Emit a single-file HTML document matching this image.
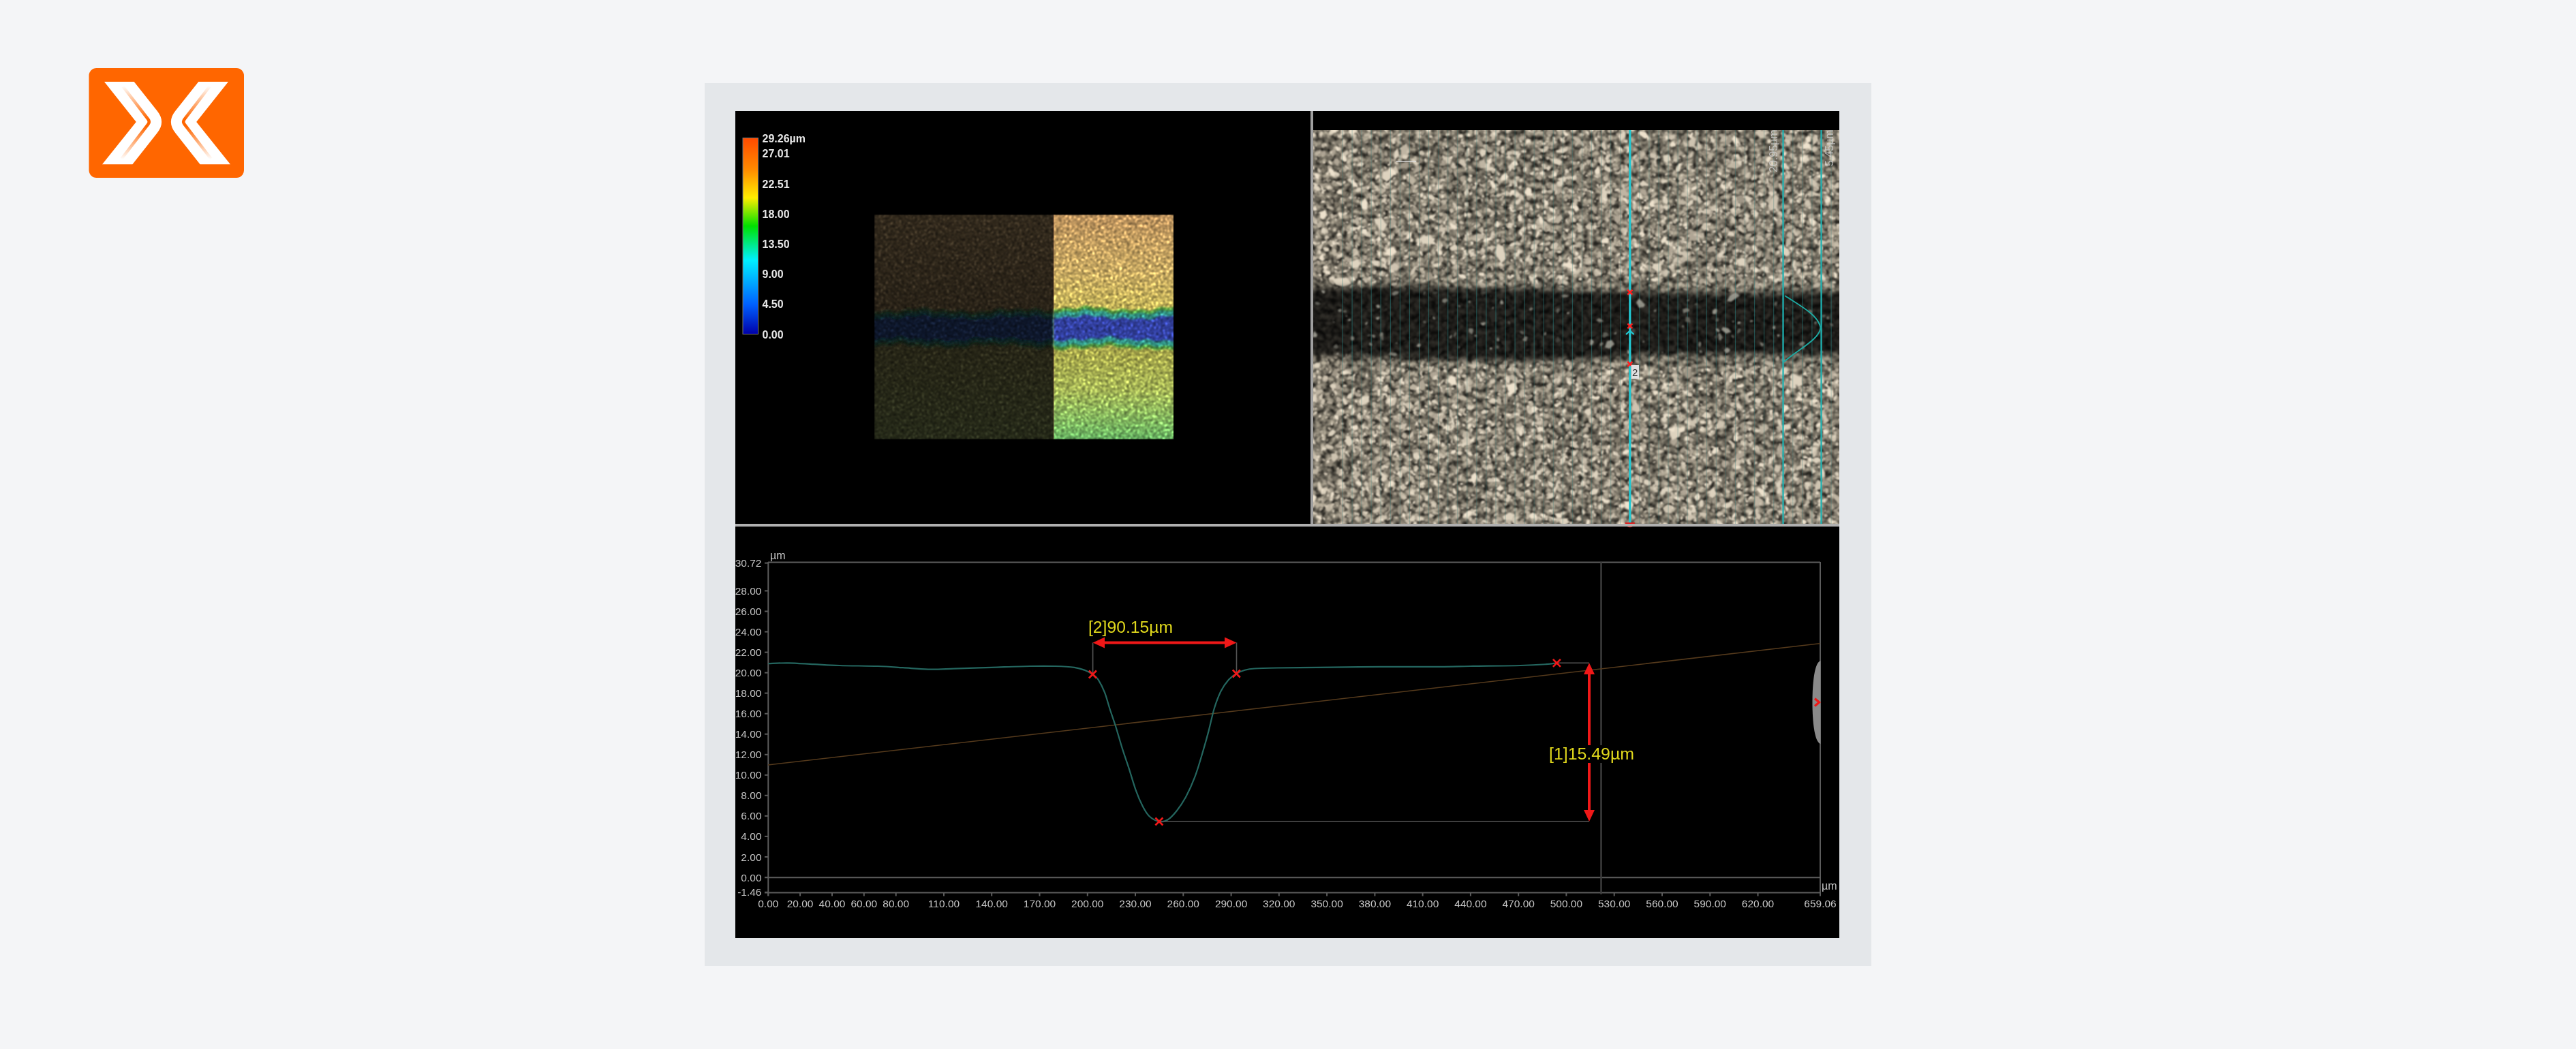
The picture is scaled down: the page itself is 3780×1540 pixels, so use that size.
<!DOCTYPE html>
<html><head><meta charset="utf-8"><title>profile</title>
<style>
html,body{margin:0;padding:0;background:#f4f5f7;width:3780px;height:1540px;overflow:hidden}
svg{display:block}
</style></head><body>
<svg width="3780" height="1540" viewBox="0 0 3780 1540" style="font-family:'Liberation Sans', sans-serif;will-change:transform">
<defs>

<linearGradient id="cbar" x1="0" y1="0" x2="0" y2="1">
<stop offset="0" stop-color="#ff4a00"/>
<stop offset="0.16" stop-color="#ff8a00"/>
<stop offset="0.305" stop-color="#ffee00"/>
<stop offset="0.449" stop-color="#00e000"/>
<stop offset="0.623" stop-color="#00f0ff"/>
<stop offset="0.849" stop-color="#0060ff"/>
<stop offset="1" stop-color="#0000a8"/>
</linearGradient>
<linearGradient id="stripe" gradientUnits="userSpaceOnUse" x1="0" y1="126" x2="0" y2="234">
<stop offset="0" stop-color="#ff6600" stop-opacity="0"/>
<stop offset="0.45" stop-color="#ff6600" stop-opacity="1"/>
<stop offset="0.55" stop-color="#ff6600" stop-opacity="1"/>
<stop offset="1" stop-color="#ff6600" stop-opacity="0"/>
</linearGradient>
<linearGradient id="hmL" gradientUnits="userSpaceOnUse" x1="0" y1="315" x2="0" y2="645">
<stop offset="0" stop-color="rgb(50,41,28)"/>
<stop offset="0.42" stop-color="rgb(41,34,23)"/>
<stop offset="0.62" stop-color="rgb(38,37,22)"/>
<stop offset="1" stop-color="rgb(37,41,24)"/>
</linearGradient>
<linearGradient id="hmR" gradientUnits="userSpaceOnUse" x1="0" y1="315" x2="0" y2="645">
<stop offset="0" stop-color="rgb(192,149,95)"/>
<stop offset="0.25" stop-color="rgb(203,172,100)"/>
<stop offset="0.42" stop-color="rgb(199,183,90)"/>
<stop offset="0.62" stop-color="rgb(167,167,75)"/>
<stop offset="0.78" stop-color="rgb(169,185,88)"/>
<stop offset="1" stop-color="rgb(106,183,100)"/>
</linearGradient>
<linearGradient id="band" gradientUnits="userSpaceOnUse" x1="0" y1="400" x2="0" y2="550">
<stop offset="0" stop-color="#000" stop-opacity="0"/>
<stop offset="0.10" stop-color="#000" stop-opacity="0.25"/>
<stop offset="0.18" stop-color="#000" stop-opacity="0.75"/>
<stop offset="0.82" stop-color="#000" stop-opacity="0.75"/>
<stop offset="0.92" stop-color="#000" stop-opacity="0.25"/>
<stop offset="1" stop-color="#000" stop-opacity="0"/>
</linearGradient>
<linearGradient id="bandline" gradientUnits="userSpaceOnUse" x1="0" y1="405" x2="0" y2="545">
<stop offset="0" stop-color="#2a8a8a" stop-opacity="0"/>
<stop offset="0.2" stop-color="#2a8a8a" stop-opacity="0.35"/>
<stop offset="0.8" stop-color="#2a8a8a" stop-opacity="0.35"/>
<stop offset="1" stop-color="#2a8a8a" stop-opacity="0"/>
</linearGradient>
<filter id="grain" filterUnits="userSpaceOnUse" x="1927" y="191" width="772" height="578" color-interpolation-filters="sRGB">
<feTurbulence type="fractalNoise" baseFrequency="0.13" numOctaves="2" seed="11" result="n"/>
<feColorMatrix in="n" type="matrix" values="2.0 0 0 0 -0.50  2.0 0 0 0 -0.50  2.0 0 0 0 -0.50  0 0 0 0 1" result="g"/>
<feGaussianBlur in="g" stdDeviation="1.1" result="gb"/>
<feColorMatrix in="gb" type="matrix" values="0.58 0 0 0 0.145  0 0.55 0 0 0.138  0 0 0.49 0 0.12  0 0 0 0 1" result="c"/>
<feTurbulence type="fractalNoise" baseFrequency="0.015" numOctaves="2" seed="4" result="lo"/>
<feColorMatrix in="lo" type="matrix" values="0.6 0 0 0 0.72  0.6 0 0 0 0.72  0.6 0 0 0 0.72  0 0 0 0 1" result="lom"/>
<feComposite in="c" in2="lom" operator="arithmetic" k1="1" k2="0" k3="0" k4="0"/>
</filter>
<filter id="pblur" filterUnits="userSpaceOnUse" x="1927" y="191" width="772" height="578">
<feGaussianBlur stdDeviation="0.85"/>
</filter>
<filter id="hgrain" filterUnits="userSpaceOnUse" x="1283" y="315" width="440" height="330" color-interpolation-filters="sRGB">
<feTurbulence type="fractalNoise" baseFrequency="0.26" numOctaves="3" seed="5" result="n"/>
<feColorMatrix in="n" type="matrix" values="1.1 0 0 0 0.2  1.1 0 0 0 0.2  1.1 0 0 0 0.2  0 0 0 0 1" result="g"/>
<feGaussianBlur in="g" stdDeviation="0.9" result="gb"/>
<feComposite in="SourceGraphic" in2="gb" operator="arithmetic" k1="1.2" k2="0" k3="0" k4="0" result="base"/>
<feTurbulence type="fractalNoise" baseFrequency="0.3" numOctaves="2" seed="9" result="n2"/>
<feColorMatrix in="n2" type="matrix" values="6 0 0 0 -3.5  6 0 0 0 -3.5  6 0 0 0 -3.5  0 0 0 0 1" result="sp"/>
<feGaussianBlur in="sp" stdDeviation="0.9" result="spb"/>
<feComposite in="SourceGraphic" in2="spb" operator="arithmetic" k1="0.9" k2="0" k3="0.05" k4="0" result="spc"/>
<feComposite in="base" in2="spc" operator="arithmetic" k1="0" k2="1" k3="1" k4="0"/>
</filter>
<filter id="bblur" x="-5%" y="-50%" width="110%" height="200%">
<feGaussianBlur stdDeviation="4.5"/>
</filter>
<filter id="hblur" x="-5%" y="-50%" width="110%" height="200%">
<feGaussianBlur stdDeviation="1.6"/>
</filter>
</defs>

<rect x="130.5" y="100" width="227.5" height="161" rx="11" ry="11" fill="#ff6600"/>
<g><path d="M153,120 L196.7,120 L230.8,163 Q243.5,179 230.8,195 L194.4,241.2 L150,241.2 L199.8,179 Z" fill="#ffffff"/><path d="M180.5,127 L217.4,175.05 A6,6 0 0 1 217.4,182.35 L178.5,233" fill="none" stroke="url(#stripe)" stroke-width="4.5"/></g>
<g transform="translate(488,0) scale(-1,1)"><path d="M153,120 L196.7,120 L230.8,163 Q243.5,179 230.8,195 L194.4,241.2 L150,241.2 L199.8,179 Z" fill="#ffffff"/><path d="M180.5,127 L217.4,175.05 A6,6 0 0 1 217.4,182.35 L178.5,233" fill="none" stroke="url(#stripe)" stroke-width="4.5"/></g>
<rect x="1034" y="122" width="1712" height="1296" fill="#e4e7ea"/>
<rect x="1079" y="163" width="1620" height="1214" fill="#000"/>
<clipPath id="blkclip"><rect x="1079" y="163" width="1620" height="1214"/></clipPath>
<clipPath id="hmclip"><rect x="1283" y="315" width="439" height="330"/></clipPath>
<g filter="url(#hgrain)"><g clip-path="url(#hmclip)">
<rect x="1283" y="315" width="263" height="330" fill="url(#hmL)"/>
<rect x="1546" y="315" width="176" height="330" fill="url(#hmR)"/>
<path d="M1270.0,457.2 L1274.0,456.2 L1278.0,456.1 L1282.0,456.9 L1286.0,457.8 L1290.0,457.9 L1294.0,456.8 L1298.0,455.3 L1302.0,454.5 L1306.0,455.0 L1310.0,456.4 L1314.0,457.6 L1318.0,457.6 L1322.0,456.2 L1326.0,454.4 L1330.0,453.1 L1334.0,452.9 L1338.0,453.5 L1342.0,453.9 L1346.0,453.3 L1350.0,451.9 L1354.0,450.6 L1358.0,450.4 L1362.0,451.7 L1366.0,453.7 L1370.0,455.2 L1374.0,455.6 L1378.0,454.8 L1382.0,453.9 L1386.0,453.9 L1390.0,454.9 L1394.0,456.3 L1398.0,456.9 L1402.0,456.5 L1406.0,455.3 L1410.0,454.4 L1414.0,454.9 L1418.0,456.5 L1422.0,458.3 L1426.0,459.3 L1430.0,458.9 L1434.0,457.6 L1438.0,456.5 L1442.0,456.2 L1446.0,456.8 L1450.0,457.3 L1454.0,456.7 L1458.0,455.0 L1462.0,453.0 L1466.0,451.7 L1470.0,451.9 L1474.0,453.2 L1478.0,454.4 L1482.0,454.7 L1486.0,453.9 L1490.0,452.7 L1494.0,452.1 L1498.0,452.7 L1502.0,453.9 L1506.0,454.6 L1510.0,454.3 L1514.0,453.0 L1518.0,451.8 L1522.0,451.7 L1526.0,453.0 L1530.0,455.1 L1534.0,456.7 L1538.0,457.3 L1542.0,456.8 L1546.0,456.2 L1546.0,509.5 L1542.0,508.8 L1538.0,509.3 L1534.0,510.9 L1530.0,512.8 L1526.0,513.7 L1522.0,513.2 L1518.0,511.7 L1514.0,510.2 L1510.0,509.7 L1506.0,510.0 L1502.0,510.5 L1498.0,510.2 L1494.0,508.8 L1490.0,507.0 L1486.0,505.9 L1482.0,506.1 L1478.0,507.5 L1474.0,508.8 L1470.0,509.2 L1466.0,508.3 L1462.0,506.9 L1458.0,506.0 L1454.0,506.2 L1450.0,507.3 L1446.0,508.1 L1442.0,508.0 L1438.0,507.0 L1434.0,505.9 L1430.0,505.9 L1426.0,507.3 L1422.0,509.5 L1418.0,511.4 L1414.0,511.9 L1410.0,511.4 L1406.0,510.5 L1402.0,510.4 L1398.0,511.2 L1394.0,512.3 L1390.0,512.7 L1386.0,511.8 L1382.0,510.1 L1378.0,508.7 L1374.0,508.4 L1370.0,509.4 L1366.0,510.8 L1362.0,511.5 L1358.0,510.9 L1354.0,509.5 L1350.0,508.2 L1346.0,507.8 L1342.0,508.4 L1338.0,509.0 L1334.0,508.6 L1330.0,507.2 L1326.0,505.3 L1322.0,504.1 L1318.0,504.5 L1314.0,506.0 L1310.0,507.7 L1306.0,508.5 L1302.0,508.3 L1298.0,507.6 L1294.0,507.5 L1290.0,508.4 L1286.0,510.0 L1282.0,511.1 L1278.0,511.1 L1274.0,509.9 L1270.0,508.6 Z" fill="rgb(22,34,22)" filter="url(#hblur)"/>
<path d="M1270.0,462.2 L1274.0,461.2 L1278.0,461.1 L1282.0,461.9 L1286.0,462.8 L1290.0,462.9 L1294.0,461.8 L1298.0,460.3 L1302.0,459.5 L1306.0,460.0 L1310.0,461.4 L1314.0,462.6 L1318.0,462.6 L1322.0,461.2 L1326.0,459.4 L1330.0,458.1 L1334.0,457.9 L1338.0,458.5 L1342.0,458.9 L1346.0,458.3 L1350.0,456.9 L1354.0,455.6 L1358.0,455.4 L1362.0,456.7 L1366.0,458.7 L1370.0,460.2 L1374.0,460.6 L1378.0,459.8 L1382.0,458.9 L1386.0,458.9 L1390.0,459.9 L1394.0,461.3 L1398.0,461.9 L1402.0,461.5 L1406.0,460.3 L1410.0,459.4 L1414.0,459.9 L1418.0,461.5 L1422.0,463.3 L1426.0,464.3 L1430.0,463.9 L1434.0,462.6 L1438.0,461.5 L1442.0,461.2 L1446.0,461.8 L1450.0,462.3 L1454.0,461.7 L1458.0,460.0 L1462.0,458.0 L1466.0,456.7 L1470.0,456.9 L1474.0,458.2 L1478.0,459.4 L1482.0,459.7 L1486.0,458.9 L1490.0,457.7 L1494.0,457.1 L1498.0,457.7 L1502.0,458.9 L1506.0,459.6 L1510.0,459.3 L1514.0,458.0 L1518.0,456.8 L1522.0,456.7 L1526.0,458.0 L1530.0,460.1 L1534.0,461.7 L1538.0,462.3 L1542.0,461.8 L1546.0,461.2 L1546.0,504.5 L1542.0,503.8 L1538.0,504.3 L1534.0,505.9 L1530.0,507.8 L1526.0,508.7 L1522.0,508.2 L1518.0,506.7 L1514.0,505.2 L1510.0,504.7 L1506.0,505.0 L1502.0,505.5 L1498.0,505.2 L1494.0,503.8 L1490.0,502.0 L1486.0,500.9 L1482.0,501.1 L1478.0,502.5 L1474.0,503.8 L1470.0,504.2 L1466.0,503.3 L1462.0,501.9 L1458.0,501.0 L1454.0,501.2 L1450.0,502.3 L1446.0,503.1 L1442.0,503.0 L1438.0,502.0 L1434.0,500.9 L1430.0,500.9 L1426.0,502.3 L1422.0,504.5 L1418.0,506.4 L1414.0,506.9 L1410.0,506.4 L1406.0,505.5 L1402.0,505.4 L1398.0,506.2 L1394.0,507.3 L1390.0,507.7 L1386.0,506.8 L1382.0,505.1 L1378.0,503.7 L1374.0,503.4 L1370.0,504.4 L1366.0,505.8 L1362.0,506.5 L1358.0,505.9 L1354.0,504.5 L1350.0,503.2 L1346.0,502.8 L1342.0,503.4 L1338.0,504.0 L1334.0,503.6 L1330.0,502.2 L1326.0,500.3 L1322.0,499.1 L1318.0,499.5 L1314.0,501.0 L1310.0,502.7 L1306.0,503.5 L1302.0,503.3 L1298.0,502.6 L1294.0,502.5 L1290.0,503.4 L1286.0,505.0 L1282.0,506.1 L1278.0,506.1 L1274.0,504.9 L1270.0,503.6 Z" fill="rgb(14,36,32)" filter="url(#hblur)"/>
<path d="M1270.0,468.2 L1274.0,467.2 L1278.0,467.1 L1282.0,467.9 L1286.0,468.8 L1290.0,468.9 L1294.0,467.8 L1298.0,466.3 L1302.0,465.5 L1306.0,466.0 L1310.0,467.4 L1314.0,468.6 L1318.0,468.6 L1322.0,467.2 L1326.0,465.4 L1330.0,464.1 L1334.0,463.9 L1338.0,464.5 L1342.0,464.9 L1346.0,464.3 L1350.0,462.9 L1354.0,461.6 L1358.0,461.4 L1362.0,462.7 L1366.0,464.7 L1370.0,466.2 L1374.0,466.6 L1378.0,465.8 L1382.0,464.9 L1386.0,464.9 L1390.0,465.9 L1394.0,467.3 L1398.0,467.9 L1402.0,467.5 L1406.0,466.3 L1410.0,465.4 L1414.0,465.9 L1418.0,467.5 L1422.0,469.3 L1426.0,470.3 L1430.0,469.9 L1434.0,468.6 L1438.0,467.5 L1442.0,467.2 L1446.0,467.8 L1450.0,468.3 L1454.0,467.7 L1458.0,466.0 L1462.0,464.0 L1466.0,462.7 L1470.0,462.9 L1474.0,464.2 L1478.0,465.4 L1482.0,465.7 L1486.0,464.9 L1490.0,463.7 L1494.0,463.1 L1498.0,463.7 L1502.0,464.9 L1506.0,465.6 L1510.0,465.3 L1514.0,464.0 L1518.0,462.8 L1522.0,462.7 L1526.0,464.0 L1530.0,466.1 L1534.0,467.7 L1538.0,468.3 L1542.0,467.8 L1546.0,467.2 L1546.0,498.5 L1542.0,497.8 L1538.0,498.3 L1534.0,499.9 L1530.0,501.8 L1526.0,502.7 L1522.0,502.2 L1518.0,500.7 L1514.0,499.2 L1510.0,498.7 L1506.0,499.0 L1502.0,499.5 L1498.0,499.2 L1494.0,497.8 L1490.0,496.0 L1486.0,494.9 L1482.0,495.1 L1478.0,496.5 L1474.0,497.8 L1470.0,498.2 L1466.0,497.3 L1462.0,495.9 L1458.0,495.0 L1454.0,495.2 L1450.0,496.3 L1446.0,497.1 L1442.0,497.0 L1438.0,496.0 L1434.0,494.9 L1430.0,494.9 L1426.0,496.3 L1422.0,498.5 L1418.0,500.4 L1414.0,500.9 L1410.0,500.4 L1406.0,499.5 L1402.0,499.4 L1398.0,500.2 L1394.0,501.3 L1390.0,501.7 L1386.0,500.8 L1382.0,499.1 L1378.0,497.7 L1374.0,497.4 L1370.0,498.4 L1366.0,499.8 L1362.0,500.5 L1358.0,499.9 L1354.0,498.5 L1350.0,497.2 L1346.0,496.8 L1342.0,497.4 L1338.0,498.0 L1334.0,497.6 L1330.0,496.2 L1326.0,494.3 L1322.0,493.1 L1318.0,493.5 L1314.0,495.0 L1310.0,496.7 L1306.0,497.5 L1302.0,497.3 L1298.0,496.6 L1294.0,496.5 L1290.0,497.4 L1286.0,499.0 L1282.0,500.1 L1278.0,500.1 L1274.0,498.9 L1270.0,497.6 Z" fill="rgb(10,25,44)" filter="url(#hblur)"/>
<path d="M1546.0,453.6 L1550.0,454.4 L1554.0,454.2 L1558.1,453.1 L1562.1,451.8 L1566.1,451.4 L1570.1,452.0 L1574.1,453.1 L1578.2,453.4 L1582.2,452.4 L1586.2,450.5 L1590.2,448.8 L1594.3,448.4 L1598.3,449.4 L1602.3,450.9 L1606.3,451.9 L1610.3,451.9 L1614.4,451.3 L1618.4,451.1 L1622.4,452.1 L1626.4,453.9 L1630.4,455.6 L1634.5,456.2 L1638.5,455.3 L1642.5,453.8 L1646.5,452.9 L1650.6,453.2 L1654.6,454.4 L1658.6,455.7 L1662.6,455.9 L1666.6,455.1 L1670.7,454.0 L1674.7,453.7 L1678.7,454.5 L1682.7,455.8 L1686.7,456.5 L1690.8,455.8 L1694.8,453.8 L1698.8,451.7 L1702.8,450.5 L1706.9,450.6 L1710.9,451.4 L1714.9,451.8 L1718.9,451.2 L1722.9,450.0 L1727.0,449.1 L1731.0,449.5 L1735.0,451.0 L1735.0,508.5 L1731.0,510.5 L1727.0,512.7 L1722.9,513.9 L1718.9,513.7 L1714.9,512.7 L1710.9,512.2 L1706.9,512.6 L1702.8,513.7 L1698.8,514.5 L1694.8,514.2 L1690.8,512.8 L1686.7,511.1 L1682.7,510.5 L1678.7,511.1 L1674.7,512.6 L1670.7,513.7 L1666.6,513.5 L1662.6,512.2 L1658.6,510.7 L1654.6,509.9 L1650.6,510.2 L1646.5,510.8 L1642.5,510.8 L1638.5,509.7 L1634.5,507.8 L1630.4,506.3 L1626.4,506.2 L1622.4,507.6 L1618.4,509.4 L1614.4,510.5 L1610.3,510.5 L1606.3,509.7 L1602.3,509.3 L1598.3,509.9 L1594.3,511.4 L1590.2,512.7 L1586.2,512.9 L1582.2,512.0 L1578.2,510.6 L1574.1,510.0 L1570.1,510.7 L1566.1,512.5 L1562.1,514.1 L1558.1,514.7 L1554.0,514.0 L1550.0,513.0 L1546.0,512.6 Z" fill="rgb(80,150,60)" filter="url(#hblur)"/>
<path d="M1546.0,458.6 L1550.0,459.4 L1554.0,459.2 L1558.1,458.1 L1562.1,456.8 L1566.1,456.4 L1570.1,457.0 L1574.1,458.1 L1578.2,458.4 L1582.2,457.4 L1586.2,455.5 L1590.2,453.8 L1594.3,453.4 L1598.3,454.4 L1602.3,455.9 L1606.3,456.9 L1610.3,456.9 L1614.4,456.3 L1618.4,456.1 L1622.4,457.1 L1626.4,458.9 L1630.4,460.6 L1634.5,461.2 L1638.5,460.3 L1642.5,458.8 L1646.5,457.9 L1650.6,458.2 L1654.6,459.4 L1658.6,460.7 L1662.6,460.9 L1666.6,460.1 L1670.7,459.0 L1674.7,458.7 L1678.7,459.5 L1682.7,460.8 L1686.7,461.5 L1690.8,460.8 L1694.8,458.8 L1698.8,456.7 L1702.8,455.5 L1706.9,455.6 L1710.9,456.4 L1714.9,456.8 L1718.9,456.2 L1722.9,455.0 L1727.0,454.1 L1731.0,454.5 L1735.0,456.0 L1735.0,503.5 L1731.0,505.5 L1727.0,507.7 L1722.9,508.9 L1718.9,508.7 L1714.9,507.7 L1710.9,507.2 L1706.9,507.6 L1702.8,508.7 L1698.8,509.5 L1694.8,509.2 L1690.8,507.8 L1686.7,506.1 L1682.7,505.5 L1678.7,506.1 L1674.7,507.6 L1670.7,508.7 L1666.6,508.5 L1662.6,507.2 L1658.6,505.7 L1654.6,504.9 L1650.6,505.2 L1646.5,505.8 L1642.5,505.8 L1638.5,504.7 L1634.5,502.8 L1630.4,501.3 L1626.4,501.2 L1622.4,502.6 L1618.4,504.4 L1614.4,505.5 L1610.3,505.5 L1606.3,504.7 L1602.3,504.3 L1598.3,504.9 L1594.3,506.4 L1590.2,507.7 L1586.2,507.9 L1582.2,507.0 L1578.2,505.6 L1574.1,505.0 L1570.1,505.7 L1566.1,507.5 L1562.1,509.1 L1558.1,509.7 L1554.0,509.0 L1550.0,508.0 L1546.0,507.6 Z" fill="rgb(50,150,135)" filter="url(#hblur)"/>
<path d="M1546.0,466.6 L1550.0,467.4 L1554.0,467.2 L1558.1,466.1 L1562.1,464.8 L1566.1,464.4 L1570.1,465.0 L1574.1,466.1 L1578.2,466.4 L1582.2,465.4 L1586.2,463.5 L1590.2,461.8 L1594.3,461.4 L1598.3,462.4 L1602.3,463.9 L1606.3,464.9 L1610.3,464.9 L1614.4,464.3 L1618.4,464.1 L1622.4,465.1 L1626.4,466.9 L1630.4,468.6 L1634.5,469.2 L1638.5,468.3 L1642.5,466.8 L1646.5,465.9 L1650.6,466.2 L1654.6,467.4 L1658.6,468.7 L1662.6,468.9 L1666.6,468.1 L1670.7,467.0 L1674.7,466.7 L1678.7,467.5 L1682.7,468.8 L1686.7,469.5 L1690.8,468.8 L1694.8,466.8 L1698.8,464.7 L1702.8,463.5 L1706.9,463.6 L1710.9,464.4 L1714.9,464.8 L1718.9,464.2 L1722.9,463.0 L1727.0,462.1 L1731.0,462.5 L1735.0,464.0 L1735.0,495.5 L1731.0,497.5 L1727.0,499.7 L1722.9,500.9 L1718.9,500.7 L1714.9,499.7 L1710.9,499.2 L1706.9,499.6 L1702.8,500.7 L1698.8,501.5 L1694.8,501.2 L1690.8,499.8 L1686.7,498.1 L1682.7,497.5 L1678.7,498.1 L1674.7,499.6 L1670.7,500.7 L1666.6,500.5 L1662.6,499.2 L1658.6,497.7 L1654.6,496.9 L1650.6,497.2 L1646.5,497.8 L1642.5,497.8 L1638.5,496.7 L1634.5,494.8 L1630.4,493.3 L1626.4,493.2 L1622.4,494.6 L1618.4,496.4 L1614.4,497.5 L1610.3,497.5 L1606.3,496.7 L1602.3,496.3 L1598.3,496.9 L1594.3,498.4 L1590.2,499.7 L1586.2,499.9 L1582.2,499.0 L1578.2,497.6 L1574.1,497.0 L1570.1,497.7 L1566.1,499.5 L1562.1,501.1 L1558.1,501.7 L1554.0,501.0 L1550.0,500.0 L1546.0,499.6 Z" fill="rgb(48,64,160)" filter="url(#hblur)"/>
</g></g>
<line x1="1546.5" y1="315" x2="1546.5" y2="645" stroke="#c07050" stroke-opacity="0.35" stroke-width="1"/>
<rect x="1090" y="202.5" width="22.5" height="288" fill="url(#cbar)" stroke="#777" stroke-width="1"/>
<text x="1118.5" y="209.1" font-size="16" font-weight="bold" fill="#e8e8e8">29.26µm</text>
<text x="1118.5" y="231.3" font-size="16" font-weight="bold" fill="#e8e8e8">27.01</text>
<text x="1118.5" y="275.6" font-size="16" font-weight="bold" fill="#e8e8e8">22.51</text>
<text x="1118.5" y="319.8" font-size="16" font-weight="bold" fill="#e8e8e8">18.00</text>
<text x="1118.5" y="364.3" font-size="16" font-weight="bold" fill="#e8e8e8">13.50</text>
<text x="1118.5" y="407.8" font-size="16" font-weight="bold" fill="#e8e8e8">9.00</text>
<text x="1118.5" y="452.4" font-size="16" font-weight="bold" fill="#e8e8e8">4.50</text>
<text x="1118.5" y="496.8" font-size="16" font-weight="bold" fill="#e8e8e8">0.00</text>
<clipPath id="micclip"><rect x="1927" y="191" width="772" height="578"/></clipPath>
<rect x="1927" y="191" width="772" height="578" fill="#888" filter="url(#grain)"/>
<g clip-path="url(#micclip)"><g filter="url(#pblur)"><path fill="rgb(129,121,107)" d="M2030 293l-3 4l-3 1l-2 -3l4 -4zM2552 658l3 -1l4 1l-1 4l-3 0zM2612 663l-2 -1l-1 -2l2 -1l2 1zM2024 495l-5 0l-6 -6l5 -4l6 5zM2405 432l-4 -8l2 -6l5 -1l3 7zM1932 700l-1 -3l3 -3l4 1l-3 6zM1975 352l-4 2l-4 -3l1 -2l4 1zM1981 703l4 2l0 4l-2 1l-3 -3zM2194 207l-1 -4l3 -5l3 -1l-2 7zM2701 248l-2 2l-4 0l0 -1l4 -2zM2170 682l1 1l0 2l-1 0l-1 -1zM2186 291l0 -4l4 -4l3 1l-4 6zM2347 435l1 1l-1 2l-1 1l-1 -3zM2673 331l-5 6l-13 -2l2 -8l8 -3zM2308 646l3 2l0 4l-3 2l-3 -4zM1983 747l-3 0l-2 -1l1 -3l3 1zM2118 416l0 -2l3 -2l1 3l-2 1zM2101 653l-1 1l-2 0l0 -1l2 -1zM1958 297l3 0l4 4l-3 3l-3 0zM2401 462l-3 3l-2 -2l-1 -3l5 0zM2367 442l-2 0l0 -3l1 1l1 1zM2695 371l0 -3l3 -1l1 3l-2 2zM2374 686l3 5l1 3l-4 2l-3 -6zM2053 293l-3 -3l1 -4l4 0l0 4zM2196 742l1 -2l2 -2l2 2l-2 2zM1997 676l-2 -2l2 -4l4 2l-2 3zM2193 349l-1 4l-3 3l-1 -2l1 -3zM2518 562l4 -1l2 4l-2 2l-3 -1zM2119 586l-3 2l-4 -1l1 -3l3 0zM2142 560l3 -2l3 1l0 3l-6 0zM2327 610l1 -6l5 -3l2 4l-3 3zM2438 353l-4 -2l0 -4l3 -1l1 3zM2066 453l2 1l1 4l-4 3l-2 -5zM2245 318l-1 0l-1 -3l2 -1l1 2zM2458 752l1 -1l3 0l0 1l-1 1zM2072 575l1 2l0 2l-1 0l-1 -2zM2324 710l-1 -1l1 -2l1 0l0 2zM2470 578l-1 2l-2 2l-2 -1l2 -3zM2267 567l1 3l-4 5l-3 -5l1 -3zM1980 716l-1 3l-4 0l-1 -2l3 -1zM2495 727l1 -1l2 1l-1 2l-2 0zM2357 674l-4 -2l-1 -4l3 0l2 2zM2442 463l2 3l-1 4l-3 0l-2 -5zM2306 711l1 0l2 2l-1 2l-2 -2zM2509 686l-1 8l-3 4l-3 -3l0 -4zM1987 361l0 2l-4 2l-2 -1l4 -3zM2114 362l-2 -3l1 -3l3 1l0 4zM2548 241l-1 0l-1 -1l0 -1l2 0zM2178 268l4 0l5 5l-4 4l-5 -4zM2403 463l-1 -1l1 -2l1 0l0 1zM2464 280l3 1l1 2l-2 2l-3 -3zM2271 764l-4 -1l1 -4l1 0l3 3zM2470 220l-2 1l-1 -1l1 -1l1 0zM2271 378l-1 -3l2 -4l3 1l-1 6zM2688 229l3 3l-1 8l-2 -1l-2 -6zM2366 552l1 4l-8 5l-3 -6l3 -3zM2282 657l2 1l0 2l-2 2l-1 -3zM2239 315l-2 -9l1 -6l7 2l0 5zM2028 419l0 -2l3 0l1 1l-3 2zM1948 336l3 -1l3 2l-2 2l-2 -1zM2106 532l-1 -3l7 -4l0 4l-4 3zM2598 569l-2 3l-2 -1l0 -2l2 -1zM2157 393l4 -3l5 3l-1 1l-5 3zM2368 649l3 -5l6 0l0 4l-4 2zM2642 489l-1 -1l1 -2l2 -1l-1 3zM2134 255l-2 -3l2 -2l2 2l0 2zM2558 336l-5 -1l-1 -4l2 0l3 2zM2088 649l2 2l-2 5l-3 -2l1 -3zM2486 708l1 0l1 1l-1 1l-1 -1zM2382 333l-2 -1l-1 -1l0 -3l3 2zM1971 218l-2 2l-2 0l-1 -5l4 -1zM2330 743l2 -3l6 3l-2 4l-4 0zM2387 518l-2 2l-3 -1l0 -2l3 -1zM2596 333l0 -5l3 -1l2 4l-3 2zM2487 652l-2 0l-1 -2l2 -1l1 2zM2052 411l-1 2l-2 3l-1 -2l0 -2zM2526 454l0 2l-1 2l-3 -1l2 -3zM2472 672l2 0l3 3l-3 1l-1 -1zM2075 629l-2 -3l2 -2l2 0l0 3zM2113 445l0 -1l5 -1l0 3l-3 2zM2226 560l0 -1l2 0l1 1l-1 1zM2217 519l1 3l-1 4l-3 1l0 -4zM2504 398l-2 -2l3 -4l2 2l0 4zM2628 738l1 -1l1 1l0 1l-2 0zM2393 211l2 0l2 3l-2 1l-2 -3zM2397 711l-3 0l-1 -3l1 -2l3 3zM2247 532l-3 2l-4 -3l2 -3l3 1zM1925 242l0 2l0 2l-3 -1l2 -2zM2302 747l-4 0l-4 -2l1 -2l5 1zM2463 201l1 2l-2 0l-1 -1l1 -2zM2469 349l2 -2l3 1l1 2l-4 1zM2624 523l-1 2l-4 0l0 -3l3 0zM1988 603l-2 -2l0 -5l1 0l2 4zM2117 346l-3 1l-3 -4l3 -1l3 2zM2625 341l3 0l2 1l-2 2l-2 -1zM2304 555l1 -2l2 0l0 2l-2 1zM2229 647l-2 2l-5 1l-2 -3l7 -2zM2392 656l-6 2l-5 -3l0 -5l8 2zM2481 306l-3 0l-4 -5l4 0l3 2zM2589 281l2 0l0 4l-2 1l-2 -2zM2649 217l0 -2l3 0l0 2l-2 1zM2315 415l3 0l3 1l-1 2l-4 0zM2201 339l-1 -1l1 -3l1 1l0 2zM2204 316l4 2l2 1l-3 3l-2 -2zM2375 649l0 5l-2 2l-2 -1l0 -4zM2217 424l-4 -4l5 -10l7 -2l0 10zM1943 255l-5 -4l1 -4l3 -1l3 4zM2567 325l3 2l1 4l-4 1l-2 -3zM2031 705l2 -1l4 1l1 2l-5 1zM2681 534l1 1l-3 3l-1 -2l1 -2zM2245 771l0 -2l4 -2l1 0l-2 4zM2480 301l2 2l-1 4l-1 1l-2 -3zM2371 751l1 3l-2 6l-3 0l1 -5zM2017 300l2 3l-2 2l-3 1l0 -5zM2588 594l-2 1l-3 -3l0 -1l3 -1zM2205 275l0 1l-2 1l-1 -1l1 -1zM2286 230l-3 -1l1 -4l1 0l1 3zM2552 750l-3 -2l1 -5l4 0l0 5zM2670 225l-3 3l-4 -2l-1 -5l7 0zM2186 695l-1 0l-2 -4l2 0l2 2zM2410 584l-1 -4l2 -3l3 2l-2 5zM2201 530l1 -2l2 -1l1 2l-3 2zM2703 730l-1 5l-4 5l-3 -3l3 -5zM2541 415l-1 5l-4 2l-2 -3l3 -4zM2139 280l-1 1l-4 -1l0 -2l3 -1zM1979 563l-2 -2l5 -4l2 1l-2 4zM2369 684l0 2l-1 2l-1 -1l0 -2zM2145 396l1 -1l2 0l1 1l-2 1zM2690 537l2 -1l5 2l0 2l-4 1zM2318 258l0 2l-3 2l-2 -1l2 -2zM1967 284l4 -4l6 2l-2 4l-5 2zM2254 246l0 4l-3 2l-2 -2l1 -3zM2547 214l0 3l-2 1l-1 -1l1 -2zM1984 247l2 3l0 1l-3 1l0 -4zM1967 193l0 3l-2 2l-2 0l2 -4zM2472 695l-1 1l-2 -1l1 -1l1 0zM1975 548l-1 -2l2 -3l2 2l0 1zM2477 276l-3 0l-2 -2l1 -2l3 1zM2237 616l0 -1l1 -1l1 1l-1 1zM1992 404l-1 0l-2 -4l1 -1l3 2zM2041 356l2 7l-2 5l-6 1l1 -10zM2290 254l-2 -3l2 -6l4 -1l0 7zM2166 541l3 0l2 2l-1 1l-3 0zM2217 408l-1 0l-1 -1l0 -1l2 0zM2206 422l-6 -2l-5 -5l3 -4l5 3zM2096 425l1 -2l2 0l0 2l-2 1zM2346 476l-2 3l-6 1l-2 -3l5 -3zM2675 730l-1 4l-2 2l-4 -2l2 -2zM2121 262l2 -1l3 1l1 2l-5 0zM2291 255l1 -3l2 -1l1 2l-2 1zM2344 418l2 1l-1 2l-1 0l-1 -2zM2154 559l-1 1l-2 0l0 -2l2 -1zM2000 646l1 -2l2 -1l2 2l-3 2zM2354 233l4 -1l2 2l-1 4l-5 -1zM2009 665l3 0l2 3l-2 2l-4 -2zM2105 763l-3 4l-6 -2l-2 -4l6 -2zM1955 577l2 -8l2 -5l6 4l-2 9zM2320 756l1 1l-2 3l-2 0l0 -3zM2077 249l2 -5l6 -1l2 3l-7 5zM2399 671l0 -2l6 1l-1 2l-3 1zM1986 600l-2 1l-2 -1l1 -2l2 0zM2230 297l4 3l-2 7l-4 1l-2 -7zM1999 297l1 1l-2 3l-1 -1l0 -3zM2512 562l0 4l-3 1l-3 0l3 -5zM2226 289l1 3l-1 3l-3 -1l1 -4zM2218 654l1 2l-1 3l-3 -1l1 -3zM2212 666l3 3l-2 5l-2 0l-1 -5zM2301 241l-2 -1l0 -2l2 -1l1 2zM2371 329l0 1l-1 2l-3 -2l1 -1zM2314 533l-2 -2l-1 -2l3 -1l2 2zM2687 708l0 1l-2 0l-1 -1l2 -1zM2568 685l-1 -1l0 -2l2 -1l1 2zM2113 254l1 4l-2 3l-1 -1l0 -4zM1969 537l0 -3l1 -1l1 1l-1 2zM2101 213l-3 -6l5 -7l4 1l-1 7zM2393 733l-4 0l-2 -2l0 -3l4 1zM2136 233l0 1l-2 2l-1 -1l1 -2zM2110 228l4 0l-1 3l-1 1l-2 -3zM2583 712l2 0l2 2l-2 1l-2 -1zM2298 386l-3 0l-3 -3l3 -1l3 2zM2523 390l-2 -3l2 -2l2 0l1 2zM2428 376l7 2l3 7l-3 4l-6 -5zM2425 607l3 4l-3 4l-3 -1l0 -5zM2175 552l2 4l-4 5l-3 -2l2 -5zM2638 756l4 3l2 3l-4 2l-2 -2zM2570 551l0 2l-2 2l-2 -1l2 -3zM2587 307l3 -3l4 0l2 1l-5 4z"/>
<path fill="rgb(145,136,121)" d="M2482 558l-1 -3l2 -1l2 2l-2 2zM2382 287l0 -3l1 -3l3 -1l-2 7zM2099 757l3 -2l3 0l0 3l-5 0zM2689 623l1 -2l3 -3l1 3l-2 3zM2495 610l2 -1l1 1l-1 2l-1 0zM1941 345l-2 0l0 -2l2 -1l1 2zM2570 713l2 -3l3 1l0 2l-2 1zM2167 676l-2 0l0 -3l1 0l1 2zM2038 749l1 1l0 3l-1 0l-1 -3zM2398 214l-3 3l-6 0l2 -4l2 -1zM1938 573l5 2l1 3l-4 3l-4 -4zM2613 371l1 5l-2 1l-3 0l1 -5zM2530 310l1 2l-1 2l-2 -1l0 -2zM2635 407l-3 -2l2 -3l3 0l0 2zM2179 729l3 0l1 6l-3 1l-3 -5zM2680 299l0 2l-3 2l-1 -1l1 -2zM2336 677l-5 0l-1 -2l2 -2l2 2zM2553 743l-2 0l-2 -2l2 -2l2 2zM2601 368l-3 -1l1 -2l1 -1l1 2zM2304 694l1 4l-1 7l-4 -2l0 -6zM2258 734l3 -6l4 -1l2 2l-3 5zM2620 494l3 0l2 4l-3 2l-3 -4zM2141 495l-1 1l-3 -2l0 -2l3 1zM2407 486l-4 0l-3 -4l3 -3l4 3zM2661 528l1 1l0 2l-1 0l-1 -2zM2370 722l2 3l-3 3l-3 1l0 -5zM2209 287l-4 2l-4 -3l1 -2l5 1zM2326 513l0 -5l2 -1l3 1l-1 3zM2177 204l2 -1l2 0l1 3l-4 0zM2338 454l-2 1l-3 -1l0 -1l4 0zM1951 613l2 -1l2 0l0 3l-3 -1zM1941 289l1 3l-1 1l-2 1l0 -3zM1987 283l-2 2l-1 0l-1 -1l2 -2zM2589 325l0 5l-2 3l-3 -1l2 -6zM1929 350l1 5l-3 3l-5 -2l2 -7zM2118 269l3 0l0 2l-2 2l-2 -1zM2457 372l1 4l-3 1l-1 -1l2 -3zM2397 312l-2 -1l-1 -1l1 -1l2 1zM1955 238l3 -3l2 1l0 4l-5 0zM2036 646l4 -1l2 1l-1 3l-3 0zM2138 584l0 4l-4 2l-2 -2l3 -4zM2249 575l-2 1l-1 -2l1 -1l1 1zM2017 679l3 5l-3 5l-6 -3l2 -5zM2485 424l3 1l3 7l-4 1l-4 -4zM2261 573l-2 -2l2 -2l2 -1l0 4zM2453 716l3 -2l2 2l0 3l-3 0zM1976 290l3 1l0 4l-1 0l-2 -2zM2137 406l-2 -2l2 -2l1 1l0 1zM2551 616l2 1l-2 3l-1 1l0 -5zM2111 377l-1 -4l4 -6l4 2l-4 5zM1923 396l-2 0l0 -2l1 -1l1 1zM2700 364l-1 -2l1 -1l2 1l-1 2zM2371 371l3 2l2 11l-2 2l-5 -8zM2237 659l2 0l0 4l-1 2l-2 -3zM2650 225l0 -3l5 -3l0 3l-2 2zM2334 501l1 -2l9 2l-3 3l-5 0zM1988 667l-2 -4l7 -4l2 3l-3 5zM2241 561l2 0l0 2l-1 1l-2 -2zM2438 646l-3 -7l1 -6l4 1l2 8zM2048 438l1 -1l2 1l-1 2l-2 0zM2457 554l0 -3l5 0l1 1l-4 3zM2290 673l-5 2l-5 -2l2 -4l3 1zM2501 754l2 1l1 1l-2 2l-1 -2zM1955 192l2 3l-1 3l-4 -1l1 -3zM2523 282l3 -3l4 2l-1 3l-5 1zM2579 383l-5 -1l0 -4l3 -2l2 5zM2094 703l2 4l-2 5l-4 -3l2 -4zM2130 305l3 -1l4 3l0 3l-7 -1zM2681 676l1 1l-1 2l-2 -1l1 -1zM1993 615l0 2l-1 2l-3 -1l2 -2zM2156 569l-5 -7l5 -4l5 -1l3 8zM2556 262l1 -2l1 -2l1 1l0 2zM2397 219l-3 0l-1 -3l3 -1l1 2zM2038 540l0 -2l1 -2l2 1l0 2zM1959 676l-2 4l-5 3l-2 -5l5 -4zM2430 309l0 4l-5 2l0 -2l2 -4zM2003 451l3 -2l6 -2l0 5l-3 2zM1961 573l2 0l5 2l-2 3l-3 -2zM2174 652l2 -3l5 0l0 3l-4 1zM2027 651l1 -3l5 -4l3 5l-2 3zM2072 688l1 2l0 1l-2 0l0 -2zM2512 394l1 2l-3 1l0 -1l1 -1zM1927 352l1 -1l3 1l-1 1l-2 0zM2266 370l4 3l0 4l-4 3l-3 -5zM2476 683l-4 5l-4 -1l-2 -2l6 -4zM2154 740l3 -2l5 2l-1 3l-4 0zM2211 251l3 -1l1 4l-1 1l-4 -3zM2258 635l-2 0l-1 -3l1 -1l3 2zM2191 381l0 3l-1 2l-2 -2l1 -2zM2512 467l3 -3l3 2l0 4l-6 -1zM2471 272l3 2l0 3l-4 1l-2 -4zM1980 630l2 -4l3 0l0 3l-2 2zM2505 633l1 2l-1 3l-2 0l-1 -3zM2577 210l2 3l-4 2l-3 -1l2 -4zM2459 338l-6 1l-4 -5l4 -4l6 2zM2192 243l0 1l-1 2l-1 -1l0 -1zM2137 305l4 2l1 4l-4 2l-1 -3zM2449 476l1 1l0 2l-1 0l-1 -3zM2122 238l2 -1l1 3l-1 2l-2 -1zM2670 671l-3 -2l-2 -4l3 -3l3 4zM2593 501l2 -2l3 1l1 2l-4 1zM2219 258l-3 -2l2 -3l4 0l0 4zM2233 685l2 2l-1 4l-3 -2l0 -1zM1927 556l2 -3l2 1l2 2l-3 2zM2612 647l1 -2l1 0l1 2l-2 1zM2510 740l-3 5l-4 1l-2 -2l3 -5zM2543 760l-2 -2l1 -2l1 -1l1 3zM2699 630l-1 4l-3 4l-2 -3l1 -3zM2452 244l1 -1l1 0l1 1l-2 1zM2198 359l-1 2l-1 0l-1 -2l2 -1zM2577 367l1 -1l3 0l0 4l-3 1zM2391 294l5 -6l6 1l2 4l-6 3zM2422 718l1 -5l5 -1l2 4l-2 3zM2645 528l-1 2l-3 1l-1 -3l3 -1zM2018 735l-1 -1l-1 -4l2 -1l2 4zM2391 224l-4 -1l-2 -5l2 -1l5 2zM2477 318l0 -1l3 -1l0 1l-2 1zM2264 755l-4 5l-4 0l-1 -3l3 -2zM2062 310l-1 3l-5 0l-1 -2l4 -2zM1944 683l3 -1l1 1l0 1l-2 0zM2533 608l2 -2l3 1l1 2l-4 0zM2678 630l1 2l-2 1l-1 0l0 -2zM1994 707l-3 2l-6 -2l2 -2l4 0zM2487 728l2 0l0 2l-1 1l-1 -2zM2515 549l-2 -1l-1 -2l0 -2l3 2zM2567 695l1 1l0 1l-1 0l-1 -1zM2536 570l0 -3l5 -2l2 1l-4 5zM2477 708l3 -1l2 4l-2 2l-3 -2zM2665 671l5 5l-1 5l-6 1l-1 -6zM2541 679l4 0l5 4l-3 3l-4 -3zM2413 688l1 2l0 2l-2 0l0 -3zM2540 596l-6 -3l0 -5l5 -3l2 5zM2141 201l-2 -1l1 -2l1 0l1 2zM2164 647l0 2l-1 1l-2 0l1 -3zM2093 465l2 0l1 2l-3 1l-1 -1zM1980 760l0 -2l3 -1l1 3l-1 1zM2174 388l-2 -2l2 -3l2 1l-1 3zM1990 600l-6 0l-2 -3l1 -4l5 2zM2565 298l2 -2l4 0l-1 3l-3 1zM2553 700l-2 -2l0 -2l3 1l1 2zM2020 544l-1 -4l6 -8l3 3l-2 7zM2499 613l0 -3l3 -4l2 2l-1 3zM2246 420l2 -3l2 -1l1 3l-2 1zM2314 397l0 -3l5 -5l3 1l-3 6zM2497 667l6 -1l6 3l-3 4l-7 -3zM2492 547l-2 1l-3 -1l2 -1l2 0zM2449 195l-3 3l-2 -1l0 -2l3 -1zM2567 336l4 -2l3 0l1 2l-6 2zM2642 199l2 -1l3 1l-1 2l-2 -1zM2362 727l1 -1l3 1l0 1l-4 1zM2502 213l1 2l0 4l-3 2l-1 -5zM2188 517l1 -1l6 1l0 2l-4 0zM2457 313l1 1l0 3l-2 0l0 -3zM2195 371l-1 -1l0 -3l1 -1l2 3zM2145 354l-3 -1l-2 -2l2 -1l2 1zM2091 245l5 3l2 6l-5 2l-3 -7zM2321 474l2 -2l5 2l-2 4l-3 -1zM2205 759l-2 1l-2 -3l1 -1l3 1zM2538 616l-4 0l-3 -2l-1 -3l5 1zM1961 705l1 0l1 2l-1 2l-1 -2zM1937 719l-2 -2l-1 -4l2 0l2 2zM2398 763l4 -2l7 0l3 4l-6 3zM2141 328l2 -3l5 -1l1 5l-5 1zM2133 414l1 -3l5 -4l3 1l-5 7zM1955 553l0 3l-2 0l-1 -2l1 -2zM2673 664l2 2l-1 2l-2 0l0 -2zM1937 338l3 3l0 3l-3 1l-2 -4zM1975 264l4 -3l10 1l-2 5l-5 2zM2253 609l4 -1l3 3l-3 2l-4 0zM2226 734l0 -2l1 -2l2 0l-1 3zM2035 665l-1 -1l0 -1l2 -1l1 3zM1970 718l3 -1l1 3l-2 1l-2 -1zM2688 332l-2 2l-4 0l1 -5l4 0zM2095 690l2 -3l5 -2l0 3l-3 3zM2025 285l-2 5l-4 0l-2 -2l5 -3zM2655 377l-3 1l-6 -4l2 -3l5 2zM2673 281l-1 -1l-1 -1l2 -1l1 1zM2677 745l2 -1l1 2l-1 1l-2 0zM2174 435l-2 -4l2 -7l5 -1l-2 12zM2353 739l5 -5l6 0l1 2l-5 3zM2640 207l-2 -1l-1 -2l2 -1l1 2zM2493 711l1 2l0 2l-2 0l0 -1zM2354 288l-2 -2l2 -6l2 2l0 3zM2477 373l2 -3l4 -2l2 3l-3 3zM2261 249l-3 2l-3 -2l0 -2l4 1zM2083 580l2 3l-2 2l-2 1l0 -4zM2657 732l-1 1l-2 0l-1 -3l3 0zM2602 717l5 -8l7 1l1 9l-7 2zM2235 399l2 -3l7 0l-1 3l-4 2zM2096 747l-4 2l-2 -1l1 -2l3 -1zM2021 262l2 -6l9 -7l2 4l-7 7zM2004 612l2 -3l5 0l-1 3l-3 1zM2497 374l3 -1l2 3l-2 0l-2 0zM2130 267l5 0l3 4l-4 1l-3 -1zM2485 725l0 2l-2 2l-1 -1l1 -2zM2147 266l-2 1l-3 -4l2 -2l4 2zM2326 514l8 2l1 5l-4 3l-5 -3zM2408 638l1 -4l2 0l2 2l-3 3zM2638 317l2 3l-6 6l-2 -2l2 -5zM2286 324l-2 3l-2 0l-1 -1l3 -3zM2622 593l-1 -3l2 -2l3 1l-1 3zM2504 615l2 1l0 2l-1 1l-1 -2zM2372 338l-1 -1l1 -3l1 0l0 3zM2403 557l-2 1l-4 -2l2 -1l3 0zM1949 644l0 3l-1 1l-2 0l1 -3zM2189 577l5 -10l9 -4l4 2l-7 8zM1952 708l-4 1l-1 -3l3 -3l3 1zM2444 686l1 1l0 3l-2 -1l0 -1zM2495 538l-2 -1l0 -1l1 -1l2 1zM2112 202l0 2l-2 2l-2 -1l2 -3zM2038 277l-1 -3l2 -1l1 1l-1 2zM2401 564l-2 -2l2 -2l1 -1l1 3zM2412 272l0 -3l2 0l1 0l-1 2zM2378 346l3 -2l2 2l-2 3l-2 -1zM2382 771l-4 -1l-1 -2l1 -3l2 2zM2482 705l6 3l1 4l-2 2l-4 -4zM2115 702l-1 4l-9 3l-3 -5l7 -4zM2413 627l-5 1l-3 -2l1 -5l6 2zM2597 254l1 3l-3 3l-3 -1l1 -5zM2436 727l1 3l-2 4l-4 0l1 -6zM2322 248l1 1l1 3l-1 0l-2 -2zM2112 656l-4 -2l-1 -2l3 -3l2 2zM1971 609l-1 1l-1 0l-1 -1l2 -1zM2050 654l-4 2l-1 -1l-2 -3l4 -1zM2000 604l-1 -3l1 -2l3 -1l0 3zM2002 621l-1 -2l2 -1l1 2l-1 1zM2676 670l-2 1l-2 -1l1 -2l2 0zM2127 430l2 0l1 1l0 1l-2 -1zM2339 564l-6 1l-8 -11l4 -2l7 5zM2461 353l1 -1l1 1l0 1l-1 0zM2441 570l-5 -3l6 -6l4 2l-2 5zM2113 365l-1 1l-3 -1l0 -1l3 0zM1937 193l3 3l0 6l-4 0l-2 -4zM2374 575l-2 2l-4 -1l0 -2l4 0zM2200 313l-2 -1l-2 -3l2 -1l2 2zM2658 584l-1 -1l2 -2l2 0l-1 2zM1955 683l-2 2l-5 -2l0 -4l5 0zM2324 361l-2 1l-3 -3l3 -3l4 3zM1979 684l2 1l0 3l-1 2l-2 -2zM2668 724l0 -1l1 -1l2 1l-2 1zM2521 353l-1 0l-1 -2l2 -1l1 2zM2146 649l0 -2l0 -2l1 0l1 2zM2550 551l-3 4l-5 0l0 -4l4 -1zM2048 313l2 2l0 3l-4 -1l-1 -2zM1980 720l2 -2l3 2l0 1l-4 0zM2001 443l1 1l-1 2l-3 -1l1 -2zM2199 563l2 -2l2 0l1 2l-2 1zM2208 720l-1 5l-2 1l-1 -2l1 -2zM2498 257l1 -3l4 -1l1 2l-1 2zM2204 449l-2 1l-4 -1l1 -1l4 0zM2377 414l1 -2l2 1l1 1l-3 2zM2025 620l5 -1l2 3l-1 3l-4 -2zM2630 250l3 -2l2 2l0 2l-4 0zM1961 496l1 -1l2 1l-1 2l-3 -1zM2472 573l2 -7l8 0l1 5l-3 4zM2494 352l-3 -2l0 -2l2 -1l1 3zM2442 398l-2 -2l2 -3l1 1l1 4zM2241 505l-2 -1l-1 -2l2 -1l1 3zM2091 643l-5 -1l-2 -3l3 -2l3 3zM2100 645l-2 4l-2 0l-2 -3l2 -2zM2458 400l2 -3l5 -2l0 5l-2 1zM2053 353l2 1l0 2l-1 1l-2 -2zM2566 753l0 -3l3 -1l1 1l-2 2zM2445 697l4 -3l5 1l2 5l-8 0zM2623 321l0 -3l3 -2l1 2l-1 3zM2052 259l1 1l0 2l-2 0l0 -2zM1965 678l-3 -3l0 -3l2 -1l2 3zM2325 659l2 -1l1 3l-1 1l-2 -1zM2002 495l-1 0l-2 0l0 -2l3 1zM2451 256l-5 1l-2 -2l1 -3l5 1zM2395 259l-8 0l-4 -7l1 -5l9 3zM2551 423l-2 0l-1 -1l1 -1l2 1zM2448 262l-3 1l-3 -2l1 -2l5 1zM2546 685l5 3l-1 4l-2 2l-3 -4zM1925 634l1 2l-1 3l-1 -1l0 -2zM2125 657l1 -2l2 0l0 2l-1 1zM2534 189l5 -1l3 2l-2 2l-5 0zM2033 772l-2 -1l-2 -3l2 -2l3 3zM2327 714l4 0l3 3l-1 3l-5 -3zM2069 600l0 -2l2 1l1 2l-2 1zM2239 726l2 0l1 1l-2 1l-1 -1zM1988 268l1 3l-2 6l-3 -1l-1 -4zM2657 772l1 -3l4 0l1 3l-2 2zM1924 209l2 -2l3 0l0 2l-2 2zM2631 269l0 -3l6 0l1 3l-5 2zM2161 219l1 2l0 3l-2 1l-1 -4zM2695 498l1 2l-1 2l-2 -2l0 -2zM2500 755l1 -2l2 0l0 2l-1 1zM2602 536l0 3l-5 1l0 -1l3 -5zM2266 335l3 0l3 2l-2 2l-3 -2zM2158 738l1 -1l1 2l0 0l-2 1zM2088 693l1 2l-2 4l-3 -2l0 -2zM1950 579l0 3l0 2l-3 -1l1 -3zM2325 288l-4 3l-5 -5l3 -4l3 2zM2504 531l0 1l-1 1l-2 -2l1 -1zM2570 316l-1 -2l0 -5l2 -1l2 5zM2331 747l0 2l-2 0l-1 -2l3 -1zM2175 346l-1 1l-2 -1l0 -1l1 0zM2091 378l0 -3l3 0l1 2l-2 1zM2369 238l-2 -1l-1 -4l2 -2l2 4zM2423 259l-1 0l-1 -2l2 -1l1 1zM2151 284l3 1l0 5l-3 0l-2 -3zM1955 299l-3 -2l1 -4l3 -1l1 7zM2563 605l4 2l-1 7l-3 -1l-3 -6zM2336 540l2 -3l4 1l2 3l-6 2zM2216 694l-4 0l-4 -2l1 -2l5 1zM2173 552l0 3l-2 1l-1 -1l0 -2zM2219 748l3 4l1 4l-3 3l-4 -6zM2289 630l2 -1l0 3l-2 1l-1 -1zM2522 615l2 -2l3 2l-1 3l-2 -1zM2396 549l1 0l2 2l-1 1l-2 -1zM2272 737l-1 1l-1 -2l0 -1l3 1zM2074 765l0 1l-4 0l0 -1l2 -2zM2517 345l4 3l-2 3l-3 1l-1 -4zM2636 610l-3 0l-2 -9l4 -1l2 7zM2164 744l2 1l0 1l-2 0l0 -1zM2643 316l0 3l-3 1l0 -2l1 -2zM2381 365l-2 -4l5 -3l2 2l-2 4zM2635 582l3 3l-1 5l-3 0l0 -5zM2548 650l5 -1l2 4l1 3l-6 -2zM2056 299l2 1l-1 6l-2 -2l-1 -3zM2050 418l-1 4l-3 1l-1 -3l2 -2zM2682 337l1 -3l2 -1l2 1l-2 2zM2173 206l0 -2l0 -2l2 -1l0 4zM2018 276l-5 1l-6 -3l1 -5l8 1zM2697 337l-2 2l-7 1l0 -3l5 -3zM2186 228l2 3l-1 2l-2 -1l0 -2zM2297 201l-1 -4l2 -3l4 2l-1 4zM2565 734l2 -1l4 -1l0 3l-3 1zM2561 593l1 -4l4 -4l4 2l-4 6zM2598 573l1 2l-1 3l-1 0l-1 -3zM2259 587l-4 4l-2 -2l0 -2l2 -2zM1958 185l1 4l-4 2l-3 -3l2 -2zM2388 556l2 0l1 1l0 2l-2 0zM2687 671l0 3l-1 1l-1 0l-1 -3zM2607 463l-1 1l-2 -1l0 -1l2 -1zM2704 738l-2 0l-2 -1l1 -2l2 1zM2260 606l3 -1l4 2l1 2l-6 1zM1993 566l2 0l1 0l-1 2l-1 0zM2245 461l-1 3l-6 -1l-1 -2l4 -2zM2688 761l0 4l-3 3l-3 -3l1 -3zM2010 378l2 -1l2 1l-1 2l-2 0zM2324 675l-4 0l-3 -4l3 -2l3 3zM2428 403l3 0l-1 2l-1 1l-2 -2zM1974 728l-3 2l-2 -1l1 -4l2 2zM2543 251l1 2l0 4l-1 0l-1 -2zM2107 208l0 -2l2 0l1 1l-2 2zM2365 314l-2 1l-3 -1l0 -2l5 0zM2597 392l-1 -2l3 -2l1 1l-2 3zM2311 257l8 3l-1 9l-3 0l-4 -5zM2503 394l-1 3l-4 0l0 -2l3 -3zM2315 677l0 2l-2 1l-1 -2l1 -1zM2261 580l1 -1l3 1l-2 2l-2 -1zM1971 540l-1 0l-2 -2l1 0l3 1zM2476 202l-2 0l-2 -3l1 -2l3 2zM1937 361l-1 2l-2 1l-1 -1l2 -2zM2199 739l4 0l3 3l-1 2l-5 -1zM2155 198l-2 0l-2 -2l2 -1l2 1zM2564 414l-1 -3l2 -3l3 3l0 3zM2506 717l-1 -1l1 -2l2 1l-1 2zM2555 529l3 -4l4 -1l2 3l-4 3zM2238 588l1 -6l7 -2l2 3l-6 4zM1979 498l-3 7l-9 -2l0 -5l9 -4zM1951 733l-5 -1l0 -6l2 0l5 3zM1928 693l0 -3l4 -3l1 1l-1 4zM2610 775l-2 -3l0 -2l2 -1l1 4zM2108 646l-4 0l-2 -6l2 -2l5 2zM2049 438l4 5l-2 9l-4 2l-4 -8zM2127 338l-2 -3l2 -3l4 -1l0 7zM2289 385l-2 0l-2 1l0 -2l2 0zM2695 299l-1 0l-3 0l0 -1l3 -1zM2626 491l0 -2l2 -2l2 2l-2 3zM2409 225l6 1l2 5l-2 3l-5 -5zM2265 656l0 3l-6 4l-1 -5l3 -2zM2435 558l1 2l-1 2l-1 -1l-1 -2zM2425 270l-4 -2l-1 -3l2 -2l3 3zM2092 301l-3 -1l-1 -4l1 -1l4 5zM2289 546l3 -4l5 1l0 4l-4 3zM2657 410l1 1l0 2l-1 1l-1 -2zM2272 748l-3 0l-1 -2l1 -3l3 2zM2490 671l-1 -5l6 -6l2 2l-2 8zM2409 458l2 2l-1 2l-1 -1l-1 -2zM2126 614l0 2l-1 3l-1 -1l0 -3zM2594 640l-2 -2l0 -4l2 1l2 2zM2370 702l2 -1l2 2l-2 1l-1 0zM2282 563l-1 -3l2 -1l2 2l-1 1zM2601 437l-2 1l-1 -2l0 -1l3 0zM2582 183l3 3l-1 5l-2 0l-3 -5zM2636 379l2 0l1 1l-1 2l-2 -1zM2269 703l-1 2l-2 1l-1 0l1 -3zM2399 706l-4 1l-4 -4l2 -2l6 2zM2636 403l3 -1l6 2l-1 2l-6 0zM2544 733l4 2l3 3l-3 1l-3 -2zM2282 327l-5 1l-4 -5l2 -2l3 2zM2343 382l-2 -2l0 -1l1 0l1 1zM2352 751l-2 0l-1 -2l0 -1l3 0zM2676 592l2 0l1 0l-1 2l-1 0zM2264 351l-1 -1l1 -1l2 -1l-1 3zM2682 675l-2 -3l5 -6l3 4l-1 5zM2497 222l4 -1l4 1l1 4l-6 0zM1937 395l0 4l-2 1l-3 -2l4 -3zM2639 316l-1 4l-5 1l-1 -4l4 -2zM2445 714l-2 1l-4 -4l2 -2l4 3zM2142 398l-2 4l-5 -1l0 -4l4 -2zM2324 195l-2 0l-2 -2l1 -2l3 1zM2105 668l4 0l2 1l0 3l-6 -1zM2575 309l-1 -3l5 -3l2 3l-4 3zM2637 541l-2 -1l-1 -2l2 -2l2 3zM2119 712l3 2l0 2l-1 2l-3 -3zM2057 204l2 -1l2 1l-1 2l-2 -1zM2205 743l2 2l0 3l-1 0l-1 -3zM2141 267l-1 2l-3 1l-1 -2l3 -2zM2134 266l-1 1l-1 0l0 -2l1 -1zM2157 559l-4 2l-4 -5l2 -2l4 2zM2194 513l-5 5l-7 0l-3 -5l9 -1zM2440 339l-4 0l-1 -5l4 -2l2 4zM2186 684l0 2l-2 1l0 0l1 -2zM2044 253l-4 2l-3 -2l0 -3l5 2zM1999 247l3 0l2 1l-1 2l-2 -1zM2320 257l2 0l0 2l-1 1l-2 -1zM2455 655l-1 -3l0 -2l3 0l1 4zM2556 319l-2 -2l1 -3l2 -1l1 5zM2524 439l-2 1l-3 0l0 -2l3 -1zM2162 717l-1 0l0 -3l1 0l2 2zM2149 697l-3 2l-2 -2l0 -2l2 -1zM2277 269l1 3l-4 4l-3 0l2 -6zM1985 464l4 -4l6 2l-1 2l-6 2zM2550 269l0 -5l4 -2l3 2l-3 4zM2249 331l-2 1l-3 -2l1 -2l3 0zM1932 261l2 -2l5 1l-1 3l-3 0zM2253 644l-1 0l-2 -2l2 -1l1 1zM2195 627l1 2l-1 2l-2 -1l1 -2zM2476 286l1 -2l8 -4l0 5l-3 2zM2699 258l0 -4l4 -2l2 3l0 2zM2343 620l-3 2l-4 -1l1 -3l4 0zM1982 638l-2 -2l0 -2l1 -1l3 4zM2218 650l3 -3l2 1l1 2l-4 1zM2610 369l0 -5l6 0l2 4l-2 3zM2350 195l2 0l1 3l-1 1l-3 -3zM2615 660l2 -2l3 1l0 2l-3 2zM1947 342l-7 -4l4 -5l2 -1l4 7zM2359 630l0 3l-5 3l-4 -4l5 -3zM2612 389l2 6l-2 6l-5 -2l0 -7zM2506 236l-1 -1l0 -3l1 -1l2 3zM2440 735l2 -2l6 3l-1 2l-4 1zM2385 660l0 -2l3 -1l0 2l-1 1zM2452 392l3 1l0 4l-2 2l-3 -4zM2086 692l-1 4l-4 1l-2 -1l2 -3zM2097 528l1 -2l1 -1l1 1l-2 2zM2233 657l-1 0l-1 -2l1 -1l1 1zM2006 704l-3 -3l-1 -5l2 -2l3 7zM2692 313l-2 0l-1 -4l2 0l2 1zM2059 573l1 -2l3 -1l1 2l-3 1zM1965 548l5 -4l5 0l2 4l-9 2zM2519 629l0 -1l2 -2l1 0l-1 2zM1991 260l-5 4l-7 -6l2 -4l7 1zM2374 221l3 0l1 1l-2 2l-2 0zM2680 402l-4 -3l-1 -4l3 -1l2 5zM2223 213l-3 -4l3 -6l3 0l1 5zM1984 214l1 1l-2 1l-1 -1l1 -2zM2500 319l3 1l0 6l-4 0l-1 -4zM2602 721l-2 -1l-1 -4l2 1l2 2zM2262 246l2 1l0 2l-2 1l-2 -3zM2214 338l3 -2l4 4l-2 3l-4 -2zM2542 730l0 -4l5 -4l2 2l-1 4zM2559 623l-1 -3l0 -1l2 -1l0 4zM2301 335l2 0l1 3l-2 1l-2 -2zM2256 601l2 -2l2 0l1 3l-3 1zM2131 312l1 -2l2 -2l0 2l0 1zM2324 707l-2 0l-1 -2l1 -2l2 2zM2223 320l-1 2l-4 0l0 -2l3 -1zM2583 523l0 -3l1 -1l2 1l-2 3zM2338 365l0 2l-4 1l0 -2l1 -1zM2236 691l2 -1l1 1l-1 2l-1 -1zM2429 575l-3 1l-2 -2l2 -3l2 1zM2310 404l-1 -1l-1 -1l2 -1l0 1zM2511 577l-2 -4l0 -2l2 0l1 2zM2309 664l0 -1l0 -2l1 0l1 1zM2662 767l-2 -1l-2 -3l4 -1l2 3zM2375 575l0 3l-2 3l-2 0l0 -4zM2006 357l0 -4l4 -1l2 2l-4 5zM2465 494l3 1l1 5l-3 0l-1 -2zM2412 658l1 1l0 2l-2 1l-1 -2zM2666 532l1 2l0 2l-2 0l0 -3zM2281 483l-2 -2l1 -3l2 0l1 4zM2066 753l2 2l-1 3l-2 1l0 -5zM2689 220l-1 -4l4 -2l2 3l-3 3zM2208 230l2 0l2 0l-1 2l-2 0zM2401 630l1 2l0 3l-2 -1l-1 -2zM2151 667l-1 1l-1 1l-1 0l1 -2zM2499 438l-2 3l-5 0l0 -3l5 -1zM2569 751l1 -2l2 -1l1 2l-1 1zM2606 560l-1 3l-4 1l-1 -4l4 -2zM2256 218l-5 -6l2 -8l4 2l3 9zM2695 547l-2 1l-2 0l1 -3l3 0zM1970 637l-2 -1l-3 -2l2 -2l4 2zM2309 365l3 2l-1 6l-3 0l-2 -3zM2056 400l2 0l1 2l-1 2l-2 -2zM1959 237l4 -2l3 2l0 3l-5 -1zM2482 405l5 0l5 8l-3 3l-6 -3zM2341 773l-1 2l-3 -2l0 -1l3 -1zM2228 641l1 3l-3 2l-2 -2l1 -2zM2224 741l-3 -1l0 -4l2 0l2 2zM2483 384l1 1l-1 3l-2 -1l0 -1zM2397 562l-2 -3l0 -2l2 -1l2 3zM2523 364l0 2l-3 1l-1 -2l2 -1zM2132 479l0 -2l2 -2l1 1l0 2zM2227 702l-1 4l-3 1l-3 -5l3 -1zM1933 238l0 -2l2 -1l1 2l-2 1zM2021 378l2 -2l6 0l0 3l-5 1zM2080 234l3 0l3 2l-1 3l-3 0zM2312 289l3 -3l2 0l0 2l-3 1zM2259 516l0 -3l5 -1l0 3l-2 1zM2003 245l1 -2l2 -2l2 1l-2 5zM2000 645l-4 -1l-1 -3l1 -3l3 4zM2492 246l0 2l-4 1l-1 -2l3 -2zM2371 224l1 -2l3 -1l1 3l-4 1zM2188 347l1 2l0 3l-1 0l-1 -3zM2531 555l-4 -3l1 -4l2 -1l3 4zM2518 630l1 1l-1 3l-2 0l0 -3zM2694 288l2 -3l4 1l0 5l-5 -1zM1929 445l1 -1l1 -1l0 1l0 1zM2431 473l0 3l0 2l-2 -1l0 -3zM2379 303l0 1l-2 2l-1 -1l1 -2zM2173 769l4 0l0 4l-2 1l-3 -2zM2510 629l0 2l-2 2l-2 -4l1 -1zM2065 224l1 3l-3 1l-1 -3l2 -1zM2149 418l-2 2l-3 -1l0 -1l4 -1zM2138 368l-2 -1l-1 -1l1 -1l3 2zM2260 225l-5 3l-7 -4l3 -3l9 1zM2594 189l-1 2l-3 -1l0 -2l2 -1zM2606 611l-3 4l-4 -1l1 -4l4 -1zM2150 310l-1 -2l2 -2l2 2l0 2zM2505 317l-2 3l-5 0l0 -3l3 -2zM2649 417l-4 1l-2 -1l0 -4l6 1zM2696 665l-3 0l-2 -3l2 -3l5 4zM2048 485l0 -2l1 -1l2 1l-1 2zM2483 540l-1 -4l4 -2l3 2l-2 4zM2637 387l1 -1l2 0l1 1l-3 1zM2128 270l2 1l-2 6l-2 -1l0 -4zM2275 270l-2 0l0 -3l1 0l2 2zM2364 384l1 3l-3 2l-1 0l2 -4zM2237 411l1 3l-1 2l-2 -1l0 -2zM2645 222l3 2l2 4l-2 1l-3 -1zM2171 572l-3 -3l1 -5l5 0l0 4zM2425 329l3 3l0 4l-2 0l-3 -4zM2091 468l3 -2l3 4l-1 3l-3 -1zM2094 382l3 3l-2 7l-3 -2l0 -5zM2254 710l5 3l-1 4l-2 3l-3 -5zM2119 573l1 -1l2 0l1 1l-2 2zM1945 264l-1 3l-3 0l0 -1l3 -4zM2337 311l3 -3l3 2l0 4l-3 0zM2468 282l0 -3l3 -2l2 2l-3 2zM2575 519l0 -2l2 -4l1 2l0 4zM1945 393l3 -4l4 0l1 3l-4 2zM2063 426l-1 2l-2 1l0 -2l1 -1zM2655 206l-1 3l-1 0l-1 -2l2 -1zM2141 254l-2 -1l0 -2l3 0l0 2zM2693 590l0 -4l6 -4l2 4l-4 4zM2432 718l-1 2l-2 0l-1 -1l3 -2zM2194 361l1 2l-3 3l-1 -2l0 -2zM2610 302l1 2l-2 3l-2 -2l1 -3zM2672 216l-1 2l-2 0l-1 -2l2 0zM2664 709l4 0l3 4l-3 3l-3 -3zM2185 301l0 2l-4 1l0 -2l2 -2zM2512 476l1 0l0 2l-1 1l0 -2zM2421 307l-2 2l-5 -2l1 -2l5 -2zM2636 774l-2 -2l2 -4l2 1l0 3zM2647 218l1 -3l4 -1l1 3l-4 2zM2047 275l5 2l-3 7l-4 -1l-2 -6zM2049 760l-1 1l-3 0l-1 -3l2 -1zM2572 359l5 6l-7 9l-5 0l2 -11zM2586 724l4 3l1 4l-3 1l-2 -3zM2356 397l0 2l-1 2l-1 -1l-1 -1zM2643 375l2 1l0 2l-1 1l-2 -3zM2192 523l3 3l0 5l-4 -1l0 -5zM2108 423l2 0l3 4l-2 2l-4 -4zM2156 615l-3 1l-4 -1l2 -3l4 0zM2663 724l-2 -3l0 -4l6 0l0 5zM2364 352l2 2l-1 4l-2 -2l0 -2zM2639 766l1 2l-1 3l-2 -1l1 -3zM2026 704l2 -2l4 1l0 2l-4 1zM2054 410l3 0l1 3l-1 2l-3 -4zM2237 762l-1 3l-5 2l0 -4l1 -2zM2046 553l1 2l0 2l-2 1l-1 -3zM1990 545l1 1l1 2l-2 1l-1 -2zM2420 220l3 1l1 2l-2 2l-3 -2zM2691 564l0 2l-3 1l-1 -2l2 -3zM2061 687l3 -4l7 2l1 4l-9 0zM2463 398l5 -3l3 6l-2 4l-5 -4zM2114 307l1 -4l7 -4l1 5l-4 3zM2287 621l-4 -3l-1 -4l2 -1l4 2zM2312 531l-4 0l-2 -2l1 -2l4 2zM2324 445l4 0l1 3l-2 2l-3 -2zM2447 748l-1 1l-1 0l0 -2l1 0zM2144 270l3 4l-3 4l-3 -1l1 -3zM2169 496l-2 0l-1 -1l1 -1l2 1zM2129 305l2 2l0 3l-5 0l1 -4zM2617 680l3 0l1 4l-2 2l-2 -4zM1950 304l-3 -2l-1 -3l3 0l2 1zM2241 537l-2 2l-2 0l-1 -2l2 -1zM2138 690l-4 1l-6 -4l3 -4l5 3zM2237 284l-2 -3l2 -3l3 0l0 5zM2492 587l1 4l-3 4l-3 -3l2 -3zM2489 287l1 0l3 1l0 1l-3 0z"/>
<path fill="rgb(160,151,135)" d="M2449 275l1 -1l2 -1l1 1l-2 3zM2633 272l2 3l-1 3l-2 0l-1 -4zM2286 315l-3 -1l2 -6l3 0l1 7zM2425 492l-3 1l0 -1l0 -3l2 0zM2586 542l1 2l-2 3l-2 0l0 -4zM2235 339l0 2l-3 0l1 -2l0 0zM1958 737l3 0l4 1l-1 2l-4 0zM2674 265l0 3l-1 2l-1 -1l-1 -3zM2233 196l0 1l0 2l-1 0l-1 -2zM2158 657l-1 6l-2 3l-3 0l1 -8zM2658 499l0 -1l4 -1l1 1l-3 2zM2438 614l3 1l2 6l-4 0l-3 -3zM2477 409l-4 0l0 -3l1 -1l3 2zM2670 318l2 3l-3 2l-2 0l1 -5zM2414 664l-2 0l-2 -1l1 -2l2 1zM2047 661l3 1l3 5l-2 2l-4 -2zM2340 562l-4 -6l0 -5l4 -1l2 7zM2353 385l3 3l0 2l-1 0l-2 -2zM2147 744l2 -6l4 1l2 4l-6 2zM2473 259l0 2l-4 1l-2 -1l4 -3zM2223 348l-1 -2l1 -4l3 1l0 4zM2578 298l2 3l-2 2l-2 -1l0 -2zM2365 317l3 -3l2 2l0 2l-3 0zM2503 670l1 1l-1 3l-2 -1l0 -3zM2678 703l-1 1l-2 0l-1 -1l2 -1zM2440 692l-1 2l-4 -1l-1 -4l5 0zM2056 741l2 4l-3 11l-3 -1l-1 -12zM2366 362l4 2l3 4l-4 3l-2 -4zM2463 416l0 6l-4 4l-1 -2l1 -5zM2410 281l-3 1l-1 -1l0 -2l2 0zM2057 724l-1 3l-1 2l-2 -2l1 -3zM2514 704l-2 -3l1 -6l3 2l1 4zM2367 402l2 -2l4 1l0 1l-3 2zM2500 370l-3 4l-6 0l-1 -4l4 -3zM2656 334l3 0l-1 3l-2 2l-1 -3zM2575 528l4 1l0 1l-1 2l-2 -2zM2190 265l2 3l-1 2l-2 0l0 -3zM2236 733l1 -1l4 3l-1 1l-2 -1zM2238 738l0 1l-1 2l-1 -1l0 -2zM2649 575l-1 2l-2 1l0 -1l1 -2zM2495 710l3 -2l2 0l0 2l-2 2zM2121 305l1 1l-1 1l-1 0l-1 -1zM2386 248l3 1l0 2l-2 1l-1 -2zM2081 587l-2 1l-2 -1l1 -2l2 1zM2463 735l-3 -1l-1 -5l3 0l1 4zM2352 727l2 0l2 3l-3 3l-3 -4zM2127 561l2 1l2 2l-2 1l-1 -1zM2071 288l0 -2l3 -1l1 1l-2 2zM2397 767l2 -5l8 -1l3 5l-8 3zM2442 417l2 -2l2 0l0 2l-1 1zM2242 583l0 -2l2 -1l0 1l-1 2zM2459 400l0 -3l3 -2l3 2l-3 3zM2433 624l2 1l-1 2l-1 0l-1 -1zM2478 773l3 -3l2 2l0 2l-4 0zM2460 598l5 -3l1 3l0 4l-5 -1zM2542 235l-1 -6l2 -2l3 -1l-1 6zM2090 194l-2 1l-2 -1l0 -2l4 0zM2012 236l2 -4l3 -2l1 3l-2 2zM2459 541l-1 -1l3 -2l1 1l-1 2zM2207 592l-2 -6l4 -6l4 2l-2 8zM1987 534l-1 -2l2 0l1 1l0 1zM2610 342l5 4l1 3l-4 1l-2 -2zM2686 581l2 0l1 7l-3 1l-1 -4zM2065 726l0 2l-3 0l-1 -1l2 -2zM2317 442l1 3l-2 2l-3 -1l2 -3zM2209 338l2 1l-1 1l-1 0l-1 -2zM1953 551l3 -6l6 -1l2 6l-5 3zM2512 264l6 2l-2 6l-4 0l-3 -3zM1979 366l-3 -7l3 -2l4 1l-2 5zM2608 225l-2 3l-4 1l-1 -5l4 -2zM2332 459l-1 -3l7 -1l1 2l-5 4zM2017 382l-1 0l-2 -4l3 -1l1 3zM2220 697l-3 -2l0 -3l4 -2l1 5zM2445 327l0 2l-2 0l-1 -1l2 -2zM2519 213l2 0l1 2l-2 2l-1 -2zM2427 348l6 1l4 5l-4 1l-4 -2zM2556 768l-5 0l-2 -3l1 -2l4 1zM2109 612l4 2l1 3l-3 0l-2 -3zM2514 213l5 -2l2 3l-2 2l-3 0zM2163 303l1 2l0 3l-2 0l0 -4zM2567 282l5 -1l4 2l0 3l-5 1zM2605 238l-1 2l-3 -1l1 -2l2 0zM2485 502l1 -1l2 0l0 1l-1 1zM2627 475l-1 -2l0 -2l1 0l1 2zM2396 247l-5 -3l0 -6l4 -4l3 5zM2668 420l1 -4l2 -3l3 3l-3 3zM2460 527l-2 -2l0 -3l4 -1l1 3zM2181 346l1 -3l2 0l2 3l-2 1zM2038 309l-3 0l-3 -2l1 -2l4 1zM2643 714l3 2l2 9l-5 0l-2 -9zM2033 706l1 -1l2 -1l1 3l-3 1zM2634 602l-2 3l-3 0l0 -3l2 0zM2145 258l5 0l1 4l-2 1l-3 -3zM2608 364l2 -3l5 0l2 3l-6 3zM2397 623l-2 2l-4 -2l1 -1l4 0zM2383 624l-1 -2l0 -3l2 0l0 4zM1931 722l-1 1l-1 1l-1 -2l1 -1zM2370 309l8 -5l4 6l-1 4l-10 -1zM2443 629l-2 1l-1 -3l3 -1l1 1zM2282 564l3 -3l3 -1l1 3l-2 2zM2119 480l-4 -2l4 -6l4 0l0 7zM1953 382l0 2l-1 2l-3 -1l1 -2zM2125 525l3 -3l5 0l2 3l-5 2zM2106 694l-2 -2l1 -2l2 -1l1 3zM2578 367l-3 -4l1 -2l2 0l1 4zM2643 280l0 2l-1 1l-2 -1l1 -1zM2458 453l1 -3l8 -3l0 4l-4 3zM2509 701l1 -1l2 3l-1 1l-2 -1zM2153 611l3 -1l5 3l-3 2l-2 0zM2242 294l-2 -3l2 -6l4 2l-1 6zM2604 263l-3 2l-3 -1l1 -2l4 -1zM2311 263l0 -1l3 -2l1 2l-2 2zM2128 622l1 -1l3 5l-3 0l-2 0zM2583 326l1 1l-2 3l-2 0l1 -4zM2647 363l2 1l0 3l-2 0l-1 -1zM2610 593l0 2l-4 0l-1 -2l4 -2zM1926 246l-1 -1l0 -1l1 -1l1 1zM2049 393l1 -1l2 1l-1 1l-1 0zM2666 764l2 2l0 3l-3 0l0 -3zM2627 282l-1 -2l2 -1l1 1l-1 2zM2147 377l1 2l-2 6l-4 -3l1 -3zM1968 753l4 4l3 6l-5 1l-4 -3zM2186 231l0 3l-2 3l-2 0l1 -4zM2612 707l-1 0l-2 -1l0 -1l3 1zM2019 221l-2 4l-9 3l-1 -4l6 -5zM2236 263l0 3l-5 0l0 -3l3 -1zM2277 186l2 9l-7 4l-3 -2l2 -9zM2283 323l-5 4l-5 0l-2 -3l8 -3zM2181 236l3 0l1 4l0 0l-4 -1zM2629 764l-3 1l-2 -2l2 -2l2 0zM2095 546l0 2l-3 1l-1 -2l2 -2zM2453 542l-4 -1l-2 -3l3 -1l2 2zM2405 691l3 0l1 5l-2 1l-5 -4zM2444 706l1 3l-3 2l-2 -2l2 -3zM2127 267l-2 0l-1 -1l2 -1l2 1zM2112 243l2 -4l8 -1l1 2l-4 3zM2345 439l-1 4l-5 4l-1 -3l2 -5zM2597 413l1 -5l4 -5l4 2l-1 6zM2321 404l-1 -1l2 -4l3 2l-2 3zM2651 269l-2 -3l1 -3l2 1l2 2zM2036 749l-4 0l-1 -3l2 -1l2 1zM1969 710l-1 0l-1 -1l1 -1l1 0zM2479 757l0 4l-3 4l-3 -2l1 -5zM2041 364l1 0l2 2l-1 1l-2 -1zM2592 539l3 0l0 5l-4 0l0 -2zM2103 703l-2 4l-2 0l-1 -2l3 -2zM2464 563l-1 7l-7 4l-3 -1l4 -11zM2687 430l-2 0l-1 -2l2 -1l1 1zM2446 356l-1 -1l-1 -1l2 -1l1 1zM2254 325l2 1l2 5l-2 1l-3 -4zM2698 752l-5 1l-3 -3l1 -3l5 2zM2524 656l2 0l1 3l-1 1l-1 -1zM2311 396l2 1l0 1l-1 1l-2 -2zM2240 193l-1 -2l4 -4l1 2l-2 3zM1993 760l-1 -2l0 -1l1 -1l1 2zM2362 596l-3 3l-5 -3l1 -2l4 -1zM2163 453l-2 0l-3 -6l2 -1l4 4zM2360 191l0 -2l1 -2l1 1l0 2zM2180 674l3 1l2 4l-3 0l-3 -2zM2406 544l0 1l-4 0l0 -1l2 -1zM2495 638l0 1l-2 2l-1 -1l1 -2zM2068 238l-4 9l-12 1l-1 -3l8 -6zM2370 236l-2 0l-1 -2l1 -1l2 0zM2492 672l-3 -1l1 -2l2 -1l1 4zM2013 402l-2 -1l0 -3l3 0l1 2zM1968 215l2 -3l6 0l-1 3l-3 1zM2124 252l0 1l-4 2l0 -1l2 -2zM2328 728l-1 3l-8 0l-1 -5l5 -2zM2346 191l2 3l-1 5l-3 1l0 -5zM2079 242l2 2l-1 3l-3 -1l0 -2zM1995 198l-3 0l-5 -6l2 -1l6 4zM2619 441l1 4l-3 9l-3 -2l0 -8zM2553 340l-2 -6l3 -4l3 3l-1 2zM2535 347l-1 1l-2 -1l0 -2l3 1zM2703 651l-1 2l-2 1l-1 -2l2 -1zM2632 674l1 -2l2 0l1 2l-1 1zM2620 580l-2 -2l0 -4l2 -1l1 3zM2169 205l-2 -3l3 -5l3 2l-2 5zM2403 586l-4 -2l2 -9l4 2l0 5zM2642 366l-4 3l-4 -2l0 -2l4 -1zM1989 516l-3 -1l-1 -4l1 -1l4 2zM2229 441l3 0l2 3l-3 1l-2 -1zM2454 718l-1 -2l0 -2l2 1l0 2zM2208 333l0 2l-2 3l-3 -3l1 -2zM2159 639l-4 -1l-1 -2l3 -2l2 2zM2445 744l3 -1l2 2l-2 2l-1 -1zM2153 567l0 -3l4 0l1 1l-2 3zM2656 252l2 1l1 2l-1 1l-2 -2zM2571 653l0 3l-3 0l0 -2l1 -1zM2685 631l3 0l3 2l-1 1l-4 -1zM2137 382l1 -1l2 1l0 2l-3 -1zM2465 665l2 -6l4 -3l3 4l-2 3zM2517 257l-1 2l-2 0l-1 -1l2 -1zM2158 409l-3 2l-2 -2l1 -2l3 1zM2335 591l0 -1l1 -1l1 1l-1 1zM2553 398l-3 -4l1 -2l4 0l1 3zM2182 681l8 -1l2 8l-3 4l-5 -4zM2476 557l-3 -6l0 -13l9 3l-1 12zM2670 285l1 -1l2 0l0 2l-2 1zM2004 741l-4 0l-1 -2l3 -3l2 2zM2380 597l-2 2l-4 -1l0 -1l4 -2zM2086 328l2 -1l2 3l-2 1l-2 -2zM2331 431l0 1l-1 1l-1 -1l1 -1zM2504 737l-1 0l-2 -1l1 -2l2 1zM2169 202l1 -1l2 0l0 2l-1 1zM2190 270l2 1l0 2l-2 1l-1 -3zM2128 435l-2 1l-2 -2l0 -1l3 0zM2469 230l-2 -1l0 -3l2 0l1 3zM1925 393l5 -1l3 2l-1 4l-5 -2zM2671 215l1 -5l3 -2l3 4l-1 5zM2035 337l-1 -1l1 -1l2 0l-1 2zM2381 364l-2 3l-3 -1l0 -2l3 -1zM2656 455l-1 3l-4 2l-1 -3l3 -2zM2088 735l-5 1l-4 -4l4 -4l3 2zM2146 546l-1 2l-2 3l-2 -1l0 -3zM2212 524l2 2l0 2l-2 0l-1 -2zM2567 417l-2 -1l1 -4l3 -1l1 4zM1981 423l1 -2l2 0l1 2l-3 1zM1980 555l-1 1l-3 1l0 -2l2 -1zM2315 496l-2 -1l0 -2l1 0l2 2zM2280 740l3 -3l6 0l2 6l-6 1zM2100 464l-1 2l-3 0l0 -1l2 -2zM2329 280l1 1l0 3l-1 0l-1 -2zM2440 566l1 0l1 4l-2 0l-2 -2zM2265 215l3 -1l1 3l-1 2l-3 0zM2363 541l-1 1l-4 -2l1 -2l4 1zM2123 318l-3 2l-2 -5l3 -2l4 3zM2317 379l-3 1l-2 -3l1 -2l4 1zM2193 603l0 -1l1 -1l2 0l-2 2zM2040 591l-5 3l-2 -3l-1 -4l6 2zM2413 445l2 0l2 2l-2 2l-2 -2zM2592 754l1 2l-2 2l-3 -1l1 -3zM2626 531l2 1l0 1l-2 1l0 -3zM2010 437l-3 -1l-1 -3l1 -2l3 2zM1928 369l-1 1l-2 -2l2 -1l1 1zM2169 560l-3 2l-2 -3l2 -1l2 1zM1957 359l1 2l0 3l-3 1l0 -5zM2562 371l1 0l-1 3l-1 0l-1 -2zM2238 468l-3 -2l1 -2l2 -2l2 3zM1970 639l-2 0l-1 -3l2 -1l3 2zM2562 362l-1 -1l1 -3l2 1l0 2zM2160 371l2 3l-2 4l-3 0l-1 -5zM2649 213l4 -2l6 3l-1 4l-4 0zM2028 459l-2 0l-3 0l1 -4l3 1zM2426 238l3 1l2 4l-3 1l-3 -2zM2356 294l1 0l2 3l-3 1l-2 -2zM2025 670l2 0l0 2l-1 1l-2 -2zM2499 188l2 0l2 1l0 2l-3 -1zM2129 620l0 -6l2 -2l5 0l-3 7zM2412 705l-2 -2l-1 -4l2 0l2 4zM2264 599l0 1l-1 4l-1 -1l0 -3zM2042 740l3 5l-4 5l-4 0l1 -7zM2686 407l-2 -3l1 -2l2 -1l0 4zM1944 350l0 -2l1 -3l1 1l0 2zM2431 256l-4 2l-4 -2l0 -1l5 -2zM2071 739l2 1l0 3l-2 1l-2 -3zM2342 214l2 2l1 3l-2 2l-2 -3zM2393 284l-1 0l-2 0l0 -1l2 -1zM1944 527l3 -1l2 2l-1 2l-3 -1zM2031 218l-1 1l-2 -2l1 -1l2 1zM2148 518l-3 -3l2 -4l1 0l2 5zM2164 241l2 -2l2 0l0 1l-2 2zM2014 529l1 1l0 4l-4 0l-1 -4zM2181 402l1 4l-2 4l-4 -1l2 -5zM2476 526l0 1l-3 -1l1 -2l2 0zM1941 639l-1 -3l1 -4l2 1l0 3zM2152 381l2 2l-2 2l-2 0l0 -3zM2564 773l1 -2l1 0l0 2l-2 0zM2285 560l1 2l-3 2l-1 0l0 -3zM2357 234l2 -1l2 4l-2 0l-3 -2zM2146 700l2 0l2 2l-1 1l-3 -1zM1937 219l4 5l-5 7l-2 -1l-1 -8zM2567 596l2 -1l1 2l0 1l-2 0zM1942 737l0 -4l2 -2l2 2l-2 3zM2588 235l0 -4l3 -3l4 2l-4 5zM2557 287l2 -2l2 1l1 1l-2 1zM2483 417l2 -2l2 0l0 4l-3 0zM2603 214l-2 -1l1 -3l1 0l2 3zM2076 348l0 -3l3 1l0 3l-2 -1zM2426 379l0 -2l4 -1l0 1l-1 2zM2649 191l-4 3l-5 -2l-1 -3l6 -2zM2145 405l0 2l-2 1l-1 -1l1 -2zM2576 398l-4 -1l0 -3l3 0l2 3zM2510 231l-1 -1l1 -3l1 0l1 4zM1962 578l-2 0l-1 -3l1 -1l2 2zM2375 565l0 2l-2 3l-1 -2l1 -3zM2334 229l-3 0l-2 -4l2 -2l2 2zM2472 676l3 -3l11 0l2 5l-11 2zM1948 727l0 -4l1 -2l2 0l1 3zM2070 648l0 -4l2 -3l3 1l-2 5zM2378 297l5 -1l2 3l-1 2l-5 -1zM2325 265l-1 2l-4 0l0 -3l3 0zM2636 346l-3 -1l-2 -4l3 -1l3 4zM2516 733l2 3l-3 4l-3 -2l0 -4zM2049 201l2 -1l6 1l-2 3l-5 0zM2609 363l3 -4l5 0l1 2l-4 3zM2193 298l-2 2l-7 -1l2 -2l4 -2zM2333 544l-3 -2l-1 -4l1 -2l3 3zM2109 737l0 -2l5 -2l0 2l-2 3zM2238 644l1 -4l2 -1l3 3l-3 2zM2156 286l0 -3l3 -3l2 2l-2 4zM2064 583l-1 -2l2 -3l1 1l-1 3zM2251 378l-2 -1l-1 -3l2 -1l2 3zM2296 405l1 9l-4 3l-6 -5l3 -5zM2507 575l1 -2l3 -1l2 2l-3 2zM2696 210l-1 0l-2 -2l1 -1l2 1zM2664 655l-2 1l-3 -3l1 -1l3 1zM2635 740l2 -2l4 -1l2 4l-5 3zM2301 277l-3 2l-4 -1l1 -3l4 -1zM2502 742l3 -1l4 5l0 2l-5 -2zM2512 730l-5 -2l0 -2l2 -3l3 3zM2367 581l0 -2l3 -1l0 2l-1 2zM2159 615l3 -1l3 1l-1 2l-3 0zM2695 477l2 2l-1 1l-1 0l-1 -1zM2518 418l2 -1l1 2l0 1l-3 0zM2280 560l3 0l1 4l-1 2l-3 -3zM2116 483l-2 2l-5 -2l2 -3l3 -1zM2483 276l-1 -1l2 -2l1 0l-1 3zM2692 753l1 -6l4 -2l2 1l-4 7zM2182 215l2 0l4 4l-2 1l-4 -1zM2384 404l-2 1l-1 -2l0 -2l2 1zM2001 588l-3 7l-5 1l-2 -5l7 -4zM2215 693l-3 2l-3 0l-1 -2l3 -2zM2386 354l0 3l-3 2l-1 -1l0 -3zM1968 355l2 4l-5 2l-2 -3l3 -3zM1932 394l-1 1l-1 -1l-1 -1l3 -1zM2329 452l1 -2l3 -4l2 4l-2 2zM2055 721l-5 -1l-2 -3l3 -2l2 1zM2561 629l-5 -1l-1 -1l2 -3l3 2zM2012 348l-3 0l1 -3l2 0l2 1zM2075 388l5 -6l8 3l3 5l-9 1zM2230 624l1 -1l3 0l0 1l-2 1zM2604 499l-2 -2l-2 -6l4 0l2 5zM2060 273l1 6l-9 1l-2 -4l5 -5zM2698 733l-2 -1l1 -3l1 1l1 1zM2289 550l-7 5l-7 -1l1 -4l9 -1zM2506 347l-1 -2l2 -3l2 1l1 3zM2274 612l-2 2l-7 -4l2 -1l4 0zM2067 275l-3 -3l1 -2l2 -1l1 3zM2387 741l0 3l-2 2l-2 -1l2 -3zM2407 252l-3 0l-2 -2l1 -1l4 1zM2209 607l3 2l0 3l-2 2l-2 -2zM2598 365l2 -2l4 1l0 2l-4 2zM2658 338l2 -3l3 0l1 1l-3 3zM1991 633l-1 3l-2 2l-2 0l2 -4zM2081 628l-2 -2l0 -3l2 -2l2 4zM2239 686l2 0l2 2l-1 1l-3 -2zM2306 594l2 1l-1 3l-2 -1l0 -3zM2536 554l-1 3l-4 1l-2 -1l3 -3zM2136 773l-4 -4l-1 -6l5 1l1 5zM2523 275l-3 7l-5 3l-2 -6l6 -3zM1974 669l-3 0l-1 -1l2 -2l2 1zM2183 390l0 3l-1 2l-1 -1l0 -2zM1924 529l2 -3l2 1l0 3l-2 1zM2083 533l-2 -2l1 -2l2 0l0 2zM2362 463l-2 -1l0 -6l2 0l1 4zM2590 195l1 2l-1 5l-1 1l-2 -4zM2523 595l-4 -3l3 -5l4 1l0 6zM1976 731l0 2l-1 1l-1 -1l0 -1zM2499 330l2 -3l4 1l1 2l-4 2zM2690 547l0 -2l2 -2l1 1l-2 2zM2287 243l2 2l-2 3l-2 -1l1 -3zM2312 684l4 0l3 4l-1 2l-5 -2zM1994 378l-2 -2l0 -4l3 0l1 4zM1946 261l3 1l2 5l-2 1l-4 -3zM1926 326l1 -2l3 1l1 2l-4 1zM2436 338l-4 1l-2 -6l3 -4l4 5zM2308 454l-1 5l-4 4l-3 -4l3 -4zM2303 376l0 1l-1 2l-2 -1l1 -2zM2398 629l-2 1l-2 0l0 -2l3 0zM2547 590l3 -2l2 1l-1 3l-2 1zM2106 464l-7 -1l-2 -3l2 -4l7 5zM2667 533l0 -1l1 -1l1 1l-1 1zM2699 323l-3 -1l-3 -4l3 -3l5 5zM2444 294l1 -3l2 0l0 2l-2 1zM2009 201l1 -1l3 1l0 1l-3 0zM2588 296l0 1l-2 4l-2 -1l1 -4zM2020 669l2 4l-1 4l-5 -1l1 -4zM2155 341l1 -3l4 -1l1 2l-4 3zM2175 655l-5 -1l-1 -7l3 -1l3 4zM2497 686l1 1l-1 4l-4 -1l1 -4zM2347 326l-1 -2l2 -2l3 1l-1 3zM2607 199l-2 0l-1 -2l2 -2l2 2zM2119 575l-2 0l-1 -3l2 -1l2 2zM2652 294l1 4l-3 4l-2 -1l1 -6zM2669 730l-5 -1l-4 -8l5 -3l7 8zM2335 415l-2 2l-2 0l-1 -2l2 -1zM1954 763l0 1l-2 1l-1 -2l2 -1zM2222 366l2 -2l3 0l-1 4l-2 1zM2240 508l-3 -2l2 -4l2 0l1 5zM2566 273l-1 2l-1 1l-1 -1l0 -2zM2342 513l2 3l-2 4l-2 -1l-2 -3zM2254 374l2 0l0 2l-1 1l-1 -1zM2209 730l-6 2l-6 -3l-1 -3l9 -1zM2139 716l2 -2l2 1l0 2l-3 1zM2499 451l0 -2l1 -1l1 1l-1 2zM2379 320l-4 0l-1 -5l2 0l3 2zM2450 246l0 3l-2 3l-2 -1l1 -4zM1973 330l-2 -1l0 -3l2 0l1 2zM2508 321l-3 0l0 -1l0 -2l2 1zM2319 394l5 -1l2 2l1 4l-6 -2zM2138 558l-3 -2l-1 -2l2 -2l4 3zM2025 214l2 -2l5 2l0 2l-6 -1zM2091 701l0 2l-2 0l0 -2l1 -1zM1921 273l1 -2l1 -1l1 1l0 2zM2027 298l0 2l-2 1l-1 -2l1 -1zM2134 331l0 -1l1 -2l2 1l-1 2zM2279 372l1 3l-3 2l-2 -2l2 -2zM2036 667l1 -1l1 0l0 2l-1 0zM2561 467l-3 1l-5 -3l1 -3l6 1zM2442 417l-1 0l-2 0l0 -1l2 -1zM2627 688l-4 -1l-1 -4l2 -1l3 1zM2266 765l-3 -2l0 -7l2 -1l3 5zM2179 422l-3 1l-4 -2l0 -2l5 0zM2067 497l0 -2l4 -2l0 2l-1 2zM2253 578l2 -2l2 1l0 2l-2 1zM2682 628l1 8l-4 6l-5 -3l3 -8zM2118 571l3 1l-1 5l-2 2l-2 -5zM2106 405l-4 -5l2 -7l3 2l3 4zM2288 240l-3 -3l2 -4l3 0l1 4zM2670 756l1 3l-3 1l-3 -2l3 -3zM2235 352l-2 -3l1 -2l1 -1l1 3zM2025 658l-2 4l-3 0l-1 -4l3 -2zM2016 615l1 -2l1 -1l1 1l-1 3zM2343 488l-2 5l-4 2l-4 -2l7 -7zM2134 750l1 3l-2 1l-1 0l0 -3zM2548 358l0 2l-5 2l-2 -1l4 -4zM2434 402l1 -3l7 -2l1 5l-4 2zM2298 633l0 -2l1 -1l2 1l-1 2zM2380 466l-1 2l-7 -2l1 -3l4 0zM2588 624l2 -1l0 2l0 1l-2 0zM2704 442l-2 2l-5 3l-2 -3l3 -3zM2084 584l-2 0l0 -1l1 -2l1 2zM2552 405l1 -1l5 -1l0 4l-4 0zM1960 426l-2 0l-1 -4l0 -2l4 3zM2218 648l0 3l-3 3l-2 -3l2 -3zM1989 418l0 2l-1 1l-2 -1l1 -1zM2245 685l-2 -1l1 -3l2 0l0 3zM2584 343l3 0l3 2l-2 1l-3 -1zM2563 570l2 1l1 2l-1 1l-2 -2zM2613 326l3 -1l2 1l-1 2l-2 0zM2533 522l3 0l-1 4l-2 0l-2 -3zM2109 728l-1 -2l2 -2l2 1l0 2zM2082 704l1 3l-1 3l-3 1l0 -3zM2401 270l-1 4l-4 -2l-1 -3l3 -1zM2166 697l3 2l-1 4l-1 0l-2 -5zM1996 610l10 -3l8 6l-4 5l-7 -2zM2404 582l0 1l-5 -1l0 -1l4 -1zM1941 622l2 0l2 0l-1 1l-2 0zM2560 475l-3 3l-4 1l0 -2l2 -3zM2312 586l-1 3l-4 1l1 -2l3 -2zM2555 294l4 0l1 3l0 2l-4 -1zM2029 568l2 0l1 2l0 1l-3 -1zM1926 602l-1 0l-2 -5l2 0l3 4zM2559 417l-3 -2l2 -4l3 0l0 4zM2102 499l-1 -3l2 -1l1 0l-1 4zM2556 637l4 0l4 4l-3 2l-3 -1zM2374 335l-4 2l-4 -5l4 -2l3 1zM2317 671l-2 -1l0 -4l2 0l1 3zM2339 693l3 -2l2 3l-1 2l-3 -1zM2074 269l4 6l-1 4l-5 1l-2 -5zM2459 723l0 -1l3 -2l1 3l-2 1zM2337 375l-2 -1l-1 -3l1 -1l3 2zM2238 351l-2 -1l3 -5l2 2l-1 3zM2003 600l-1 2l-2 0l0 -2l1 -1zM2179 232l0 4l-3 -1l0 -2l2 -2zM2533 679l1 -3l2 1l1 1l-1 1zM2168 533l3 2l0 5l-1 0l-3 -3zM2050 398l-2 1l-3 -1l1 -1l2 0zM2526 415l-7 -3l-1 -10l4 0l7 6zM2538 569l0 -1l2 -1l1 1l-1 1zM2397 717l-3 2l-4 0l-1 -2l5 -2zM2595 300l3 0l5 5l-2 4l-6 -3zM2035 719l-1 -1l0 -2l1 0l1 1zM2331 298l-2 1l-4 -3l1 -3l4 2zM2055 429l2 -4l6 -3l0 4l-2 2zM2661 307l1 -3l4 1l1 2l-3 1zM1951 277l-3 -1l1 -5l2 1l1 4zM2562 323l5 -1l5 1l-1 3l-4 0zM2548 536l3 -2l4 0l2 4l-7 1zM2170 314l-1 -2l1 -3l3 0l0 4zM1985 654l0 -1l2 -2l1 1l-1 2zM2592 238l-5 2l-4 -1l2 -3l3 0zM2294 572l4 3l0 4l-4 1l-2 -4zM2627 251l3 2l-3 8l-5 -1l1 -7zM2199 305l2 -1l4 0l2 2l-5 1zM2536 537l-2 1l-2 -1l0 -1l3 0zM2626 554l2 -1l3 2l-1 2l-3 0zM2392 765l0 4l-3 2l-4 -2l3 -4zM2360 566l2 -1l2 1l0 2l-2 1zM1941 706l2 -1l3 1l0 2l-4 0zM2451 213l-2 2l-5 0l2 -3l2 -1zM2405 496l-3 0l-1 -1l0 -2l3 2zM2523 440l1 -1l2 1l0 1l-3 0zM2694 537l-2 -1l0 -3l1 0l2 3zM2290 705l-4 -2l-1 -3l2 -2l2 3zM2101 613l-2 -1l-4 -6l3 -1l5 2zM2513 746l3 1l1 4l-2 3l-4 -5zM2530 304l-1 0l-1 -3l2 0l2 1zM2437 528l1 -1l3 0l0 2l-3 0zM1929 396l-2 3l-3 0l0 -2l3 -1zM2414 562l-2 1l-3 -1l1 -2l4 0zM2268 538l1 2l-2 2l-2 0l1 -3zM2282 313l4 3l-1 6l-6 -2l0 -6zM2623 556l2 4l-1 4l-4 0l-1 -6zM2437 579l3 0l0 2l-1 0l-2 -1zM2054 595l1 -5l4 -5l5 2l-4 6zM2090 368l-3 1l-4 -3l2 -3l5 2zM2341 418l-1 3l-7 -3l2 -4l4 0zM2263 574l3 2l1 3l-5 1l-1 -2zM2111 661l-3 3l-3 0l0 -3l2 -1zM2183 654l0 -1l2 0l0 2l-2 0zM2540 571l1 -1l2 0l1 1l-2 1zM2426 290l-2 -3l-1 -4l1 0l3 3zM2248 725l2 -1l3 1l1 3l-3 0zM2571 276l-1 -3l1 -3l3 0l-1 5zM2260 625l2 -6l8 -2l1 3l-3 6zM2643 276l-2 -1l1 -2l2 -1l0 3zM2444 348l1 3l-3 1l-1 -1l2 -3zM1984 510l-1 -2l1 -1l2 1l-1 2zM2475 205l1 4l-3 2l-2 0l1 -6zM2630 732l-2 -2l0 -3l2 0l1 3zM2089 633l4 2l-2 7l-3 -1l-3 -6zM2045 329l-1 0l-1 -1l0 -1l2 1zM2407 413l-2 -2l2 -3l2 0l0 3zM2039 233l7 0l3 2l-1 3l-7 -1zM2371 660l0 -4l8 -3l1 4l-7 5zM2093 760l3 2l-1 4l-4 0l-1 -4zM2399 328l1 3l-3 7l-2 0l-2 -6zM2539 199l3 8l-7 7l-7 -5l3 -7zM2527 730l1 0l1 3l-2 0l-1 -1zM2396 602l0 1l-3 2l-1 -1l2 -2zM1961 349l3 -4l4 -1l2 4l-3 2zM2059 387l-3 6l-7 4l-4 -7l6 -5zM2689 562l-2 1l-2 0l1 -2l1 -1zM2025 357l2 0l-1 2l-2 0l0 -2zM2553 744l0 -2l4 -2l0 2l-2 3zM2019 199l3 2l1 4l-1 2l-4 -5zM2326 548l-1 -1l-1 -2l1 -1l2 2zM2239 776l0 -3l3 -2l2 1l-1 2zM2055 769l7 -1l2 4l-4 5l-4 -1zM2523 290l3 -2l5 -1l0 3l-3 2zM2268 346l-2 1l-2 -1l2 -3l2 1zM2436 414l-2 0l0 -2l1 -1l1 2zM2650 343l1 -4l2 -3l1 2l-2 4zM2363 762l-3 -2l1 -1l1 -2l2 3zM2370 555l-1 2l-1 -1l0 -1l1 -1zM2128 460l-2 1l-2 -2l2 -4l3 2zM2286 272l-1 2l-3 3l-2 -1l3 -4zM2697 551l1 0l1 2l-2 1l-1 -1zM2593 679l-3 -1l1 -5l1 -2l2 5zM1954 281l1 -2l3 0l2 2l-4 1zM2174 558l2 0l1 2l-2 1l-1 -1zM2655 611l4 0l3 5l-3 1l-3 -2zM2575 328l2 2l0 3l-3 0l-1 -2zM2027 223l2 1l1 7l-1 1l-3 -5zM2014 577l1 2l0 1l-1 1l-1 -2zM2073 713l2 0l1 2l-1 2l-2 -2zM2700 588l4 4l-1 2l-3 3l-3 -4zM2046 759l1 1l-1 3l-1 -1l0 -3zM2263 331l3 1l7 6l-4 3l-7 -5zM2369 477l2 0l1 2l-1 1l-2 0zM2468 237l-3 0l-1 0l-1 -1l3 -1zM2628 565l0 2l-1 2l-2 -1l0 -3zM1931 640l1 -2l3 1l0 1l-3 1zM2020 598l3 5l-5 6l-4 -4l2 -6zM2673 402l3 -1l2 0l1 1l-3 2zM1975 537l-1 3l-5 2l-3 -5l4 -3zM2689 433l-1 2l-5 2l0 -2l3 -2zM2448 624l-2 3l-7 -3l1 -3l5 0zM2593 380l-3 -2l3 -6l3 1l0 5zM2497 413l4 -2l4 0l-2 4l-4 1zM2096 428l1 -1l2 1l-1 1l-1 1zM2453 541l1 3l-2 4l-3 -2l0 -4zM2466 743l1 0l2 1l-1 2l-2 -1zM2526 401l-1 -1l-1 -2l1 -1l2 3zM2355 356l1 -3l3 0l1 2l-3 1zM2219 282l-2 0l-1 -2l2 -1l1 2zM2386 307l-3 1l-4 -3l3 -3l3 0zM2698 242l4 0l2 2l-3 4l-4 -1zM2569 451l-1 -1l1 -2l1 1l0 1zM2560 687l1 3l0 2l-2 1l-1 -4zM1947 318l-1 -3l1 -2l2 2l-1 2zM2418 343l0 -3l3 -1l1 3l-1 3zM2372 359l4 -2l3 1l-1 3l-4 0zM2292 202l4 1l0 6l-3 0l-3 -3zM2611 287l-2 1l-2 -1l0 -2l3 0zM2020 564l-1 -4l2 -2l3 0l0 4zM2580 274l3 -2l4 -1l0 5l-3 1zM2147 220l1 1l0 2l-2 0l-1 -2zM2399 730l0 -4l1 -2l3 0l-1 4zM2169 242l1 0l2 2l-1 2l-2 -2zM2059 303l-2 -3l2 -6l3 0l1 5zM2319 538l1 2l-1 2l-3 0l1 -3zM2225 550l2 -3l5 0l0 4l-4 1zM2187 310l-6 1l-4 -2l1 -5l7 1zM2690 363l1 4l-2 2l-3 -4l2 -2zM2264 299l-2 -5l3 -4l4 -1l-2 7zM1968 763l2 -2l1 1l0 1l-2 1zM2010 622l-1 -2l3 -2l1 1l-1 2zM2668 374l1 2l0 0l-2 1l0 -2zM2216 273l-2 2l-1 0l-2 -2l4 -2zM2246 311l0 -1l2 -2l2 1l-2 3zM2302 486l1 5l-6 5l-2 -4l1 -5zM2680 656l-1 -3l2 -2l3 0l-1 3zM2581 630l-3 5l-5 -3l0 -5l6 1zM2413 588l0 3l-6 7l-2 -4l2 -6zM2109 521l0 -4l5 -5l2 3l-3 5zM2218 759l-2 -1l-1 -2l2 -2l2 2zM2603 635l-1 3l-3 1l-1 -1l3 -3zM2000 632l-2 -3l-1 -3l3 -3l3 5zM2574 387l0 4l-5 2l-1 -3l1 -2zM2233 598l-3 -1l0 -2l1 -3l2 3zM2460 550l-3 -2l0 -5l2 0l2 5zM2610 699l-2 -2l0 -2l3 0l1 2zM2238 515l2 -2l3 -1l1 2l-2 2zM2042 434l-2 -1l1 -6l4 -1l1 6zM2222 764l3 -2l3 3l0 2l-4 1zM2640 653l0 1l-1 2l-1 -1l0 -2zM2460 271l-2 0l-1 -2l1 -1l3 2zM1925 320l0 2l-2 1l-1 -1l1 -1zM2561 290l-5 6l-8 -1l-2 -6l9 -3zM2226 673l3 0l1 1l-1 2l-2 -2zM1995 242l-3 0l1 -4l2 -1l0 4zM2599 438l-1 -2l0 -2l3 1l0 2zM2063 390l-5 -1l-1 -4l3 -2l4 5zM2084 407l0 -1l1 -3l1 1l-1 3zM2343 706l1 -1l2 1l-1 2l-1 -1zM2262 552l2 -2l4 2l0 3l-5 0zM2564 641l3 -4l5 0l1 5l-3 3zM2239 387l-2 3l-3 -1l-1 -3l4 -2zM1981 554l-2 0l0 -3l1 -1l2 4zM2664 402l-1 2l-3 0l-1 -2l2 -1zM2600 444l-2 3l-3 2l0 -2l3 -4zM2554 751l0 -1l2 0l1 1l-2 2zM1995 346l2 -4l10 -1l2 3l-10 4zM2637 476l-2 -1l-2 -2l1 -2l3 1zM2337 660l2 -1l3 1l-1 2l-3 0zM2338 380l-1 8l-6 2l-5 -6l4 -7zM1979 209l4 2l0 4l-3 1l-3 -3zM2136 710l-1 -2l2 -3l2 0l-1 3zM2241 735l2 -2l5 1l0 3l-6 2zM2148 354l0 -3l1 -3l3 2l-1 3zM2104 617l2 -5l8 2l-1 7l-7 0zM2187 577l1 -1l3 2l0 0l-3 0zM1969 359l3 5l-4 5l-2 -1l0 -6zM2011 413l-5 2l-3 -4l2 -2l5 1zM1980 721l2 -1l7 0l0 2l-7 2zM2105 239l-3 -1l0 -1l2 -1l1 1zM1942 653l0 2l-3 0l-1 -2l3 -1zM2282 684l1 -3l3 -2l2 2l-2 3zM2310 703l3 -2l4 1l-1 3l-4 0zM2070 643l-2 -3l3 -3l2 1l-1 3zM2126 590l-2 1l-1 -2l1 -1l2 1zM1998 738l-2 -1l2 -4l2 1l1 3zM2244 670l-1 -2l1 -1l2 -1l0 3zM2374 556l1 1l-1 2l-2 1l0 -4zM2147 368l2 -1l2 1l1 2l-4 -1zM2647 743l2 1l1 2l-2 1l-1 -1zM2120 281l-1 3l-4 2l-2 -5l3 -2zM2440 572l-1 -2l1 -1l1 0l1 2zM2252 410l2 1l1 1l-2 1l-2 -1zM2430 370l2 0l1 2l-1 0l-2 -1zM2529 555l4 -8l4 -3l4 3l-6 7zM2078 312l-4 -2l-2 -5l5 -3l3 4zM2558 386l1 -1l1 3l-1 1l-2 -2zM2657 627l-4 3l-5 -1l0 -2l6 -2zM2305 727l2 1l-2 2l-1 -1l0 -2zM2191 266l-2 -1l2 -3l2 -1l0 4zM2260 479l-2 1l-3 -2l-1 -3l4 1zM2561 343l-3 -4l-1 -4l3 -1l3 6zM2645 278l3 0l2 3l-2 1l-4 -1zM2038 285l5 -1l4 2l-2 4l-6 -2zM2491 577l-1 0l0 -2l2 -1l1 2zM2519 677l-2 -1l0 -1l1 -1l1 2zM2472 204l1 -1l1 -1l1 2l-1 1zM2400 516l1 -3l4 0l1 1l-3 2zM2116 394l2 2l2 3l-4 1l-1 -3zM2656 295l-3 1l-3 -3l-1 -2l6 1zM1925 718l3 1l1 9l-5 0l-2 -6zM2189 213l1 -3l4 0l1 3l-2 1zM2518 701l6 -1l3 4l-2 3l-6 -2zM2423 634l2 2l0 2l-2 1l-1 -3zM2343 539l2 0l2 2l0 1l-3 -1zM2465 278l1 2l-1 5l-2 1l-1 -5zM2634 225l2 1l0 2l-2 1l-1 -3zM2403 639l2 -2l3 4l0 1l-5 -1zM2163 701l-3 0l-2 -2l1 -1l3 1zM2560 208l-2 1l-3 -3l1 -1l3 1zM2385 192l-2 2l-8 -1l2 -2l5 -2zM2113 592l2 -2l1 0l1 0l-2 2zM2101 279l2 -2l4 1l2 4l-6 0zM2534 350l-2 0l-1 -2l1 -1l2 0zM2670 244l2 -2l4 1l-1 3l-3 1zM2382 272l1 0l2 6l-3 2l-1 -4zM2062 430l-2 -1l-2 -2l2 -2l2 3zM2172 536l0 3l-2 3l-3 -1l2 -5zM2599 307l0 3l-6 0l0 -2l2 -3zM2667 208l-1 -2l2 -1l1 0l0 1zM2517 635l-3 -1l-1 -2l1 -2l3 2zM2444 364l0 1l-3 0l-1 -3l3 0zM2652 452l1 -2l5 1l0 2l-3 1zM2454 381l-2 4l-6 2l-2 -1l5 -7zM1957 546l1 -4l5 0l2 1l-5 4zM2236 214l-1 1l-1 1l-1 0l1 -3zM2583 235l-1 4l-5 0l-2 -2l4 -5zM2512 297l-2 -3l0 -3l2 0l1 4zM2032 760l-1 -7l5 -3l3 -1l-4 8zM1995 656l2 4l-1 3l-3 0l0 -4zM2566 635l2 -1l3 1l0 2l-4 -1zM2568 762l-3 -1l0 -3l1 -2l2 4zM2642 704l2 1l0 2l-1 0l-1 -2zM2317 604l-1 -3l0 -3l2 1l1 3zM2328 544l0 0l2 1l0 2l-2 -1zM2231 407l-1 4l-2 1l-1 -1l1 -3zM2659 341l0 -2l2 -1l2 1l-1 1zM2015 752l0 -1l1 -2l2 1l-1 3zM2206 649l-4 5l-4 -1l-2 -2l6 -4zM2358 620l-1 -1l2 -2l1 0l0 2zM2570 627l0 3l-4 1l-1 -3l4 -1zM2115 329l1 2l0 1l-2 0l0 -1zM2186 458l1 -2l5 0l1 2l-5 2zM2266 370l0 -2l3 -1l1 1l-2 2zM2290 711l2 1l-1 3l-1 0l-1 -3zM2585 377l0 -3l1 -3l2 1l0 5zM2685 186l4 -1l4 1l-1 3l-3 1zM2487 385l4 -1l2 1l-1 4l-4 -1zM2202 380l-1 -1l2 -2l1 0l0 2zM2509 605l-1 -3l2 -2l2 1l-1 3zM2301 394l2 0l3 4l-2 1l-3 -2zM2467 448l-2 1l-4 -1l2 -3l2 0zM2390 330l1 3l-2 5l-3 -3l0 -2zM2242 230l1 -1l2 0l1 1l-2 2zM2611 744l3 -3l4 1l0 2l-6 1zM2258 384l2 3l-1 4l-3 -1l0 -4zM2022 319l-1 -1l1 -1l1 0l0 1zM2694 546l0 -3l3 0l0 1l-2 2zM2004 399l4 1l3 3l-4 4l-3 -4zM2449 633l1 0l1 1l-1 1l-1 0zM2566 549l2 -3l3 0l1 2l-3 3zM2701 270l-3 4l-2 1l-1 -4l4 -3zM2490 205l2 2l1 3l-2 1l-1 -4zM2684 407l-1 2l-4 -1l1 -2l2 0zM2628 277l-4 0l-3 -3l3 -2l4 2zM2681 386l4 -8l7 1l3 4l-7 5zM2223 606l3 1l0 3l-3 1l-1 -4zM2273 217l3 -3l3 0l1 4l-4 2zM2594 700l-1 -2l0 -3l2 0l1 4zM2412 500l-3 0l-1 -2l1 -2l4 2zM2023 546l1 -4l5 -2l1 3l-3 4zM1986 234l0 -1l2 -3l1 3l-1 2zM2422 609l-4 -1l-4 -4l3 -2l4 3zM1931 536l1 2l-3 3l-3 -2l2 -5zM1984 410l0 -9l5 -2l5 0l-4 8zM2216 461l-5 4l-4 -4l3 -7l6 2zM2672 412l6 -3l5 4l-3 2l-6 0zM2512 386l-2 -4l3 -4l3 1l-1 4zM2215 729l-1 2l-4 -1l2 -2l1 0zM2645 573l0 -1l2 -1l1 2l-2 1zM2229 722l4 -1l5 2l-1 4l-6 -1zM2489 654l3 1l4 6l-2 2l-4 -4zM2283 353l2 -1l3 0l-1 3l-2 0zM2225 234l-2 1l-1 -1l-1 -2l2 0zM1945 549l-2 0l1 -2l1 0l1 1zM2703 770l-1 2l-4 0l-1 -2l3 -1zM2268 727l1 -2l4 -2l0 3l-3 2zM2687 711l-7 3l-8 -2l2 -8l7 1zM2128 674l-2 1l-2 -2l1 -2l2 1zM2622 284l0 4l-2 2l-4 -1l1 -3zM2329 402l-4 1l-8 -9l5 -2l7 2zM2421 247l1 -1l2 -1l0 1l-2 2zM2436 346l1 3l-3 2l-2 -1l2 -4zM2136 598l-2 -2l2 -3l2 1l1 3zM2171 524l2 -1l3 0l-1 3l-4 0zM2496 559l-6 2l-7 -5l-1 -3l13 1zM2490 541l-2 -2l0 -2l3 -1l1 2zM2182 659l-1 -2l3 -3l2 1l-2 4zM2497 699l-2 0l-1 -5l3 0l2 3zM2549 701l2 1l0 3l-3 1l0 -3zM1956 524l3 -2l4 1l-1 4l-3 0zM2390 682l3 4l-4 3l-3 -3l2 -3zM2384 775l-2 -1l-1 -2l2 -1l2 2zM2525 329l3 0l1 5l-3 1l-2 -2zM2281 363l0 -1l1 -2l1 1l-1 2zM2693 207l-6 2l-3 -5l2 -4l6 1zM2394 299l0 0l-1 3l-1 0l0 -2zM2079 446l-2 2l-2 -2l1 -1l1 -1zM2356 355l-1 1l-1 -1l0 -2l3 0zM2296 718l3 0l0 5l-1 0l-3 -3zM1983 703l-2 -1l2 -4l2 1l0 3zM2158 591l-1 4l-4 3l-3 -2l3 -4zM2222 472l-1 -3l5 -4l1 3l-2 4zM2411 603l-1 0l0 -3l2 0l1 2zM2422 315l-1 3l-1 1l-2 -1l2 -2zM2605 216l0 -1l3 0l0 1l-2 2zM2616 360l1 1l-1 2l-1 -1l0 -2zM2694 373l-2 -1l0 -4l3 0l1 3zM2220 284l1 0l1 1l0 2l-3 -1zM2641 223l0 -4l3 -4l3 3l-2 4zM2431 642l-2 -2l1 -3l1 0l1 3zM2601 610l-1 -2l3 -1l1 2l-1 2zM2106 584l0 -2l2 -3l1 1l-1 3zM2157 252l0 2l-2 2l0 0l0 -3zM1963 693l-1 -2l-1 -2l1 -2l2 4zM2092 605l-2 2l-3 -2l-1 -2l4 0zM1948 271l-5 4l-6 -1l-2 -5l10 0zM2036 773l-1 2l-3 0l1 -1l1 -2zM2427 430l-1 2l-1 0l0 -2l0 -1zM2607 328l0 -5l6 -2l1 3l-4 6zM2602 559l0 3l-4 2l-1 -2l2 -3zM2416 392l-3 -2l-1 -4l3 0l3 3zM2143 384l-2 1l-2 -1l1 -1l2 -1zM2693 555l-3 2l-2 0l0 -2l3 -2zM2232 352l2 -4l7 2l-1 3l-5 2zM2194 461l3 -2l2 1l0 2l-3 0zM2660 680l4 1l0 2l-3 2l-2 -3zM2265 674l1 0l-1 2l-1 0l0 -1zM1921 470l4 -2l4 4l-2 2l-4 -2zM2366 755l1 -2l2 0l1 1l-3 2zM2123 683l-3 1l-3 -2l2 -4l4 1zM1996 601l1 1l-2 1l-2 0l1 -2zM2182 774l-2 -1l-1 -2l1 -1l2 2zM2258 616l-4 -1l0 -6l2 -2l4 6zM2473 273l4 0l3 6l-4 0l-3 -3zM2456 439l-2 0l-2 -3l1 -2l4 3zM2000 728l-2 -2l0 -2l2 -1l2 3zM2699 282l0 -2l2 -1l2 1l-2 2zM2214 373l-2 0l0 -2l1 -1l1 2zM2644 282l0 2l-3 2l-1 -2l0 -1zM2216 610l2 2l-1 1l-3 1l0 -2zM2084 732l-2 2l-4 -1l0 -3l4 1zM2577 600l2 -2l1 1l0 1l-2 1zM2249 750l0 -3l2 -1l3 0l-2 4zM2446 637l-1 0l-2 0l1 -2l1 0zM2252 670l-2 1l-5 -3l2 -2l2 0zM2642 690l-2 -3l0 -5l2 1l1 5zM2632 325l-1 2l-3 0l0 -1l2 -2zM2187 437l-1 -2l0 -2l2 0l1 3zM2478 615l-2 1l-1 -1l1 -2l1 0zM2487 537l2 -2l4 2l-1 2l-5 0zM2494 270l1 3l-1 3l-3 -2l0 -2zM2530 232l5 2l0 3l-5 2l-1 -4zM2287 742l0 -3l1 -2l1 0l0 2zM2562 619l-1 6l-7 2l-2 -2l4 -5zM2095 413l-2 -8l4 -5l5 2l0 7zM2377 585l1 0l3 1l-1 2l-2 -1zM2656 202l0 3l-2 3l-1 -2l0 -2zM2278 371l1 2l-1 3l-3 -1l1 -3zM2387 337l-3 -1l0 -2l2 -1l1 2zM2567 650l0 4l-6 1l-2 -3l5 -3zM2559 655l2 2l0 1l-1 2l-2 -3zM2632 670l-1 2l0 1l-2 -1l1 -2zM2520 412l2 -2l2 1l-1 2l-2 0zM2161 387l1 -1l2 0l0 2l-2 0zM2201 688l-1 2l-3 0l-1 -1l3 -2zM2293 281l-7 4l-3 -5l2 -5l5 1zM2093 557l-2 -2l-1 -5l2 1l2 3zM2146 260l2 2l-2 5l-3 -1l0 -5zM2445 284l-3 -1l0 -1l1 -2l2 2zM2022 314l0 2l-2 1l-1 -2l1 -1zM2526 275l-1 -2l2 -2l1 2l-1 2zM1995 431l-1 -2l1 -5l3 1l1 5zM2157 662l2 1l0 1l-2 0l-1 -1zM2504 369l-2 0l-1 -2l1 0l2 1zM2018 564l-1 -1l1 -3l3 1l-1 2zM2634 612l-1 1l-2 0l0 -1l2 -1zM2501 529l-2 -3l1 -3l2 0l2 4zM2605 274l-1 -5l2 -4l4 -1l-2 7zM2578 754l0 -1l3 0l1 1l-3 1zM2150 392l-1 2l-4 0l-1 -1l4 -2zM2130 253l-4 -1l-3 -5l1 -3l5 4zM2175 666l1 -2l5 0l0 3l-4 2zM2048 664l2 -2l1 0l1 3l-3 1zM2296 422l-2 1l-7 -1l1 -3l6 0zM2704 701l-2 2l-9 -4l1 -2l7 0zM2513 365l5 1l3 4l-2 3l-4 -3zM2358 353l-2 1l-2 0l1 -2l2 0zM2014 367l1 -1l1 0l0 2l-2 1zM2007 670l0 2l-4 1l-2 -1l3 -3zM2010 357l1 -3l3 2l0 2l-2 1zM2637 193l-1 2l-2 1l-1 -2l2 -1zM2193 541l2 1l-1 3l-2 -1l0 -3zM2098 646l2 0l0 4l-2 0l-2 -2zM1941 332l-4 2l-4 -2l1 -2l6 0zM2479 221l1 2l0 4l-2 1l-1 -4zM2665 466l0 -2l2 -1l1 2l-2 1zM2175 216l-4 -2l-3 -6l2 -3l6 5zM2481 687l-1 -2l1 -2l3 1l-1 2zM2038 445l-4 3l-2 -1l0 -2l3 -1zM2229 625l-2 -2l3 -5l4 2l-2 4zM2615 401l2 5l-1 4l-3 0l-1 -5zM2003 403l2 -2l3 -1l1 2l-2 2zM2078 757l4 1l6 3l-4 4l-3 0zM2644 531l0 5l-8 3l-1 -4l4 -3zM2016 326l0 4l-3 4l-2 -1l1 -6zM2543 201l4 1l1 3l-2 2l-3 -2zM2617 389l-2 3l-5 2l-3 -3l4 -6zM2543 370l-1 -1l-1 -2l2 -1l1 2zM2018 574l-2 -5l5 -4l2 4l-2 4zM2550 332l-2 2l-2 0l-1 -2l3 -1zM1975 524l0 3l-5 2l0 -2l1 -3zM1943 406l1 -4l3 -3l3 3l-2 3zM2549 744l3 3l-1 3l-3 0l-2 -4zM2325 190l2 2l1 5l-4 -1l-1 -4zM2002 210l1 -3l5 0l0 2l-4 2zM2192 454l5 6l0 11l-8 3l-5 -16zM2346 380l-3 -1l-2 -3l2 -2l3 3zM2020 545l2 -5l10 -6l2 5l-4 5zM2253 635l-1 4l-8 -2l2 -4l5 -1zM2688 569l-2 2l-2 -1l0 -2l2 0zM2702 766l-1 1l-1 1l-1 -1l1 -2zM2480 293l-2 -1l2 -5l2 1l0 3zM2131 579l0 1l-4 2l-1 -3l2 -2zM2534 593l-2 -1l0 -3l2 0l1 2zM2649 572l0 1l-2 2l-1 -1l1 -2zM2666 370l3 -4l3 -1l1 4l-2 2zM2376 671l-1 -1l0 -2l2 0l1 2zM2376 246l0 2l-5 2l-2 -3l3 -3zM2035 356l1 -1l1 2l0 1l-2 -1zM2628 395l4 0l0 4l-2 2l-2 -3zM2600 391l-3 0l-2 -2l1 -2l3 0zM2071 661l5 -2l6 1l-2 6l-4 1zM2059 713l3 0l3 3l-2 2l-3 -2zM2397 353l1 2l-1 1l-2 1l-1 -3zM1959 262l-2 -3l0 -5l2 0l3 3zM2125 384l3 2l0 5l-4 0l-1 -3zM1990 337l-2 1l-6 -2l0 -3l7 0zM2520 749l-1 0l-1 0l0 -2l2 1zM2110 714l-1 -1l0 -2l3 -1l0 3zM2221 331l-6 4l-5 -2l-2 -5l8 -1zM2577 665l4 -4l5 1l0 4l-5 2zM2460 712l3 0l3 4l-3 3l-3 -2zM2587 667l-2 -3l3 -2l4 1l-1 3zM2664 308l-1 -2l2 -1l2 1l-2 2zM2140 223l-2 8l-5 0l-1 -4l4 -4zM2292 585l2 1l2 2l-2 1l-2 -3zM2005 285l1 -2l4 1l0 1l-4 1zM2478 692l0 -1l1 -2l1 1l-1 2zM2040 573l2 3l-3 1l-2 -1l2 -3zM2492 440l1 0l2 2l-1 1l-2 -2zM2013 239l-3 -2l-1 -2l1 -2l3 3zM2262 627l0 -3l1 -1l2 0l0 4zM2011 681l-3 2l-3 -1l1 -2l2 -1zM2290 522l3 7l-1 4l-6 1l0 -8zM2022 680l-5 2l-5 -3l2 -4l5 1z"/>
<path fill="rgb(176,166,149)" d="M2115 376l3 3l0 4l-4 3l-2 -7zM2613 399l3 5l1 9l-4 0l-4 -8zM2232 621l1 2l-1 2l-1 0l-1 -2zM1946 673l2 1l1 1l0 1l-3 -1zM2181 189l-2 3l-3 -3l1 -3l3 0zM1942 313l3 0l1 2l-2 2l-2 -2zM2012 627l3 -2l3 1l0 3l-3 1zM1965 610l0 -3l2 -3l2 1l-1 4zM1954 742l-2 0l-2 -2l2 -1l3 1zM2573 350l-1 -2l2 -2l1 1l-1 3zM2221 381l1 -1l2 1l0 1l-2 0zM2155 344l-2 0l-3 -3l3 -2l2 1zM2465 557l-1 -1l-1 -3l2 -1l1 3zM2318 761l-3 1l-1 -2l1 -2l3 0zM2295 734l0 -3l2 -2l0 2l-1 2zM2433 417l-1 -2l1 -1l2 1l0 1zM2395 276l-4 2l-4 -2l0 -2l6 -1zM2548 603l-2 7l-10 5l-8 -5l13 -10zM2453 359l4 2l1 7l-5 2l-5 -5zM2397 663l3 1l1 2l-1 2l-3 -3zM2411 760l-3 -1l-2 -3l3 -1l3 3zM1963 244l-5 -5l0 -6l5 -1l3 5zM2700 261l-5 -3l-1 -6l5 0l3 6zM2183 680l2 -4l3 -2l1 3l-1 3zM2637 653l1 4l-3 5l-2 -2l1 -6zM2489 310l-1 2l-2 -1l0 -2l2 0zM2495 418l-2 -5l2 -3l4 0l-1 5zM2024 627l6 2l1 2l-3 4l-5 -5zM2023 665l-5 -1l-4 -4l4 -2l3 2zM2676 274l1 3l-1 1l-3 -1l0 -3zM2046 774l-1 -1l1 -1l1 -1l0 2zM2566 395l-6 -3l-1 -7l3 1l4 3zM2015 575l-1 -1l0 -2l2 0l1 2zM1949 544l-3 -1l-1 -3l1 -1l3 2zM2382 619l-2 0l-1 -1l0 -1l2 0zM2118 664l-2 0l-2 -3l1 -1l3 1zM2024 225l-1 0l1 -3l1 0l1 2zM2680 379l-1 1l-1 0l0 -2l2 0zM2367 368l0 2l-5 2l-1 -4l3 -2zM1985 292l-3 -2l-1 -6l3 -1l2 5zM2112 436l-2 -2l1 -4l1 -1l1 6zM2542 735l1 1l-3 3l-2 -2l1 -3zM2537 428l-1 -2l3 -1l1 2l-1 2zM1984 688l0 -5l3 -2l3 1l-1 4zM2028 744l1 2l-1 1l-1 -1l0 -1zM2603 689l-7 -2l-3 -6l2 -1l5 3zM2272 372l5 -4l5 -2l2 3l-7 5zM2173 611l-4 0l-3 -2l1 -4l4 2zM2024 576l-4 -2l-3 -7l4 -1l3 6zM2114 751l0 2l-2 0l-1 -1l1 -1zM2047 291l0 -3l1 -1l2 1l-1 2zM2364 761l-3 -1l-2 -2l3 -3l2 2zM2276 184l1 4l-2 3l-3 -1l-1 -3zM2223 516l0 -2l2 -3l2 2l-2 2zM2142 586l3 -2l3 0l0 3l-3 1zM1947 302l-1 -1l2 -1l2 2l-2 1zM2526 737l-1 6l-3 1l-4 -3l4 -4zM2667 593l-1 -3l3 -3l1 0l0 5zM2238 629l0 2l-1 4l-3 -1l1 -3zM2683 203l3 1l4 5l-3 2l-3 -2zM2622 201l-5 0l-5 -5l2 -3l7 3zM2532 401l2 -5l3 -1l2 2l-3 4zM2651 584l-1 1l-2 0l0 -2l3 0zM2452 589l-2 1l-1 0l0 -1l2 -2zM2448 715l0 1l0 2l-1 0l-1 -2zM2050 567l0 2l-3 0l0 -1l2 -1zM2227 402l1 2l0 1l-2 0l-1 -2zM2660 404l-2 1l-2 -1l1 -1l2 -1zM2346 340l0 2l-1 1l-2 0l0 -3zM2037 452l-2 4l-5 1l0 -2l3 -3zM2385 236l-1 -1l3 -2l1 1l-1 1zM2505 297l1 -2l3 -1l2 2l-2 3zM2286 417l0 -5l7 -4l1 3l-4 7zM2535 529l0 3l-3 0l-1 -1l2 -2zM2413 638l-2 -3l2 -7l4 2l0 4zM2613 655l-2 1l-1 -4l2 -2l2 4zM2012 267l2 0l4 3l-1 2l-4 0zM2192 282l-4 -2l0 -2l1 -2l3 2zM2076 755l6 2l2 5l-5 4l-5 -6zM2621 502l-3 -1l-2 -4l2 -2l4 4zM2568 588l-1 -2l2 -2l1 1l0 2zM2025 233l2 0l1 1l-1 2l-2 -1zM2536 233l3 2l1 4l-4 1l-2 -3zM2408 637l-2 -3l0 -2l3 -2l1 5zM2243 327l3 2l0 5l-4 -1l-1 -3zM2411 446l7 3l4 10l-5 1l-7 -7zM2454 204l-8 0l-4 -5l0 -6l11 4zM2182 221l3 -2l5 2l-1 2l-4 1zM2022 198l2 -2l5 0l-1 2l-3 1zM2149 533l-4 -3l0 -4l6 -1l1 5zM2055 598l4 -1l4 2l-2 3l-2 0zM2055 202l-1 4l-4 3l-2 -4l2 -3zM2595 556l-1 -4l-1 -3l3 -1l2 4zM2434 587l-3 -2l1 -5l2 -1l2 4zM2476 626l0 -4l2 -1l2 1l-1 4zM2041 656l2 1l1 5l-3 1l-2 -5zM2206 541l0 -2l3 0l0 2l-2 0zM1970 754l-4 -3l-1 -10l3 0l4 7zM2134 541l3 0l5 2l0 4l-9 -2zM2135 213l-1 -2l0 -2l2 0l1 2zM2245 629l3 0l2 1l-1 2l-3 -1zM2541 359l-2 -2l1 -3l2 0l0 3zM2026 361l-4 -2l-1 -4l2 0l4 3zM2494 276l-3 0l0 -3l2 -1l1 1zM2598 405l1 -2l2 0l0 2l-2 1zM2665 755l-3 5l-2 2l-2 -3l2 -3zM2545 721l-2 0l0 -3l1 -1l2 2zM2343 613l-2 -3l3 -4l2 2l0 6zM2450 366l4 1l1 5l-4 2l-3 -6zM2113 672l2 -3l3 0l1 3l-3 1zM2348 469l2 4l-2 3l-3 -2l0 -3zM2147 649l1 2l-1 3l-2 0l-1 -3zM2637 304l1 2l-1 3l-2 -1l0 -2zM2016 214l-2 0l-1 -4l1 -1l3 2zM2330 280l-5 2l-5 -4l1 -2l8 0zM2159 231l-1 -1l2 -2l2 0l0 3zM2386 669l2 -3l2 -1l3 2l-3 2zM2010 339l1 3l-2 2l-3 -2l2 -2zM2336 753l1 2l-1 1l-2 -1l1 -2zM1959 654l4 -2l4 2l0 3l-5 0zM2065 501l-2 2l-3 1l-1 -1l4 -2zM2681 589l0 -1l0 -2l2 0l0 3zM2461 232l-1 -2l0 -3l3 0l1 3zM2448 739l-1 -6l4 -5l4 3l-2 7zM2325 285l0 1l-3 1l-1 -1l2 -2zM2535 505l-2 0l-2 -3l3 -2l2 2zM2517 211l-2 -1l-1 -4l3 0l1 3zM1936 721l3 -5l5 -1l0 5l-3 4zM2306 746l-2 1l-1 -1l0 -1l3 0zM2195 411l1 2l-2 1l-1 -1l0 -1zM2500 527l4 1l2 5l-2 1l-3 -2zM2425 362l-2 -2l0 -3l2 -2l2 4zM2315 333l1 0l0 3l-1 0l-1 -3zM2557 330l-1 -5l4 -5l6 2l-5 8zM1976 696l-1 -2l1 -1l2 0l-1 3zM2200 415l4 -1l2 2l-2 4l-2 -1zM2012 623l-1 3l-3 0l0 -3l1 -1zM2022 300l-2 2l-3 -2l1 -2l2 0zM2574 207l-2 1l-2 -1l-1 -2l3 -1zM2269 651l-4 -3l-1 -4l3 -1l4 5zM2599 248l-2 0l0 -2l0 -1l2 2zM2480 666l0 -6l3 -2l3 5l-2 3zM1939 591l-1 0l-1 -2l2 0l1 0zM2642 663l-3 2l-3 0l0 -4l6 0zM2267 422l-1 -1l0 -5l2 2l1 2zM2548 594l-1 -1l0 -2l1 -1l1 2zM2045 525l0 3l-2 0l-1 -2l1 -1zM2398 293l0 -3l3 -2l2 0l-2 4zM2119 205l0 -2l4 0l0 3l-2 2zM2578 347l3 0l1 2l0 2l-4 -1zM2570 754l-3 0l-3 -2l2 -3l3 1zM2268 534l-5 0l-5 -4l2 -1l5 0zM2079 259l4 2l0 2l-3 1l-2 -2zM2082 637l-1 -3l3 -2l2 2l-2 2zM2269 767l3 0l3 2l-2 2l-3 -1zM1981 733l1 3l-2 1l-1 0l1 -3zM2603 209l0 -1l2 1l0 1l-2 0zM2528 544l1 4l-2 2l-2 -2l1 -3zM2589 738l0 2l-3 4l-1 -3l0 -2zM1928 752l0 2l-2 0l-1 -1l2 -1zM2118 339l-1 -4l3 -2l2 2l0 3zM2368 698l-3 -1l0 -3l2 -1l3 3zM2616 671l2 0l2 4l-2 2l-4 -4zM2327 680l2 6l-5 5l-2 -1l0 -7zM2228 720l-1 2l-4 0l0 -2l2 0zM2454 339l2 1l-2 4l-2 -1l-1 -3zM2534 407l-1 1l-2 1l-1 -2l2 -1zM2361 646l-1 2l-5 -3l0 -4l6 2zM2335 540l2 -1l2 1l0 2l-3 -1zM2385 632l-2 -5l4 -4l5 0l-2 8zM2318 394l2 -1l2 1l0 1l-2 1zM2240 690l0 2l-4 1l-1 -1l2 -3zM2573 546l-1 -1l1 -4l1 1l0 2zM2076 262l-1 2l-2 -1l-1 -1l3 -1zM2522 663l-1 3l-5 -1l1 -2l3 -1zM1950 406l4 2l5 5l-2 5l-6 -4zM2052 641l3 2l0 2l-3 1l-1 -3zM2216 390l2 0l-1 4l-1 0l-2 -3zM2682 731l0 3l-4 5l-3 -2l3 -5zM2090 306l1 2l-3 2l-2 -2l2 -3zM2532 677l3 0l3 3l-2 1l-2 -1zM2528 607l4 -1l2 3l-2 1l-3 -1zM2010 191l0 -2l1 -2l1 0l-1 3zM2600 644l1 -1l2 2l-1 1l-2 0zM2114 277l-1 -2l2 -4l3 2l-1 5zM2347 625l1 -4l7 -3l1 4l-2 3zM2703 279l2 2l-2 3l-1 -1l0 -3zM2124 586l2 -2l2 1l0 2l-3 1zM2560 521l2 1l1 2l-2 1l-2 -2zM2439 515l2 1l0 2l-1 1l-3 -2zM1981 628l1 2l-2 2l-2 -2l1 -2zM2242 211l1 1l1 4l-2 0l0 -2zM2541 631l0 -3l2 -1l2 1l-1 3zM1992 635l2 3l-4 4l-2 -2l1 -3zM2062 720l8 -1l5 6l-2 4l-6 -2zM2247 636l-4 1l-1 -1l1 -3l2 1zM2665 211l-4 -3l-1 -4l5 -1l1 4zM2556 240l-2 1l-1 -1l0 -2l3 0zM2549 366l0 5l-5 5l-2 -4l2 -5zM2594 749l2 2l1 5l-2 0l-3 -3zM2285 248l3 3l-5 7l-2 -3l0 -5zM1985 702l1 4l-3 1l-3 -1l2 -2zM2232 648l-3 1l-3 -3l2 -2l3 1zM2460 680l-3 -1l0 -1l1 -1l2 1zM2476 404l-2 0l0 -5l3 1l0 2zM2462 227l2 -4l3 -1l2 3l-5 4zM1995 211l-7 -3l-3 -3l2 -4l6 4zM2440 469l1 1l-2 2l-1 -1l0 -1zM2540 262l2 0l2 1l-2 2l-3 -1zM2202 592l-1 1l-2 -1l0 -1l2 -1zM2609 654l7 3l3 6l-5 1l-4 -2zM2614 561l-1 -2l2 -1l2 1l-1 1zM2412 395l-1 3l-4 1l-2 -4l6 -2zM2519 615l0 4l-3 2l-2 -2l1 -4zM2396 644l-1 -2l3 -4l2 0l0 4zM2149 268l-4 -1l-3 -6l3 -3l5 4zM1946 591l4 -3l5 2l0 3l-4 0zM2680 281l1 2l-2 1l-2 -1l2 -2zM1976 582l4 -2l4 3l-3 4l-2 -1zM2702 541l0 -2l3 -3l1 2l-1 3zM2030 279l-4 1l-3 -1l0 -2l5 0zM2058 352l2 -3l2 -1l3 3l-4 3zM2544 539l1 1l1 4l-2 0l-2 -2zM2612 228l-1 3l-3 0l-1 -2l3 -2zM1988 302l2 -1l2 2l-2 1l-1 -1zM1970 233l1 -2l5 -1l0 3l-2 1zM2304 348l-3 -3l1 -3l3 1l1 2zM2289 726l0 2l-2 2l-4 -1l2 -4zM2577 327l3 -2l4 1l-1 3l-4 1zM2208 276l1 -2l1 -2l2 2l-1 1zM2657 547l-1 2l-4 1l-1 -3l4 -1zM2024 255l-2 -1l1 -2l1 -1l1 3zM2001 506l0 4l-2 1l-2 -2l2 -2zM2654 251l-1 -1l1 -2l2 0l0 1zM2241 381l0 2l-2 1l-2 -2l2 -1zM2368 413l-3 0l-2 -2l1 -3l4 3zM2599 604l-1 -1l1 -3l3 2l-1 2zM2493 696l1 1l1 3l-2 1l-1 -3zM2402 767l1 -1l3 0l-1 2l-1 1zM2505 214l-3 1l-1 -3l1 -1l3 1zM2413 332l-2 1l-4 0l2 -2l2 0zM2509 598l-3 -2l-1 -3l1 0l3 2zM2100 185l3 0l1 4l-1 2l-5 -3zM2027 572l0 -2l2 -1l1 1l0 3zM2302 347l3 -4l3 2l0 3l-3 0zM2396 241l2 0l1 2l-2 1l-1 -1zM2498 239l0 -1l3 -1l0 1l-1 1zM2561 626l2 1l1 6l-5 0l-2 -3zM2023 724l0 2l-3 1l-2 -1l2 -3zM2516 618l-1 -1l1 -2l1 1l0 1zM2103 244l0 2l-2 1l-1 -2l1 -1zM2464 552l-2 3l-2 1l-1 -2l2 -1zM2280 345l1 -2l1 0l1 1l-2 1zM2130 323l-1 2l-2 0l0 0l1 -3zM2605 291l-1 -1l0 -2l2 0l0 2zM2244 284l-3 0l-1 -4l2 0l2 2zM2424 393l-6 4l-4 -6l2 -3l7 2zM2330 699l3 -1l3 2l-1 2l-3 0zM2054 278l-2 1l-1 -2l0 -2l2 1zM2666 720l-2 -1l0 -2l2 0l1 2zM2594 502l3 -3l3 0l0 2l-3 2zM2293 339l3 1l-1 3l-2 0l0 -1zM2144 570l1 -2l2 0l1 2l-2 1zM1997 382l2 -2l4 0l-1 2l-2 1zM2073 759l3 -3l5 1l0 2l-5 2zM2604 462l3 5l-1 4l-4 2l0 -8zM2688 340l0 3l-3 2l-1 -3l1 -2zM2653 709l1 4l-3 5l-4 -4l1 -6zM2370 581l-1 -1l0 -2l2 0l0 2zM2183 616l2 2l-1 5l-4 -1l1 -4zM2692 643l-1 -2l4 -1l1 1l-2 3zM2523 302l1 -1l3 1l-1 1l-2 0zM2649 205l3 0l1 3l-2 2l-2 -3zM2475 232l2 -5l5 -1l1 2l-3 5zM2172 228l-2 3l-2 -1l-1 -1l3 -1zM2038 336l1 -5l2 -3l5 3l-3 4zM2447 391l2 -2l2 0l1 2l-3 1zM2178 584l1 -2l3 -1l0 2l-2 2zM2402 626l1 1l-2 2l-1 -1l1 -2zM2257 639l1 -1l2 1l-1 2l-2 -1zM2330 330l2 -4l4 1l1 2l-4 2zM2612 586l0 -2l4 -3l2 3l-2 3zM2543 741l5 1l3 4l-3 3l-5 -2zM2244 301l-1 3l-5 -1l1 -2l3 -1zM2433 375l3 0l2 1l-1 3l-3 -1zM2632 470l-2 -1l-1 -3l1 -1l3 3zM2664 296l1 -2l2 1l1 1l-3 1zM2116 235l3 1l1 4l-3 1l-2 -4zM2378 346l4 1l0 2l-1 1l-3 -2zM2598 269l2 0l0 3l-2 1l-2 -2zM2515 622l-1 0l0 -3l1 -1l2 3zM2600 216l4 1l-1 8l-3 -2l-1 -5zM2460 696l2 5l-2 3l-4 2l2 -7zM2564 734l2 -1l2 1l-1 3l-2 -1zM2496 743l-2 -4l1 -4l4 1l1 4zM2284 308l-4 2l-3 -1l1 -3l4 1zM2551 323l2 -2l4 1l1 3l-4 1zM2198 640l2 0l1 1l-1 2l-2 -1zM1940 410l-3 0l0 -2l1 -1l2 1zM2441 698l-1 0l-2 -4l2 -2l3 4zM2135 327l-3 -2l1 -3l3 0l1 2zM2481 614l-1 1l-3 -1l0 -1l3 0zM2182 576l0 -1l3 -2l1 1l-3 2zM1961 582l5 1l4 6l-4 1l-5 0zM2378 284l-5 -1l2 -4l5 -1l0 4zM2454 763l-4 -1l-2 -4l3 -2l2 4zM2646 449l1 -1l2 0l0 2l-1 0zM2467 630l0 3l-2 2l-1 -1l1 -3zM2444 235l2 2l0 2l-2 1l-1 -2zM2684 199l-2 -5l5 -3l3 4l-2 3zM1973 410l0 3l-2 2l-1 -2l0 -2zM2522 592l3 2l0 2l-3 1l-1 -2zM2059 330l1 4l-4 3l-1 -1l2 -5zM2615 708l-3 2l-4 -2l-1 -3l5 -1zM2509 420l-2 -1l0 -3l2 0l2 3zM2481 230l0 -3l2 -5l2 1l-1 6zM2077 597l4 -1l4 2l-2 3l-4 1zM2212 552l4 -1l4 2l-1 5l-6 -2zM2044 610l0 2l-2 2l-3 -2l3 -2zM2263 262l-3 3l-6 -3l1 -3l5 -2zM2666 416l1 4l-3 3l-4 -1l1 -3zM2352 555l2 -1l5 2l-2 4l-5 -1zM2303 552l-2 0l-2 -1l2 -1l2 1zM2620 440l-1 1l-2 -1l1 -2l2 1zM2100 740l3 2l1 3l-2 2l-3 -3zM1986 336l1 -3l5 0l0 3l-4 1zM2702 424l-1 -2l2 -3l1 1l0 2zM2541 580l1 2l-2 2l-1 -1l0 -2zM2622 557l-1 1l-2 -1l0 0l2 -1zM1921 746l0 -2l4 -3l3 1l-5 5zM2452 641l-2 2l-1 -1l-1 -1l2 -1zM2689 366l1 2l-2 2l-1 -1l-1 -2zM2006 758l2 1l-1 3l-3 0l0 -2zM2551 333l-1 2l-4 0l1 -2l1 -2zM2008 719l1 0l2 2l-2 1l-2 -1zM2213 712l3 -1l1 2l0 2l-3 0zM2389 591l0 2l-4 -2l1 -1l3 -1zM2257 710l-1 -1l3 -2l1 0l-1 3zM2309 645l-3 -1l0 -3l4 -1l2 2zM2293 324l1 2l-2 1l-1 -1l1 -2zM2567 589l-2 1l-3 -4l3 -1l2 1zM2383 338l2 1l0 3l-2 1l-2 -3zM2532 367l0 4l-6 1l-2 -5l3 -1zM2098 551l4 -5l6 -1l4 7l-8 4zM2134 249l4 3l0 8l-3 -1l-2 -5zM2002 584l-1 2l-4 1l0 -1l3 -2zM2194 379l-1 1l-2 -2l0 -1l2 1zM2481 350l0 2l-2 2l-2 -1l2 -3zM2413 746l-1 -1l-1 -2l1 -1l1 2zM2580 392l0 -4l4 -2l1 2l-1 4zM2197 591l2 -3l3 1l1 2l-3 2zM1925 644l0 -2l2 0l1 2l-1 1zM2191 717l-1 3l-3 1l-2 -2l4 -3zM2555 677l1 0l1 1l-1 1l-2 -1zM2165 669l-1 -1l1 -2l2 1l0 1zM2062 563l0 1l-2 1l-1 -1l1 -1zM2678 289l1 1l0 3l-3 -1l-1 -2zM2528 337l5 -4l3 3l1 5l-8 0zM2218 502l-8 6l-6 -3l-1 -4l12 -1zM2553 189l0 2l-3 0l-1 -1l3 -2zM2057 617l-3 5l-10 -6l0 -5l11 -3zM2018 620l-1 2l-3 0l0 -3l2 0zM2037 638l2 -3l2 0l1 2l-2 2zM2637 649l-2 2l-3 -1l0 -1l4 -1zM1947 352l0 2l-2 0l0 -1l1 -1zM2158 545l3 -3l3 0l1 4l-3 1zM2238 375l-1 -1l0 -1l1 -1l1 2zM2145 572l-1 -3l2 -5l2 0l0 5zM2358 675l0 -1l1 -1l1 1l-1 2zM2391 354l2 3l-2 3l-2 -1l0 -3zM2239 757l1 -4l4 0l1 4l-4 2zM2154 520l0 -2l1 -2l2 0l-1 3zM2405 288l-3 -1l1 -2l1 -1l2 3zM2141 544l0 -3l3 -3l2 1l-1 4zM2579 406l2 -1l3 3l-2 2l-2 -1zM2457 667l3 1l0 3l-1 3l-4 -5zM2498 329l-7 0l-5 -2l2 -6l8 3zM2371 394l6 2l2 6l-3 2l-5 -4zM2511 236l-6 -6l2 -4l5 0l0 6zM2213 541l1 -1l3 3l-1 1l-3 -2zM2660 763l-4 -4l0 -8l3 0l2 5zM2292 515l-1 -1l-2 -3l2 -1l2 2zM2439 660l2 1l1 3l-1 0l-2 -2zM2232 284l3 2l-3 8l-4 -1l0 -6zM2118 340l-4 1l-2 -2l2 -3l3 0zM2253 415l2 1l-1 2l-2 1l-1 -2zM1927 721l0 3l-4 2l-3 -3l4 -3zM2271 296l0 -2l2 -2l1 1l-1 2zM1952 717l2 3l-1 3l-4 -1l0 -4zM2333 303l6 0l4 3l-2 6l-6 -4zM1987 734l3 1l1 2l0 0l-3 -1zM1954 210l2 -2l3 1l0 3l-3 -1zM2182 324l2 -3l2 1l1 2l-3 2zM2361 547l3 1l1 2l-2 2l-2 -2zM2371 566l1 2l0 3l-3 -1l0 -2zM2412 231l-3 3l-4 0l-2 -2l4 -2zM2108 308l-5 2l-1 -2l0 -3l4 1zM2523 741l3 0l0 2l-2 1l-1 -1zM2421 357l-1 -2l2 -1l1 2l-1 1zM2151 344l1 1l-1 3l-2 -1l1 -3zM2280 458l1 -7l8 -3l2 5l-4 4zM2283 403l-3 3l-4 -1l0 -1l5 -3zM1932 262l-2 2l-4 -1l-1 -3l5 0zM2026 607l1 5l-3 1l-4 -1l2 -4zM1986 292l-3 -2l0 -2l2 -1l1 3zM2250 686l0 3l-2 2l-2 -2l2 -3zM2688 533l-2 0l-2 -1l1 -2l3 1zM2070 247l3 -1l3 2l-2 2l-2 0zM2644 314l-3 -1l-1 -4l1 0l4 3zM1951 359l-1 0l-1 -4l1 0l2 3zM2259 668l2 2l-2 2l-1 -1l0 -3zM2073 293l0 2l-4 1l0 -3l2 -1zM2701 560l-5 2l-5 -2l1 -2l5 -1zM1928 642l-1 -4l2 -2l2 0l-1 5zM2416 283l-4 0l-4 -2l1 -2l4 0zM2323 244l-2 2l-3 -1l1 -2l2 0zM2221 204l3 1l1 2l-1 1l-2 -1zM2080 730l4 -2l4 3l-3 3l-3 -1zM2211 473l2 0l1 2l-1 1l-2 -2zM2422 724l3 1l3 6l-3 2l-3 -4zM2054 570l-2 0l-3 -2l1 -3l4 1zM2527 716l-2 -1l-1 -3l2 -1l2 4zM1972 654l3 0l1 2l-2 2l-2 -2zM2115 760l4 0l1 3l-3 2l-3 -1zM2337 252l1 2l-3 2l-2 -2l2 -2zM2506 577l-1 0l-1 -1l0 -1l2 0zM2119 415l6 1l1 6l-2 1l-4 -4zM2494 657l2 -3l7 -1l0 5l-4 1zM2698 309l0 -2l2 -1l1 1l-1 2zM2607 711l-2 0l-2 -1l2 -2l2 0zM2357 319l2 -5l7 -1l1 3l-7 5zM2484 418l4 -2l2 1l-1 3l-3 0zM2598 544l4 3l-1 5l-2 0l-1 -5zM2660 342l-2 5l-5 2l-3 -4l5 -3zM2308 344l1 4l-1 2l-3 0l1 -4zM2191 397l-2 1l-1 -5l1 -2l3 2zM2423 400l-2 -1l-4 -3l2 -2l4 0zM2202 395l-1 -4l3 -2l3 0l-2 5zM2087 266l0 5l-4 2l-2 -4l4 -3zM2669 275l0 3l-4 3l-4 -4l3 -4zM2156 555l1 1l-2 6l-4 0l0 -6zM2552 346l-1 1l-2 -2l1 -2l2 1zM2519 434l-2 1l-2 -2l1 -1l2 0zM2469 742l0 -2l2 -2l3 2l-2 2zM2567 394l-2 4l-4 -2l1 -4l3 -1zM2041 352l-1 -2l1 -1l3 0l-1 3zM2345 548l-1 -2l0 -2l1 0l1 2zM2400 311l-3 -2l0 -2l1 -1l2 2zM1958 673l-2 2l-3 -1l-1 -2l4 0zM2616 302l-2 -2l1 -2l2 1l0 2zM2331 224l-1 -4l5 -5l3 2l-2 5zM2004 571l2 0l3 2l-1 1l-3 -1zM2108 598l-1 2l-3 0l0 -2l2 -1zM2587 533l4 -4l12 3l-4 6l-7 -2zM2402 317l-2 3l-2 1l-2 -3l3 -2zM2174 277l0 2l-1 1l-1 0l0 -2zM2106 539l3 2l1 3l-1 2l-3 -3zM2235 327l-2 -2l0 -4l2 -1l1 4zM2257 220l0 -2l1 -2l3 2l-1 2zM2356 575l-3 -4l1 -4l3 1l1 5zM2601 764l1 -3l2 0l1 2l-1 2zM2368 726l-5 -3l0 -5l3 1l1 3zM1982 293l-2 -4l0 -2l4 0l0 4zM2284 280l-3 0l-1 -3l2 -2l2 2zM2448 708l1 1l-1 2l-2 -1l1 -2zM2460 766l1 -3l1 -1l2 1l0 2zM2380 241l3 2l-1 3l-3 1l-2 -4zM2449 204l-4 4l-3 -1l-2 -2l3 -3zM2541 377l2 -1l3 1l-1 2l-2 0zM2576 333l-1 5l-11 2l0 -4l7 -4zM2628 340l2 -2l5 2l0 2l-6 0zM2500 597l2 2l0 3l-2 -1l-1 -2zM2089 636l-2 -2l6 -6l3 4l-4 5zM2249 603l-4 2l-4 -4l1 -3l5 2zM2033 327l3 2l-3 5l-4 -1l1 -5zM2550 705l0 3l-3 1l-1 -2l3 -3zM2194 193l-2 0l0 -4l2 0l1 4zM2541 578l0 -1l2 1l-1 1l-1 0zM2388 700l0 -1l4 -2l1 2l-4 2zM2404 267l1 6l-3 7l-5 -3l-1 -5zM2360 567l-2 0l-2 -3l1 -2l4 3zM2481 238l-2 1l-5 -1l2 -2l4 0zM2202 260l1 6l-3 2l-3 -2l2 -3zM2242 285l3 0l2 2l0 1l-3 0zM2024 317l4 1l0 5l-3 -1l-2 -3zM2559 403l-2 3l-5 2l-2 -3l4 -3zM1992 395l-1 -2l1 -2l2 1l-1 2zM2197 286l2 1l1 2l-2 1l-2 -2zM1923 621l2 0l2 2l-2 2l-2 -1zM2055 719l-4 0l-1 -3l1 -2l2 1zM2219 318l1 1l-2 3l-2 -1l1 -3zM2417 473l2 -1l2 1l0 2l-4 0zM2038 324l-1 2l-4 0l-1 -1l3 -1zM1966 380l-5 0l-1 -7l4 -2l3 5zM2137 336l-2 3l-3 -1l0 -3l3 0zM2550 545l1 -2l3 1l0 1l-3 1zM1950 242l5 3l-2 5l-3 0l-3 -5zM2667 664l-5 -3l0 -3l2 -2l2 4zM2494 480l0 0l1 2l-1 1l-2 -2zM2619 499l-3 1l-2 -1l1 -2l2 0zM2104 252l-2 0l-2 -1l0 -2l3 0zM2626 298l-1 1l-1 0l0 -2l0 -1zM2648 531l1 3l0 4l-3 1l0 -6zM2348 748l-2 0l-1 -1l1 -2l2 2zM1993 685l-3 -1l2 -2l3 1l0 1zM2189 205l1 -4l4 -3l1 2l-2 4zM2330 577l3 -2l4 1l1 4l-6 2zM1938 225l4 -3l3 0l0 5l-4 1zM2007 639l-3 1l-2 -1l-1 -2l4 -1zM2089 358l2 2l-4 4l-3 -3l1 -3zM2111 612l-1 -3l3 -1l1 1l0 3zM2339 713l1 1l1 2l-2 0l0 -2zM2068 225l-3 -1l1 -5l2 1l1 4zM1992 310l1 0l1 2l-1 1l-1 -2zM2350 372l2 3l-1 4l-2 0l-1 -4zM2372 605l2 -1l3 0l0 3l-2 0zM1937 375l4 2l3 3l-3 4l-4 -3zM2236 200l-1 5l-7 1l0 -3l5 -4zM2344 393l-2 -1l-1 -1l1 -1l2 1zM2095 435l3 0l2 2l0 2l-4 0zM2621 487l-1 -2l2 -1l2 1l-2 3zM2693 444l1 1l-2 3l-1 -1l0 -2zM1922 296l4 -1l5 3l-3 3l-5 -2zM2222 698l3 0l2 1l-1 2l-3 0zM2282 585l-3 -1l-1 -1l2 -2l1 1zM2679 378l2 -1l0 2l0 1l-2 -1zM1939 284l1 1l-1 2l-2 -1l0 -1zM2088 557l3 7l-3 9l-8 -4l3 -8zM2420 318l-1 4l-5 0l-1 -2l4 -4zM2530 223l-5 -1l-2 -4l4 -3l3 3zM2026 680l0 2l-1 1l-2 -1l2 -2zM2685 382l1 1l1 4l-2 0l-2 -2zM2053 608l4 0l0 6l-2 0l-3 -4zM2300 659l-1 4l-2 2l-3 -2l3 -3zM2566 326l3 -1l2 1l-1 3l-2 -1zM2498 327l-2 -1l-1 -3l2 -1l1 2zM2286 576l-1 -1l0 -2l2 0l0 2zM2205 576l-1 -3l2 -4l4 3l-2 4zM2193 767l-1 4l-3 3l-2 -1l3 -5zM1983 218l1 -2l2 0l1 2l-2 1zM2069 543l0 3l-1 4l-3 -1l1 -4zM2257 685l-6 -1l1 -6l4 -1l3 2zM1968 759l-3 1l-2 -5l2 -2l3 3zM1966 338l1 2l-2 1l-3 -1l1 -2zM2660 335l0 3l-5 0l-4 -2l6 -4zM2523 682l1 4l-4 3l-1 -2l1 -4zM2068 694l-2 -3l1 -3l2 -1l0 6zM2201 618l2 4l-5 4l-2 -2l2 -5zM2093 526l1 2l-2 2l-2 -1l1 -3zM2228 607l-3 5l-6 2l-3 -4l6 -5zM2405 549l0 -3l2 -1l2 3l-2 1zM2554 688l2 2l-1 4l-2 -1l-1 -2zM2564 244l1 7l-4 8l-4 -4l3 -10zM2040 705l-2 -2l3 -5l3 2l0 4zM2560 236l-3 -1l-2 -2l3 -1l3 1zM2077 501l-2 -3l4 -3l0 2l-1 3zM2095 671l1 -4l4 -2l2 2l-2 5zM1956 231l-4 -5l3 -5l4 -2l-1 8zM2340 724l-2 2l-3 0l-2 -2l3 -2zM2048 330l-7 0l-2 -6l4 -4l7 5zM2431 672l-2 2l-3 1l-1 -3l3 -2zM2565 646l1 -3l5 2l0 3l-5 0zM2298 690l2 0l2 2l-1 1l-2 -1zM2243 655l2 2l-1 3l-2 -1l0 -3zM2273 643l-2 -1l0 -4l1 -1l2 3zM2588 592l1 3l-3 2l-1 -3l0 -2zM2145 335l2 -2l2 0l0 2l-1 1zM2646 372l0 -2l1 -2l3 1l-1 2zM2635 567l0 2l-1 2l-1 -1l0 -2zM1996 250l1 0l1 1l0 2l-2 -1zM2231 559l-1 3l-1 0l-2 0l2 -3zM2067 260l2 -3l6 3l-2 3l-3 0zM2147 574l-6 0l-3 -8l4 -2l6 5zM2077 285l1 1l-3 3l-1 -1l1 -3zM2201 774l-5 2l-4 -4l0 -2l6 -1zM2472 570l-3 2l-6 -3l-1 -3l7 1zM2475 613l4 1l2 3l-3 2l-3 -3zM2702 195l-2 -2l-1 -3l2 -1l2 3zM2692 543l1 -2l5 -1l1 4l-3 3zM2402 380l3 1l1 2l-3 1l-2 -2zM2007 493l2 -2l3 0l1 2l-5 1zM2443 683l1 -3l2 1l2 1l-3 3zM2570 483l2 2l-2 4l-3 -1l1 -5zM2230 547l-3 2l-5 -4l2 -5l5 2zM2034 235l-2 0l0 -2l2 -1l1 1zM2319 637l-1 2l-2 1l-2 -1l3 -3zM2614 221l-2 6l-6 3l-4 -3l6 -7zM2109 638l2 0l2 1l1 2l-3 0zM2602 283l2 -2l3 1l-1 2l-4 1zM2194 631l3 -2l2 1l-1 2l-2 0zM2225 316l-3 1l-1 -3l2 -1l1 0zM2070 210l3 -1l4 2l0 1l-4 1zM2015 644l1 -4l3 -1l1 1l-2 3zM2140 203l1 0l1 3l-1 1l-2 -2zM1964 421l-1 2l-2 0l-1 0l1 -2zM2576 294l0 3l-2 2l-3 -2l2 -3zM2587 353l3 0l0 2l-2 2l-2 -3zM2265 569l1 -2l2 2l0 2l-3 0zM2643 422l0 -2l1 -1l3 2l-1 2zM1945 188l4 0l2 2l-1 2l-3 0zM2532 740l-6 -1l-4 -6l4 -3l5 3zM2024 348l-2 -8l2 -6l6 2l-1 6zM2608 746l1 3l-2 1l-2 -2l1 -2zM2402 632l1 1l-2 4l-2 -1l2 -4zM2697 204l4 -2l2 2l-1 3l-2 0zM2022 292l-7 2l-10 -7l5 -5l9 6zM2691 567l2 -2l2 1l-1 4l-3 -1zM2373 253l-1 3l-2 -1l-1 -1l2 -2zM2014 383l-1 -3l3 -3l1 0l0 4zM2102 730l-2 1l-1 -1l1 -2l2 0zM1936 589l-4 2l-6 -3l2 -7l5 2zM2027 657l1 -1l2 0l0 2l-2 0zM2659 656l2 2l2 5l-3 1l-2 -3zM2371 196l5 -1l3 1l0 3l-6 1zM2002 382l-2 -4l5 -3l1 1l0 5zM2270 593l-3 -2l0 -4l3 -1l2 3zM2628 715l-2 4l-5 0l-2 -2l5 -4zM2315 321l-1 -2l0 -1l3 0l0 2zM2400 388l-4 3l-7 -2l-1 -6l9 0zM2510 400l-6 -7l1 -7l7 -1l0 11zM2231 309l2 2l0 2l-3 1l0 -3zM2223 208l1 -2l2 1l1 2l-3 0zM2238 734l-2 3l-2 -1l-1 -2l3 -1zM2363 448l3 2l0 3l-3 1l0 -4zM2472 355l-2 3l-4 0l0 -2l3 -2zM2695 675l3 0l1 2l0 2l-3 -1zM2195 288l-1 1l-5 0l-1 -3l3 -1zM2461 208l1 -3l4 -1l1 2l-3 2zM2660 693l1 2l0 1l-2 0l0 -2zM2288 583l1 2l-1 1l-1 0l0 -2zM2474 746l-1 -2l0 -3l2 -1l1 4zM2173 366l6 2l-1 5l-5 2l-2 -6zM2446 441l1 0l2 2l-1 1l-2 -2zM2106 747l-1 -1l2 -3l1 0l-1 4zM2571 342l2 -1l1 0l1 1l-3 1zM2204 656l1 0l1 2l-2 1l-1 -1zM2408 240l-3 2l-3 0l0 -3l3 -1zM2601 363l1 4l-1 3l-3 -1l0 -4zM2466 717l-8 2l-3 -4l-1 -4l9 2zM2318 337l-2 -4l2 -2l1 0l0 4zM2348 200l1 1l-1 2l-2 0l1 -4zM2425 344l-2 -5l2 -3l3 2l0 4zM2597 290l0 -2l4 -2l1 3l-2 1zM2512 309l2 2l-3 6l-3 -2l1 -5zM2654 322l-1 -5l6 -4l3 6l-4 3zM2052 338l4 2l0 3l-4 2l-1 -4zM2026 756l-2 -1l0 -3l3 -1l1 3zM2150 345l4 -2l3 1l-2 4l-3 0zM2484 720l-1 1l-2 -1l1 -2l2 1zM2403 611l-5 3l-4 -3l4 -3l4 0zM2382 622l2 -2l4 1l1 3l-5 1zM2340 715l-3 0l0 -2l1 -1l2 1zM1932 382l5 1l0 5l-2 1l-3 -3zM2369 742l-1 -2l3 -2l1 1l-1 2zM2658 672l1 1l-1 1l-2 0l1 -2zM2478 322l4 1l1 3l-1 1l-3 -2zM2098 352l-3 0l-4 -3l3 -3l3 2zM2485 647l-3 2l-7 -4l3 -4l7 3zM2310 306l-2 0l0 -3l1 -1l2 2zM2300 536l-2 -3l3 -3l2 2l0 2zM2554 722l0 2l-2 1l-2 -1l2 -2zM2387 361l2 -1l3 1l0 3l-4 0zM1994 227l-1 -2l0 -2l2 -1l1 4zM1988 579l4 -2l5 3l0 3l-7 -1zM2352 328l2 0l0 5l-2 0l-2 -3zM2128 240l-6 0l-3 -7l6 -3l4 6zM2577 415l5 2l0 6l-3 2l-4 -6zM2297 222l-2 1l-5 -3l1 -1l5 1zM2555 395l-2 1l-2 -3l2 -1l2 1zM2469 461l3 -1l3 2l-1 2l-4 -1zM2680 305l0 3l-2 -1l0 -1l1 -1zM2222 761l-1 3l-3 0l-1 -2l3 -1zM2173 768l2 -1l3 2l-1 2l-3 0zM2606 236l2 1l0 3l-2 0l-1 -2zM2192 270l4 -1l4 3l-2 2l-3 0zM2250 359l-1 -1l-1 -3l2 -1l1 3zM2443 429l-3 2l-3 -4l2 -3l3 1zM2024 606l1 -2l4 0l2 2l-5 1zM2385 296l0 -2l6 -2l2 1l-3 6zM2548 215l1 -2l6 -1l0 1l-4 3zM2287 285l-3 -2l0 -5l5 -1l1 4zM2640 700l2 5l-2 6l-4 1l0 -7zM2429 453l0 -1l2 0l1 1l-2 1zM1928 369l2 1l0 3l-2 0l-1 -3zM2328 675l-1 -2l3 -2l1 1l-1 3zM2404 403l3 3l0 3l-2 1l-1 -5zM2287 561l-2 -6l4 -6l3 -1l0 10zM2040 201l2 -3l2 1l0 3l-2 0zM2140 586l-1 4l-5 5l-2 -3l3 -6zM2681 666l1 -3l1 0l2 2l-2 1zM2094 585l-1 -1l-1 -4l3 0l1 2zM2079 198l-3 -2l3 -5l4 0l1 6zM1962 690l5 -1l4 5l-1 6l-8 -5zM2564 657l-1 4l-7 0l-1 -4l6 -3zM2577 394l4 2l-1 4l-2 0l-3 -4zM2048 340l2 2l-1 1l-1 -1l-1 -1zM2021 695l-3 -4l1 -3l4 -2l2 4zM2283 741l-2 -2l1 -2l3 -1l1 3zM2563 362l1 3l-1 5l-2 -1l-1 -4zM2289 531l-2 -2l-1 -5l2 -1l1 3zM1921 317l3 1l0 2l-2 1l-2 -3zM2576 462l-1 2l-2 0l0 -3l1 0zM2016 279l2 -1l2 1l0 1l-3 1zM2072 537l2 1l0 0l-1 2l-1 -2zM2561 276l-2 -3l3 -4l2 2l0 3zM2341 406l-3 -7l7 -4l7 5l-3 5zM2516 280l2 -2l4 1l0 2l-5 0zM2035 230l-3 -3l0 -2l1 -3l3 4zM2605 640l1 0l1 2l0 0l-2 0zM2265 729l-3 -2l0 -3l3 0l1 4zM2609 666l0 -4l7 0l1 3l-5 3zM2384 390l0 3l-4 2l-1 -2l1 -2zM2446 744l2 0l0 2l-1 1l-2 -1zM1940 735l2 1l1 4l-2 0l-2 -3zM2023 481l-1 -3l7 -6l5 4l-4 6zM2271 724l3 1l0 3l-3 0l0 -2zM2577 371l-3 -3l1 -3l3 0l2 3zM2310 652l-2 4l-3 0l-2 -2l2 -2zM2069 229l-1 0l-4 0l0 -2l4 0zM2215 233l-2 0l-1 -3l2 -2l2 3zM2688 417l4 2l0 4l-4 0l-2 -1zM2154 761l-3 0l-2 -2l2 -3l4 3zM2188 258l-4 0l-2 -1l1 -3l4 0zM2097 381l0 2l-2 2l-2 -2l1 -2zM2348 567l-2 3l-4 1l-1 -4l3 -1zM1946 263l1 -3l1 -1l2 1l-3 2zM2555 705l1 0l2 1l-1 2l-3 -1zM2330 488l1 1l-1 1l-2 -1l1 -2zM2621 638l-2 0l-2 -3l1 -2l4 3zM2676 418l2 0l1 1l0 2l-3 -1zM2096 752l-3 2l-3 0l0 -4l2 0zM2087 700l-2 3l-4 1l-1 -3l4 -2zM2612 642l-1 3l-1 1l-1 -2l0 -2zM2205 320l1 1l-1 1l-2 0l1 -2zM2557 725l4 1l0 3l-2 0l-2 -2zM2607 530l-2 -3l3 -5l3 1l0 5zM2042 411l2 -4l3 -1l3 4l-4 2zM2693 545l-1 9l-7 3l-3 -4l5 -8zM2623 644l3 0l2 2l-1 1l-3 -1zM2396 248l-2 0l-1 -2l1 -2l3 2zM2036 672l3 3l-6 3l-3 -4l1 -4zM1965 745l2 -2l6 1l-1 5l-6 0zM2259 664l-3 2l-2 0l0 -1l3 -1zM1931 277l2 2l0 4l-4 1l-1 -3zM2689 490l0 -3l3 -1l1 3l-2 1zM2328 231l-2 0l0 -2l1 -1l1 2zM2359 456l-2 2l-4 0l0 -4l4 0zM2239 389l0 1l-2 1l-1 -1l1 -2zM2218 614l0 1l-3 0l-1 -1l2 -1zM1975 381l2 -3l7 4l-2 3l-4 0zM2310 716l-2 1l-3 -1l1 -2l2 0zM2511 692l1 3l-3 4l-1 -2l0 -4zM2192 531l2 0l2 2l-2 1l-2 0zM2083 204l-1 -2l1 -2l1 0l0 3zM2386 644l-3 0l-1 -1l1 -3l2 1zM2384 206l-3 4l-3 -4l2 -3l4 -1zM2253 768l-4 -3l0 -3l2 -2l3 6zM2361 607l1 3l-3 5l-1 -2l1 -4zM1960 577l-2 0l1 -2l1 -1l1 2zM1980 766l-1 -2l2 -2l1 0l0 3zM2062 766l3 -2l6 3l-2 4l-4 -1zM2359 708l3 -3l8 1l-1 4l-4 2zM2082 498l2 2l0 4l-1 0l-3 -4zM2122 565l-1 -5l3 -3l4 0l-3 6zM2432 685l1 -1l2 2l-1 1l-1 0zM2667 600l-3 -2l3 -6l4 0l1 6zM2697 298l-2 2l-2 0l-1 -1l2 -2zM1972 300l-4 -2l0 -5l2 1l3 4zM2552 407l4 1l1 3l-3 1l-1 -2zM2357 673l1 0l2 2l-1 1l-2 0zM2307 317l3 5l0 3l-4 2l-1 -7zM2029 406l-2 -3l4 -4l2 1l-2 5zM2161 650l-2 2l-6 -2l1 -3l5 0zM2266 683l-2 -1l-2 -4l3 0l2 2zM2290 323l-1 4l-4 2l-1 -3l4 -3zM2048 321l-1 1l-2 -2l1 -2l3 1zM2040 382l-4 -3l3 -3l2 1l1 4zM2551 676l1 2l-1 1l-2 0l0 -2zM2129 575l0 2l-2 1l-1 -1l1 -2zM2353 644l2 -3l3 -2l3 3l-6 4zM2654 561l1 0l3 1l-1 2l-2 0zM2329 629l-2 -2l1 -6l2 0l1 3zM2372 510l2 1l3 3l-1 1l-4 -1zM2283 381l0 -2l3 -2l0 2l-1 2zM1924 405l-3 -1l1 -4l3 0l0 3zM2315 342l-1 -1l1 -3l2 0l0 3zM1966 221l2 -1l1 2l-2 1l-2 -1zM2705 332l-2 1l-1 0l-1 -2l2 -1zM2678 593l6 3l-2 6l-5 -1l0 -5zM2167 614l0 -1l2 -3l2 1l-1 2zM2204 350l4 2l0 3l-3 1l-1 -4zM2190 657l-3 -2l1 -2l3 -1l0 1zM2380 310l-2 2l-2 -1l0 -2l3 0zM2544 707l-4 -4l-1 -3l3 -2l3 5zM2105 623l-2 -1l-1 -3l2 -1l2 3zM2042 527l0 2l-3 2l0 -2l2 -2zM2052 343l2 -2l5 3l-1 4l-6 -2zM2477 337l5 0l3 4l-1 2l-6 -2zM2641 405l-4 -1l-2 -4l2 -4l4 4zM1974 412l4 -5l4 -2l3 4l-6 5zM1971 332l2 1l1 5l-4 1l0 -3zM2316 431l0 -1l2 -2l2 0l-2 4zM2357 582l2 -2l6 2l0 4l-7 -2zM2616 705l-3 -3l1 -4l3 0l1 5zM2559 630l1 2l-1 2l-1 -1l0 -2zM2162 770l-2 -3l1 -4l3 0l2 5zM2592 663l-1 1l-3 0l-1 -2l3 -2zM2223 770l8 -6l9 3l1 7l-11 2zM1940 744l1 3l-3 3l-2 0l0 -4zM2574 427l5 2l5 10l-7 2l-3 -6zM2363 297l1 1l-1 1l-2 0l1 -2zM2390 276l-2 4l-6 -1l1 -3l4 -1zM2490 702l2 -3l3 2l-1 3l-2 1zM2534 357l0 -2l2 -3l4 1l-1 3zM2540 569l-1 2l-2 0l0 -1l1 -1zM2517 685l-2 -2l2 -2l2 -1l0 3zM2342 708l3 0l2 3l-2 0l-2 -1zM2537 315l-2 1l-2 -2l1 -1l3 1zM2336 648l0 2l-3 2l-1 -1l1 -3zM2418 758l2 -3l4 -1l0 3l-2 1zM2671 470l-2 4l-2 0l-1 -1l2 -2zM2563 419l2 3l-1 2l-3 0l0 -3zM2042 702l1 0l2 1l-1 1l-2 0zM2456 299l2 1l1 2l-2 0l-1 -1zM1979 360l-5 -1l1 -4l2 0l3 3zM2078 364l1 2l0 1l-2 0l0 -2zM2248 642l2 -1l3 1l0 3l-3 -1zM2160 352l0 -5l4 -2l3 0l-3 7zM2685 285l1 -1l4 2l-2 1l-2 0zM1995 582l-5 -1l-3 -3l2 -2l4 2zM2489 324l1 0l-2 3l-1 -1l1 -2zM2601 272l3 7l-1 7l-7 0l-1 -11zM2156 683l-3 -1l-4 -2l2 -3l3 1zM2187 401l1 3l-4 4l-2 -2l2 -4zM2055 634l2 -2l3 -1l0 2l-2 1zM2030 583l-2 4l-4 1l-2 -3l4 -2zM2619 245l2 0l2 4l-2 1l-3 -2zM2252 351l3 2l1 6l-4 -1l-2 -3zM2457 359l-1 2l-2 1l-1 -1l3 -3zM2351 207l3 -1l2 1l0 2l-3 0zM2659 724l3 0l1 2l-1 2l-3 -2zM2668 206l3 3l0 3l-4 1l0 -4zM2271 564l1 2l-1 2l-2 -1l1 -2zM2119 755l3 4l2 5l-5 2l-2 -6zM2578 537l1 3l-5 4l-2 -3l2 -4zM2497 227l0 2l-1 1l-2 -2l2 -1zM2121 622l5 1l1 4l-2 2l-4 -4zM2251 419l2 -1l4 2l0 3l-4 0zM2092 404l-4 -2l-3 -4l2 -1l4 3zM2446 320l-2 2l-7 -2l1 -4l5 0zM2217 715l1 3l-2 1l-3 -1l2 -3zM2323 513l1 2l-1 2l-2 0l0 -3zM2335 234l0 4l-3 4l-3 -1l1 -5zM2609 719l-2 -3l3 -3l3 2l-1 3zM2547 301l1 5l-3 10l-5 -3l0 -6zM2376 378l1 -1l3 -1l0 3l-2 0zM1932 574l-1 -1l2 -2l1 1l-1 2zM2021 558l0 -1l2 -3l2 0l-2 4zM2287 320l-1 5l-8 3l-1 -4l6 -4zM1926 493l1 -3l5 1l0 3l-3 1zM2356 277l-3 2l-6 -3l2 -4l4 1zM2171 464l3 0l0 3l-2 1l-1 -2zM2394 312l2 4l-1 1l-1 2l-1 -4zM1941 560l0 -3l8 -3l0 3l-3 3zM2107 205l-2 -4l2 -1l4 1l0 3zM2524 399l-1 1l-2 -2l0 -1l2 0zM2263 438l1 1l1 1l-2 2l-1 -2zM2142 219l-1 3l-4 3l-3 0l3 -4zM2555 202l0 -2l2 -1l1 2l0 1zM1985 544l-4 3l-6 -1l0 -4l6 0zM2004 739l-4 2l-3 0l-2 -4l5 -1zM2455 561l2 -2l2 0l0 3l-2 0zM2160 627l0 -2l2 -3l3 2l-1 3zM2458 641l4 5l-4 8l-5 -2l-2 -5zM1941 681l-1 2l-2 2l-1 -1l1 -3zM2656 565l2 1l0 3l-2 0l0 -2zM2698 486l0 -2l1 -1l1 0l0 2zM1994 238l-2 -1l0 -3l2 0l1 2zM1916 491l5 -3l8 2l-2 5l-4 1zM2584 194l3 -4l4 -2l2 3l-5 3zM2366 191l-3 0l-3 -4l3 0l2 0zM2571 509l-1 -1l0 -2l1 0l1 2zM2662 615l2 -3l4 1l-1 2l-4 1zM2055 450l1 -3l5 0l1 4l-5 1zM2009 457l4 -4l3 1l1 3l-5 1zM2553 739l0 3l-3 2l-3 -3l2 -2zM2602 733l1 3l0 2l-2 0l-1 -2zM2591 293l1 0l2 3l-2 0l-1 -1zM2688 644l3 -1l4 2l-2 4l-5 -2zM2699 723l2 1l0 2l-1 0l-1 -1zM2101 613l3 -6l14 -1l5 6l-10 6zM2355 540l4 2l2 3l-4 3l-2 -3zM2615 276l0 -3l1 -1l2 2l-1 2zM2412 230l3 0l4 2l0 2l-4 0zM1955 470l-1 -2l3 -2l2 2l-2 2zM2121 695l-1 -1l2 -3l3 2l-1 3zM2071 597l-2 0l-1 -2l1 -2l2 2zM2423 332l-1 1l-3 -2l1 0l2 0zM1996 389l-3 -3l1 -6l4 1l1 5zM1925 668l0 -2l2 -2l1 1l0 3zM2613 709l2 -3l4 2l0 2l-3 1zM2388 359l2 1l0 2l-2 1l-1 -2zM2552 207l-1 -1l0 -3l1 -1l1 2zM2454 240l-1 -2l3 -3l1 1l-1 2zM2348 215l-4 0l0 -3l1 -2l4 3zM2497 678l-2 1l-5 -3l2 -2l4 1zM2414 288l-7 -5l1 -5l7 0l2 7zM2460 212l1 -5l6 -2l0 3l-3 5zM2625 594l-1 2l-1 0l-1 -1l1 -1zM1977 733l0 2l-2 2l-2 -1l0 -3zM2427 401l-1 -2l1 -2l2 1l-1 2zM2667 753l-3 0l-2 -1l1 -2l4 1zM2577 585l0 -3l1 -1l1 1l0 1zM2323 212l-3 1l-4 -1l1 -3l2 0zM2466 768l1 -2l4 1l-1 2l-3 0zM2045 401l4 0l2 2l-3 2l-3 -2zM2498 756l-3 4l-3 1l-1 -2l3 -4zM1945 394l1 2l-2 5l-3 -1l1 -3zM2303 296l-1 -1l1 -1l1 -1l0 2zM2419 316l2 1l0 2l-1 2l-2 -2zM2390 660l6 4l-1 6l-2 1l-4 -4zM2706 762l-2 3l-2 -1l-1 -4l4 0zM2047 727l-2 -1l1 -4l2 1l1 3zM2511 400l-2 -3l1 -5l3 -1l2 4zM2373 190l0 2l-2 0l-1 -2l2 -1zM2264 690l1 -1l2 1l0 2l-2 0zM2299 280l2 1l1 2l-2 1l-1 -2zM2430 305l0 -3l5 -3l2 3l-3 3zM2046 702l-3 -1l0 -4l2 -1l2 3zM1979 390l-1 -2l3 -4l1 0l0 4zM2225 390l-1 -1l0 -4l2 0l1 4zM2548 311l3 -3l2 1l0 3l-2 0zM2122 260l2 0l1 4l-3 0l-1 -2zM2610 661l-3 -3l2 -3l3 1l0 3zM2435 766l-2 1l-2 1l-1 -4l2 0zM2321 654l2 1l1 3l-3 1l-2 -2zM2355 406l-2 0l-1 -1l1 -1l2 1zM2637 648l-5 3l-5 -4l1 -6l8 2zM2126 693l-3 2l-3 -1l0 -2l3 -1zM1977 245l2 -1l3 2l0 3l-3 0zM2081 710l2 -3l4 2l1 2l-6 1zM2385 709l0 2l-2 2l-1 -1l1 -2zM2653 277l0 -2l1 -1l1 1l0 2zM1947 763l0 -2l3 -2l2 2l-2 2zM2368 316l9 1l2 6l-5 6l-5 -5zM2660 710l3 0l4 3l-2 2l-5 -1zM2498 246l8 1l4 5l-2 2l-6 -2zM1974 544l-1 -1l0 -1l1 -1l1 1zM2659 460l3 1l1 3l-1 2l-4 -2zM1953 272l3 3l-1 3l-3 1l-2 -3zM2256 764l1 -1l2 1l-1 2l-1 -1zM2364 470l1 1l-1 3l-1 -1l0 -1zM2349 251l0 -3l1 -2l3 1l0 2zM2053 396l-4 2l-3 -3l1 -2l4 1zM1926 367l-1 1l-4 -2l1 -2l2 0zM2594 733l-5 -1l-1 -7l5 -3l4 7zM2300 582l2 3l-1 3l-3 0l0 -4zM2204 608l-1 1l-3 -1l1 -2l2 0zM2133 217l-1 -2l1 -2l1 0l1 3zM1959 354l1 0l2 2l-2 1l-2 -1zM2683 580l0 -4l4 -2l3 1l-3 5zM1923 730l0 -4l4 0l0 2l-2 3zM2300 249l0 8l-3 2l-2 -3l1 -3zM2484 600l-3 0l-1 -3l2 -2l3 2zM2380 565l-2 1l-3 -4l0 -2l4 2zM2361 213l0 -2l2 -1l1 2l-2 1zM2170 330l1 0l1 2l-1 1l-1 -1zM2223 556l4 2l0 3l-3 1l-2 -3zM2472 748l2 1l1 4l-1 1l-4 -3zM2200 342l2 3l-1 3l-1 1l-1 -3zM1935 567l2 0l2 2l-3 2l-2 -1zM2011 274l-3 3l-4 1l-1 -5l4 -1zM2482 733l-1 1l-3 2l0 -2l2 -2zM1968 532l3 -1l2 3l-1 2l-3 -1zM2024 612l4 3l1 3l-5 1l-1 -3zM2226 300l0 -5l4 -3l1 2l0 4zM2245 702l0 3l-1 4l-3 -1l1 -2zM2263 643l-2 2l-4 0l1 -2l3 -1zM1975 760l1 2l-3 5l-2 -2l1 -4zM2687 337l5 5l-1 4l-6 4l-3 -7zM2460 657l-2 -2l3 -4l2 0l0 5zM2203 617l1 -2l2 -1l0 2l-1 2zM2181 756l4 1l2 4l-3 2l-2 -3zM2056 774l1 -2l2 0l1 1l-2 2zM2064 615l-2 -2l1 -4l3 1l0 4zM2541 743l3 1l1 2l-2 2l-2 -1zM2349 278l1 -2l2 0l0 2l-2 1zM2695 348l0 3l-3 1l-1 -2l2 -2zM2562 304l-1 0l-1 -3l1 0l1 1zM2521 198l5 -2l8 4l-1 4l-8 -2zM2614 261l1 -3l1 -1l2 1l-1 3zM2537 266l-1 -1l0 -2l1 0l1 2zM2077 331l4 -3l2 2l-2 4l-2 -1zM2702 569l3 2l1 6l-7 1l-1 -6zM1993 198l3 0l0 2l-1 1l-2 -1zM2691 552l-2 0l-3 -2l1 -2l3 1zM2699 667l1 3l-1 2l-2 -1l0 -3zM2230 342l-1 -3l5 -3l2 1l-3 4zM2236 764l-1 0l-1 -2l1 -1l2 2zM2617 355l-2 -1l-2 -4l2 0l3 1zM2263 590l2 -2l2 0l0 1l-2 1zM1926 309l-1 -2l2 -2l2 1l-2 3zM2327 536l-1 3l-4 0l-1 -3l4 -1zM2701 285l-1 1l-2 1l-1 -2l2 -2zM2389 371l-1 3l-4 1l-3 -2l4 -4zM2360 553l3 1l0 2l-1 2l-3 -3zM2197 440l-2 3l-1 -1l-1 -3l3 -1zM2644 410l-2 -3l2 -2l2 0l0 3zM2475 414l2 1l1 6l-2 2l-2 -4zM2477 426l-3 1l-4 -2l1 -2l5 1zM2625 402l-1 -2l2 -5l1 1l1 3zM2507 390l2 -2l2 -1l1 2l-2 2zM2471 593l-1 2l-1 0l-1 -1l2 -2zM1962 545l0 -3l2 -1l1 1l0 2zM2700 662l2 -1l1 4l-3 1l-2 -1zM2326 228l-1 1l-4 0l0 -3l2 0zM2485 257l-2 -2l1 -1l3 1l0 1zM1985 516l0 1l-1 3l-1 0l-1 -3zM2322 433l-1 -2l1 -3l2 1l-1 2zM2434 564l-3 -2l0 -6l2 0l3 6zM2644 556l-2 -2l0 -3l2 0l1 3zM2150 742l-3 2l-2 0l-1 -3l2 -1zM2548 282l2 -1l2 1l-1 1l-2 1zM2230 502l-2 2l-4 1l0 -2l4 -2zM2544 675l4 -10l8 -2l4 5l-9 7zM2474 384l-9 4l-7 -3l2 -9l10 3zM2557 603l-2 0l-3 0l1 -3l3 0zM2191 356l3 -2l2 4l-2 0l-2 -1zM2561 650l-1 -3l2 -2l1 1l1 3zM2663 277l-2 -1l1 -2l1 0l1 2zM2266 736l5 -2l3 1l2 3l-7 0zM1984 617l2 2l0 2l-2 1l-2 -3zM2505 363l-1 -2l1 -2l2 -1l0 4zM2204 760l0 5l-6 1l-3 -3l2 -5zM1989 297l2 -3l2 -1l1 2l-2 1zM2452 301l1 -1l2 0l-1 2l-1 0zM2367 359l-3 0l0 -2l2 -1l2 2zM2157 278l-4 -1l-2 -4l4 -2l3 3zM2626 281l-1 -2l2 -2l2 2l-1 1zM2628 600l2 2l-1 3l-3 0l0 -4zM2516 518l-8 4l-6 -3l3 -5l7 1zM2001 662l1 5l-4 5l-4 -3l4 -7zM2134 407l-1 -1l-1 -2l2 -2l2 4zM2692 706l4 0l2 6l-2 0l-4 -3zM2110 312l-2 -1l0 -3l2 0l1 2zM2018 651l3 -1l2 0l-1 3l-2 0zM2326 622l4 0l4 2l-2 3l-5 -1zM2133 728l-2 2l-3 -3l1 -3l3 2zM2500 342l-10 10l-10 1l-3 -9l8 -5zM2350 426l3 -1l2 1l0 2l-3 1zM2465 583l-1 3l-3 -1l-1 -3l4 -1zM2674 732l-2 -1l-1 -1l2 -1l1 2zM2299 466l0 3l-5 1l-2 -2l4 -2zM2348 323l2 2l-3 5l-3 -1l1 -3zM2678 647l1 4l-3 3l-2 -2l1 -3zM2257 580l-3 0l0 -2l1 -1l2 1zM2326 250l1 3l-3 4l-3 -2l2 -3zM2195 411l0 4l-6 0l1 -3l2 -2zM2186 634l-4 3l-5 0l1 -3l6 -2zM2086 246l-1 4l-10 5l-1 -3l6 -8zM2237 603l-2 -1l0 -5l3 1l1 2zM2416 541l2 1l0 3l-2 1l-1 -3zM2053 707l-3 -1l-1 -1l0 -2l4 2zM2584 717l-2 3l-7 -3l1 -2l5 -1zM2020 350l1 3l-2 2l-3 -1l1 -3zM2068 556l-1 2l-2 -1l0 -2l2 0zM1956 411l-2 2l-4 0l0 -3l4 -2zM2561 694l-3 1l-3 -2l1 -1l3 -1zM1922 760l-1 -3l4 -2l1 2l-2 3zM2208 769l-1 -4l3 -1l3 2l-2 3zM2307 361l3 3l0 3l-2 0l-2 -1zM2423 574l1 -1l3 -1l0 3l-3 1zM2468 549l-4 -2l-2 -4l2 -3l5 5zM2045 295l-1 4l-4 0l-3 -2l6 -3zM2420 417l2 0l2 2l-2 2l-3 -1zM2409 731l-3 0l-1 -2l1 -1l1 0zM1929 221l0 2l-4 2l0 -2l2 -2zM2680 269l-1 3l-3 2l-2 -1l3 -6zM2136 433l0 2l-5 0l-1 -2l6 -2zM2376 470l-1 1l-2 1l0 -3l1 0zM2354 274l1 -1l2 1l1 2l-2 0zM2133 759l3 -5l4 0l3 4l-7 3zM2403 682l0 -2l1 -3l2 0l0 3zM2504 370l3 -7l9 -3l1 6l-6 4zM2654 378l2 4l-3 3l-2 0l0 -5zM2212 533l-1 5l-5 2l-2 -3l3 -3zM2671 677l1 2l-2 1l-2 -2l1 -2zM2163 732l-1 3l-3 4l-3 -1l2 -4zM2107 692l-1 2l-2 1l-1 -3l2 -1zM2071 312l-2 1l-4 -2l0 -2l5 0zM2323 679l-3 -2l-1 -6l3 -1l3 5zM2145 197l2 1l1 2l-3 1l-1 -3zM2624 674l-2 -4l2 -3l3 1l0 4zM1968 571l-4 1l-7 -3l1 -5l8 1zM1977 396l0 -1l3 1l0 2l-3 -1zM2260 535l-2 2l-4 -1l0 -3l4 -1zM2020 273l2 1l2 4l-2 1l-3 -3zM2087 257l1 2l-2 2l-1 0l-1 -2zM2381 596l-2 0l-3 -3l0 -2l4 1zM2144 770l0 2l-1 1l-1 -1l1 -2zM2525 310l2 4l-2 3l-3 -1l1 -3zM2243 686l-1 -2l2 -2l1 0l0 3zM2173 727l6 -2l8 4l-1 3l-9 -2zM2506 197l3 0l0 5l-2 0l-2 -3zM2263 654l-1 -1l2 -2l1 1l0 2zM2551 679l1 -2l6 0l1 1l-5 2zM2563 652l-1 1l-1 -2l1 -1l1 1zM2280 336l0 3l-3 3l-3 -1l3 -5zM1946 677l-4 0l-2 -2l1 -2l4 2zM2465 721l7 -3l5 3l-1 5l-10 -1zM2135 223l-5 -1l-3 -3l4 -4l5 5zM2464 213l-3 0l-3 -4l2 -2l5 2zM2330 332l-1 -2l1 -2l3 0l0 3zM2209 583l3 3l-1 7l-4 1l-1 -8zM1952 319l1 -3l9 -1l0 3l-7 3zM2128 289l0 -2l1 -1l1 0l-1 3zM2356 438l1 -3l4 -2l-1 3l-2 3zM2508 292l1 -4l4 -2l1 3l-1 3zM1950 710l5 -1l4 4l-1 3l-5 -2zM2169 769l1 -2l2 0l1 2l-1 1zM2015 679l1 -1l3 -2l2 2l-4 3zM1972 209l-1 -1l1 -3l2 1l0 2zM2409 770l0 -5l4 -1l2 3l-2 2zM2342 684l2 0l3 0l-1 1l-2 1zM1974 523l0 -3l2 -2l2 3l-2 3zM2536 197l-1 -2l1 -2l1 0l0 3zM1997 763l-4 1l-6 -1l2 -4l4 -1zM2671 617l0 2l-2 1l-1 -2l1 -1zM1999 377l2 -3l4 2l0 1l-4 2zM2409 222l-1 2l-3 1l-1 -2l2 -2zM2580 413l0 4l-4 7l-3 -2l2 -8zM2300 393l4 0l3 1l-2 5l-5 -2zM2213 657l-3 -2l0 -2l2 0l1 3zM2305 751l-2 1l-3 -3l2 -2l3 0zM2158 726l2 -2l5 3l-1 2l-5 0zM2404 618l3 1l0 3l-1 1l-2 -2zM2147 585l1 0l0 2l-1 0l-1 -1zM2087 772l0 2l-2 2l-1 -2l1 -2zM2444 302l-4 7l-8 0l0 -5l5 -2zM2475 771l-1 -1l0 -1l1 -1l2 1zM1931 511l-3 -2l2 -4l2 0l1 4zM2398 569l1 -1l1 0l1 1l-1 1zM2610 635l-1 -3l3 -5l2 3l-1 4zM2582 378l-4 -2l0 -3l3 -2l1 3zM2519 675l0 -3l3 -1l1 2l-2 2zM2513 370l1 -3l2 -2l1 2l-1 2zM2488 538l1 0l1 3l-1 1l-1 -3zM1997 575l-3 2l-3 -1l1 -4l4 1zM2490 607l1 1l-2 2l-1 -2l1 -1zM2189 258l0 2l-1 1l-2 -1l1 -2zM1961 563l1 0l0 3l-2 0l0 -3zM2412 542l6 3l3 5l-3 1l-8 -5zM1973 446l-2 -1l0 -3l2 -1l2 3zM1980 310l0 1l-1 1l-2 -1l1 -2zM2032 359l3 0l3 2l-1 3l-4 -2zM2220 757l2 -1l3 0l-1 2l-2 1zM1988 560l-4 -1l-1 -3l2 -3l3 5zM2474 290l3 1l1 3l-2 2l-3 -4zM2359 634l-2 2l-6 3l-1 -3l5 -4zM2121 293l1 -1l2 1l0 2l-2 0zM2091 680l2 1l2 3l-2 0l-2 -1zM2435 200l1 0l2 1l0 1l-3 0zM2640 604l2 0l0 6l-1 1l-3 -5zM2163 426l-1 0l-2 0l1 -2l1 0zM2018 627l1 -3l2 -1l1 1l-1 2zM2406 630l5 -3l5 2l-2 5l-6 -2zM2316 552l3 4l3 9l-4 0l-5 -7zM2506 657l0 -1l2 -1l1 0l-1 2zM2567 361l2 2l-2 3l-2 0l1 -4zM1940 738l-2 -4l1 -2l3 0l1 4zM2144 227l1 -2l2 -1l0 1l-1 2zM2117 264l-2 4l-7 1l-1 -3l7 -3zM2663 267l0 -6l2 -4l4 3l-2 6zM2318 229l-2 -3l1 -4l1 -1l2 5zM2368 235l-1 2l-2 -1l-1 -1l2 -1zM2562 630l0 -4l3 -2l3 2l-2 4zM2073 551l-1 -2l2 -3l2 1l-1 2zM2060 572l-2 2l-3 0l-1 -2l4 -1zM2460 339l2 1l1 2l-2 1l-1 -2zM1947 707l4 0l2 2l-1 3l-3 -1zM2341 596l3 2l-1 9l-4 1l-1 -9zM2019 226l-4 -5l3 -5l3 0l1 7zM2079 273l-1 4l-2 2l-3 -1l2 -2zM2666 240l4 -2l5 3l-1 4l-7 -1zM2102 289l-2 0l-1 -2l1 -2l3 3zM2254 579l2 5l-2 4l-3 1l0 -7zM1967 657l4 3l-1 3l-2 3l-3 -5zM2530 594l3 1l0 2l-1 1l-2 -1zM2421 350l-1 -2l1 -3l2 0l1 3zM2617 187l2 0l2 3l-2 0l-2 0zM2255 389l1 -2l2 -2l2 2l-2 2zM2482 314l-2 1l-2 -1l0 -2l3 0zM2214 676l-2 -2l1 -4l2 -1l1 4zM2083 663l-4 0l-1 -4l1 -2l6 4zM2526 383l-5 1l-4 -7l2 -5l8 6zM2318 400l0 -4l3 -5l3 0l-2 7zM2245 615l3 2l-1 4l-4 -1l-1 -3zM2471 537l-1 2l-2 0l-1 -2l2 0zM2641 401l2 -1l4 2l-1 2l-3 0zM2650 380l5 0l4 1l-3 4l-5 -1zM2279 379l-3 1l-3 -1l1 -2l3 0zM2028 256l2 1l1 2l-2 1l-1 -3zM2576 316l-1 -2l1 -2l3 1l0 3zM2378 215l-1 2l-3 1l1 -2l2 -1zM2041 546l-1 -2l2 -1l1 2l-1 1zM2196 473l-2 -1l1 -2l2 1l0 1zM2362 601l-2 -1l0 -3l2 -1l1 3zM2238 199l1 3l-4 4l-3 -2l4 -5zM2646 708l-2 2l-3 -2l1 -1l2 -1zM2284 658l-3 0l-5 -6l5 -1l3 4zM2068 259l1 4l-2 3l-3 -1l2 -5zM2586 754l0 -2l3 -2l0 2l-1 2zM2065 378l-2 4l-3 0l-2 -3l4 -2zM2093 252l1 3l-3 1l-3 -1l2 -4zM2254 545l-3 2l-4 1l0 -2l3 -2zM2200 631l0 1l-1 2l-1 0l0 -2zM2102 405l2 1l-1 3l-2 0l0 -3zM2049 717l-1 0l-3 -1l1 -2l2 0zM2504 358l-3 -1l1 -2l2 -1l0 3zM2391 323l-1 -2l2 -3l3 0l-1 3zM2365 334l1 1l-1 3l-1 0l-1 -4zM2140 709l-3 2l-5 0l0 -2l4 -1zM2338 693l0 1l-1 2l-2 -2l1 -2zM2694 502l-2 -1l-1 -2l1 -1l3 2zM2502 673l2 -2l3 1l-1 4l-3 -2zM2527 685l1 -9l6 1l2 3l-4 7zM2500 697l0 -4l4 -2l3 2l-3 3z"/>
<path fill="rgb(191,181,163)" d="M2019 292l-1 -1l-1 -3l1 -1l2 3zM2244 589l4 0l3 5l-4 3l-4 -4zM2567 673l1 -2l3 1l1 2l-3 0zM2434 553l-1 -2l3 -2l1 1l0 3zM2470 262l1 -1l2 1l-1 1l-1 0zM2221 613l-3 1l-4 -1l1 -2l4 0zM2469 265l-5 0l-2 -2l2 -5l6 2zM2531 711l3 -2l3 -1l1 3l-4 1zM2321 357l-3 5l-6 2l-1 -4l5 -5zM2200 231l-6 -1l-3 -3l1 -5l8 4zM2022 263l-3 2l-2 -4l2 -3l4 2zM2227 609l-1 -3l3 -3l2 3l-1 3zM2255 686l-1 5l-5 -1l-1 -6l6 -1zM2163 767l-1 2l-2 0l-1 -2l2 -2zM2206 664l1 2l-2 3l-1 -1l1 -3zM2179 249l2 -1l2 2l-1 1l-2 0zM2053 692l6 -5l10 -1l0 5l-9 4zM2689 745l1 -1l1 0l0 2l-2 0zM2124 701l2 -5l3 -1l1 2l-2 3zM2236 663l-4 0l-3 -3l1 -2l4 0zM2092 605l0 1l-1 2l-2 -1l1 -2zM2258 681l-2 -5l3 -4l3 2l0 5zM2218 760l-2 -1l0 -1l1 -1l2 1zM2143 764l-1 3l-2 1l-1 -2l1 -2zM2575 304l-2 3l-6 -2l2 -2l4 0zM2589 400l0 3l-2 3l-1 -2l0 -1zM2319 242l2 -2l5 1l0 3l-5 -1zM2571 316l-1 -1l0 -3l3 1l0 2zM2446 715l-1 2l-3 1l0 -3l2 -1zM2480 663l-1 3l-5 1l1 -4l2 -2zM2010 357l2 -1l4 -1l-1 2l-2 1zM2296 295l1 -2l2 -1l0 2l-1 1zM2428 669l3 1l1 5l-3 -1l-2 -3zM2623 342l7 0l1 4l-3 4l-7 -4zM2632 742l-6 -6l0 -5l7 -3l3 8zM2303 545l-2 -3l2 -7l4 2l0 4zM2008 353l2 -1l2 -1l0 2l-2 1zM1924 345l-1 -2l1 -1l1 1l0 1zM1991 722l-6 2l-4 -6l3 -2l3 0zM2341 406l-2 -3l1 -3l3 -1l2 5zM2560 404l2 -2l3 2l0 3l-4 -1zM2434 407l3 -1l3 2l-1 1l-3 1zM2578 719l0 2l-2 1l-2 -2l3 -1zM2559 224l2 0l1 2l-1 1l-2 -2zM2483 319l2 1l0 3l-2 1l-2 -3zM2233 352l0 -4l2 -4l2 2l-2 4zM2267 658l-1 2l-2 1l-1 -3l2 -1zM2581 631l2 -5l9 -3l4 6l-11 8zM2147 307l-5 1l-5 -4l3 -2l5 1zM1989 352l-4 -2l2 -5l5 -1l-1 6zM2632 292l1 -3l6 -4l2 1l-4 6zM2193 634l1 2l-2 2l-1 -1l0 -1zM2134 591l-3 0l-1 -3l1 -2l3 2zM1926 381l1 -3l6 -2l1 2l-4 4zM2396 193l-2 -2l0 -2l3 -1l1 3zM2277 310l-2 1l-2 -3l1 -1l3 1zM2211 645l-1 -2l2 -3l1 1l0 2zM2344 627l-2 2l-3 -1l0 -3l4 1zM2217 226l3 -4l10 -1l-1 5l-5 2zM2620 765l-2 1l-1 0l-1 -2l3 0zM2482 193l-3 0l-2 -2l0 -1l4 0zM2570 542l-2 5l-7 4l-3 -4l5 -5zM2056 600l1 1l-1 2l-2 0l1 -3zM2512 221l3 -4l4 -1l2 2l-6 4zM2373 536l3 -2l3 -1l1 3l-2 1zM1932 689l-2 -4l0 -2l4 1l1 2zM2049 599l0 -5l4 -1l1 2l-1 4zM1935 737l-1 -3l1 -3l3 0l0 3zM2191 255l-3 -3l2 -3l2 0l1 4zM2595 761l-2 2l-4 1l-1 -3l4 -2zM2632 225l2 5l-4 4l-5 -5l2 -5zM2104 696l2 0l1 2l-2 0l-1 -1zM2527 564l-2 -1l-1 -2l1 -1l2 2zM2388 703l-2 1l-3 -2l2 -2l2 1zM2524 691l-2 2l-4 1l0 -2l4 -1zM2574 307l0 3l-5 2l0 -1l3 -4zM2239 735l-3 0l0 -2l0 -2l3 2zM2201 265l1 2l-1 4l-2 -1l0 -3zM2048 341l3 -4l3 -2l3 1l-5 5zM2291 194l-3 1l-4 -4l2 -2l5 0zM2280 281l-4 -4l1 -6l7 -1l1 7zM2602 535l-5 2l-6 -2l2 -4l6 2zM2223 414l1 2l-2 2l-1 -1l1 -2zM2634 321l-6 1l-2 -5l2 -2l6 2zM2595 618l0 -3l5 -5l4 1l-5 7zM2481 303l2 0l3 5l-3 0l-3 -3zM2216 414l2 3l-1 3l-2 -1l-1 -2zM2203 663l-4 2l-3 -3l0 -2l5 0zM2274 231l-1 3l-3 1l-2 -4l3 -2zM2457 250l2 2l-1 5l-3 -1l-1 -2zM2194 714l1 -2l2 -1l1 2l-2 2zM2203 678l4 1l2 2l-3 2l-3 -2zM1962 709l1 0l2 1l0 2l-3 -1zM2677 695l1 5l-3 2l-4 -1l4 -6zM2364 301l0 2l-1 1l-1 -1l1 -2zM2237 751l4 -2l4 3l-2 3l-3 -1zM2629 695l0 -1l1 -2l2 1l-1 2zM2316 203l-4 2l-4 -2l1 -2l3 0zM2164 610l-1 -3l0 -3l5 0l0 3zM2419 623l3 -1l1 2l-1 2l-2 -2zM2266 219l1 -3l4 -2l2 3l-3 4zM2035 740l1 3l-1 1l-1 1l0 -4zM2626 758l3 -5l6 -1l0 5l-4 3zM2391 738l1 -1l2 0l0 2l-1 0zM1973 606l-5 4l-8 -1l2 -6l6 -3zM2155 424l-1 -3l4 -2l2 2l-2 3zM2657 766l3 2l1 5l-4 2l-2 -5zM2524 209l1 -6l4 -3l4 1l-4 7zM2602 198l3 0l1 2l-1 1l-1 -1zM2136 697l-2 -3l6 -8l1 3l-2 7zM2123 531l3 0l1 2l-2 1l-2 -1zM2355 576l0 3l-1 1l-2 -1l1 -1zM1920 304l0 -1l5 0l0 2l-4 1zM2274 201l-2 -1l-1 -1l3 -2l2 2zM2480 378l-4 5l-8 0l-3 -4l8 -4zM2683 340l-1 0l0 -4l2 -1l1 4zM2494 419l-2 3l-2 0l-1 -2l2 -2zM1999 624l1 -2l3 -1l1 2l-2 1zM2700 596l1 0l2 0l0 2l-2 1zM2052 333l-1 -1l1 -3l2 0l0 3zM2624 608l0 -1l3 -2l2 2l-4 2zM1972 613l0 -2l4 -1l1 1l-1 3zM2117 668l4 -4l4 -1l3 3l-5 3zM2029 385l2 4l-2 4l-3 -1l0 -6zM2212 566l-3 -1l0 -4l2 0l2 3zM2231 287l3 1l1 3l-4 2l-2 -2zM2703 738l-5 2l-9 -11l2 -5l13 8zM1998 194l1 1l0 5l-1 -1l-2 -3zM2601 372l-1 -3l0 -2l4 -1l0 5zM2196 664l-2 0l-2 -4l2 -1l3 2zM2421 571l5 -6l6 -2l0 5l-3 3zM2483 604l-1 0l0 -3l2 0l1 2zM2310 617l1 -1l3 -2l2 2l-2 1zM2094 648l3 -2l3 1l0 3l-3 0zM2325 375l1 -2l5 2l0 3l-6 0zM2516 573l2 -1l1 3l-1 2l-1 -1zM2247 308l0 -1l2 -1l1 1l-1 2zM2121 338l0 3l-4 6l-1 -2l1 -6zM2556 415l-2 4l-6 4l-1 -2l2 -4zM2604 254l-1 4l-3 3l-3 -2l3 -3zM2405 551l0 3l-2 2l-2 0l1 -4zM2537 317l-4 -1l-2 -2l0 -2l4 1zM1931 675l-5 -4l-1 -5l1 -3l6 5zM1927 270l-3 3l-3 0l-1 -5l6 0zM2112 279l-5 1l-2 -3l1 -2l5 2zM1962 374l-1 0l-2 -1l1 -2l2 1zM2653 288l1 -6l7 -1l3 2l-3 6zM2379 394l-3 -1l-1 -5l2 0l3 3zM2133 542l2 -2l2 1l-1 2l-2 1zM1986 417l-1 4l-4 3l-1 -2l2 -4zM2161 747l3 2l-1 8l-5 -1l-1 -5zM2246 331l6 -2l4 1l1 5l-6 1zM2001 198l2 -1l1 1l0 3l-2 0zM2321 651l5 1l0 2l-4 2l-2 -3zM2344 700l3 0l3 3l-3 2l-4 -1zM2089 667l2 4l-2 4l-3 -2l1 -4zM2368 703l-1 -1l2 -3l2 0l0 4zM2651 730l-1 -6l4 -3l3 1l-1 5zM2281 197l-1 -2l2 -2l1 2l0 2zM2436 199l-3 -1l0 -3l2 -1l1 1zM2193 343l-3 0l-2 -3l2 -2l3 2zM2602 739l3 1l-3 4l-3 -1l1 -4zM2430 245l-3 -4l1 -5l1 -1l2 6zM2129 347l5 3l2 2l-2 3l-4 -2zM2533 218l-1 1l-1 1l-1 -2l0 -1zM2602 243l2 -1l5 0l-2 3l-3 0zM2330 241l-3 -4l3 -3l3 2l-1 3zM2655 569l4 0l3 3l-2 3l-5 -3zM2170 231l0 3l-5 3l-1 -3l3 -4zM2628 201l-2 3l-6 -1l0 -5l5 0zM2639 390l-3 -1l0 -1l1 -2l2 1zM2025 669l1 5l-3 4l-4 -3l2 -5zM1973 237l-4 -2l0 -5l2 -1l4 4zM2157 668l-2 -1l-1 -5l4 0l2 3zM2363 283l-5 0l-1 -3l2 -2l4 2zM2109 190l2 2l0 1l-1 1l-1 -2zM2350 731l-2 2l-3 -1l0 -3l3 1zM2505 222l-4 -4l3 -6l2 0l1 9zM1941 411l-2 2l-1 -1l0 -2l2 0zM2486 762l-3 -2l2 -4l2 1l3 4zM2060 345l-2 -3l1 -1l2 0l0 3zM2055 689l-1 -1l1 -2l1 0l1 2zM2421 610l0 1l-3 0l0 -1l1 -1zM2153 650l-8 -10l2 -8l7 2l3 5zM2360 694l-5 1l-2 -1l-1 -3l6 1zM2387 345l-4 2l-6 -10l4 -1l5 4zM2263 756l-1 2l-1 -1l-2 -1l2 -1zM2184 652l-3 -1l0 -3l2 0l1 3zM2223 283l1 -2l1 -1l2 0l-2 3zM2561 541l1 0l1 0l0 2l-2 0zM1929 361l-2 -5l1 -2l5 1l-2 4zM1970 555l2 2l1 2l-3 1l0 -3zM1994 579l2 -1l3 1l-1 1l-2 1zM2053 228l4 -1l2 4l-4 3l-3 -4zM1954 255l3 0l6 5l-3 1l-4 0zM2263 210l-2 1l-4 -3l1 -2l4 0zM2605 586l-2 1l-1 0l-1 -2l3 -1zM2395 345l-3 2l-2 -1l-1 -3l4 0zM2446 192l1 1l0 3l-2 0l-1 -3zM2254 330l-2 3l-4 -1l0 -2l4 0zM2273 572l-3 -3l3 -7l4 1l-1 6zM2530 365l-1 -1l-1 -3l2 0l1 2zM2650 290l0 4l-3 1l-1 -1l1 -3zM2183 727l-3 -3l2 -4l3 1l1 4zM2044 600l-1 5l-5 3l-1 -3l1 -3zM2545 606l-5 2l-4 -1l0 -5l5 1zM2563 260l2 -3l2 1l1 3l-3 1zM2150 186l-1 2l-3 0l0 -1l2 -2zM2543 339l0 2l-1 2l-1 0l-1 -2zM2267 673l-1 -4l1 -3l2 2l0 2zM1943 647l-3 -2l0 -5l4 -1l1 5zM2567 416l2 0l1 2l-2 1l-1 -2zM2233 229l1 1l-1 1l-1 -1l0 -2zM2407 689l-3 0l-1 -3l1 -2l3 1zM1989 689l4 5l-2 4l-3 0l-2 -6zM2642 342l-4 2l-2 -1l-2 -3l4 -1zM2538 234l0 2l-5 0l0 -2l3 -2zM2664 592l-2 3l-7 -2l0 -2l6 -1zM2115 710l-1 2l-3 2l-1 -2l3 -3zM2103 606l-2 5l-6 -1l0 -4l4 -2zM2619 258l2 -2l6 2l1 3l-8 0zM2591 690l-3 -1l-3 -4l3 -1l3 4zM2227 354l2 2l-1 5l-4 -1l-1 -5zM2354 592l0 3l-4 2l-1 -2l1 -3zM2209 666l-4 0l-1 -2l1 -1l4 1zM2464 620l0 -1l2 -1l0 2l-1 1zM1954 278l-2 0l-3 -2l3 -2l2 2zM2159 576l-4 -1l-5 -4l2 -4l7 0zM2504 411l3 5l-2 2l-3 1l0 -4zM2705 253l0 2l-2 2l-1 -2l1 -1zM1922 694l5 -5l6 -1l3 2l-4 7zM2701 193l-3 0l-2 -3l2 -2l4 4zM2206 757l4 0l1 4l-3 1l-2 -1zM2454 199l1 -2l4 1l1 2l-5 1zM2700 189l-1 3l-1 0l-1 -2l1 -1zM1921 380l2 -2l7 1l0 3l-6 1zM2635 334l0 5l-4 2l-2 -1l2 -4zM2091 205l2 0l2 1l-1 1l-2 -1zM2477 298l-7 3l-6 -3l0 -4l8 1zM2467 736l-5 0l-3 -6l2 -2l5 4zM2226 719l0 2l-4 0l0 -2l3 -1zM2262 773l-6 2l-3 -1l-1 -2l4 -2zM2426 348l-4 2l-2 -2l2 -3l4 1zM2606 541l2 9l-5 3l-3 -1l3 -10zM2011 604l0 2l-4 2l-1 -2l3 -3zM2537 702l-1 1l-2 1l-1 -1l2 -3zM1930 578l2 -5l7 -2l3 3l-8 6zM2250 640l-2 0l-1 -2l2 -1l1 1zM2678 358l2 -4l3 -3l4 2l-4 4zM2208 214l0 -1l4 -1l0 2l-3 0zM2178 612l2 1l-1 1l-1 0l-1 -1zM2411 404l1 2l0 2l-1 0l-1 -2zM2171 538l-6 1l-5 -4l0 -5l10 1zM2614 700l-2 -1l1 -3l1 -1l1 3zM1985 701l0 -3l8 -4l5 2l-8 6zM2299 296l-3 -1l-1 -2l1 -2l4 1zM2133 751l4 -2l5 2l-3 3l-6 -1zM2180 635l-5 0l-4 -3l2 -2l6 2zM2324 306l0 1l-2 1l0 0l1 -3zM2306 302l2 -5l4 -1l1 3l-2 3zM2490 353l4 -1l2 3l0 2l-4 -1zM2696 272l1 3l-5 2l0 -2l2 -3zM2235 634l2 -1l3 1l-1 2l-3 0zM2312 291l3 2l-1 7l-4 0l-1 -6zM2184 274l1 1l0 1l-2 0l0 -2zM2201 660l1 4l-3 1l-1 -2l0 -3zM2573 728l-1 -1l0 -3l1 0l2 2zM2017 272l-1 0l-2 0l0 -1l2 -1zM2317 381l0 -1l4 -2l1 2l-2 2zM2044 586l-3 0l-1 -2l1 -2l2 2zM2067 561l-3 1l-3 -3l0 -2l5 2zM1995 361l-4 -1l-1 -4l1 0l4 2zM2052 644l1 1l1 3l-2 1l-2 -3zM2176 317l0 3l-1 1l-2 -1l1 -2zM2617 619l-3 -2l0 -1l2 -1l1 1zM2276 751l3 0l1 3l-2 1l-2 0zM2673 669l-3 -1l0 -4l3 -1l2 4zM2693 604l1 -3l2 1l0 2l-2 1zM2652 550l-2 2l-6 -1l1 -3l4 -2zM2372 773l3 -8l8 -3l2 4l-6 7zM2456 328l-2 -4l6 -4l2 4l-4 5zM2634 276l1 2l-1 3l-3 0l1 -4zM2681 620l-2 2l-4 0l0 -4l4 -1zM2320 696l2 -1l2 3l-2 1l-2 -2zM2467 233l-5 1l-6 -2l2 -4l7 3zM2044 333l1 -3l1 -1l3 1l-2 3zM2474 617l5 -3l2 3l-1 3l-4 0zM2062 593l-3 4l-5 -2l0 -4l4 -2zM2072 710l-1 -4l2 -2l3 0l0 5zM2581 625l2 -1l3 3l-1 3l-3 -2zM2251 189l3 2l-3 5l-2 0l-2 -4zM2581 369l2 5l-2 5l-2 -2l-1 -4zM2329 269l-3 1l-3 -1l1 -3l4 -1zM2341 523l7 5l-2 4l-4 1l-3 -4zM2321 208l-5 3l-9 -9l4 -2l8 4zM2354 188l1 3l-4 5l-1 -2l1 -5zM2459 641l-1 0l-2 0l-1 -2l2 0zM2133 335l-1 2l-3 0l-1 -2l3 -2zM2086 274l4 0l4 4l-2 1l-7 -2zM2057 652l-3 2l-5 -3l0 -3l4 1zM2136 404l-2 0l-1 -5l2 0l2 4zM2390 263l-1 3l-7 0l0 -4l6 -1zM2206 734l2 -2l7 -2l2 3l-6 4zM1969 652l3 1l1 2l-3 1l-2 -2zM2244 647l0 1l-2 2l-1 -1l1 -2zM2201 538l0 -2l3 0l1 1l-2 1zM2619 723l-3 5l-6 0l0 -5l7 -2zM1999 409l4 -2l5 4l-4 3l-5 -3zM2576 528l1 2l-2 1l-3 -1l2 -2zM2508 332l0 -2l1 -2l2 2l-1 2zM2188 309l5 2l1 2l-1 3l-5 -3zM2478 366l-4 -7l3 -4l5 -2l0 8zM2567 370l3 -2l1 1l-1 3l-2 0zM2167 221l3 0l1 2l-2 2l-2 -2zM2367 294l0 -2l4 -2l2 2l-2 3zM2244 340l3 -1l2 4l-2 2l-3 -3zM2065 753l-5 -3l-1 -8l3 -2l4 6zM2472 615l-4 4l-7 -3l0 -5l7 1zM2128 418l-3 3l-3 -1l-2 -2l4 -1zM1993 337l-2 -1l-1 -2l2 -1l2 1zM2267 561l-2 1l-1 -1l1 -2l2 0zM2438 390l-3 0l0 -3l2 -1l1 3zM2036 286l-1 3l-5 1l-2 -3l4 -3zM2010 268l3 -2l3 2l0 1l-4 1zM2033 273l-2 -4l0 -2l3 0l1 2zM2326 727l2 0l1 3l-1 0l-2 -1zM2416 321l0 -5l3 -3l2 3l-2 4zM2158 679l1 -4l2 -1l1 2l-2 3zM2097 360l-1 -1l1 -3l3 -1l1 3zM2190 649l0 -2l2 -1l1 2l-2 1zM1978 721l2 2l1 3l-2 1l-2 -3zM2055 688l-4 3l-4 -3l3 -3l3 1zM2375 278l9 -1l7 9l-4 2l-8 -1zM2364 687l1 1l0 3l-1 0l-1 -2zM1980 554l3 -2l5 0l0 6l-6 -1zM2041 309l0 2l-3 2l-1 -2l2 -3zM2160 351l0 -2l3 0l1 2l-2 1zM2453 685l-3 -2l-1 -2l2 -2l2 4zM2079 681l-4 -1l2 -3l3 -1l0 4zM2390 284l0 3l-4 2l-2 -1l3 -3zM2582 739l-6 -1l-1 -10l6 0l2 4zM2662 421l-1 -3l7 -4l3 5l-4 3zM2132 394l1 -5l5 -2l4 4l-5 5zM2232 641l-2 -1l-1 -3l1 -1l3 2zM1920 210l2 0l3 2l0 2l-3 0zM2596 752l-1 1l-2 0l-1 -2l3 -1zM2547 317l-2 1l-2 -3l2 -3l4 2zM2600 337l-1 3l-2 1l-1 -2l1 -1zM2589 250l-2 1l-2 0l-1 -2l3 0zM2476 394l0 4l-3 4l-2 -2l2 -4zM1963 704l3 -1l4 1l-1 3l-4 0zM2212 325l-3 0l-2 -5l1 0l4 1zM2180 407l1 2l-2 2l-1 -1l0 -2zM2397 311l-4 2l-5 1l-2 -5l6 -2zM2437 398l4 -1l4 4l-2 4l-6 -3zM1985 370l1 -2l3 1l0 2l-3 1zM2360 199l3 0l4 3l-2 2l-5 -2zM2397 352l0 -1l2 -1l1 1l-1 1zM2055 627l2 -6l6 3l0 4l-6 2zM2392 196l-4 0l-2 -4l3 -1l1 1zM1992 646l-2 0l-1 -1l1 -1l2 0zM1985 698l5 1l3 4l-3 2l-3 -1zM2030 553l0 -1l1 -1l1 1l-1 1zM2615 641l-3 0l-1 -3l3 -2l2 3zM2584 333l0 -5l4 -2l3 3l-3 5zM2178 276l-2 -1l-2 -4l4 -1l2 1zM2572 207l-3 1l-2 -3l1 -2l4 1zM2068 277l-1 2l-4 0l1 -2l1 -1zM2264 193l0 2l-3 2l-1 -2l2 -2zM2577 347l3 -2l3 1l0 3l-5 -1zM2495 314l-2 -4l1 -5l3 1l1 4zM2658 767l-4 1l-3 -5l4 -2l3 0zM2388 402l-4 1l-3 -5l3 -2l5 2zM2134 741l0 2l-1 1l-2 0l1 -3zM2615 586l1 -1l2 1l-1 2l-2 -1zM2249 647l1 3l-2 0l-2 -1l1 -2zM2483 651l0 4l-3 0l-2 -1l2 -4zM2196 701l-4 5l-4 2l-1 -4l3 -4zM2165 719l4 -1l2 3l-1 1l-3 0zM2659 623l-3 2l-3 -2l0 -3l3 1zM2452 378l-2 4l-4 -1l-2 -4l6 -2zM2307 239l1 -2l5 1l-1 3l-4 1zM2510 415l-3 -4l1 -3l2 -1l3 4zM2334 549l2 4l-2 2l-5 -1l2 -5zM2614 314l-3 1l-4 -1l2 -2l4 0zM2615 540l1 3l0 3l-3 2l-1 -4zM2498 645l-2 1l-2 -1l0 -3l2 0zM2698 565l-5 1l-7 -3l2 -3l6 0zM2547 242l0 -2l4 -3l1 1l-2 4zM2203 768l4 -1l4 4l-3 2l-4 -3zM2393 587l4 0l4 1l-1 4l-5 0zM2214 267l3 -2l5 2l-1 2l-4 0zM2635 340l-2 -2l0 -1l2 -1l1 3zM2010 759l2 1l1 2l-1 1l-2 -1zM2473 368l1 1l-1 3l-3 0l1 -4zM2095 627l-1 -1l1 -2l1 1l0 1zM2646 380l0 2l-2 1l-1 -2l2 -1zM2488 414l-1 -3l2 -3l2 1l-1 4zM2248 602l1 -2l4 0l1 2l-4 1zM2392 725l4 2l2 5l-4 1l-3 -4zM2635 375l1 -1l3 0l0 2l-3 1zM2235 666l0 2l-3 3l-1 0l1 -4zM1940 758l-2 1l-3 0l0 -3l4 0zM2544 622l-1 -2l1 -2l2 0l0 2zM2467 297l0 -3l2 -2l2 1l-2 3zM2117 330l0 2l-2 3l-3 -1l3 -5zM2230 626l1 3l-5 1l-2 -3l4 -2zM1996 761l-3 2l-4 -2l1 -2l3 0zM2181 762l-1 -1l0 -3l1 0l1 4zM2168 671l1 -1l3 -1l1 1l-2 2zM2062 661l1 -1l2 0l0 1l0 1zM2642 293l1 3l-2 3l-3 -1l0 -5zM2049 562l0 -2l1 0l1 1l-1 1zM2337 762l-3 -2l1 -4l2 -1l1 6zM2431 722l-3 1l-4 -4l4 -2l3 1zM1968 646l1 3l-1 3l-3 0l0 -3zM2645 404l3 2l-1 5l-3 1l-2 -5zM2249 734l-2 2l-3 0l0 -4l3 0zM2225 584l2 1l0 1l-2 1l-1 -2zM2526 687l2 2l1 3l-3 0l-1 -3zM2336 697l-2 -1l1 -4l2 0l1 3zM2569 290l1 2l-2 5l-2 1l0 -7zM2295 353l-1 -2l3 -2l2 2l-2 2zM2381 542l0 1l-2 1l-1 -1l2 -2zM2063 640l1 2l-3 2l-1 -1l1 -3zM2454 371l0 4l-2 3l-2 -2l1 -4zM1937 591l3 -2l4 2l-1 3l-2 1zM2607 311l-3 2l-2 -1l0 -3l3 0zM2122 540l-2 1l-3 -1l1 -3l3 0zM2100 724l-1 -1l1 -3l2 1l-1 3zM2555 327l0 -2l3 0l1 1l-2 1zM2098 700l-2 0l-2 -2l1 -1l3 0zM2016 299l-3 0l1 -3l2 0l0 1zM1989 321l5 2l1 5l-4 3l-3 -5zM2655 336l-5 0l-1 -3l2 -1l3 2zM2213 646l0 -2l2 -1l1 2l-2 1zM2476 664l-2 0l-2 -4l2 -1l3 3zM2022 218l-3 -1l-3 -3l3 -2l4 2zM2547 294l3 1l2 4l-2 1l-4 -3zM2351 695l-2 2l-2 1l-2 -3l3 -1zM2437 578l0 3l-3 0l-1 -3l3 -2zM2674 206l0 -1l1 -1l1 1l0 1zM2142 650l1 -1l2 3l-2 2l-1 -1zM2492 731l-3 -4l2 -3l3 1l0 3zM2322 704l2 3l0 4l-3 1l0 -6zM2115 598l3 0l2 2l-2 3l-4 -2zM1999 717l3 -1l2 2l0 2l-4 -1zM2672 388l-1 3l-3 2l-2 -3l2 -3zM2316 285l-3 -3l1 -3l1 1l2 3zM2101 748l3 0l4 4l-1 4l-5 -4zM2533 245l9 -8l14 -2l0 8l-10 5zM2383 773l-3 -4l2 -2l3 1l0 3zM2079 414l-3 -2l1 -2l3 -3l2 3zM2027 283l0 -3l5 -4l2 3l-2 3zM2311 216l0 -5l3 -3l2 3l-1 2zM2653 304l-3 1l-1 -3l2 -1l2 1zM2067 569l6 -6l7 4l-2 6l-8 -1zM2526 376l-1 2l-3 1l0 -3l2 -1zM2557 567l-2 1l-2 -2l1 -1l2 0zM2465 592l-2 -2l0 -2l3 0l1 2zM2471 349l-2 1l-5 -1l1 -2l4 0zM2456 732l-4 -3l-2 -8l4 1l5 6zM2107 296l-2 1l-1 0l0 -2l2 0zM2657 234l-1 -2l1 -1l3 -1l0 3zM2346 291l-2 2l-2 0l0 -2l2 -1zM2218 549l8 5l3 6l-5 4l-8 -9zM2504 406l3 0l1 3l-1 2l-3 -3zM2677 752l0 -2l0 -2l2 0l1 2zM2025 767l-3 1l-3 -4l2 -3l5 3zM2117 733l-1 -2l-1 -2l2 -2l2 4zM1936 742l3 -2l3 1l0 4l-5 -2zM1957 373l-2 -6l2 -2l3 1l1 3zM2686 537l1 -1l2 -1l0 1l-1 2zM2599 750l-2 1l-3 -1l0 -2l4 0zM2021 605l-2 -2l-1 -2l3 0l1 2zM2040 594l-3 -4l1 -2l4 1l0 2zM2640 208l2 5l-2 5l-3 -2l0 -3zM2173 291l-2 1l-4 0l0 -2l3 -1zM2599 764l2 3l-2 3l-2 -1l0 -3zM2380 316l-2 1l-2 -1l1 -1l2 -1zM1935 541l2 -1l2 0l0 2l-2 2zM2404 406l-1 0l-2 -2l1 -2l3 0zM2207 533l0 -3l2 -1l3 2l-3 3zM2057 629l3 -1l4 1l0 2l-4 1zM2311 670l-3 0l-2 -4l3 -1l2 3zM2445 283l-5 1l-5 -4l2 -2l5 2zM2617 280l-4 -1l-4 -6l5 -1l3 2zM2208 294l1 2l-2 4l-2 -2l0 -2zM2323 632l2 -4l4 -2l2 4l-5 3zM2193 571l-1 -3l1 -1l1 0l0 2zM2517 309l0 1l-4 0l0 -2l2 -1zM2135 327l3 1l1 3l-3 3l-3 -4zM2673 557l-2 -3l3 -5l2 1l0 7zM2151 583l-5 4l-8 -2l-2 -2l10 -3zM2291 722l-5 -1l-1 -5l1 -1l5 3zM2336 193l-1 0l-3 -2l2 -1l1 0zM2466 410l1 -1l4 0l0 3l-4 0zM2467 403l2 -1l1 0l1 1l-2 1zM2323 569l-1 1l-4 -1l1 -2l3 0zM2223 326l-1 3l-2 2l-2 -2l1 -2zM2045 375l-1 6l-5 7l-3 -4l2 -6zM2180 247l-8 0l-2 -10l8 -3l3 7zM2518 556l-3 -1l-1 -6l5 1l2 3zM2213 307l-1 -1l1 -1l2 0l-1 1zM2088 746l1 0l0 2l-2 0l0 -1zM2537 198l2 0l1 2l-2 1l-1 -2zM2153 232l3 0l2 3l-1 2l-4 -2zM2291 315l0 9l-5 3l-6 1l4 -8zM2042 771l-1 -3l1 -2l2 1l1 2zM2470 355l-3 1l-3 -2l1 -2l4 1zM2081 206l-1 3l-1 1l-3 -1l2 -3zM2380 401l-3 1l-2 -1l0 -2l3 0zM2372 404l-4 2l-10 -5l4 -3l7 2zM2183 684l1 -2l2 -1l0 2l-1 1zM2015 413l0 3l-3 4l-2 -2l2 -4zM2669 574l-2 0l-2 -2l1 -1l3 2zM2549 541l-4 -2l3 -6l3 1l1 4zM2329 395l1 3l-3 4l-1 -1l0 -4zM2273 405l5 -2l4 1l-2 3l-2 1zM2014 303l1 -2l2 0l0 1l-1 1zM2526 610l-4 3l-4 -2l-1 -5l5 -1zM1965 672l3 -6l6 1l0 6l-3 1zM1980 578l2 -1l2 3l-1 2l-3 -2zM2475 313l-3 4l-3 0l-1 -1l4 -3zM2624 543l-3 2l-2 -1l1 -3l3 1zM2315 738l-3 -1l0 -5l3 -1l1 3zM2603 705l-2 1l-6 0l2 -4l5 0zM2500 716l2 1l1 1l-2 1l-1 -1zM1924 208l-2 -1l0 -2l2 -1l1 2zM2127 342l-4 -2l-2 -4l2 -2l4 3zM2603 197l-2 -2l1 -2l2 -1l0 3zM2352 413l1 -2l2 0l0 1l-1 1zM2405 579l-2 -3l5 -5l4 4l-4 6zM2281 390l1 -3l3 -1l1 1l-1 3zM1934 335l-2 -4l5 -7l5 2l-5 8zM2087 577l-2 0l0 -3l1 0l1 2zM2376 197l3 -1l3 4l-1 2l-3 -2zM2675 615l-5 -7l3 -5l5 -3l0 11zM1993 693l1 -2l2 0l0 3l-2 0zM2113 289l3 -1l3 1l-2 1l-2 1zM2649 738l2 -3l4 0l1 3l-4 3zM2319 315l4 1l2 5l-2 1l-4 -3zM2683 335l-1 -2l3 -3l3 0l-1 5zM2316 692l0 5l-3 3l-2 -2l2 -5zM2487 380l-2 2l-2 2l-2 -2l2 -2zM2279 230l-2 1l-1 -2l1 -2l2 1zM2465 264l5 4l-1 3l-5 1l-2 -3zM2571 351l1 -4l2 0l2 2l-2 2zM2281 255l-2 1l-2 -4l2 -2l3 1zM2492 406l0 5l-3 3l-3 -2l1 -4zM2375 772l-1 -1l2 -5l2 1l0 4zM2484 191l-1 -2l2 -3l1 1l0 2zM2657 630l-2 2l-3 -1l-1 -1l3 -1zM2628 241l-1 -1l1 -2l1 1l0 1zM2333 601l1 3l-4 3l0 -2l0 -3zM2605 410l-1 3l-3 1l0 -3l1 -1zM1945 334l3 3l1 4l-4 2l-1 -4zM2251 399l1 -5l5 -3l3 1l-5 7zM2597 286l3 4l2 7l-7 2l-3 -5zM2279 552l-2 2l-2 -1l-1 -1l3 -1zM2429 407l4 0l3 5l-2 1l-3 -2zM2085 535l0 -3l4 -1l0 2l-2 3zM2410 341l-3 -2l0 -8l4 1l1 6zM2286 556l-1 2l-3 0l0 -2l2 -2zM2211 648l-2 1l-2 0l0 -2l3 0zM2429 606l1 2l-2 3l-1 -1l0 -3zM2466 749l0 -3l4 -3l1 2l-2 4zM2607 748l-3 1l-1 -2l1 -1l2 1zM2055 715l1 -1l5 -1l0 2l-3 1zM2273 332l-11 2l-8 -7l3 -5l12 3zM2076 229l3 1l1 6l-3 -1l-3 -3zM2053 385l0 2l-2 2l-1 -1l1 -2zM2195 189l4 4l-3 7l-6 -2l-2 -6zM2131 652l-3 -3l2 -5l2 1l0 5zM2312 631l-2 -2l0 -3l2 0l1 3zM2188 420l-3 -1l-1 -3l3 -1l2 2zM2419 628l0 3l-2 2l-2 0l1 -5zM2594 273l-1 -2l0 -5l3 1l1 3zM2462 230l1 4l-4 2l-3 -4l4 -3zM2130 761l-2 1l-4 -3l2 -1l2 0zM2525 263l1 2l0 2l-1 1l-1 -3zM2622 413l-1 -3l0 -2l3 0l0 4zM2145 604l0 -1l4 -5l2 3l-3 5zM2594 740l-1 1l-4 -1l2 -2l3 0zM2048 350l3 0l2 2l-1 1l-4 -1zM2113 718l-1 1l-1 -1l1 -2l2 1zM2441 585l4 -2l2 1l1 2l-5 1zM1973 245l3 3l0 3l-4 1l-1 -6zM2023 640l-6 1l-4 -2l1 -2l6 -1zM2236 311l1 -2l4 -1l1 3l-4 1zM2449 698l-2 4l-3 0l-1 -4l4 -2zM2230 660l3 3l-1 2l-2 0l-2 -3zM2411 741l-2 -2l0 -3l2 0l2 2zM1993 317l0 3l-2 3l-2 -1l1 -2zM2457 400l-4 -2l-2 -5l4 -2l2 2zM2632 685l1 -2l1 -1l1 1l-2 2zM2137 221l-2 -2l-1 -2l2 -1l2 1zM2304 566l-3 -2l-1 -3l2 -1l3 4zM2082 413l-1 -2l3 -1l0 1l-1 2zM2414 386l0 -2l5 -3l1 2l-3 4zM2554 399l-3 2l-5 1l-4 -2l6 -3zM2341 327l1 1l-2 3l-1 -1l0 -3zM2107 301l1 -4l4 0l1 4l-3 1zM1987 657l-3 -2l-1 -4l3 0l2 2zM2026 278l-1 2l-4 2l0 -3l1 -1zM2699 775l-6 -2l-1 -7l3 -1l3 4zM2533 610l0 4l-5 1l-3 -4l3 -2zM2258 381l-2 -4l1 -4l4 -1l0 9zM2053 561l0 -2l1 0l2 1l-2 1zM2354 647l-2 -2l1 -2l2 -1l0 3zM2073 561l-3 1l-2 -3l1 -2l3 2zM2496 380l-1 0l-1 1l-1 -2l1 -1zM1995 208l0 -2l2 -1l1 1l-1 1zM2222 418l-1 -1l1 -1l1 0l0 2zM2295 402l-2 -1l-1 -2l2 -1l1 1zM2164 690l1 -3l6 0l-1 4l-5 1zM2702 670l-2 0l-3 -3l1 0l3 1zM2670 577l0 -1l2 0l0 2l-1 0zM2553 666l-1 -1l0 -2l2 0l1 2zM2493 270l1 -2l3 1l0 2l-3 1zM2141 624l-2 0l-2 -3l1 -3l4 4zM1984 761l-1 4l-2 2l-2 0l2 -4zM2589 668l1 -3l3 1l0 3l-2 0zM2113 212l-1 1l-2 0l0 -1l2 -1zM1941 657l-2 0l-1 -2l1 -2l3 2zM2581 562l4 -1l2 1l1 2l-5 1zM2686 231l-2 -2l2 -2l1 0l1 3zM2461 730l7 -2l3 2l1 4l-6 -1zM2324 541l-4 -1l0 -6l3 -2l3 6zM2396 621l-4 0l-2 -2l0 -3l4 2zM2238 743l3 0l1 3l-3 1l-2 -1zM2152 659l4 3l0 5l-3 0l-3 -5zM2005 276l-3 3l-4 -1l0 -4l5 0zM2361 272l3 1l1 4l-2 2l-3 -5zM2612 551l3 1l2 4l-2 1l-3 -2zM2632 695l2 1l0 3l-1 2l-2 -3zM2615 630l1 -3l1 -1l2 1l-2 3zM2624 588l2 0l1 2l-1 1l-2 -1zM2416 287l3 2l0 4l-3 1l-2 -4zM2550 597l1 3l1 3l-3 0l-1 -3zM2266 665l0 -2l2 -2l1 3l-1 1zM2248 290l-4 -3l0 -4l4 0l1 4zM2270 339l1 -3l3 -3l2 3l-1 4zM2371 741l0 -2l2 -2l1 2l-1 2zM2437 409l0 -2l2 -2l1 2l0 1zM2321 385l-1 0l-1 -3l2 0l2 1zM2493 598l6 -2l5 1l-2 4l-3 0zM2496 562l-2 1l-4 -1l-1 -1l3 -1zM2244 595l5 4l-3 8l-4 0l-3 -6zM1934 740l-4 2l-4 -3l2 -2l3 -1zM1925 649l0 2l-2 0l-1 -2l3 -1zM2608 662l-1 -2l2 -2l2 2l0 2zM1962 350l3 -2l3 0l1 3l-4 0zM2552 626l-3 5l-6 2l-1 -5l4 -2zM2381 639l-1 2l-3 0l0 -1l2 -1zM2444 611l0 -2l4 0l0 2l-3 1zM2200 404l5 1l2 4l-2 2l-4 -1zM1986 657l4 -3l5 2l1 3l-6 0zM2330 256l0 -2l3 0l1 2l-3 1zM2329 658l-3 -5l2 -6l4 2l1 6zM2080 605l-3 3l-3 -1l-1 -2l3 -2zM2289 577l0 -1l1 -1l1 1l-1 2zM1994 703l2 3l-4 2l-1 -1l1 -4zM2211 544l2 -4l4 0l3 4l-3 2zM2473 263l5 1l4 5l-4 2l-3 -3zM2057 651l-2 0l-1 -6l3 -1l2 3zM2306 663l4 -2l2 4l-1 3l-3 -1zM2421 277l2 3l-2 4l-2 -2l0 -4zM2072 326l2 1l1 2l-1 2l-3 -2zM2448 668l-1 -2l1 -2l2 1l-1 2zM2084 764l-1 -3l0 -2l3 1l0 2zM2365 359l2 -3l3 -1l1 3l-4 3zM2344 275l1 -2l3 1l0 2l-3 1zM1982 323l4 -2l3 2l-1 5l-5 -2zM2352 634l3 0l0 4l-1 1l-3 -3zM1960 673l0 1l-1 1l-1 0l0 -2zM2536 404l1 -2l2 0l1 2l-3 2zM2019 368l3 -1l4 2l-2 1l-3 1zM2684 353l5 -3l2 4l-2 4l-4 -2zM2175 362l1 -2l2 1l1 0l-2 1zM1957 307l-4 1l-7 -3l3 -3l5 1zM2046 715l1 3l-2 3l-2 0l1 -5zM2148 409l-1 2l-1 -1l0 -1l1 0zM2371 697l2 -3l3 0l1 3l-4 2zM2019 296l4 2l-1 4l-3 0l-1 -3zM2042 203l2 3l-1 3l-1 0l-2 -4zM1938 283l-1 1l-2 0l0 -2l2 0zM2246 286l1 2l-1 2l-2 -1l0 -3zM1936 721l-2 -2l1 -5l4 0l2 4zM2567 327l3 3l-3 5l-5 1l1 -6zM2591 350l1 -7l3 -1l5 1l-4 5zM2405 608l2 4l-3 3l-3 0l2 -6zM2423 657l3 2l-3 4l-2 -1l-1 -4zM1926 545l-3 -3l1 -5l2 1l2 3zM1934 532l4 0l0 6l-1 1l-3 -3zM1932 235l-2 -1l0 -2l0 -2l3 3zM2551 764l-1 1l-2 -1l0 -1l2 -1zM2594 552l-8 -4l-4 -5l5 -4l5 4zM2338 660l5 -3l5 1l0 3l-5 2zM2528 572l2 0l4 2l-1 2l-3 -1zM2692 775l0 -2l3 -1l1 0l-3 4zM2623 361l-3 -2l2 -9l6 0l0 9zM2530 342l-3 0l-1 -1l0 -2l3 0zM2499 676l3 -2l3 2l-1 2l-3 0zM2120 330l4 1l5 2l-1 3l-6 -1zM2149 722l-2 -2l2 -7l3 0l1 6zM2696 743l-2 1l-2 0l1 -1l2 -1zM2030 249l-1 2l-3 0l0 -2l2 -2zM2368 722l0 1l-2 0l0 -2l1 -1zM2358 299l-4 2l-1 -4l2 -1l3 1zM2681 263l5 2l3 7l-3 2l-5 -7zM2630 561l-2 1l-2 0l0 -2l3 0zM2062 644l-6 -3l3 -6l4 1l2 5zM2492 399l2 2l-1 4l-3 0l0 -5zM2413 736l2 4l-1 2l-4 1l0 -6zM2664 645l-2 0l-1 -2l1 -2l2 2zM2225 721l5 1l2 6l-3 2l-6 -2zM2650 211l-1 2l-2 1l-2 -2l3 -2zM2494 698l2 -2l2 0l1 1l-1 2zM2391 294l3 -1l1 3l0 1l-3 -1zM2071 302l2 -2l4 2l0 2l-3 0zM2297 336l-1 1l-2 0l-1 -1l2 -1zM2335 411l1 -1l2 0l0 1l-2 1zM1945 210l0 4l-3 3l-3 -1l0 -5zM2686 573l4 3l0 5l-4 0l-1 -4zM2167 369l1 -1l2 0l0 2l-1 0zM2229 715l0 -3l3 -3l3 1l-2 4zM2369 240l1 2l-2 2l-2 -2l1 -2zM2022 569l-2 3l-4 2l-4 -1l6 -5zM2583 664l-6 0l-5 -6l2 -4l8 5zM2377 675l2 4l-4 3l-2 -1l2 -5zM2016 628l0 -1l1 -3l2 0l-1 3zM2207 609l-1 -2l3 -2l1 1l-1 2zM2289 669l4 -3l4 -1l1 3l-4 2zM2028 754l3 3l0 3l-2 0l-2 -2zM2412 661l-4 -2l2 -5l3 0l1 4zM2211 611l-2 -1l-1 -2l1 -1l2 2zM2117 323l-2 5l-4 0l0 -4l2 -2zM2082 665l-1 2l-3 0l0 -1l2 -2zM2009 297l1 -2l4 -1l0 3l-3 2zM2479 364l-3 1l-3 -3l2 -3l3 1zM2491 745l-2 0l-2 -1l1 -2l1 1zM2159 620l4 2l1 3l-2 3l-4 -5zM2440 689l1 1l0 5l-2 0l-2 -3zM2364 234l2 2l0 4l-2 -1l-2 -2zM1968 620l2 1l0 3l-1 0l-1 -2zM2532 278l3 1l0 3l-1 0l-2 -2zM1980 340l-3 0l-2 -2l0 -2l4 2zM2377 602l1 1l1 1l-2 0l0 -1zM2468 414l0 4l-4 2l-2 -1l3 -4zM2489 655l2 -1l2 3l-2 2l-2 -1zM2624 245l2 1l0 2l-1 2l-2 -2zM2384 592l-1 2l-1 0l-2 0l2 -2zM2238 304l-2 -2l4 -6l4 2l-2 6zM2295 608l-1 3l-4 -1l0 -3l4 0zM1931 310l1 2l-1 2l-1 0l-1 -2zM2194 682l0 -2l2 -2l1 1l0 2zM2482 726l0 3l-1 2l-2 0l0 -2zM2057 364l1 2l-1 1l-2 0l0 -2zM2038 273l0 -1l2 0l0 1l-2 1zM2627 340l2 3l-3 5l-3 -4l1 -3zM1989 630l-1 -2l1 -2l2 1l-1 1zM2009 274l1 1l-1 3l-2 -1l0 -2zM2153 610l-4 1l-2 -4l2 -1l4 2zM2626 546l0 2l-3 3l-1 -2l2 -3zM2556 671l3 3l0 3l-2 1l-2 -3zM2262 729l-2 3l-3 1l-2 -2l4 -3zM1999 424l-4 -3l0 -2l2 -2l2 4zM2606 582l-4 -2l-3 -6l3 -1l4 3zM2202 410l-2 -1l1 -1l0 -1l2 2zM2520 685l-1 1l-2 -2l1 -1l2 1zM2001 282l-1 -2l1 -1l1 1l0 2zM2380 394l1 4l-3 2l-2 -1l0 -5zM1949 530l1 1l0 4l-1 0l-2 -4zM2228 403l2 1l-1 3l-2 1l0 -4zM2702 563l0 -2l1 -1l2 2l-1 1zM2191 606l-2 -2l-1 -3l2 -1l2 3zM2469 568l1 1l-1 2l-1 -1l0 -1zM2641 341l-3 4l-3 2l-2 -2l4 -5zM1984 595l-2 2l-2 0l-1 -3l4 0zM2190 375l1 3l-3 3l-3 -3l2 -3zM2470 259l-3 0l0 -3l1 -1l3 2zM2440 402l-1 -3l2 -1l2 2l-1 2zM2038 579l4 2l2 11l-6 0l-3 -5zM2180 197l-2 -1l0 -3l3 0l1 2zM2446 562l0 4l-2 2l-4 -1l2 -5zM2014 679l-3 2l-4 -3l3 -3l2 1zM1985 415l-2 -2l0 -3l2 0l1 4zM2666 240l-1 -1l-1 -2l3 -1l0 1zM2180 336l3 0l0 3l-3 2l-2 -3zM2511 209l-1 1l-2 -1l0 -1l2 0zM2127 587l1 0l0 1l0 1l-2 0zM2246 756l0 3l-5 4l-2 -2l2 -5zM2427 304l0 -3l5 -1l3 1l-3 4zM1965 723l-1 1l-6 -1l1 -2l4 0zM2446 578l0 4l-6 4l-2 -2l2 -5zM2585 732l3 5l-5 5l-9 1l1 -12zM2352 298l-2 1l-3 -1l0 -4l2 0zM2158 566l-7 -3l1 -7l4 -3l5 9zM2507 293l1 3l0 2l-2 1l-1 -5zM2415 623l1 2l0 2l-2 0l-1 -2zM2130 731l2 -3l4 0l1 2l-3 2zM2314 277l3 -1l2 1l1 3l-5 0zM2589 549l-4 -1l-1 -2l3 -2l1 2zM2108 647l1 -1l2 0l0 2l-2 0zM2436 391l-2 1l-2 0l0 -2l2 0zM2089 749l-4 2l-5 -4l2 -4l6 2zM2617 568l-3 2l-6 -5l2 -2l4 2zM2028 651l-2 -1l0 -2l2 -1l1 2zM2609 189l2 -1l3 3l-1 1l-3 -1zM2305 371l1 -2l3 -2l2 2l-2 3zM2166 255l1 -2l1 -1l1 2l-1 1zM2301 290l2 -1l1 1l1 1l-3 1zM2329 680l-5 3l-4 -9l4 -3l5 4zM2275 746l1 3l0 2l-2 1l0 -5zM2178 559l1 1l1 1l0 1l-2 -1zM1946 278l0 2l-2 1l-2 0l1 -3zM2153 231l-1 -4l0 -6l5 -1l0 5zM2637 586l0 -5l4 -4l4 1l-4 8zM2128 630l3 1l0 4l-2 -1l-1 -2zM2196 271l0 6l-5 1l-1 -3l3 -4zM2652 190l2 1l0 1l-2 1l-1 -1zM2115 681l0 1l-3 0l0 -3l2 -1zM2030 275l1 -2l5 -1l2 4l-3 2zM2155 391l3 0l2 1l-1 3l-3 -1zM2458 286l-4 -1l-2 -3l3 -1l2 1zM2651 741l-1 2l-4 0l-1 -2l4 -1zM2327 568l0 1l-3 1l0 -2l2 0zM2597 251l2 -1l1 3l-2 1l-1 -1zM2301 678l-1 1l-4 0l0 -1l3 -1zM2597 276l-2 0l-3 -2l1 -3l5 1zM2197 391l-3 -1l-1 -2l3 -1l1 3zM2032 626l-2 -1l-1 -3l1 0l2 2zM2487 287l3 1l0 3l-1 1l-2 -3zM2266 652l4 -2l9 3l0 7l-8 -2zM2504 701l2 2l-1 1l-1 0l-1 -2zM2236 419l2 1l0 2l-1 0l-1 -2zM2181 287l0 -2l2 -1l1 0l0 2zM2624 208l1 -4l4 -3l1 2l0 3zM2266 279l1 4l-2 1l-3 0l1 -4zM2232 408l-2 1l-3 0l0 -1l2 -1zM2024 738l-2 1l-5 -3l0 -3l6 2zM2130 408l-2 -2l0 -2l1 0l1 2zM2203 594l-6 -2l-2 -4l4 -6l4 4zM2134 564l-2 -3l1 -3l4 0l-1 5zM2300 635l4 -3l3 2l1 2l-5 3zM2448 712l-3 1l-3 -1l-1 -3l5 -2zM2422 291l2 -4l5 -5l3 2l-4 5zM2239 573l-5 8l-4 1l-2 -3l4 -5zM2013 595l1 -5l4 0l2 4l-5 3zM2163 566l2 -2l2 0l0 3l-2 1zM2075 298l3 1l0 1l-2 1l-1 -1zM1940 634l-2 2l-3 -3l2 0l3 -1zM2138 763l-2 -5l3 -4l3 0l-2 6zM2128 381l4 -1l3 4l-2 4l-4 -3zM1958 193l-2 -3l2 -4l3 0l1 5zM2164 756l-2 -1l1 -3l1 0l1 2zM2630 705l-2 3l-3 2l-1 -4l3 -2zM2605 763l4 1l1 4l-4 3l-1 -5zM2669 243l2 1l-2 3l-2 -1l0 -1zM2473 768l1 1l2 2l-1 1l-2 -2zM2081 397l-2 0l-2 -2l1 -1l2 0zM1971 317l-1 -1l1 -2l2 0l0 3zM2331 584l3 -2l3 0l1 2l-3 2zM2648 646l1 0l3 1l-1 2l-2 -1zM2276 356l-2 4l-6 0l-2 -2l7 -4zM2359 191l4 0l1 5l-3 -1l-2 -1zM2260 315l0 2l-4 2l-1 -2l3 -4zM2368 245l4 3l1 2l-4 1l-2 -3zM2294 196l-2 -3l-1 -4l5 -1l2 4zM2118 209l2 1l0 3l-1 0l-2 -2zM2612 740l3 0l2 3l-3 1l-2 -1zM2533 199l2 4l-4 5l-3 -1l0 -5zM2187 245l-3 1l0 -1l0 -3l2 1zM2586 762l1 0l0 2l-1 1l-1 -2zM2690 352l-2 -2l-1 -2l2 -1l2 3zM2248 381l2 5l-2 4l-5 -2l1 -5zM2587 762l1 2l0 3l-3 0l-1 -2zM2659 753l3 3l0 2l-3 0l-1 -4zM2187 226l4 2l-1 3l-3 0l-2 -1zM2191 406l-3 2l-2 -2l0 -3l5 0zM2010 260l-1 1l-3 -2l2 -1l2 0zM2407 283l1 3l-3 3l-2 -1l1 -3zM2421 693l-2 2l-2 1l-1 -2l3 -2zM2450 569l6 1l3 3l-3 2l-3 -2zM1961 553l2 0l2 1l-1 2l-2 -1zM2385 652l2 0l0 4l-4 1l0 -3zM2197 254l-2 -1l1 -2l1 0l0 2zM2092 646l3 1l-1 3l-2 1l-2 -4zM2703 742l-3 -3l-1 -2l3 -2l2 2zM2240 705l2 1l-1 5l-2 0l-1 -4zM2217 333l-2 3l-2 -1l0 -3l1 -2zM1998 644l-3 -3l2 -3l2 -1l1 4zM2336 294l-1 2l-4 1l-1 -2l4 -2zM2661 345l0 -1l4 1l0 2l-4 0zM2133 239l3 5l-3 3l-4 0l0 -5zM2644 600l3 -1l2 2l0 1l-3 0zM2174 686l0 3l-2 2l-1 -2l1 -2zM2507 637l4 -5l5 1l1 3l-6 4zM1975 383l-4 1l-1 -1l-1 -2l4 0zM2124 673l2 0l0 5l-3 0l0 -3zM1986 207l0 2l-2 1l-2 -2l2 -2zM2045 549l-2 0l-1 -3l0 -1l3 2zM1939 371l6 1l0 4l-2 0l-5 -2zM2578 764l2 2l1 4l-3 0l-2 -2zM2451 242l-4 1l-4 -1l3 -4l3 1zM1925 580l-1 -1l1 -3l1 1l0 3zM2425 605l1 -2l4 -1l-1 3l-1 1zM2026 736l3 1l1 5l-3 0l-2 -3zM2619 597l4 0l0 3l-2 1l-2 -2zM2344 560l3 -6l6 -4l1 5l-3 4zM2156 757l2 -4l5 -1l0 3l-5 3zM2113 623l5 -3l2 5l-1 3l-3 -1zM2041 552l-2 4l-3 1l-3 -4l5 -2zM2095 410l0 0l0 2l-1 1l-1 -1zM1972 752l4 -2l4 3l-1 2l-5 -1zM2681 537l-6 -2l-4 -5l4 -2l4 4zM2179 661l4 -3l3 2l-1 5l-3 0zM2499 736l-1 1l-2 -1l1 -2l2 0zM2550 680l0 -4l6 -3l2 1l-3 5zM2572 749l0 2l-1 0l-1 0l0 -2zM2140 604l2 -4l3 -1l2 1l0 4zM2382 566l5 2l0 5l-2 3l-5 -7zM1961 773l-3 -3l1 -2l2 -1l1 4zM2635 279l2 1l1 4l-2 0l-2 -2zM1999 751l5 0l2 6l-2 2l-5 -3zM2401 626l2 1l1 3l-1 0l-2 -2zM2201 294l0 -2l3 -2l1 2l-1 2zM2299 271l-1 -1l0 -2l1 0l1 1zM2154 586l-1 1l-5 2l-1 -3l4 -3zM2074 545l2 1l0 3l-2 0l-1 -2zM2473 310l0 -3l4 -4l2 2l-4 4zM2182 588l8 -3l4 3l0 5l-8 -1zM2035 702l-2 0l-5 1l1 -4l4 1zM2367 546l0 2l-1 1l-2 -1l2 -2zM2699 361l-4 -2l-1 -5l1 -2l4 5zM2426 714l2 3l-5 3l-2 -3l0 -3zM2266 601l3 -1l3 2l-2 3l-4 -1zM2646 241l-4 -2l-1 -4l2 0l3 3zM2253 326l3 -5l6 -2l1 2l-6 7zM2579 578l-3 -3l-2 -5l3 -1l4 4zM2089 315l2 -1l3 3l-1 2l-4 -2zM2041 192l2 1l1 5l-3 -1l-2 -3zM2046 292l-4 0l-5 -5l4 -3l4 2zM2399 629l0 3l-2 2l-3 -3l2 -2zM2658 620l-3 0l-2 -3l2 -1l2 2zM2500 413l4 0l1 2l-3 2l-2 -2zM2558 641l-5 4l-6 0l0 -4l6 -2zM1954 579l2 -1l1 1l-1 2l-2 -1zM2092 733l-3 -5l2 -3l2 1l2 4zM2229 401l0 -2l3 -2l1 3l-1 1zM2220 749l2 -2l4 -1l0 2l-3 3zM2542 292l7 4l2 7l-6 0l-3 -3zM2348 642l2 -1l3 4l-2 2l-2 -2zM2518 628l-1 -4l2 -2l1 0l-1 4zM2613 222l-1 1l-2 -1l0 -2l2 0zM2614 628l1 -2l2 0l0 2l-1 1zM2184 205l-1 2l-3 3l-1 -1l2 -4zM2072 233l3 -2l3 4l-2 2l-5 -3zM2164 336l0 -2l2 -2l1 1l0 2zM2300 621l3 4l-2 5l-4 -2l0 -5zM2129 629l0 2l-2 2l-2 -1l2 -3zM2524 553l3 1l0 3l-4 1l-2 -3zM2618 625l-1 5l-7 3l-4 -6l7 -4zM2184 537l0 2l-3 0l-1 -1l2 -3zM2547 384l2 -2l4 2l0 3l-5 -1zM2647 617l1 2l-3 2l-2 -2l1 -2zM2495 295l1 0l3 1l-1 1l-2 0zM2256 236l-4 -3l2 -3l3 1l0 3zM2572 535l-3 2l-2 -1l0 -3l3 0zM2098 299l0 -3l4 -2l3 2l-4 4zM2109 582l-1 0l-2 -1l0 -1l3 0zM2461 564l-5 -2l0 -9l4 0l4 7zM2211 760l6 4l1 7l-4 1l-3 -6zM2679 262l0 -2l2 -3l2 2l-1 2zM2380 419l-2 0l-1 -1l1 -1l2 0zM2350 657l5 -2l2 2l1 2l-5 0zM2253 213l4 1l-2 2l-2 1l-1 -3zM2175 214l3 -2l5 0l-1 4l-4 1zM1985 342l-3 1l-3 -5l2 -1l3 1zM1933 328l-6 0l-4 -8l3 -4l8 7zM1942 723l-2 1l-2 0l0 -2l2 0zM2358 266l-4 0l-2 -6l3 -2l3 3zM2161 749l-1 0l-2 0l0 -2l2 0zM2428 382l-3 -2l4 -5l3 2l-1 6zM2319 738l0 2l-6 3l-1 -3l3 -4zM2000 217l0 2l0 1l-2 1l0 -3zM2357 629l-2 0l-1 -3l1 0l2 1zM2383 368l-2 -1l1 -2l2 0l0 2zM2674 756l-1 6l-6 4l-2 -3l3 -5zM2335 379l-1 5l-5 5l-4 -2l3 -8zM2032 251l7 -3l7 1l0 6l-6 1zM2154 568l2 1l0 1l-1 1l-2 -2zM2275 600l2 0l1 1l0 2l-2 -1zM2580 707l-3 0l-3 -3l2 -1l3 2zM2627 305l1 4l-3 6l-4 0l1 -7zM2220 568l3 1l2 7l-3 2l-4 -4zM2661 278l1 -2l3 1l0 3l-3 0zM2693 632l3 4l-2 6l-2 1l-2 -9zM2356 608l2 6l-4 2l-3 -3l1 -3zM1947 227l2 0l2 1l1 1l-3 0zM2027 615l1 2l0 3l-2 -1l0 -3zM2192 205l-3 -1l0 -3l4 -1l1 2zM2562 347l2 -3l5 -1l1 2l-4 3zM2366 301l-1 -1l1 -3l3 -1l0 3zM2369 291l-1 1l-2 0l0 -1l2 -1zM1993 368l-4 3l-4 -2l-1 -3l7 -1zM2228 625l3 0l1 2l-1 1l-2 -1zM1937 661l-3 1l-3 -2l2 -1l1 0zM2109 356l4 -1l3 2l1 2l-4 1zM2126 686l1 -2l1 -1l1 1l-1 2zM2526 276l-2 -2l1 -3l1 -1l1 4zM2064 210l4 11l-3 10l-9 -4l-1 -10zM2316 322l3 -2l4 2l-2 4l-4 -1zM2159 276l3 -3l5 -1l0 4l-3 3zM2469 189l2 -1l2 1l0 1l-3 0zM2401 399l-2 3l-5 0l0 -5l5 0zM2580 684l1 -2l3 1l-1 1l-2 1zM2128 758l-1 0l-2 -1l1 -1l2 1zM2218 693l1 0l3 1l-2 1l-1 0zM2467 612l-3 -2l0 -5l2 -1l2 4zM2275 541l-1 3l-3 0l0 -2l2 -2zM2268 281l5 -2l5 0l0 4l-7 0zM2185 694l1 2l-1 1l-2 0l1 -2zM2078 560l-2 1l-3 -4l1 -4l6 3zM2291 572l1 -3l2 1l1 2l-2 1zM2305 619l3 5l-1 2l-3 1l-1 -5zM2580 275l0 -2l2 -2l2 1l-1 3zM2688 757l2 1l0 1l-1 1l-3 -2zM2068 566l-4 -2l0 -2l1 -2l2 3zM1939 383l0 -2l1 -1l2 1l-1 2zM2421 651l3 0l1 2l-2 2l-2 -3zM2682 622l2 0l0 3l-3 1l-2 -3zM2349 542l3 -5l3 0l0 5l-2 1zM2449 635l3 0l1 1l-1 2l-2 -1zM2343 654l-1 4l-4 2l-3 -4l5 -3zM2366 270l-2 1l-3 0l-1 -3l3 0zM2564 736l-3 -1l-1 -4l3 -1l0 4zM2226 702l-1 3l-3 1l-3 -3l5 -3zM2141 214l-2 1l-4 -3l1 -2l3 2zM2060 733l-4 -2l-4 -7l5 -3l5 7zM1956 741l0 6l-8 4l-3 -3l3 -8zM2582 371l1 -2l2 0l0 2l-1 1zM2499 350l-2 -1l0 -6l3 -2l1 7zM2580 354l-3 -2l0 -1l2 -1l2 1zM2525 659l1 -2l4 0l0 3l-3 1zM2110 314l1 -2l6 0l1 4l-4 2zM2254 353l4 1l0 2l-2 3l-2 -4zM2571 377l0 3l-2 4l-3 -2l2 -4zM2369 756l-3 0l0 -3l1 -2l2 2zM2226 775l-2 -3l-1 -7l3 -1l3 7zM2092 704l0 3l-3 2l-1 -2l2 -3zM2407 352l2 -2l3 0l0 2l-2 1zM2148 250l1 -4l4 -1l1 3l-3 3zM2507 233l-1 -3l4 -6l3 2l-1 6zM2346 378l-2 -2l1 -7l4 0l2 8zM2669 565l-2 -1l1 -2l1 1l1 1zM2067 325l-3 -6l0 -5l3 -1l3 7zM2076 706l-4 1l-6 -7l4 -2l4 2zM2683 319l1 -2l4 -1l0 2l-2 2zM1927 387l-2 4l-5 3l-1 -2l2 -4zM2567 595l2 0l3 0l0 4l-4 0zM2369 368l-6 -1l0 -7l4 0l3 5zM2322 321l-2 -1l-2 -2l2 -2l3 2zM2177 689l-3 -4l1 -2l4 -2l0 4zM2384 236l1 1l2 1l-1 1l-2 -1zM2057 212l-4 -1l-3 -2l2 -3l4 2zM2576 603l-4 2l-4 -1l0 -4l4 0zM2296 551l-3 -1l-2 -2l2 -1l2 1zM1980 374l0 -1l1 -1l1 1l-1 1zM2081 747l0 4l-3 1l-2 -1l3 -4zM2646 200l1 3l-2 0l-2 0l1 -3zM2459 215l-4 0l-1 -1l2 -2l2 0zM2438 221l1 2l-1 3l-2 -1l1 -3zM2651 308l-3 1l-2 -3l1 -1l3 1zM2635 201l-1 -2l1 -2l1 0l0 2zM2188 241l1 -1l2 1l-1 1l-1 1zM2389 710l0 -2l4 -4l4 1l-4 6zM2496 374l0 -1l2 -1l1 2l-1 1zM2691 278l-5 0l-3 -4l3 -1l3 2zM2432 699l0 -3l3 -2l2 2l-1 3zM2090 689l-3 1l-2 -4l3 -3l3 3zM2587 263l-4 0l-3 -5l4 -2l3 3zM2601 721l-3 1l-1 0l0 -2l2 0zM1993 693l2 3l-2 1l-3 -1l1 -3zM2301 250l-2 2l-3 0l0 -4l4 0zM2179 343l-2 6l-9 7l-7 -4l7 -9zM2331 214l2 1l0 1l-1 1l-2 -2zM2331 704l2 3l-1 3l-4 -1l0 -3zM2016 352l3 2l0 5l-2 1l-3 -5zM2527 297l3 -1l1 3l0 1l-4 -1zM2346 294l3 -5l5 -2l1 3l-4 3zM2249 288l-2 1l-3 0l0 -3l3 -1zM2279 210l0 3l-1 1l-2 -1l0 -3zM2268 609l-3 3l-3 -2l1 -3l3 1zM2605 202l1 2l-2 3l-2 -1l0 -4zM2530 392l3 1l0 3l-2 1l-2 -4zM2299 353l-5 -2l-2 -5l1 -1l5 4zM1928 260l0 1l-2 2l0 -2l1 -1zM2158 319l-3 1l-3 -4l2 -4l5 2zM2523 304l3 0l0 2l-1 2l-3 -3zM2153 574l1 -1l3 0l0 2l-3 0zM2311 665l0 -3l4 -2l1 2l-2 3zM1963 584l1 1l-1 2l-2 0l1 -2zM2030 536l0 1l0 2l-1 1l-1 -3zM2401 699l-2 0l-1 -3l2 0l1 2zM2085 583l2 -1l6 2l-2 2l-4 1zM2133 376l-1 -1l1 -1l2 1l-1 1zM1924 540l-2 -1l0 -4l2 -1l1 4zM2237 615l-2 1l-6 -2l0 -3l7 0zM2166 334l2 -6l3 -1l2 4l-5 3zM2141 347l-3 -1l-1 -3l1 -2l4 4zM2215 633l-1 -2l2 -1l2 1l-2 2zM2387 357l2 2l1 3l-2 1l-2 -4zM2151 378l-3 0l-2 -3l2 -2l3 2zM2375 759l-2 1l-5 0l0 -2l4 -1zM2550 265l-4 -1l-1 -2l2 -2l4 3zM2347 261l-1 -2l1 -3l1 1l1 2zM2469 250l3 -1l3 1l0 2l-4 0zM2306 247l0 3l-3 1l-1 -2l2 -3zM2693 332l-1 1l-2 1l-2 -2l2 -2zM2236 560l-2 1l-5 -2l0 -2l4 0zM2607 357l1 -1l2 1l0 2l-2 -1zM2518 209l1 2l-2 4l-2 -1l0 -3zM2678 716l5 1l0 5l-3 3l-2 -4zM2406 230l2 -7l5 -1l1 4l-3 5zM2647 395l1 -1l4 -2l1 2l-4 3zM2676 674l-1 4l-4 1l-2 -2l4 -4zM2170 581l-3 0l-2 -3l1 -2l3 1zM2132 605l1 2l-1 2l-2 1l-1 -3zM1994 613l1 -3l4 1l0 4l-3 1zM2676 755l4 -1l3 4l-3 1l-3 1zM2673 334l2 2l-1 2l-2 0l0 -2zM2105 358l8 -2l3 6l0 2l-7 0zM2152 228l-2 -2l2 -3l1 1l0 4zM1946 659l-5 -1l-3 -3l3 -2l3 2zM2174 274l-2 -1l-2 -3l2 -1l3 3zM2661 293l1 -1l2 1l-1 1l-1 0zM2647 390l0 1l-1 1l-1 -1l1 -2zM2655 399l1 2l-2 2l0 -1l-1 -2zM2463 550l-3 4l-4 -2l-2 -4l6 0zM2694 563l3 0l2 2l-1 2l-3 -1zM2226 580l1 1l0 3l-1 0l-1 -2zM2576 396l2 -2l4 1l0 1l-4 2zM2347 730l3 2l-1 3l-4 2l1 -6zM2652 708l3 -1l6 2l-3 4l-6 -2zM2486 753l-2 -1l-3 -2l1 -2l4 2zM2138 312l-1 1l0 -2l1 -2l1 3zM2214 680l-1 1l-2 1l-1 -1l3 -2zM2203 751l3 -3l3 -1l2 3l-5 3zM2162 538l-2 1l-6 -2l1 -3l7 1zM2180 422l-6 1l-6 -8l1 -4l11 6zM1946 602l1 2l-1 6l-3 -1l-1 -3zM2631 645l1 -4l4 1l2 2l-5 1zM2203 638l-4 0l-1 -3l3 -3l3 5zM2697 355l-1 4l-4 6l-4 -5l4 -5zM2284 628l-2 0l-1 -2l1 -1l3 1zM1959 375l-1 -2l3 -1l1 1l-2 3zM2537 762l-2 1l-2 -1l0 -2l3 1zM2388 310l-2 0l-1 -3l2 -1l2 1zM2410 766l0 -3l3 -2l1 2l-2 3zM2280 237l-2 1l-4 -4l0 -2l7 1zM2002 201l0 -4l7 -3l2 3l-3 4zM1966 552l-3 1l-2 -2l2 -4l3 2zM2272 609l0 3l-2 2l-3 -1l2 -5zM2004 762l0 1l-2 2l-2 -2l2 -1zM2289 664l2 0l1 1l-1 2l-2 -1zM2455 335l2 1l0 3l-1 0l-1 -3zM2492 304l-1 2l-2 1l0 -3l2 -1zM2370 269l-2 2l-1 -1l-1 -1l2 -1zM2025 689l3 -5l4 -2l1 4l-3 4zM2690 336l1 -3l2 -1l2 2l-2 2zM2033 551l0 2l-1 0l-1 -1l1 -1zM1988 647l-2 -1l0 -3l2 0l1 2zM2563 319l2 0l1 2l-2 1l-1 -1zM2448 611l2 2l0 1l-2 1l-1 -2zM2528 618l2 0l1 4l-2 2l-3 -2zM2377 589l2 1l0 2l-3 0l0 -1zM2616 411l-4 3l-5 -3l0 -2l7 -1zM2080 338l2 -1l4 2l0 4l-5 -1zM2212 725l-3 1l-4 -2l2 -3l2 0zM2649 685l0 3l-1 3l-3 -2l0 -2zM2184 598l0 -1l2 0l1 1l-2 1zM2282 571l2 -2l5 0l0 3l-5 0zM2506 321l0 2l-3 0l-1 -1l2 -1zM2357 709l2 3l-3 4l-4 -1l3 -4zM2307 349l-4 2l-5 -1l1 -2l4 -2zM2634 411l1 3l-3 5l-3 -3l0 -4zM2326 702l1 3l-2 1l-1 -2l0 -1zM2143 750l-4 0l-4 -2l3 -4l3 1zM2290 219l0 -2l1 -1l2 0l-1 2zM2462 544l1 -2l2 -1l2 1l-3 2zM2668 350l0 -2l1 -2l2 1l-1 3zM2221 307l3 0l1 4l-3 0l-1 -1zM2533 768l-1 -2l0 -3l2 1l0 2zM1982 223l2 -2l5 0l1 3l-3 1zM2050 598l2 0l1 1l-1 2l-2 -2zM2559 577l7 4l0 7l-3 2l-4 -7zM2371 539l-3 1l-6 -4l1 -3l5 0zM2479 667l2 -2l3 3l-1 3l-5 -1zM2174 639l-1 4l-5 4l-1 -4l3 -3zM2025 731l3 3l0 3l-2 2l-2 -5zM2366 277l0 4l-4 3l-1 -3l1 -3zM2381 692l1 -4l5 0l3 3l-4 4zM2245 416l-2 1l-2 -2l1 -2l2 1zM2579 352l1 -5l4 -2l5 5l-2 4zM2507 632l-1 -2l-1 -2l2 -1l2 3zM2472 716l-6 -2l-1 -3l2 -2l4 1zM2293 266l2 -3l3 0l0 3l-1 2zM2338 745l2 -1l3 0l1 3l-3 0zM2025 220l2 1l1 2l-2 1l-2 -2zM2457 380l3 3l-2 4l-3 0l0 -4zM2644 329l0 -2l1 -1l1 1l0 2zM2465 338l-1 -2l0 -2l2 1l0 1zM2629 371l-1 1l-3 -1l-1 -1l3 -1zM2096 532l1 3l-1 2l-3 -2l1 -2zM1942 360l-3 -2l0 -3l2 -1l2 2zM2164 292l2 2l-1 2l-1 0l-1 -3zM2387 404l0 3l-1 1l-2 -1l1 -2zM2661 229l1 3l-1 3l-4 -1l1 -4zM1991 408l-2 0l-1 -1l1 -1l2 1zM2316 601l1 -4l3 -1l2 3l-3 3zM2138 768l2 1l1 3l-3 2l-3 -3zM2232 624l-3 1l-4 -1l0 -3l4 1zM2072 272l-3 -4l1 -9l4 2l3 5zM2615 218l2 0l3 4l-2 1l-3 -2zM2532 281l-1 0l-4 -3l3 -2l1 2zM2700 237l-1 -3l2 -1l3 2l-1 2zM2102 703l1 2l-1 3l-2 -1l1 -3zM2561 340l-4 2l-2 -2l1 -3l2 1zM2325 624l-2 2l-3 -1l1 -2l3 -1zM2285 694l1 -2l5 0l-1 3l-5 1zM2449 249l-2 0l-2 -1l0 -1l2 0zM2088 626l-1 0l-2 -3l1 -1l3 2zM2603 666l2 0l-1 3l-1 0l-1 -2zM2600 588l4 -3l7 4l-2 2l-4 0zM1960 266l0 1l-4 2l0 -3l1 -1zM2436 379l-1 -3l4 -3l2 1l-2 4zM2648 600l-2 -1l0 -2l2 -1l1 2zM2036 720l-2 0l-1 -2l1 -1l2 2zM1951 318l1 3l-5 4l-1 -2l3 -4zM2398 325l-5 3l-5 -3l0 -4l5 -2zM2028 533l1 -5l3 1l3 4l-4 1zM2043 539l2 0l-1 2l-1 0l0 -1zM2456 369l5 -3l7 4l-1 6l-9 -4zM2123 667l3 1l2 1l-1 2l-4 -1zM2186 653l-1 -5l5 -4l3 1l-2 6zM2656 631l-1 -3l4 -3l2 3l-2 4zM2540 395l-4 -4l3 -3l2 0l2 5zM2114 571l0 -1l2 0l1 1l-1 1zM2459 377l-2 1l-2 -1l-1 -2l3 0zM2113 296l4 -3l6 1l-1 5l-3 1zM2662 609l-2 3l-8 5l-5 -4l10 -7zM2628 664l-1 1l-1 1l-1 -1l2 -2zM2123 559l0 2l-1 2l-2 -1l1 -2zM1932 222l3 2l-1 4l-3 1l-2 -4zM2397 392l1 -1l2 3l-1 1l-2 -2zM2644 278l1 3l-1 2l-2 0l0 -3zM2572 257l3 -1l4 3l-2 5l-4 -1zM2059 622l-1 0l-3 -1l1 -1l3 0zM2597 196l-6 2l-7 -2l2 -5l9 1zM2168 375l-3 2l-3 0l0 -3l3 -1zM2453 387l2 3l-1 2l-2 1l0 -4zM2561 636l-1 -2l1 -1l1 0l0 2zM2244 567l0 -2l0 -2l3 0l0 3zM2066 735l0 2l-5 4l-1 -2l3 -4zM2502 691l2 4l-2 3l-3 -2l0 -2zM2582 596l-3 0l-2 -5l1 -2l4 4zM2017 732l1 1l0 2l-1 0l-1 -2zM2165 306l-2 2l-4 -1l1 -2l4 0zM2351 735l-5 -2l0 -4l4 -2l4 4z"/>
<path fill="rgb(207,196,177)" d="M2067 219l1 4l-2 3l-2 -2l0 -2zM2413 653l0 2l-1 1l-1 0l0 -2zM2484 412l0 -2l4 -2l0 2l-2 2zM2649 209l1 -2l3 1l-1 3l-3 0zM2149 359l1 -2l2 0l1 2l-2 1zM2556 367l0 3l-2 1l-2 -1l1 -3zM2182 627l1 2l-1 3l-2 0l0 -3zM2447 659l-1 -1l1 -1l2 0l0 1zM2194 543l1 0l0 3l-2 1l0 -3zM2270 301l0 4l-2 0l-3 -1l2 -2zM2016 272l5 1l3 4l-2 4l-5 -5zM2166 710l-1 3l-2 2l-1 -2l1 -3zM2348 291l4 1l5 4l-1 4l-8 -4zM2640 753l1 2l-3 2l-1 -1l1 -3zM2015 403l-1 -4l3 -3l3 1l-1 5zM2345 396l0 2l-5 1l0 -3l2 -2zM2085 574l-2 3l-3 1l-1 -4l4 -1zM1926 377l1 -2l3 2l0 2l-2 0zM2599 582l-2 -3l5 -7l3 0l-2 6zM2033 536l-1 -1l2 -3l1 1l0 2zM2415 721l2 2l0 5l-3 -1l0 -4zM2284 671l2 -1l4 0l0 2l-3 1zM2661 565l0 2l-2 0l-1 -2l2 -1zM2358 327l0 -3l2 -2l2 0l-2 3zM2623 213l-2 0l1 -3l3 0l0 2zM2534 291l-3 -1l-1 -2l2 -2l2 2zM2289 711l-4 -1l-1 -4l4 -2l3 4zM2130 327l2 -2l3 -1l1 3l-2 1zM1986 699l3 0l2 3l-1 2l-3 -2zM2541 317l4 2l2 5l-3 5l-4 -7zM2551 726l-1 -6l3 0l4 3l-3 3zM2025 730l-6 -3l1 -10l3 0l2 6zM2549 552l5 -1l4 0l-2 4l-2 0zM2082 274l-4 2l-3 0l0 -4l4 -2zM2450 338l-3 -1l-1 -6l2 -1l2 3zM2660 214l0 -7l2 -10l5 1l1 8zM2592 600l1 0l1 2l-1 1l-1 -2zM2253 400l0 2l0 0l-2 0l0 -1zM2560 379l0 -4l4 -2l2 2l-4 4zM2099 681l-1 -2l1 -2l2 1l0 2zM2013 669l-2 -2l1 -3l1 1l1 2zM2503 590l-1 1l-1 0l-1 -2l3 0zM2693 702l1 -1l1 2l0 0l-3 0zM2184 754l-3 -4l2 -4l4 0l0 4zM2400 722l5 0l2 4l-2 4l-4 -1zM2473 590l4 3l0 5l-7 0l-1 -4zM2013 406l-1 4l-3 2l-3 -3l3 -3zM2083 385l-3 -3l1 -3l3 0l1 4zM2376 219l2 1l1 5l-3 0l-1 -3zM1981 236l-1 3l-3 1l-1 -1l3 -4zM2662 656l4 7l-1 6l-5 3l-1 -10zM2676 614l-1 0l-2 -1l1 -1l2 0zM2604 286l0 -3l0 -3l3 1l0 3zM1987 636l2 -2l3 0l0 3l-3 1zM2433 714l-5 -2l0 -7l6 0l1 6zM2595 750l2 -3l4 0l1 2l-3 1zM2391 614l2 2l-2 2l-1 0l0 -3zM2030 311l2 0l1 3l-1 2l-3 -3zM2653 735l-2 -4l1 -5l3 1l1 5zM1927 696l-1 -1l-1 -2l2 0l1 2zM2400 670l-2 -2l0 -4l2 -1l2 4zM2659 256l3 -1l2 1l-2 2l-2 1zM2580 599l-3 1l-2 -2l0 -1l3 0zM2143 233l6 2l3 7l-2 5l-10 -8zM2419 589l2 -3l3 2l1 2l-4 1zM2013 537l-1 -1l0 -2l2 0l0 2zM2039 582l0 3l-2 3l-3 1l1 -5zM2684 567l2 2l0 3l-4 -1l0 -4zM2010 667l0 2l-1 0l-1 0l1 -2zM2171 627l-1 -2l5 -2l1 3l-3 1zM2516 352l3 -1l2 3l0 1l-4 -2zM2614 748l0 -3l2 -2l1 1l0 3zM2144 696l2 3l-2 7l-3 -2l0 -6zM2591 713l-1 -4l0 -3l3 -1l0 6zM2628 211l-4 1l-7 -5l3 -4l6 2zM2387 595l-4 5l-5 0l0 -3l5 -3zM2178 689l1 -4l8 -3l3 3l-7 5zM2489 392l3 1l0 3l-2 1l-2 -2zM2154 300l-3 1l-3 -2l2 -2l5 0zM2187 569l-2 0l0 -2l2 -1l1 1zM2070 720l1 -3l7 2l-1 3l-4 2zM1956 315l0 1l-4 1l1 -3l1 -1zM2597 332l1 -3l3 -2l2 2l-4 4zM2186 351l1 -4l5 -1l2 2l-5 3zM1975 387l0 -3l2 1l1 2l-3 1zM2560 601l-1 3l-1 2l-3 -1l2 -2zM2542 241l0 1l-1 1l-1 -1l1 -1zM2682 292l4 1l0 3l-1 1l-3 -2zM2696 358l0 2l-2 2l-1 -1l0 -3zM2391 621l-5 3l-4 -3l2 -3l3 -1zM2187 563l1 -5l5 -2l2 4l-3 3zM2059 580l2 2l-1 4l-3 0l-1 -5zM2589 392l-1 0l-1 -1l1 -1l1 1zM2122 366l0 -3l1 -4l3 0l-1 5zM2107 672l1 2l-2 2l-2 -1l0 -1zM2498 279l2 3l-2 5l-3 0l0 -6zM2229 289l3 -3l4 2l0 6l-6 -1zM2667 330l3 -2l4 2l-1 2l-4 -1zM2623 394l1 1l-1 1l-1 0l0 -2zM2130 605l-2 0l-2 -3l2 -2l3 3zM2659 533l2 3l0 2l-2 0l-1 -3zM2476 279l-4 -3l1 -5l4 1l1 3zM2560 212l-1 1l-2 -2l0 -1l2 1zM2237 626l-1 2l-5 1l-1 -2l4 -3zM1965 656l2 -2l3 1l0 3l-3 -1zM2538 724l-4 0l-2 -3l1 -3l6 3zM2251 228l1 2l-1 3l-3 -1l1 -3zM2634 761l1 -1l2 3l-1 1l-2 -2zM2640 329l3 0l1 2l-1 2l-2 0zM2253 292l-2 0l-2 -3l2 -2l2 2zM2026 744l-3 8l-5 1l-5 -2l9 -7zM2070 575l1 1l0 2l-1 0l-1 -2zM1961 623l-2 -2l2 -3l2 -1l0 5zM2413 723l1 -1l1 0l0 2l-1 0zM2044 563l-2 -2l0 -2l2 0l1 2zM2636 274l1 -2l2 0l0 2l-2 1zM2189 350l-3 -2l2 -7l3 0l0 6zM2573 761l1 -1l3 0l1 3l-4 0zM2461 721l0 -3l4 -1l0 3l-1 1zM2615 705l-2 -1l-1 -4l4 -2l2 4zM2317 657l-6 1l-6 -5l5 -4l4 3zM1933 330l-5 -1l1 -4l2 -2l3 4zM2626 379l2 3l-3 3l-4 0l3 -5zM2057 692l0 1l0 2l-2 1l0 -3zM2415 611l-2 1l-4 -1l-1 -2l5 -1zM2222 625l0 2l-2 0l-1 -2l2 -1zM1985 226l-2 5l-5 1l0 -4l3 -2zM1930 739l-1 3l-3 4l-3 -4l4 -3zM2495 243l2 2l-1 4l-2 0l-2 -3zM2565 260l-2 1l-2 -3l2 -2l2 2zM1971 658l4 4l-4 5l-4 1l0 -6zM2687 584l-3 -2l4 -5l3 2l-1 5zM2591 409l1 1l1 4l-2 1l-2 -3zM2586 418l-2 2l-3 -2l-1 -2l3 -1zM2243 386l0 -4l4 -4l2 2l-2 4zM2034 373l-1 1l-3 -1l0 -2l3 -1zM2229 393l0 -1l1 -2l1 1l0 1zM1949 346l2 3l-5 3l-3 -2l2 -5zM2189 369l-4 -4l3 -5l5 2l-2 5zM2142 214l-1 -1l-1 -1l2 -1l1 2zM2114 612l1 -2l2 -2l1 1l-2 3zM2149 347l0 -2l2 -1l1 1l-1 2zM2403 238l-2 -1l-1 -2l1 -1l2 2zM1998 297l-1 1l-1 -2l0 -1l2 1zM2449 203l2 -5l6 0l1 5l-6 3zM2530 753l-3 3l-6 3l-3 -4l4 -4zM2131 247l3 -3l3 0l1 2l-3 2zM2594 353l0 -3l1 -1l2 0l0 2zM1936 366l-2 -3l4 -5l3 1l-2 7zM2002 344l6 -3l5 4l-2 3l-6 -1zM2372 276l1 1l-1 4l-2 -1l0 -2zM2016 710l-6 -6l2 -6l5 0l2 8zM2568 657l-2 -5l4 -4l3 0l0 4zM2404 213l-1 1l-3 0l-1 -2l3 -1zM2488 759l-8 5l-5 -1l-3 -5l9 -3zM2408 319l1 1l0 3l-2 -1l-1 -1zM2066 698l0 -2l2 0l0 2l-1 0zM2481 660l-2 0l0 -3l3 -1l0 3zM2400 633l0 2l-3 1l0 -1l1 -2zM2362 213l1 2l-3 4l-1 -2l0 -4zM2559 295l0 -1l2 0l1 1l-2 1zM2178 378l-2 -2l1 -3l1 -1l3 5zM2109 554l0 1l-3 1l0 -1l1 -1zM2700 746l-2 1l-1 -1l1 -2l2 0zM2482 223l2 3l-1 5l-4 0l1 -5zM2584 743l-2 -3l0 -2l2 -1l1 3zM2538 386l0 -4l4 -3l1 3l-2 4zM2127 192l1 1l-1 1l-2 0l0 -2zM2132 296l5 3l1 5l-4 2l-3 -7zM2225 241l-2 1l-3 -1l2 -1l1 0zM2641 715l0 -1l2 -1l2 0l-2 3zM2659 596l2 -3l5 0l-1 4l-2 1zM2346 255l-2 -2l1 -5l3 0l0 4zM2267 406l1 -5l4 -4l4 3l-5 5zM2220 384l-3 0l-1 -3l1 -1l3 1zM2418 750l-2 2l-4 1l0 -2l3 -2zM2319 196l2 -1l4 3l-2 2l-5 -1zM2396 565l2 -2l4 0l0 2l-4 1zM1958 742l-3 1l-2 -2l1 -2l4 0zM2048 242l3 6l1 6l-5 1l-3 -7zM2549 373l0 2l-1 3l-2 -2l1 -3zM2538 307l6 -2l2 3l-1 6l-5 -2zM2211 766l-2 -3l1 -2l1 -1l1 4zM2197 578l3 -2l2 2l0 2l-4 0zM2284 407l1 -3l4 -1l2 3l-4 3zM2154 622l-2 -1l0 -1l0 -2l2 3zM2688 565l-1 -2l-1 -3l3 0l1 1zM2289 682l-1 -3l3 -5l4 3l-4 6zM2633 246l-1 1l-2 -1l0 -2l2 0zM2322 593l1 -2l3 -2l1 3l-2 1zM2453 567l3 0l2 2l-1 0l-3 0zM1959 268l4 -2l7 4l-2 3l-6 -2zM2608 694l-5 -3l2 -9l8 2l-1 8zM1927 381l-1 1l-2 1l0 -2l2 -1zM2301 215l-1 6l-2 2l-3 -1l3 -6zM2346 249l-2 -1l0 -4l2 0l1 3zM2166 310l3 0l6 6l-4 3l-4 -3zM2383 767l-3 2l-4 0l-1 -2l5 -2zM2450 274l1 1l0 3l-3 0l0 -3zM2514 414l-3 -1l0 -1l2 -1l1 2zM2671 358l0 -3l6 -2l3 3l-5 4zM2561 653l-1 2l-3 0l0 -1l2 -2zM1986 631l2 2l-3 4l-2 1l0 -6zM2185 243l3 4l-2 4l-3 -1l0 -5zM2178 555l0 2l-1 1l-1 -1l1 -2zM2444 406l-3 -6l3 -5l3 1l2 5zM2365 650l2 -1l1 2l0 2l-2 -1zM2000 340l2 -1l1 3l-1 1l-2 -2zM2087 544l0 3l-2 3l-2 -1l1 -4zM2357 582l0 -1l3 -4l0 2l0 3zM2204 226l-2 -4l3 -3l3 2l-1 4zM2636 246l-1 -2l-1 -1l1 -1l2 3zM2039 597l-2 -4l9 -11l4 2l-3 11zM2147 203l0 3l-2 2l-2 -2l1 -2zM1967 710l2 -1l2 4l-2 2l-2 -2zM2220 323l2 1l-1 2l-1 0l-1 -2zM1935 669l2 4l-5 3l-7 -3l5 -5zM1977 665l2 1l2 4l-1 2l-3 -4zM2031 244l4 2l-1 3l-1 0l-2 -3zM2663 340l-1 4l-4 1l-2 -1l3 -3zM2456 638l-5 2l-1 -1l1 -3l3 -1zM2508 320l0 -2l0 -2l2 0l0 3zM2045 342l1 3l-1 2l-1 -1l0 -3zM2661 191l-2 -1l1 -3l2 1l2 2zM2351 306l1 1l1 4l-2 -1l-2 -3zM2159 666l1 3l-3 1l-2 -2l1 -3zM2272 729l-2 -2l2 -3l2 0l0 3zM2681 613l-3 0l-4 -3l1 -3l5 2zM2582 661l-4 -1l-2 -5l2 -2l4 4zM2372 706l0 -2l1 -1l2 1l-2 2zM2106 370l-1 2l-2 1l0 -3l1 0zM2084 535l3 1l2 2l-2 2l-3 -2zM2543 233l1 1l-1 5l-3 0l0 -4zM2142 291l-4 0l0 -5l2 -3l2 4zM2551 546l2 1l0 2l-2 0l-1 -1zM2184 366l-2 -1l1 -3l2 0l0 4zM2186 190l3 -1l1 2l0 2l-3 -1zM2023 377l-1 -3l4 -1l1 3l-3 2zM2392 594l2 3l-1 2l-2 0l-1 -2zM2160 247l-2 1l-3 -2l0 -2l3 0zM2027 337l-4 0l-2 -5l2 -3l4 5zM2086 406l1 -3l4 1l0 1l-2 3zM2505 622l5 -3l2 2l-1 2l-2 2zM2365 538l-2 3l-3 0l0 -1l3 -2zM2139 374l-3 -2l-2 -2l1 -2l4 3zM2428 355l0 1l-3 0l0 -2l2 -1zM2304 651l0 -2l3 -1l1 1l-2 2zM2374 745l2 2l-1 2l-2 -1l-1 -2zM2485 622l-1 -5l6 -5l5 2l-5 8zM2518 660l3 0l2 1l-2 2l-3 -2zM2177 561l0 -2l3 -1l0 1l-2 2zM2487 669l0 4l-4 2l-2 -1l3 -4zM1947 383l1 2l-1 0l-2 0l1 -2zM2288 201l5 1l4 6l-3 2l-5 -3zM2140 693l-3 -1l0 -2l1 -1l1 1zM2118 215l1 2l0 2l-2 0l-1 -3zM1988 289l2 -1l0 3l-1 1l-2 -1zM2019 238l-2 -2l0 -1l1 -1l1 2zM2455 327l-1 2l-5 0l0 -2l3 -3zM2554 758l4 0l4 4l-3 1l-4 -2zM1925 752l-1 0l-2 -2l1 -1l2 1zM2258 417l-2 1l-1 -2l1 -1l2 1zM2535 378l-3 1l-2 -2l1 -2l3 1zM2010 672l0 2l-3 1l-1 -1l2 -3zM2055 582l-4 -1l-1 -8l3 -3l5 7zM2174 291l2 2l0 2l-1 2l-2 -4zM2432 206l0 4l-3 1l-2 -1l2 -3zM2188 389l2 1l1 2l-3 2l-1 -2zM2537 273l-1 4l-4 0l-1 -2l5 -4zM2283 589l2 -2l2 1l0 1l-3 1zM2206 228l0 1l-3 2l-1 -2l2 -2zM1965 714l5 -3l4 1l1 4l-6 2zM2480 266l1 -4l5 -1l1 3l-2 2zM2705 632l-2 0l-1 -1l0 -1l3 0zM2179 371l-5 -1l-1 -5l3 -2l4 4zM2056 623l4 4l-2 3l-5 1l-1 -6zM1959 745l-2 0l-1 -1l2 -1l2 1zM2323 215l-2 -1l-1 -6l2 -1l3 6zM2197 767l-5 1l-3 -2l3 -5l5 2zM2634 195l-1 -1l0 -2l3 0l0 2zM2503 211l2 1l-1 3l-1 -1l-2 -2zM2664 679l-4 -2l-1 -3l4 0l2 2zM2387 375l-2 1l-4 -1l1 -2l3 -1zM2039 397l1 -7l7 -5l6 6l-3 6zM2216 734l1 -2l3 2l0 1l-2 1zM2141 322l-2 -2l-1 -3l3 -2l2 4zM2003 322l0 2l-2 1l-1 0l1 -3zM2285 663l1 -2l6 0l0 1l-4 3zM2110 332l-1 3l-2 1l-2 -1l2 -3zM2478 369l2 1l0 5l-2 0l-2 -2zM2427 745l-1 3l-3 1l-2 -1l2 -3zM2576 399l-4 0l0 -4l2 -2l3 4zM2424 338l-1 -1l3 -2l0 1l-2 2zM2234 400l0 -1l3 0l0 1l-2 1zM2167 536l-2 5l-4 0l-2 -4l4 -3zM2114 564l0 -3l2 -3l2 2l-1 2zM2359 667l-3 -4l1 -7l3 2l1 6zM1974 737l5 4l1 5l-2 1l-5 -5zM2657 191l-2 0l0 -2l2 0l1 0zM2224 279l-1 5l-7 5l-2 -4l5 -6zM2252 231l1 3l0 1l-1 1l-1 -2zM2582 211l1 -1l1 0l0 2l-1 0zM2553 214l-2 -2l-1 -5l2 0l2 3zM2086 300l3 -2l4 0l-1 5l-4 -1zM2394 381l0 4l-1 3l-2 -2l1 -4zM2359 326l-2 -2l-1 -6l1 0l4 5zM2474 601l-4 -6l4 -7l3 4l0 6zM2337 672l2 2l-1 4l-4 0l0 -3zM1969 290l2 1l-2 4l-3 -1l1 -4zM2202 373l2 -2l4 0l-2 3l-2 1zM2519 581l1 1l0 2l-2 0l0 -1zM2413 228l-1 1l-2 -3l1 -1l2 1zM2431 228l-2 5l-8 -2l2 -4l4 -2zM2336 771l1 0l3 0l0 0l-3 2zM2307 261l-5 3l-5 -2l1 -3l8 -1zM2359 229l1 -3l5 0l1 3l-5 2zM2550 336l4 -2l4 4l-2 2l-3 -1zM1989 757l-2 -1l0 -2l2 -1l1 2zM2022 235l-1 3l-4 1l0 -3l2 -2zM2592 246l-2 -3l1 -4l4 1l-1 4zM2443 327l-1 2l-5 -3l1 -3l5 2zM2338 345l-1 1l-3 -1l1 -1l2 0zM2196 199l-5 3l-6 -2l3 -5l6 -1zM2065 737l2 -1l3 1l0 2l-4 0zM2627 733l1 0l2 1l-1 1l-2 0zM2022 610l1 -1l2 -2l0 2l0 1zM2225 693l-2 2l-4 -1l2 -2l2 -1zM2440 664l-3 1l-3 -2l1 -2l4 0zM2481 617l-1 0l-1 -2l2 -1l1 2zM2176 766l-1 2l-1 0l-2 -2l2 -1zM2579 744l2 7l-2 4l-3 0l-1 -6zM2070 317l3 0l1 2l-1 1l-2 0zM2669 277l-2 0l-2 -3l1 -1l2 1zM2315 649l-2 2l-2 -1l1 -2l3 0zM2147 273l-1 -3l2 -3l2 0l0 3zM2399 372l0 1l-4 3l-1 -2l2 -2zM2427 403l-2 3l-2 0l-1 -1l3 -3zM2394 354l3 -5l4 2l0 2l-3 2zM2252 413l1 -2l2 -1l1 2l-2 2zM2112 268l1 3l-3 1l-2 0l3 -5zM2206 722l2 -1l0 2l-1 1l-1 -1zM2216 283l-4 4l-9 -2l0 -2l8 -2zM2230 261l-4 3l-4 -2l2 -3l4 0zM1988 570l0 1l-2 1l-1 -2l2 -1zM2246 187l2 -1l2 2l-1 2l-2 -1zM2019 763l5 -6l11 0l1 5l-15 4zM2380 594l0 -4l2 -3l2 -1l-1 5zM2672 287l-8 1l-5 -3l2 -4l7 3zM2111 338l3 -5l7 1l0 3l-4 4zM2004 714l-3 -4l2 -3l2 -1l1 7zM2036 296l0 -2l2 -2l1 1l-1 2zM2312 696l-1 -2l1 -2l2 1l-1 2zM2418 207l-1 -2l1 -3l1 1l1 3zM2084 239l-2 2l-4 3l-1 -2l2 -4zM2117 376l0 -2l5 -4l0 3l-3 4zM2115 275l-5 0l-3 -4l3 -2l3 2zM1977 258l-2 -1l0 -1l1 -1l2 1zM2339 577l0 -3l3 -2l1 3l-2 3zM2128 312l-1 -4l4 -2l2 4l-3 4zM2658 384l-3 0l0 -4l3 0l1 2zM2566 613l0 -2l0 -2l2 0l-1 3zM2309 192l-1 2l-4 -1l0 -2l3 -1zM2174 342l-2 -5l1 -3l3 -1l1 6zM2184 747l-2 0l-2 -1l1 -2l2 0zM2378 221l2 -1l2 0l0 3l-2 1zM2022 688l3 -1l2 4l-2 2l-4 -2zM2077 715l-2 0l0 -2l1 -1l2 1zM2035 300l-2 0l-2 -3l2 -1l3 2zM2275 720l-1 1l-3 -2l1 -1l3 1zM2157 745l-2 2l-2 0l-1 -2l2 -1zM2705 735l-2 0l-2 -1l1 -2l2 2zM2226 579l1 2l-1 2l-2 0l0 -2zM2115 741l-2 -1l0 -2l2 -1l1 2zM2394 233l2 1l1 4l-3 3l-3 -3zM2337 337l-3 0l-1 -4l1 -1l3 3zM2645 239l0 6l-3 1l-3 -1l2 -6zM2577 258l-2 1l-2 -1l1 -2l2 1zM2014 411l0 -1l3 -1l0 1l-1 2zM2264 649l1 -2l2 1l0 2l-2 0zM2276 405l-1 3l-2 2l-2 -1l2 -4zM2324 380l2 -1l1 2l-2 1l-2 -1zM2393 312l0 2l-2 1l-1 -1l1 -2zM2283 287l-2 -3l1 -5l3 0l0 5zM2574 700l3 1l1 5l-1 1l-3 -2zM2278 749l1 1l0 1l-1 1l-1 -1zM1983 710l2 0l1 3l0 1l-3 -2zM2209 738l2 2l-1 1l-1 1l-1 -2zM2313 368l1 4l-1 4l-2 -1l-1 -4zM2173 729l4 -2l2 1l-1 4l-4 -1zM2648 712l6 2l1 4l-3 2l-3 -2zM2645 214l0 2l-2 3l-3 -1l0 -3zM2579 232l-2 1l-1 -2l1 -2l2 2zM1955 741l0 2l-1 2l-2 0l1 -3zM2203 249l-1 1l-2 -2l1 -1l1 0zM2111 647l-4 1l-2 -3l1 -1l4 -1zM2153 219l3 3l0 2l-3 1l-1 -4zM2698 268l0 6l-6 4l-2 -4l5 -6zM2279 751l-2 -3l1 -2l2 1l0 2zM2268 687l-1 4l-6 3l-3 -3l5 -4zM2375 766l2 -4l6 -2l0 3l-3 3zM2672 607l3 1l2 3l-3 2l-2 -2zM2537 563l-1 -7l2 -4l5 2l-2 6zM2163 590l-2 -1l1 -3l3 -1l1 4zM2265 332l2 1l-1 4l-1 1l-2 -5zM2069 304l0 -3l2 -1l2 1l-2 3zM2357 698l-3 0l-4 -4l3 -2l4 2zM2152 355l-4 -3l1 -4l5 -2l0 7zM2497 267l4 3l1 4l-2 0l-3 -4zM2689 549l5 -1l2 2l0 3l-4 -1zM2644 406l-2 1l-2 -2l0 -2l3 1zM2345 333l0 -2l2 0l1 1l-2 1zM1923 260l-2 -4l2 -1l3 1l-2 3zM2256 606l-2 1l-1 -2l1 -1l2 0zM2298 356l2 -1l2 2l0 2l-4 0zM1988 759l4 -1l3 6l-3 1l-5 -3zM2467 565l-1 5l-2 2l-2 -2l3 -4zM1939 731l1 0l1 3l-2 0l-1 -2zM2398 718l3 3l0 3l-3 0l0 -4zM2070 583l-5 0l-3 -1l1 -3l4 1zM2049 407l3 0l1 3l-1 1l-2 -1zM2344 256l2 0l1 1l-2 2l-1 -1zM2585 711l4 0l1 4l-3 1l-2 -1zM2427 710l2 2l-1 3l-2 0l-1 -3zM2403 406l-2 2l-4 -2l2 -4l4 2zM2282 211l-2 -1l-2 -4l2 -2l2 2zM2689 273l1 1l0 4l-2 0l-1 -3zM2259 613l1 2l-3 3l-2 -1l2 -3zM2167 189l2 5l0 4l-6 0l0 -7zM2511 389l-2 -1l1 -2l2 0l0 2zM2091 317l3 0l2 5l-4 2l-3 -1zM2336 409l-2 5l-6 2l1 -4l3 -4zM2003 730l2 1l1 4l-3 1l-1 -3zM2065 715l-6 6l-4 -4l-1 -4l5 -1zM2365 328l0 2l-1 2l-2 -1l1 -2zM2063 543l1 -1l2 -1l0 1l0 1zM2290 379l-2 0l-1 -3l1 -1l3 2zM2535 248l0 3l-1 2l-2 -1l0 -3zM2421 229l0 -3l3 -2l2 1l-2 3zM2157 402l-1 3l-5 -1l1 -2l2 -2zM2117 605l-2 -6l4 -3l5 2l-4 7zM2687 676l1 4l-1 3l-4 0l2 -5zM1949 627l3 1l1 2l-1 2l-4 -3zM2609 310l5 0l3 6l-3 2l-5 -3zM2325 676l0 2l-2 2l-2 -2l2 -2zM2207 556l3 -4l5 0l0 5l-4 1zM2433 738l2 4l2 4l-3 0l-3 -2zM2438 299l2 3l0 4l-3 0l-1 -5zM2209 205l-1 -1l1 -2l1 0l0 2zM1933 590l-2 2l-1 -1l0 -1l1 0zM2614 244l0 -2l6 0l1 1l-5 2zM2078 537l2 2l0 1l-1 1l-1 -2zM2255 619l6 -2l3 2l-3 5l-6 -1zM2458 711l-2 1l-3 0l0 -2l2 -1zM1980 611l-3 0l-2 -3l2 -1l2 2zM2352 242l0 -4l1 -4l2 2l1 3zM2112 718l2 3l-1 3l-2 -1l-1 -3zM2183 673l-1 -2l1 -4l3 2l-1 3zM2025 261l2 3l0 2l-3 1l-1 -3zM2670 412l0 -1l2 -3l1 1l-1 3zM2175 285l3 2l0 3l-2 0l-2 -1zM2055 607l1 3l-2 2l-3 -2l0 -3zM2616 361l-2 3l-3 1l-2 -2l2 -2zM2163 757l1 -4l3 0l1 4l-3 1zM2452 552l2 -3l4 0l2 2l-4 3zM2225 634l2 0l1 3l-2 1l-1 -2zM1953 252l-1 1l-4 2l0 -2l1 -2zM2000 598l0 -1l0 -1l2 1l0 1zM2697 556l0 2l-2 -1l0 -1l1 -1zM2440 383l1 5l-5 2l-3 -2l3 -5zM1949 744l-3 2l-4 -4l1 -2l6 2zM2675 225l2 2l-1 3l-2 -1l-1 -3zM2543 412l1 -1l3 0l-1 1l-1 1zM2618 409l-3 -1l-2 -4l3 -2l3 3zM2359 226l-1 -3l3 -1l0 1l0 2zM2016 724l-1 3l-3 0l-1 -3l3 -1zM1922 588l3 5l1 4l-3 1l-3 -5zM2095 541l3 -3l4 1l0 1l-6 2zM2479 631l-3 -1l-1 -6l4 0l2 4zM2384 242l4 1l3 7l-3 0l-4 -3zM2227 598l1 1l-3 1l0 -1l1 -2zM2182 667l2 0l2 2l-1 1l-2 -1zM2677 368l2 -1l3 2l-1 2l-4 -1zM2080 217l3 0l0 1l0 2l-2 -1zM2665 222l-4 1l-3 -4l4 -4l5 3zM2080 202l-1 -4l6 0l1 3l-3 2zM2285 208l-1 2l-3 1l-1 -3l2 -1zM2076 595l0 -3l4 -4l3 1l-1 4zM2149 761l-2 -2l2 -3l4 0l-2 4zM1924 192l-1 -2l3 -3l2 2l-1 2zM1995 406l2 -2l3 0l1 1l-3 2zM2657 395l-2 -1l0 -4l4 0l0 3zM2467 573l4 -1l2 3l-2 3l-3 -3zM2399 288l3 1l0 3l-3 0l-1 -1zM2577 353l0 -2l2 0l1 2l-1 1zM2400 297l2 4l-2 7l-5 -1l1 -9zM2200 196l-3 -2l0 -4l3 -1l1 3zM2211 334l2 -5l5 1l0 3l-4 2zM2650 228l3 -1l1 1l0 1l-4 1zM2403 261l1 -1l2 0l0 2l-2 0zM2203 721l-5 -1l-1 -2l1 -3l5 4zM2022 636l3 -3l4 -1l3 2l-4 3zM1964 352l-2 1l-3 2l-1 -2l3 -2zM2447 571l1 3l-3 2l-1 -2l1 -3zM2050 235l3 -2l4 1l-1 3l-4 0zM2234 728l3 2l-2 5l-4 -2l1 -4zM2642 639l1 0l1 1l-1 1l-2 -1zM2104 537l0 4l-3 1l-2 -1l4 -4zM1951 730l2 -2l4 2l-1 3l-4 0zM2353 245l-7 -7l-1 -7l5 -2l4 10zM2491 288l4 2l2 6l-3 4l-5 -7zM2275 320l1 4l-3 2l-3 -2l1 -3zM2411 264l5 4l-5 6l-3 -1l-1 -5zM2614 670l1 0l3 2l-1 3l-3 -1zM1986 234l3 -3l4 1l-2 5l-5 -1zM2563 733l1 2l-2 2l-1 0l0 -3zM1950 612l-3 2l-3 1l0 -2l2 -2zM2272 729l1 2l-1 2l-2 -2l0 -1zM2370 685l0 -5l3 -1l3 3l-3 2zM2381 270l2 1l1 6l-2 0l-3 -3zM2307 403l1 -4l2 -2l5 2l-3 4zM2291 377l1 3l-2 5l-4 -1l2 -7zM2544 590l3 3l-5 5l-3 -2l0 -4zM2646 700l2 -2l3 1l-1 3l-2 0zM2428 360l2 1l1 3l-2 0l-2 -3zM2031 645l2 0l0 5l-3 1l-1 -3zM2464 574l1 -1l2 0l0 2l-2 1zM2508 609l1 1l0 1l-2 0l0 -2zM2436 342l0 3l-6 3l-1 -5l4 -1zM2545 286l2 2l-1 3l-1 0l-2 -3zM1946 393l2 5l-4 3l-3 -2l2 -5zM2160 399l2 -4l2 -1l2 2l-2 2zM1979 553l2 1l0 2l-2 1l-1 -1zM2469 609l1 1l-2 3l-2 -1l2 -3zM2648 675l4 3l-5 7l-5 1l0 -12zM2637 326l0 2l-2 0l0 -1l1 -1zM2660 584l1 -1l5 -2l-1 3l-2 2zM2675 352l0 6l-5 2l-3 -1l3 -7zM2395 260l0 3l-6 2l-2 -2l5 -4zM2679 296l4 -1l2 4l-2 4l-4 -2zM2106 320l1 2l-2 2l-2 -1l1 -1zM2519 658l-3 1l-6 -2l2 -3l3 1zM2481 613l-2 1l-1 -1l0 -1l2 0zM1974 661l-2 1l-1 -3l2 -2l2 2zM2301 218l-1 3l-4 -1l-1 -2l2 -2zM2254 397l-1 -2l2 -3l1 2l0 2zM2498 311l3 -5l10 1l-2 7l-10 0zM2408 722l0 -2l2 -2l1 2l-1 1zM2085 556l0 -3l2 -2l3 2l-2 2zM2147 609l-1 -1l1 -3l2 1l-1 3zM2091 329l-6 -1l-1 -5l3 -1l3 3zM2149 755l2 1l2 4l-2 1l-3 -3zM2296 219l-2 1l-2 -2l2 -1l2 0zM2124 318l0 5l-3 3l-2 -2l2 -4zM2667 408l2 -5l5 0l2 1l-5 4zM2292 553l-1 -2l1 -1l1 1l0 1zM2039 662l2 -2l2 2l0 1l-3 0zM2060 256l2 2l3 3l-3 3l-3 -2zM2685 363l4 1l-1 6l-1 2l-3 -5zM1999 322l-2 2l-5 -2l2 -3l5 0zM2213 627l-3 -1l0 -4l2 0l1 2zM2492 293l-5 2l-7 -7l2 -3l7 2zM1958 396l3 1l2 4l-1 0l-3 -1zM2215 718l2 1l0 3l-3 0l0 -2zM2343 396l4 3l-1 3l-2 2l-2 -6zM2494 219l-4 -1l0 -8l3 -2l4 7zM2071 348l1 2l-1 4l-2 -1l0 -4zM2557 215l3 2l0 2l-3 0l-1 -2zM2480 290l-3 1l-2 -2l2 -2l2 1zM2400 644l-2 -2l2 -5l2 2l0 3zM2635 742l3 1l2 4l-2 2l-3 -3zM2668 648l5 -1l5 4l-5 3l-5 -2zM2082 610l-1 1l-3 -1l1 -2l1 0zM2411 682l-1 -2l1 -2l1 1l1 2zM2507 742l3 2l-1 3l-3 -1l0 -2zM2579 325l1 -2l3 -3l2 3l-1 2zM2048 548l-2 0l-1 -1l0 -2l2 1zM2319 250l0 -3l3 -6l3 2l-1 5zM1926 303l1 2l-4 5l-3 -3l2 -4zM2189 413l1 -1l2 2l-1 2l-2 -1zM2311 403l1 -6l5 -3l2 2l-2 6zM2192 315l-2 3l-4 1l0 -3l3 -3zM2001 711l2 -3l4 0l2 3l-5 3zM2284 270l3 -3l6 3l-1 4l-6 0zM2432 361l-1 2l-2 2l-3 -3l3 -2zM2555 338l-3 0l-2 -6l4 -1l3 6zM2401 326l1 -3l2 0l1 1l-1 2zM2634 688l4 -4l7 -1l1 4l-9 4zM1934 246l3 2l2 5l-4 1l-2 -4zM2448 606l-2 -1l-1 -2l3 -1l1 1zM2515 628l1 -1l3 0l0 3l-2 1zM2013 774l-2 2l-3 -1l0 -3l4 0zM2322 720l-1 5l-4 1l-2 -2l3 -5zM2085 198l2 -2l2 -1l0 1l-1 2zM2582 242l1 3l-2 3l-2 -1l0 -3zM1947 698l-3 0l-2 -3l2 -2l5 2zM2218 772l3 0l3 2l-2 1l-3 -1zM2153 755l2 -2l4 1l0 2l-4 1zM2183 768l3 -2l2 2l-1 1l-3 0zM2558 654l-4 -1l0 -6l4 -1l3 5zM2434 411l0 -1l1 -1l1 0l0 2zM2396 643l-1 -2l1 -3l2 0l0 5zM2132 729l-5 0l-4 -3l2 -3l6 3zM2190 405l0 1l-2 3l-1 -1l-1 -2zM2395 761l-3 -4l2 -3l3 1l1 3zM2356 597l-1 -2l1 -3l1 1l0 3zM2702 400l0 -2l2 -1l1 2l-1 1zM2575 245l2 0l0 2l-2 1l-1 -2zM2108 745l-4 0l-6 -8l5 -2l5 4zM2200 597l-2 1l-1 0l-1 -1l2 -1zM2496 718l0 1l0 2l-2 0l0 -2zM1925 559l2 1l-2 3l-3 -1l1 -3zM2143 271l-2 1l-1 -1l0 -1l2 0zM2705 408l-1 2l-2 3l-2 -1l2 -2zM2222 250l-2 -1l-2 -6l3 0l3 4zM2605 397l1 0l2 2l0 1l-3 -1zM2133 562l-1 3l-2 2l-1 -1l1 -3zM2373 255l-2 -1l-1 -1l1 -1l2 1zM2574 281l-1 4l-3 0l-1 -2l2 -2zM2258 250l-4 1l-3 -4l2 -1l4 0zM2662 337l0 -2l2 -2l2 2l-1 3zM2206 288l1 2l-2 1l-1 0l0 -3zM2262 764l-3 -1l-3 -2l2 -3l5 3zM2670 628l0 4l-2 3l-2 -1l0 -4zM1938 239l-1 0l0 -2l1 0l1 1zM2184 238l2 -2l3 0l1 2l-2 2zM2475 717l2 -1l2 1l0 1l-3 0zM1944 654l4 -2l8 3l1 4l-9 0zM2587 241l-1 -2l2 -3l1 1l0 3zM2287 555l3 3l-1 3l-2 0l-2 -2zM2242 719l3 0l1 6l-1 2l-5 -5zM2411 709l-4 0l-9 -6l4 -7l7 5zM1968 571l1 -1l2 0l0 2l-2 0zM2428 653l0 2l-4 1l-1 -2l3 -1zM2591 202l-8 1l-8 -9l7 -4l7 4zM2010 768l0 -4l3 -3l1 2l-1 5zM2300 328l-3 -3l0 -3l3 -1l1 5zM2524 347l-2 -2l-1 -2l2 -2l2 4zM1927 771l-3 1l-4 -1l0 -2l5 -2zM2348 291l3 -4l4 1l-1 3l-3 1zM2230 581l2 0l2 2l-2 2l-1 -2zM1926 661l-2 1l-1 -1l0 -1l2 0zM2196 669l-2 -3l0 -2l3 0l1 4zM2533 316l0 -2l3 1l-1 1l-1 1zM2262 648l-6 -3l-1 -5l5 -2l4 6zM2699 633l1 -3l5 0l-1 4l-2 2zM2267 207l3 -1l3 1l-1 2l-4 0zM2356 296l-3 -1l1 -3l2 1l1 2zM2505 402l2 -2l4 1l0 3l-4 1zM2356 313l0 -3l1 -1l1 1l-1 2zM2276 738l2 1l-1 2l-2 0l0 -2zM2271 221l-5 3l-5 -1l-2 -4l8 -1zM2592 391l3 1l1 3l-1 1l-2 -2zM2520 303l-2 6l-7 0l-1 -5l8 -4zM2450 360l-1 -4l5 -2l2 1l-2 5zM2469 239l-1 4l-4 2l-2 -3l4 -3zM2561 650l1 3l-2 1l-2 -2l1 -1zM2519 363l-1 1l-2 0l-1 -1l3 -2zM2495 544l3 -3l2 1l1 1l-4 1zM1935 559l2 1l-1 4l-2 0l0 -3zM2572 559l-3 1l-2 -3l1 -2l3 1zM2419 639l-1 3l-6 -2l0 -3l4 0zM2561 750l5 -2l6 3l-1 4l-7 -2zM2351 209l4 0l3 10l-4 2l-5 -8zM2637 294l3 -4l3 0l0 4l-4 1zM2332 304l2 2l-1 3l-2 -2l0 -2zM2146 240l1 -1l2 2l0 1l-2 0zM2164 670l-1 -2l5 -4l1 2l-1 4zM2586 689l-1 2l-3 -1l0 -2l3 -1zM2597 333l1 0l1 1l1 2l-3 -1zM2398 595l2 0l1 1l0 1l-2 0zM2242 570l-3 -2l1 -3l1 1l1 2zM2487 404l4 -2l3 1l1 2l-4 1zM2649 627l-2 0l-2 -3l2 -1l1 1zM2371 663l3 2l2 5l-2 1l-3 -4zM2073 673l-1 3l-2 1l-1 -2l2 -2zM2216 300l4 0l1 6l-3 1l-3 -4zM2299 231l-2 2l-3 -1l1 -4l3 0zM2406 243l3 0l4 4l-1 2l-5 -2zM2656 535l4 0l1 3l-1 1l-5 -1zM2142 209l4 -2l4 2l-1 3l-4 0zM2239 309l2 1l1 3l-2 0l-2 -1zM2309 194l-1 -3l2 -2l2 0l0 4zM2254 209l2 -1l2 1l0 2l-3 0zM2117 408l1 2l-2 1l-1 0l0 -2zM2172 281l1 -3l2 0l0 2l-1 2zM2652 539l1 -1l2 2l-1 1l-2 -1zM2616 658l1 -1l1 0l1 1l-2 1zM2047 273l-1 -3l2 -3l2 2l-1 2zM2457 318l-2 -1l-1 -2l2 -1l1 2zM2313 719l1 3l-2 2l-1 -2l0 -2zM2517 766l2 0l1 3l-2 1l-1 -1zM2396 592l7 1l6 10l-7 3l-8 -4zM2505 295l2 4l-1 3l-3 2l-1 -4zM1968 231l1 -6l8 -5l2 5l-5 5zM1996 720l3 0l2 3l-2 4l-4 -3zM2421 763l-1 0l-1 -2l1 0l1 1zM2171 632l-1 -1l1 -2l1 1l0 2zM2064 186l-1 2l-3 0l-1 -2l3 -2zM2614 637l-2 0l0 -1l1 -1l1 0zM2520 188l0 3l-3 2l-2 -1l3 -4zM2251 776l-3 0l0 -5l4 1l1 2zM2166 743l0 1l-1 2l-1 -1l0 -2zM2330 387l1 -4l4 -1l1 3l-3 2zM2315 305l-3 0l-6 -5l3 -3l4 3zM2654 569l-1 1l-3 -1l0 -1l4 -1zM2286 593l2 -4l2 0l2 4l-3 1zM2352 349l0 -1l0 -2l2 0l-1 3zM2646 385l3 -1l4 1l-2 4l-4 -1zM2647 237l-1 -2l1 -2l1 0l0 3zM2292 534l2 2l0 3l-2 0l-2 -2zM2462 381l1 0l4 4l-2 2l-3 -2zM2104 758l-4 2l-4 -1l1 -5l4 0zM2411 653l4 -1l1 4l-1 1l-3 -1zM2450 567l0 -2l1 -1l1 2l-1 1zM2348 386l-3 0l-1 -4l3 -3l4 6zM2602 602l-1 3l-2 1l-2 -3l2 -2zM1944 715l3 0l5 6l-1 2l-8 -4zM2104 751l1 2l0 1l-2 0l-1 -1zM2150 269l-2 0l1 -5l1 0l2 3zM2271 690l3 3l-3 4l-4 -2l1 -3zM2017 765l3 -1l2 1l0 3l-4 0zM2301 415l-2 3l-7 -2l1 -5l7 2zM2189 364l-3 2l-3 -1l1 -3l4 0zM2036 362l0 4l-3 3l-2 -4l1 -2zM2528 620l3 1l-2 6l-2 0l-1 -4zM2041 419l1 -3l8 -1l0 3l-5 2zM2508 581l-3 -1l0 -2l1 -2l3 3zM2020 276l1 2l-1 3l-2 -1l0 -2zM2049 696l-3 0l-3 -3l1 -2l4 1zM1984 362l-1 -1l0 -3l2 0l1 3zM2145 543l2 2l-4 3l-1 0l0 -4zM2370 403l2 2l-1 2l-2 0l-1 -3zM2064 621l0 4l-5 3l-1 -3l1 -3zM2019 659l3 4l0 2l-2 1l-2 -2zM2411 584l2 -1l1 0l-1 2l-1 0zM2422 249l-3 1l-1 -2l2 -2l3 2zM2220 212l-3 1l-1 -1l1 -3l2 1zM1992 342l0 1l-4 -1l0 -2l3 -1zM1964 699l0 -3l4 -1l1 1l-1 3zM2177 763l2 0l1 2l-1 0l-2 -1zM2498 279l-3 2l-2 -1l0 -2l4 1zM2370 755l-2 4l-4 3l-2 -2l3 -5zM2214 274l0 -4l3 -2l3 3l-2 3zM2036 614l1 3l-2 1l-2 -1l1 -3zM2147 654l-3 -8l9 -5l6 4l-2 9zM2650 552l1 -1l2 0l0 2l-2 0zM2443 258l0 -3l4 -1l1 2l-3 2zM2484 582l1 1l0 1l-2 0l0 -1zM2168 618l-3 1l-1 -2l2 -2l2 0zM2378 653l2 1l0 2l-1 0l-1 -2zM2221 314l1 1l0 2l-2 0l0 -1zM2433 634l4 -1l3 1l-1 2l-5 0zM2286 556l-2 5l-6 1l0 -4l4 -3zM2551 259l0 -3l2 -1l1 1l-1 2zM2614 666l1 2l0 3l-3 0l0 -3zM2391 194l-1 2l-3 -1l0 -1l2 -1zM2113 383l2 3l0 3l-3 1l0 -6zM2544 626l0 -3l3 -1l2 1l-3 4zM1971 202l-3 1l-5 -1l-1 -5l6 2zM2614 271l-2 2l-2 0l-1 -4l4 0zM2082 223l4 -2l5 4l-2 3l-6 -1zM2676 557l-2 -1l0 -1l2 -1l1 2zM2279 259l0 2l-1 0l-2 0l2 -3zM2067 754l3 2l0 1l-1 2l-2 -2zM2133 284l-2 1l-1 -3l2 0l1 1zM2667 770l0 2l-2 0l-1 -1l2 -2zM2112 693l1 -2l5 1l0 3l-4 0zM2184 723l5 -1l1 4l-3 2l-3 -2zM2152 552l-1 2l-5 0l-1 -3l5 -2zM2477 215l-4 -1l-3 -4l2 -2l4 4zM1992 686l4 1l1 4l-1 0l-3 -2zM2484 331l-1 -1l-1 -3l2 -1l2 2zM2366 707l-5 0l-3 -2l2 -2l4 1zM2283 764l1 -3l3 -1l2 3l-4 3zM2087 399l2 -1l2 0l0 2l-2 0zM2633 715l1 3l-2 4l-2 -2l0 -3zM2110 743l0 -1l2 -2l0 1l-1 2zM2156 282l-1 1l-3 0l0 -2l2 -1zM2540 307l4 0l4 3l-3 4l-4 -1zM2566 360l1 3l-4 2l-2 -2l3 -4zM2066 559l1 3l-4 2l-1 -2l2 -3zM2378 641l1 -1l4 -1l0 2l-2 2zM2009 203l0 -4l4 -2l1 1l-2 5zM2305 701l1 -2l4 -2l1 3l-1 3zM2479 252l-4 -4l0 -6l4 1l2 5zM2249 581l-1 1l-3 -1l0 -1l3 0zM2151 662l2 -1l1 2l0 1l-3 0zM2674 771l2 -2l3 1l0 3l-4 0zM2205 187l2 2l0 3l-2 -1l-1 -2zM2441 309l-2 4l-3 0l0 -3l2 -1zM2378 255l-2 -4l4 -4l2 1l-1 5zM2534 537l3 -2l2 4l-2 2l-2 -1zM2546 689l-5 -4l8 -11l5 2l-3 13zM2430 677l-1 2l-3 1l-1 -1l2 -2zM2123 235l-5 0l-2 -5l1 -3l6 5zM2078 412l-1 -2l1 -2l0 0l1 2zM2609 212l-2 3l-4 -1l0 -2l3 -1zM2633 235l0 -2l3 0l1 2l-2 1zM2234 371l-3 1l-4 -4l2 -2l5 1zM1944 775l-7 3l-6 -4l-1 -4l9 1zM2077 597l2 1l0 3l-3 1l-1 -3zM2052 761l-3 1l-2 -1l-1 -2l4 -1zM2455 599l2 -2l4 0l0 5l-4 1zM1972 733l-1 1l-4 0l0 -3l3 -1zM1926 221l-4 -1l0 -5l6 -2l2 6zM2664 574l0 3l-3 3l-3 -2l2 -2zM2576 754l6 0l3 4l-3 6l-5 -3zM2676 612l3 -1l5 6l-3 3l-6 -3zM2679 250l1 -1l1 0l1 1l-1 1zM2065 758l-1 -2l0 -3l2 1l1 2zM2193 288l5 -4l5 1l1 2l-5 2zM2422 317l2 -2l2 0l2 1l-4 2zM2038 762l-1 2l-1 1l-1 -1l1 -2zM2327 706l0 5l-3 4l-3 -3l1 -4zM2251 579l-1 -3l4 -4l2 0l-1 5zM2548 590l-1 -4l2 -4l2 1l0 3zM2376 626l-5 1l-2 -1l0 -3l3 -1zM2102 348l-4 2l-4 -3l1 -3l5 1zM2424 749l-5 0l-1 -2l2 -3l4 2zM2521 246l2 1l0 3l0 1l-2 -2zM2682 542l2 -1l3 1l-1 3l-3 -1zM2691 649l-3 -3l2 -6l4 1l1 4zM2312 662l2 4l-3 3l-2 -1l0 -4zM2691 773l1 -4l6 -1l0 5l-3 2zM2493 752l8 0l4 2l-3 6l-8 -4zM2287 408l1 -3l3 1l1 1l-2 3zM2660 655l0 4l-2 2l-3 -2l2 -4zM2064 668l-4 1l-4 -3l1 -2l4 0zM2356 241l2 3l-1 5l-3 -1l0 -4zM2546 654l-3 1l-4 -3l2 -4l3 2zM2678 389l-2 0l-2 -1l0 -1l2 0zM2130 711l3 -2l2 1l0 3l-3 0zM2121 633l4 1l1 2l-1 2l-4 -1zM2691 330l0 -2l2 -1l0 2l-2 1zM2523 748l-1 -1l1 -2l1 1l0 1zM2203 654l3 3l0 3l-2 0l-4 -1zM2264 729l0 2l-3 0l0 -1l2 -2zM2112 755l-3 0l-2 -2l1 -1l3 1zM2400 717l-1 1l-2 1l0 -1l1 -2zM2133 625l1 -1l2 3l-1 1l-3 -2zM2191 580l1 1l-2 2l-1 -1l0 -2zM2669 568l-1 2l-3 0l1 -1l2 -2zM2512 406l-3 3l-2 -1l-1 -2l4 -2zM2458 717l2 0l1 3l-3 0l-1 0zM2080 727l4 -1l3 3l-1 3l-4 -1zM2411 335l1 5l-2 4l-2 -3l1 -5zM2075 259l1 -3l4 -1l1 2l-4 3zM2631 707l-2 -1l-3 -2l2 -2l3 2zM1945 365l1 -1l3 2l-2 3l-2 0zM2444 753l-4 -7l7 -6l9 3l-4 10zM2414 310l-1 2l-4 1l-1 -3l4 -2zM2455 608l0 2l-1 1l-1 -2l1 -1zM2080 308l2 1l2 3l-3 2l-1 -3zM2479 541l-1 -2l2 -1l2 2l-1 1zM2327 291l0 3l-2 2l-2 -2l2 -2zM2564 692l1 1l0 2l-2 1l-1 -2zM2545 401l-2 -1l-2 -5l2 -1l2 3zM2018 611l2 0l5 4l-2 1l-4 -2zM2179 743l2 3l-1 5l-2 0l-2 -4zM2655 299l0 2l-2 3l-1 -2l1 -2zM2085 706l4 1l0 2l-1 2l-2 -3zM2625 573l2 0l1 3l-2 1l-1 -1zM2138 583l0 -2l2 -4l1 2l0 2zM2691 385l2 0l0 1l0 1l-2 -1zM2253 608l4 3l-1 5l-2 -1l-1 -2zM2536 575l3 -1l5 1l0 3l-6 0zM2204 567l3 -2l2 1l0 4l-4 -1zM2535 546l1 4l-1 4l-3 -1l0 -5zM2625 264l-3 -5l1 -4l3 0l2 4zM2289 700l1 -3l4 -2l0 3l-1 2zM2340 682l1 -1l2 2l0 1l-3 0zM2478 216l0 -9l7 -6l4 3l-3 11zM2391 239l4 -1l1 4l-3 2l-2 -2zM1990 309l-1 2l-3 1l0 -1l2 -2zM2520 702l-2 4l-5 0l0 -3l2 -3zM2463 359l0 2l-4 1l0 -2l2 -1zM2090 738l2 3l-3 4l-2 -1l0 -3zM2642 570l-2 1l-1 0l0 -2l2 0zM2375 765l3 1l-3 6l-2 1l0 -6zM2427 196l1 1l0 3l-1 0l-1 -1zM2068 312l3 1l1 3l-1 1l-3 -1zM2571 278l-1 3l-4 2l-1 -2l3 -3zM2399 364l3 -6l4 -1l3 4l-6 3zM2174 708l-4 -1l-3 -2l1 -4l5 2zM2111 308l0 3l-2 1l-1 0l1 -3zM2151 760l2 -2l2 2l0 2l-3 0zM2420 615l-2 3l-6 2l-2 -1l6 -5zM2499 359l-2 2l-3 -1l-1 -1l3 -2zM1960 325l-2 -2l1 -3l3 1l0 2zM2134 761l-2 1l-2 0l0 -1l2 -1zM2700 750l4 -1l3 3l-3 3l-4 -3zM2462 550l0 2l-1 1l-1 0l0 -2zM2592 537l1 3l-2 3l-3 -1l1 -4zM2062 536l-1 -2l-1 -2l2 0l1 1zM2210 227l2 -5l5 0l3 1l-5 6zM1987 752l2 0l3 1l-1 3l-4 -2zM2208 358l0 2l-2 1l-1 -1l1 -2zM2321 596l2 -5l4 -2l2 3l-4 4zM2203 610l0 3l-1 2l-3 -2l2 -2zM2083 386l1 3l-1 2l-1 0l-2 -3zM2617 398l-4 2l-3 -1l-1 -3l4 0zM2638 347l-4 -1l-2 -3l1 -2l6 2zM1948 339l1 1l-2 2l-2 -1l2 -3zM2566 716l-1 4l-4 1l-2 -3l3 -2zM2352 596l2 4l-2 2l-2 0l0 -5zM2485 344l2 -1l4 1l0 2l-5 0zM2337 612l3 3l-5 7l-3 -2l0 -5zM2582 556l1 -4l4 -2l1 3l-2 3zM2246 323l-2 2l-2 -2l0 -1l3 -1zM1932 359l2 -3l2 -1l2 1l-3 3zM2197 769l1 -1l4 1l-1 1l-2 0zM2477 243l1 -3l5 0l1 2l-4 1zM2007 712l1 2l-2 1l0 -1l-1 -1zM2466 382l0 -1l2 -1l1 0l-2 3zM2552 316l1 -1l2 1l-2 2l-2 0zM2257 236l1 0l3 2l-1 1l-3 -1zM1927 533l1 4l-1 4l-3 -2l-1 -3zM2287 241l-2 -1l0 -3l1 0l1 2zM2018 234l2 1l0 2l-1 0l-1 -2zM2350 673l-2 -2l2 -2l2 0l0 3zM2057 673l-1 2l-2 1l-3 -2l4 -1zM1929 360l1 -3l2 -1l1 3l-2 1zM1936 685l-1 3l-2 1l-1 -2l1 -1zM2153 187l1 0l1 0l-1 2l-1 0zM2612 757l-2 -2l0 -2l2 -1l1 3zM2083 660l1 0l2 3l-1 0l-3 -2zM2117 393l1 -1l2 1l0 1l-2 0zM2057 216l-1 3l-2 1l-1 -1l1 -2zM2554 738l-3 -1l0 -2l2 -2l2 2zM2079 194l2 -1l5 1l-1 3l-5 1zM2060 345l2 -4l5 -1l0 2l-4 3zM2649 291l-1 -3l2 -4l2 1l0 3zM1919 598l6 -1l4 3l-4 4l-5 -2zM1929 199l1 1l0 1l-1 1l-1 -1zM1972 224l2 -1l2 3l-1 3l-4 -3zM1955 321l-2 -1l1 -2l2 -1l0 3zM2548 308l2 -3l3 1l1 2l-5 1zM2657 307l-2 0l-2 -3l3 -2l2 1zM2578 210l1 2l-2 3l-2 -2l1 -2zM2449 300l2 2l-1 3l-3 2l-1 -5zM2680 211l4 -3l4 3l-2 5l-6 -2zM1986 579l-3 0l0 -6l1 -2l4 4zM2490 689l1 -3l3 -2l3 4l-4 3zM2479 758l0 3l-3 1l-1 -3l2 -1zM2379 679l-3 -1l0 -2l3 -1l2 3zM2357 564l0 2l-1 3l-2 -1l0 -3zM2396 233l1 -4l3 -3l3 1l-1 4zM2449 242l1 -1l2 -1l1 2l-2 2zM2509 225l-2 1l-2 -1l-1 -2l5 0zM1968 771l-1 -4l1 -2l3 0l0 6zM1958 678l-4 -3l-1 -9l8 -1l3 6zM2423 560l-3 2l-3 -2l-1 -4l6 0zM2460 685l-2 2l-2 -1l1 -3l2 1zM2046 654l-2 0l-2 -4l2 -1l3 3zM2251 370l0 -2l2 -1l1 2l-1 1zM2629 408l1 -1l2 1l0 2l-3 0zM1929 735l0 2l-2 2l-2 -1l1 -3zM2670 754l2 0l2 1l-2 2l-1 -1zM1970 742l-2 -1l-1 -6l3 -1l3 3zM2684 279l1 2l-2 3l-2 -3l0 -2zM2490 222l-2 -2l-1 -2l2 -2l1 4zM2491 281l1 -3l4 -1l-1 2l-3 3zM2066 695l3 1l0 4l-2 0l-2 -3zM2447 338l-3 4l-5 0l-1 -2l7 -3zM2483 559l-1 1l-2 -2l0 -1l2 -1zM2012 324l-1 -1l1 -3l2 1l0 2zM2016 644l3 3l-1 3l-3 0l-1 -3zM1990 367l-2 1l-2 -2l1 -2l3 1zM2457 232l2 3l-1 2l-2 0l-1 -2zM2271 221l-3 -1l-2 -5l3 -1l3 2zM2485 369l1 2l1 3l-2 0l-2 -3zM2157 247l-1 1l-1 -1l0 -2l1 0zM2081 711l3 0l7 2l-2 4l-6 -1zM2172 371l-3 2l-2 -2l0 -2l4 0zM2569 253l-2 5l-4 4l-4 -2l5 -7zM1950 251l-1 -1l1 -4l2 1l0 2zM2453 728l2 3l-3 1l-1 -1l0 -2zM2222 545l-2 -3l1 -3l2 0l2 4zM2168 631l3 -1l5 2l0 3l-5 -2zM1994 369l-1 5l-8 3l0 -3l5 -6zM1990 316l0 2l-2 2l-2 -2l2 -2zM2596 309l1 3l-2 2l-3 -1l0 -3zM2236 556l-4 -1l-3 -4l1 -2l5 3zM2251 677l0 -2l2 -1l2 3l-1 1zM1960 193l0 -2l3 -1l1 0l0 3zM2264 728l1 -2l0 0l1 1l-1 1zM2617 390l0 -3l2 -1l1 0l-1 3zM2526 270l1 -4l3 -1l1 2l-2 3zM2576 707l1 3l-2 2l-4 -1l1 -5zM2093 538l2 0l1 1l0 2l-2 -1zM2054 560l3 1l-1 5l-2 -1l-1 -3zM2198 639l-3 4l-5 1l0 -3l5 -3zM2074 632l0 8l-4 3l-4 0l4 -7zM2351 305l-1 3l-1 1l-3 -1l1 -3zM2381 245l1 2l-1 4l-3 -1l1 -3zM2514 287l1 -2l3 -1l1 1l-1 2zM2530 629l0 -2l2 -3l1 1l0 3zM2386 349l2 0l2 2l-1 1l-2 -1zM2460 753l2 2l2 6l-2 1l-4 -5zM2224 536l-2 2l-3 -1l1 -3l4 0zM2662 331l-3 -2l1 -5l3 -1l3 5zM2095 375l-1 -2l3 -3l2 2l-1 2zM2608 737l1 0l1 3l-1 0l-1 -1zM2107 324l3 -1l1 2l-1 2l-2 -1zM2326 218l-2 6l-7 4l-1 -5l4 -6zM2529 369l0 -3l2 -3l2 2l-1 3zM2658 301l-4 2l-6 -3l1 -6l6 0zM1961 733l-1 -3l5 -5l1 3l-1 4zM1937 593l2 0l3 4l-1 2l-4 -2zM2367 239l-2 -1l0 -1l1 -1l2 2zM2327 574l-2 2l-1 0l-1 -1l2 -1zM2055 566l-2 -2l1 -3l2 0l1 2zM1966 284l1 -1l2 0l1 0l-2 2zM2312 359l0 3l-6 4l-3 -2l3 -4zM2132 388l-2 -4l5 -4l2 1l-1 7zM1939 578l2 2l-1 7l-4 0l-1 -5zM2519 630l-1 -6l5 -7l8 4l-4 7zM2321 681l0 -2l4 -3l0 2l-2 3zM2257 724l-2 0l0 -4l2 0l1 3zM2388 606l-1 0l-2 -2l1 -1l2 1zM2398 373l0 2l-3 0l0 -2l1 -1zM2435 579l2 -1l2 1l-1 1l-1 0zM2201 315l-3 0l-1 -5l2 0l3 4zM1972 203l3 5l-2 5l-4 -1l0 -5zM2300 277l5 0l7 5l-3 3l-7 -3zM2303 298l0 2l-3 1l-1 -2l2 -1zM2049 650l-1 3l-3 2l-2 -2l4 -3zM2043 651l-3 2l-6 -2l1 -4l6 1zM2010 289l3 0l2 3l-2 2l-3 -2zM2368 773l2 -2l4 0l0 3l-3 1zM2431 612l-2 0l-2 -2l2 -2l2 2zM2348 200l-1 2l-3 1l-1 -3l2 -1zM2113 198l0 1l-1 1l-1 0l1 -3zM2441 331l-2 1l-1 -2l1 -1l2 1zM2023 249l-2 2l-6 2l-1 -3l5 -3zM2276 288l1 0l3 2l-3 3l-3 -2zM1943 585l2 4l-3 4l-4 -2l2 -5zM2068 766l-2 -2l-1 -4l4 1l0 3zM2136 245l-5 -1l-1 -5l2 -1l3 2zM2645 567l3 1l2 1l-2 2l-2 -2zM2257 253l0 3l-3 0l0 -2l2 -2zM2069 405l1 -7l6 -8l3 1l-4 11zM2475 262l0 3l-4 4l-1 -3l2 -3zM2641 755l-2 1l-4 -3l1 -2l4 1zM2288 579l0 -3l9 -6l3 1l-5 9zM2674 331l0 3l-4 1l-1 -2l2 -3zM2022 637l-2 0l-1 -5l1 -2l3 3zM2153 560l3 8l-2 7l-2 1l-2 -11zM2385 727l3 2l0 4l-2 0l-2 -3zM1942 337l3 -1l4 5l-1 2l-4 -2zM2183 268l0 -3l3 -2l1 1l-2 4zM2704 207l-5 -2l-4 -9l4 -2l5 8zM2350 220l2 2l0 2l-3 0l-1 -3zM2707 392l-1 5l-7 4l-3 -6l4 -2zM2225 187l0 2l-4 1l-1 -1l4 -3zM2474 290l-3 -10l3 -8l7 3l-2 11zM2086 599l4 3l0 3l-3 1l-2 -4zM2658 221l-3 -1l0 -4l2 0l2 2zM2562 620l5 -2l5 2l-2 4l-6 -1zM2187 564l-1 -4l1 -3l3 2l0 4zM2074 596l-5 5l-5 -2l-3 -6l9 -3zM2681 631l2 1l0 4l-2 -1l-2 -1zM2626 636l-3 3l-3 2l-2 -3l3 -2zM2493 197l-4 2l-2 -6l2 -1l3 3zM2216 207l-3 1l-2 -5l1 -2l5 3zM2456 742l-3 -2l0 -3l2 0l2 2zM2379 315l2 2l-2 3l-2 -1l1 -3zM2374 711l-1 -2l1 -3l2 0l0 4zM2560 628l-1 -1l1 -2l1 0l1 1zM2679 381l2 -1l2 0l0 4l-3 -1zM2197 357l-2 -4l1 -2l4 0l0 3zM2498 651l0 4l-4 1l-2 -2l3 -3zM2489 627l-9 -2l-3 -3l2 -6l7 2zM2614 692l3 0l2 3l-3 2l-2 -2zM1990 652l-1 0l-1 -2l1 -1l2 1zM1992 291l1 -1l2 0l1 2l-3 0zM2583 228l-3 1l-1 -3l3 -1l1 2zM2629 650l-2 0l-1 -2l2 -1l2 1zM2452 665l2 5l-3 3l-5 0l1 -6zM1980 545l4 3l-2 2l-4 -1l0 -4zM2400 761l-3 0l-3 -2l1 -2l3 2zM2091 628l2 4l-2 3l-3 -1l0 -4zM2639 372l-3 0l-1 -3l1 -2l3 3zM2478 714l-1 2l-2 0l-1 -1l2 -1zM2370 757l2 2l0 1l-2 0l-1 -1zM2139 409l-2 3l-4 2l-2 -2l5 -4zM2215 341l2 1l-1 3l-1 0l-1 -2zM2400 591l-2 0l1 -4l2 0l0 3zM2230 319l1 -1l3 0l-1 2l-2 0zM2041 344l3 4l-2 3l-5 -1l0 -4zM2520 234l-1 2l-2 0l-1 -1l2 -2zM2107 615l0 -1l2 -1l1 1l-1 2zM2381 249l6 -2l2 2l-1 4l-5 -1zM1981 317l3 1l0 1l-1 2l-2 -2zM2197 747l-4 1l-3 -4l2 -2l4 1zM2304 535l-4 1l-4 -6l3 -2l4 1zM2594 385l1 0l2 2l-1 1l-2 -2zM2291 287l-1 0l-1 -2l0 0l2 0zM2481 705l-2 4l-3 2l-1 -4l2 -1zM2320 377l2 1l0 7l-2 1l-2 -7zM1966 674l0 -2l3 -1l0 1l-1 2zM2683 280l-3 0l-1 -5l3 0l2 3zM2490 704l2 0l3 2l-1 2l-4 -1zM2628 209l-1 2l-4 2l-1 -2l3 -3zM2220 632l-1 1l-3 0l0 -2l2 -1zM2539 253l-3 0l-2 -2l0 -3l4 2zM2187 723l-1 3l-3 -2l0 -2l3 0zM2044 611l3 -1l3 2l-1 2l-4 -2zM2318 342l-4 -6l4 -6l4 2l1 7zM2656 727l2 1l1 5l-2 1l-2 -5zM2030 581l0 2l-2 1l-1 -1l1 -2zM2505 717l-3 -4l3 -4l3 2l-1 4zM2357 722l-4 1l-3 -3l3 -1l3 1zM1949 337l0 -2l2 -2l2 2l-2 2zM2429 241l2 1l1 2l-2 1l-2 -2zM2423 320l-1 1l-2 0l-1 -2l2 -1zM2660 200l-2 0l-3 -3l1 -1l3 1zM2344 403l0 -2l2 -3l2 2l-1 2zM2553 354l-1 -3l1 -1l2 0l0 3zM2153 671l4 3l2 5l-2 4l-5 -8zM1975 565l-1 3l-3 0l-1 -1l2 -3zM2435 611l0 2l-2 0l-2 -1l3 -2zM2320 292l-1 4l-3 0l-1 -2l3 -3zM1969 705l-1 3l-4 1l-2 -3l4 -1zM2192 759l0 -4l4 -2l2 1l-2 3zM2073 283l0 -3l2 -2l2 2l-1 2zM2695 753l2 -2l7 4l-2 3l-5 -1zM2327 283l-1 3l-4 -1l0 -2l3 -1zM2024 387l-1 1l-1 -4l2 1l1 1zM2369 355l-1 -1l1 -2l1 0l1 3zM2480 374l-5 5l-11 -7l-2 -4l13 2zM2391 407l3 -1l1 1l-1 1l-2 0zM2614 246l1 -3l6 -2l2 2l-4 4zM2101 388l-1 -2l2 -3l2 1l-1 3zM2561 610l-2 1l-2 -1l1 -2l3 0zM1983 353l2 2l-1 4l-2 0l-1 -3zM2359 307l1 2l0 1l-2 0l0 -2zM2294 365l-2 -2l0 -3l2 -1l1 4zM2062 581l5 3l-3 4l-2 1l-2 -5zM2361 372l3 -1l2 2l-2 2l-3 -1zM1966 598l-4 -1l-1 -3l3 -2l2 1zM2654 262l6 0l7 7l-3 6l-8 -5zM2695 332l4 0l0 3l-1 2l-3 -2zM2434 345l2 0l2 3l-2 1l-2 -1zM2157 758l3 2l0 5l-4 0l-1 -4zM2083 615l2 3l1 3l-3 0l-2 -3zM2323 369l-2 -4l2 -4l3 3l-1 3zM2354 294l-5 -6l3 -8l4 1l3 11zM1988 204l-3 -3l1 -4l4 0l0 3zM2663 727l2 0l1 3l-1 1l-2 -1zM2330 314l0 1l-2 -1l0 -1l3 0zM2324 661l1 2l0 1l-2 0l0 -2zM2495 592l2 1l1 2l-1 1l-3 -3zM2130 359l-1 2l-2 0l-1 -2l2 -1zM1971 738l0 1l-3 0l0 -1l1 -1zM2593 581l-1 -3l3 0l0 1l-1 2zM2293 712l3 0l2 2l-2 2l-4 -2zM2346 715l1 2l-1 1l-1 0l0 -2zM2148 644l2 1l-1 5l-3 -1l0 -3zM2439 752l-1 3l-3 1l-3 -2l4 -3zM2572 291l-1 2l-4 0l-1 -1l4 -2zM2196 263l-1 0l0 -3l1 0l2 1zM2065 731l-4 3l-4 -3l0 -4l5 0zM2547 681l0 -2l2 -1l1 1l-1 2zM2090 394l-2 3l-4 -1l0 -1l3 -2zM2501 339l-5 -5l4 -7l8 0l-3 9zM2028 608l-1 2l-2 -1l0 -1l2 -1zM2398 669l2 -1l2 0l0 1l-1 1zM2689 334l2 -1l2 2l-1 1l-2 0zM2392 410l-4 0l-1 -2l1 -3l3 1zM1998 380l-1 0l-2 -2l2 -1l1 2zM2219 764l4 0l1 4l-1 2l-4 -3zM2490 348l4 2l-1 3l-2 1l-2 -4zM2111 595l-3 -1l-2 -5l3 0l2 4zM2385 551l2 -2l2 0l0 1l-2 1zM2140 401l2 2l0 1l-2 1l-1 -3zM2368 190l0 3l-2 2l-1 -1l0 -3zM2357 713l1 -5l7 -2l1 5l-5 4zM2372 358l2 1l0 2l-3 0l0 -2zM2703 408l-2 0l-2 -2l2 -2l2 2zM2229 393l-1 0l-1 -2l2 0l1 1zM2408 618l-3 0l-2 -3l1 -1l3 2zM2446 391l4 -2l8 3l-4 3l-3 0zM2215 764l6 -5l8 -1l-1 3l-6 5zM2482 254l-1 -6l3 0l4 1l-1 3zM2245 190l1 -2l3 -2l-1 3l0 1zM2242 602l6 0l1 5l-3 2l-4 -3zM2462 378l-2 6l-4 2l-1 -4l3 -4zM2486 393l1 2l-1 1l-1 -1l0 -2zM2381 768l-1 1l-1 -2l0 -1l2 1zM2078 683l4 4l-4 6l-4 -1l2 -7zM2652 405l3 0l3 2l-1 1l-3 -1zM2238 583l-2 1l-3 -3l1 -1l3 1zM2341 318l5 0l0 1l-1 4l-4 -2zM2582 229l-3 1l-1 -3l1 -1l2 1zM2699 264l-1 1l-1 0l-1 -2l1 -1zM2307 693l-3 -3l1 -4l2 0l1 3zM2009 248l0 2l-2 1l-1 -2l1 -1zM2219 186l-2 6l-6 4l-1 -3l1 -5zM2492 329l1 1l-1 2l-2 -1l1 -1zM2456 235l3 -2l3 3l-1 1l-3 1zM2172 655l-2 2l-4 0l0 -1l3 -2zM2437 232l-4 1l-2 -2l1 -3l4 2zM2701 361l-3 2l-3 -1l0 -3l4 1zM2665 628l0 -3l2 -2l3 1l-2 4zM2061 563l0 1l-2 2l-1 -2l2 -3zM2127 335l2 -1l0 2l0 1l-2 -1zM2270 545l-2 1l-1 -1l0 -1l2 0zM2467 287l1 -5l9 0l1 4l-6 3zM2579 692l5 4l-3 4l-5 0l0 -5zM2323 336l1 0l-2 3l-2 -1l1 -2zM2335 281l-2 2l-4 -3l1 -1l4 0zM2342 238l-2 -1l-2 -3l2 -1l2 2zM2275 649l4 -2l5 -1l1 4l-6 3zM2100 346l-2 2l-3 1l0 -2l3 -2zM2117 349l-1 -1l0 -3l2 0l0 2zM2647 402l1 -1l4 0l0 2l-4 1zM2684 382l2 1l0 2l-1 0l-2 -2zM2130 615l-3 -4l0 -8l3 1l2 5zM2481 636l3 -2l3 0l0 3l-3 1zM2488 409l0 -1l1 -2l1 0l0 2zM2637 605l0 1l-1 1l-2 0l2 -2zM1948 552l1 4l-6 3l-2 -3l2 -5zM2099 375l-1 -1l0 -1l1 0l1 0zM2664 720l-1 -5l4 -11l8 5l-4 9zM2657 671l0 5l-3 5l-2 -1l1 -8zM2419 748l2 1l0 4l-1 1l-2 -3zM2525 317l2 2l0 2l-1 1l-2 -3zM2590 354l-1 -1l0 -2l2 1l0 2zM1928 391l-2 2l-4 -2l2 -3l3 0zM2313 324l-1 2l-3 0l-1 -2l2 -1zM1988 337l-3 -1l1 -3l2 0l1 2zM2442 285l3 -1l2 2l0 2l-4 0zM2228 306l4 -3l3 1l0 2l-3 2zM2193 658l-2 -1l0 -3l2 1l0 2zM2293 678l-3 -1l-2 -2l2 -2l2 2zM2576 257l-1 6l-4 2l-2 -3l5 -5zM2265 240l3 2l1 6l-3 1l-4 -7zM2569 348l3 1l2 3l-2 2l-4 -2zM2353 572l-1 5l-6 1l-3 -4l7 -4zM1947 747l-1 -2l1 -3l1 1l1 1zM2368 270l1 -1l2 1l-1 2l-2 -1zM2476 197l2 -1l4 4l-1 3l-5 -4zM2540 312l-3 2l-2 -1l0 -2l3 0zM2270 232l1 -1l3 0l-1 2l-2 0zM2654 244l0 2l-2 1l-2 -1l2 -2zM2433 292l0 5l-5 3l-3 -6l5 -3zM2580 765l-3 1l-2 -1l2 -1l1 -1zM2199 732l-2 4l-3 0l-1 -5l2 -1zM2241 395l1 3l-2 3l-2 0l0 -5zM2004 411l1 1l1 3l-2 1l-2 -3zM2293 231l-3 -1l2 -3l2 1l0 2zM2559 693l-2 2l-2 -1l0 -1l1 -2zM2212 680l3 1l2 2l-1 2l-4 -2zM2473 690l-5 -3l-2 -7l3 -4l5 6zM2384 721l-1 -5l3 -5l4 3l0 6zM2112 543l1 2l-3 1l-1 -1l1 -3zM2408 745l2 1l1 2l-2 1l-2 -1zM2128 532l1 2l0 1l-1 1l-1 -2zM2150 659l2 1l1 2l-3 1l-1 -2zM2535 646l4 0l3 2l-2 4l-3 -2zM2458 584l0 2l-2 2l-2 -2l2 -2zM2305 557l-3 2l-4 -1l0 -5l7 2zM2128 242l-6 -4l-2 -8l5 0l5 5zM2492 550l1 -2l2 0l1 3l-3 0zM2497 212l-2 6l-6 3l-1 -5l5 -3zM2162 334l0 -2l3 -3l2 1l-1 3zM2389 534l2 0l2 2l-1 2l-3 -1zM2124 616l-1 0l-2 -1l1 -1l2 0zM2498 349l-3 0l-5 -3l3 -2l3 1zM2690 760l1 -2l2 0l1 1l-2 1zM2408 302l-1 3l-4 2l-1 -3l3 -2zM2481 263l-2 0l-1 -1l2 -2l1 1zM2045 716l-5 -3l0 -4l4 -2l4 2zM2284 355l3 4l-3 7l-9 -1l2 -7zM1970 769l-1 3l-7 3l-1 -3l3 -5zM2019 338l3 3l-1 3l-1 2l-3 -4zM2532 401l-3 1l-2 0l0 -3l2 -1zM2025 738l3 -2l3 1l-1 2l-3 0zM2691 363l2 0l1 2l-2 1l-1 -1zM2325 678l-1 -1l1 -5l2 -1l1 4zM2094 300l-2 2l-1 -1l1 -2l1 0zM2453 224l-1 -2l0 -1l2 -1l0 2zM2262 233l-3 -2l1 -3l2 1l1 3zM2108 666l3 -1l7 2l-1 3l-6 -1zM2392 188l-3 2l-2 0l0 -4l3 0zM2291 710l4 3l0 3l-2 3l-2 -6zM2534 566l-2 -2l2 -4l2 1l0 3zM2163 327l0 2l-3 2l0 -2l1 -1zM2123 558l1 -1l3 1l0 1l-3 0zM2691 274l-3 2l-3 -3l2 -3l4 1zM2637 585l1 2l-1 2l-2 -1l0 -3zM2036 548l-1 -4l2 -2l3 0l-1 5zM2520 743l-2 -1l3 -4l2 1l-1 5zM2146 208l-1 2l-3 1l1 -2l1 -1zM2187 292l2 -1l2 5l-3 1l-2 -3zM2233 338l-1 2l-3 0l1 -2l1 -1zM2112 364l1 -1l3 1l-1 2l-2 0zM2598 309l-4 -7l11 -17l5 5l-3 16zM2631 696l2 -2l5 2l-2 3l-4 0zM2141 325l3 -1l4 4l-1 1l-5 -1zM2389 338l-3 3l-7 -4l2 -3l6 1zM2193 331l1 -2l6 -1l-1 3l-4 2zM2379 297l-4 -3l3 -6l3 -3l1 8zM2616 594l1 -1l2 2l-1 1l-2 -1zM2237 630l-2 3l-2 -1l0 -4l1 0zM2657 386l0 2l-3 1l-1 -2l1 -1zM2147 539l-2 -1l-1 -3l1 -2l3 1zM2401 334l-1 -1l-1 -2l3 -1l1 3zM2135 618l3 -2l2 1l0 3l-3 0zM2487 355l2 1l-1 2l-2 1l0 -3zM2233 277l-3 1l-3 -3l3 -2l2 1zM1995 745l-4 4l-5 0l1 -4l5 -2zM2432 714l1 2l-4 3l-2 -1l3 -5zM2181 705l4 -4l7 3l2 4l-10 0zM2210 565l1 0l2 1l-1 2l-3 -1zM2328 336l-2 -4l6 -3l4 3l-3 5zM2317 570l-4 -2l-1 -4l1 -3l4 3zM2241 583l-5 0l-1 -3l1 -4l5 5zM2703 681l0 3l-2 0l-1 0l1 -3zM2635 342l-4 0l-2 -4l2 -1l4 3zM2564 220l-2 1l-2 -2l1 -2l3 0zM2463 331l2 -1l2 1l0 1l-3 0zM2015 639l-2 -3l1 -4l3 1l0 4zM2438 660l0 3l-3 3l-3 -1l1 -5zM2380 187l3 2l-1 5l-3 0l0 -4zM2561 614l1 -4l5 1l0 2l-5 2z"/>
<path fill="rgb(222,211,191)" d="M2410 716l-1 -3l1 -1l2 0l0 3zM2398 212l2 -2l2 0l1 2l-2 1zM2326 688l-5 0l-4 -3l1 -4l6 2zM2129 744l4 -2l6 3l-2 3l-4 1zM2620 284l-1 -1l0 -4l2 -1l2 4zM2429 605l1 4l-6 6l-2 -3l3 -4zM2419 336l2 0l1 2l-2 2l-1 -1zM2353 304l-1 0l-1 -2l1 -1l2 2zM2120 288l-3 2l-2 -1l0 -3l3 1zM2387 215l3 0l3 3l-1 2l-5 -1zM2271 317l2 1l-1 2l-1 -1l0 -1zM2418 589l-1 -3l4 -5l3 1l-3 6zM2066 367l-2 3l-3 -1l-1 -2l5 -1zM2297 723l1 1l-1 2l-1 1l-1 -4zM2313 323l-4 1l-2 -2l1 -3l3 1zM1980 261l3 2l-1 3l-3 1l-1 -3zM2065 374l2 2l-1 3l-2 0l-1 -4zM2694 386l3 1l3 3l-4 2l-3 -2zM2469 682l1 -3l2 -1l2 1l-2 3zM2118 360l-1 2l-2 1l-1 -4l2 -1zM2309 379l2 -1l3 0l1 2l-4 1zM2416 662l3 0l1 1l-2 2l-2 -1zM2305 588l-1 -1l0 -2l1 0l1 1zM2359 562l-2 -2l3 -4l2 1l0 3zM2320 714l-3 1l-2 -1l0 -2l4 0zM1990 706l2 0l2 2l-2 1l-2 -1zM2254 766l-2 -4l0 -7l3 2l2 4zM2231 296l-3 0l0 -3l3 -1l1 3zM2460 590l3 4l-2 1l-3 1l0 -3zM2654 261l-1 -2l4 -2l2 2l-2 3zM2244 692l1 1l-2 7l-2 -2l1 -5zM2152 303l-1 -1l2 -3l1 1l1 2zM2208 383l-4 0l-2 -3l1 -1l4 0zM2237 632l2 2l-1 3l-2 0l-1 -4zM2613 321l1 1l1 4l-1 0l-2 -3zM2359 677l-1 1l-3 0l-1 -3l2 -1zM2151 288l-3 -5l4 -7l3 2l0 6zM2341 551l2 0l2 3l-2 3l-3 -4zM2123 260l-2 -3l-1 -3l2 0l1 2zM2564 216l-1 1l-1 -1l0 -2l2 1zM1987 731l-3 1l-2 -2l0 -3l4 1zM2492 598l2 1l-1 4l-2 0l0 -3zM2130 190l2 0l2 1l-1 2l-2 -1zM2005 385l-3 2l-3 -1l1 -3l2 0zM1982 201l0 -3l4 -5l2 2l-2 4zM2544 607l1 1l0 3l-2 1l-1 -3zM2493 314l-2 -2l2 -3l2 1l0 3zM2496 675l-1 -2l1 -3l2 0l0 2zM2470 265l1 -2l4 1l-1 3l-3 -1zM2629 557l6 4l1 9l-8 1l-2 -7zM2307 393l-1 1l-3 0l0 -2l3 0zM2630 260l1 -3l4 0l-1 2l-2 1zM2044 669l1 -4l4 -2l1 4l-2 2zM2073 601l2 -1l3 2l-1 2l-4 -1zM2298 555l6 1l3 7l-4 3l-4 -6zM2129 570l2 -1l3 1l0 2l-4 0zM2591 270l-1 -1l3 -4l1 1l-1 3zM2002 220l-3 -1l0 -2l1 -1l2 2zM2565 632l0 -3l4 -2l2 2l-3 4zM2020 193l-1 3l-4 0l-1 -2l5 -2zM2340 337l-3 -4l3 -3l3 1l-1 4zM2472 592l3 2l0 2l-1 1l-2 -2zM1949 279l-3 -3l1 -3l5 -1l1 4zM2459 398l2 -2l5 0l0 4l-5 0zM2688 642l2 -3l4 0l0 3l-5 1zM2060 271l-2 0l-2 -3l2 -1l3 2zM2276 289l2 2l1 2l-2 1l-2 -2zM2152 633l1 0l1 2l-1 1l-1 -1zM2139 363l-1 4l-8 1l-3 -4l8 -6zM2534 657l0 -2l2 -2l1 2l-2 2zM2449 307l-2 -1l1 -1l1 0l1 1zM2412 389l-3 0l-1 -2l3 -2l1 2zM1995 658l3 1l0 2l-2 2l-1 -2zM2625 283l-2 0l-2 -4l2 -1l3 3zM2292 370l-4 2l-4 -2l1 -2l5 0zM2127 357l2 -1l2 2l0 1l-3 1zM1931 215l-1 -1l1 -2l1 0l0 2zM2663 585l-1 4l-4 7l-2 -1l0 -6zM2219 238l1 7l-3 7l-3 -1l-1 -7zM2388 376l1 -2l4 0l0 2l-4 2zM2629 299l-3 -2l0 -4l3 -2l2 3zM2153 649l-1 2l-5 6l-4 -3l4 -4zM2564 322l-4 2l-1 -4l2 -2l3 2zM2028 613l6 -1l3 4l-1 4l-5 -3zM2590 596l-1 2l-4 1l-3 -1l3 -3zM2214 361l3 -4l6 -2l2 4l-7 4zM2443 630l-1 -4l1 -4l3 1l1 4zM2182 623l-1 0l-1 -2l1 0l2 0zM2065 669l-3 1l-3 -2l1 -2l3 0zM2225 739l1 2l0 1l-1 0l-1 -2zM2081 332l0 2l-2 1l-2 -1l2 -2zM2529 280l0 -3l2 0l1 2l-2 1zM2215 563l-5 -2l-2 -6l3 -4l5 6zM2297 254l-1 -4l3 -2l3 3l0 3zM1990 359l1 2l1 3l-2 0l-1 -3zM2636 337l1 -1l2 0l0 1l-1 1zM2574 682l1 -4l2 -1l2 2l-1 2zM2557 386l1 1l0 2l-1 1l-1 -2zM2121 745l3 -1l3 3l-2 3l-3 -1zM2082 761l3 -3l5 2l-1 2l-6 1zM2586 651l-1 -2l3 -1l1 1l-1 3zM2240 600l0 -4l3 -2l1 2l-2 4zM2470 671l-4 0l-1 -2l1 -3l4 3zM2452 362l-3 -1l1 -5l3 0l1 5zM1984 338l-3 -1l0 -3l3 -1l2 2zM2107 555l3 0l1 4l-1 0l-3 -2zM2119 764l1 -5l3 -2l3 3l-1 3zM2395 645l0 0l2 0l0 2l-2 0zM2106 271l0 3l-3 0l-2 -2l2 -2zM2321 693l4 2l-1 4l-2 0l-3 -3zM2179 357l-1 -3l3 -5l2 1l0 5zM2238 722l2 -2l3 -2l2 2l-3 3zM2506 282l2 3l-1 3l-2 -2l0 -3zM1971 692l1 2l-4 4l-1 -3l-1 -2zM2185 550l3 2l0 2l-2 1l-2 -3zM2395 576l3 0l2 2l-1 1l-3 -1zM2481 203l1 -2l2 0l1 2l-2 1zM2248 537l-1 2l-3 0l0 -3l2 -2zM2276 762l0 2l-1 1l-2 -1l2 -2zM2308 559l1 1l2 4l-1 1l-3 -4zM2554 764l1 -3l7 -1l1 3l-5 3zM2650 583l-3 -1l-1 -5l5 0l2 3zM2667 358l-3 0l-2 -5l2 -2l2 2zM1997 728l1 -2l3 -1l1 3l-2 1zM2124 769l-1 3l-5 2l-2 -3l5 -3zM2257 339l2 3l-2 5l-2 -1l0 -5zM2448 595l-2 -5l5 -5l4 5l-2 3zM2690 631l-1 -1l1 -3l3 0l0 4zM2484 399l0 -1l5 1l-1 1l-3 1zM2551 639l-4 1l-2 -3l4 -4l3 4zM2336 381l2 0l1 3l-2 0l-1 -2zM1984 698l-1 -3l1 -2l3 0l0 3zM2202 208l-1 2l-3 -1l0 -1l2 -1zM2350 238l-2 -2l1 -4l3 2l0 3zM2366 251l-5 2l-7 -4l2 -4l5 0zM2066 689l-4 1l-6 -3l2 -3l5 1zM2442 570l3 -2l4 2l0 3l-5 -1zM2648 708l4 -1l4 3l0 4l-7 -2zM2240 384l-2 -3l2 -3l5 0l-1 4zM2297 768l-5 1l-1 -2l0 -5l7 3zM2154 559l1 1l-1 3l-2 -1l0 -3zM2183 306l3 0l3 3l-3 3l-4 -3zM2041 763l-2 0l-2 -1l1 -2l2 0zM2568 396l1 1l-1 3l-2 -1l1 -2zM2033 697l2 7l-6 4l-3 -4l3 -7zM2005 555l-2 -3l2 -5l2 2l1 4zM1970 548l4 -5l5 2l0 4l-8 2zM2231 222l5 -2l4 2l-1 2l-4 0zM2117 728l-2 3l-4 0l-1 -3l3 -2zM2210 726l4 0l4 3l-1 2l-5 0zM2004 333l-3 2l-3 0l0 -3l4 0zM2562 735l3 0l0 3l-2 0l-1 -1zM1974 734l2 -1l4 1l-1 2l-2 0zM2642 394l1 5l-4 3l-2 -1l1 -6zM2197 279l-2 1l-2 -3l2 -1l3 1zM2231 224l1 2l-5 8l-2 -4l1 -4zM2092 563l3 1l1 3l-2 1l-3 -2zM2617 323l2 0l1 1l-1 1l-1 0zM2509 397l2 -2l3 0l1 1l-4 2zM2518 773l-1 2l-2 0l-2 -1l4 -1zM1982 262l-1 -3l2 -2l2 0l-1 4zM2034 384l-2 2l-7 -4l4 -4l4 1zM2071 233l6 2l3 4l-3 4l-4 -4zM2246 633l2 -3l3 -1l2 2l-3 4zM2191 598l2 -1l3 2l-1 1l-2 0zM2177 546l1 4l-1 3l-4 -2l2 -3zM2423 712l-5 1l-6 -3l1 -5l9 1zM2299 220l-5 5l-10 -1l-1 -3l10 -3zM1942 280l-3 -1l-1 -6l2 0l3 6zM1938 644l4 0l2 1l-1 2l-3 -1zM2226 191l-2 -1l0 -2l1 0l1 1zM2622 620l-2 1l-2 -1l-1 -1l3 0zM2426 386l-1 2l-2 -1l0 -1l2 -1zM2218 698l-1 3l-1 2l-2 -1l1 -3zM2016 303l-4 -2l0 -6l3 0l2 4zM2162 614l-3 4l-3 1l-2 -4l4 -2zM2415 534l2 4l0 5l-4 0l-1 -7zM2032 704l-1 1l-2 1l-1 -2l3 -1zM2412 391l2 -1l3 1l0 3l-4 -1zM2201 691l-2 0l-1 -4l1 -1l3 1zM2093 239l-3 -3l0 -3l3 -1l1 5zM2229 731l0 -1l4 0l0 2l-2 0zM1991 690l-4 0l-2 -5l2 -1l4 3zM1962 185l1 4l-3 4l-2 -1l0 -5zM2540 763l1 -3l5 2l-1 2l-4 0zM2245 404l5 3l1 5l-5 1l-3 -7zM2424 393l2 -6l11 0l1 10l-5 3zM2255 690l5 0l2 6l-5 2l-3 -2zM2189 619l-2 3l-4 -1l0 -4l4 0zM2663 694l-4 1l-1 -7l3 0l4 4zM2043 207l-1 -3l6 -3l0 4l-1 3zM2506 632l-1 -3l6 -5l2 3l-3 4zM1992 652l1 -1l3 -1l0 1l-2 1zM2334 340l3 2l-1 3l-2 0l-1 -3zM2571 589l-4 2l-2 -1l0 -2l5 0zM2301 742l0 -2l3 -3l3 1l-2 4zM2383 209l0 -3l3 -1l3 1l-1 4zM1996 388l-3 5l-8 1l-5 -9l13 -5zM1924 643l4 2l3 7l-4 0l-3 -2zM2312 350l-4 -1l-3 -5l2 -3l5 3zM2532 758l-2 1l-2 -1l0 -2l2 -1zM2164 366l-1 2l-5 1l0 -3l3 -1zM2554 666l-2 -1l0 -3l2 -1l1 1zM2296 546l0 1l-1 1l-1 -1l0 -1zM2118 324l4 2l-1 3l-2 1l-2 -3zM2488 594l-1 -5l4 -2l2 4l-3 4zM2394 690l2 -1l1 5l-2 2l-4 -4zM2007 343l0 2l-2 1l0 -1l1 -2zM2564 318l2 3l-1 5l-2 1l-1 -6zM2384 769l4 0l3 5l-1 2l-4 -3zM2610 549l5 -9l6 -1l3 5l-7 7zM2571 283l-2 2l-1 0l-2 -1l2 -2zM2076 603l1 1l1 5l-2 1l-1 -4zM2109 551l0 5l-3 2l-4 -1l2 -5zM2404 688l3 1l2 1l0 3l-3 -1zM2693 701l-2 -1l-1 -1l0 -1l3 1zM2496 554l0 3l-4 1l-1 -2l2 -2zM2402 187l-6 6l-6 -1l-1 -5l5 -2zM2087 641l-4 2l-3 -2l1 -3l4 1zM2478 348l-2 0l-1 -2l2 -1l2 1zM2672 403l4 1l4 5l-3 3l-5 -2zM2289 582l3 -3l3 0l0 3l-4 1zM2217 668l-1 -3l6 -3l3 4l-3 4zM2046 295l-3 -1l-1 -3l3 0l2 3zM1999 714l3 2l0 4l-2 2l-3 -6zM2150 298l3 0l1 4l-3 1l-2 -2zM2250 308l-1 1l-5 -1l1 -3l3 0zM2107 277l0 -5l11 -1l-3 6l-5 1zM2390 541l0 6l-5 2l-1 -3l1 -3zM2009 723l-4 -3l-2 -5l5 -1l1 4zM2387 217l-2 1l-2 -1l0 -1l2 0zM1972 647l3 -2l3 1l0 2l-4 1zM2114 608l1 -2l3 0l0 1l-2 2zM2447 309l-3 -1l-4 -5l4 -2l3 2zM2050 318l3 -1l1 2l-1 2l-2 -1zM2094 285l7 1l5 4l-2 5l-8 -4zM2554 601l-6 -3l0 -5l3 -2l5 7zM2565 757l1 -4l4 -3l1 4l-2 2zM2218 336l-4 -3l-1 -6l3 -1l3 4zM2668 595l-2 1l-2 0l-1 -1l3 -1zM2562 241l-3 -2l1 -5l2 0l2 3zM2078 631l2 -1l2 0l0 2l-2 0zM2685 255l1 -1l2 0l0 2l-1 0zM2194 549l-2 -2l0 -2l2 -1l0 4zM2564 606l0 -1l3 -2l0 1l-1 2zM2335 219l1 -2l3 2l0 2l-3 0zM2203 368l4 1l2 3l-3 3l-3 -2zM2216 410l-4 -2l-1 -3l3 -2l3 3zM1949 640l1 -4l6 -6l4 4l-5 6zM2288 260l4 2l1 3l-3 2l-3 -4zM2631 700l3 0l5 2l-2 4l-4 0zM2649 406l-3 3l-3 -1l-2 -1l5 -3zM2353 274l6 9l-4 13l-3 -4l-2 -12zM2078 648l-2 2l-2 -1l0 -2l3 -1zM2331 646l1 -2l2 0l1 1l-2 1zM2085 634l-1 2l-2 -1l1 -1l1 0zM2157 703l1 2l0 3l-2 -1l0 -3zM2601 346l3 -1l2 3l0 2l-4 -3zM2700 246l1 -1l2 3l-1 1l-3 -2zM2270 654l-3 4l-3 -1l-1 -3l3 -1zM2199 332l-4 -1l0 -6l3 -1l4 5zM1974 709l-3 3l-8 0l0 -2l6 -3zM2504 600l2 -1l1 1l0 2l-2 -1zM2307 648l2 0l2 1l-1 2l-3 0zM2299 767l1 -2l2 0l1 1l-2 2zM2036 261l1 -2l3 -1l0 1l-2 2zM2289 754l2 -2l4 -1l2 3l-4 2zM2158 595l0 4l-2 2l-4 -1l2 -5zM2157 729l0 3l-1 1l-2 -1l1 -3zM2156 360l2 -2l3 1l-1 1l-3 0zM1968 402l-2 -2l0 -2l2 0l0 2zM2450 401l-2 -1l-1 -2l1 -1l2 1zM2526 743l5 -4l8 -2l2 5l-8 5zM2683 610l1 -1l2 0l0 2l-2 0zM2629 559l-1 1l-2 1l0 -2l1 -1zM2613 365l1 -4l4 -1l1 2l-2 4zM1979 759l-1 0l-2 0l0 -2l3 0zM2623 406l0 -4l4 -2l1 2l-3 4zM2366 349l-2 2l-2 0l0 -2l2 -2zM2452 234l0 2l-2 0l-2 -2l3 -2zM1983 416l-11 5l-12 -3l-5 -9l21 -2zM2621 250l2 0l3 4l-2 1l-3 -2zM2119 339l1 3l-3 3l-2 -1l2 -3zM1994 297l-2 0l0 -2l2 -1l0 3zM1988 244l-3 -2l1 -2l2 -1l1 3zM2332 641l-5 2l-5 -1l2 -4l3 -1zM2393 312l-2 3l-4 0l2 -3l2 -1zM2589 231l-1 1l-2 -1l0 -1l3 0zM2101 639l-2 4l-3 3l-2 -2l2 -4zM2258 337l2 0l3 1l0 2l-4 0zM2456 678l-2 1l-1 -3l1 0l2 0zM2221 268l3 -1l3 4l-2 1l-3 -1zM2084 604l2 3l-1 2l-2 0l-1 -3zM2111 367l-3 -1l2 -4l3 -1l0 4zM2405 270l6 -4l8 4l0 3l-10 0zM2488 675l-3 -2l-2 -4l4 0l2 2zM2281 680l0 -1l4 -2l1 1l-3 3zM2279 589l-2 1l-2 0l0 -1l2 -1zM1926 642l1 2l-4 3l-2 -1l1 -3zM2404 739l-4 2l-2 -5l3 -4l4 4zM2627 190l3 1l2 3l-2 2l-4 -2zM1983 188l1 5l-3 2l-2 -2l0 -2zM1988 665l-3 -1l0 -8l2 1l2 5zM2072 715l-1 -1l0 -2l2 1l0 1zM2357 682l1 2l-2 2l-1 -2l0 -1zM2183 252l-3 -6l1 -6l4 2l1 6zM2028 329l3 5l0 5l-5 -1l-3 -4zM2653 730l0 3l-1 1l-1 -2l1 -1zM1985 290l-3 3l-2 -1l-2 -3l5 0zM2339 257l5 1l2 2l-1 2l-5 -2zM2101 578l-1 -2l1 -3l2 0l0 4zM2271 243l4 1l1 3l-2 1l-2 -1zM2673 369l0 3l-4 2l0 -3l1 -2zM2035 347l-6 1l-3 -4l1 -3l5 2zM2106 770l-1 2l-2 -1l1 -1l1 -1zM2304 376l-1 4l-2 1l-3 0l3 -4zM2548 611l2 2l0 5l-3 -1l-1 -2zM2143 303l-1 2l-3 2l-2 -2l2 -2zM2487 743l2 7l-4 4l-3 -3l1 -5zM2659 325l0 3l-1 1l-2 0l1 -3zM1939 726l-1 -5l5 -4l4 3l-2 5zM2651 717l0 -2l1 -3l2 0l0 3zM2407 547l3 -1l3 1l0 2l-3 0zM2668 652l-3 2l-4 0l0 -4l4 -1zM2548 714l1 -1l2 1l0 2l-2 -1zM2503 692l2 -2l7 -1l-1 3l-5 1zM2455 566l-4 -2l0 -4l2 0l2 4zM2243 190l2 1l2 2l-1 1l-3 -2zM2235 686l2 3l-3 5l-3 -1l1 -5zM2376 310l-2 -1l-1 -1l1 -1l2 1zM2099 316l3 2l-1 3l-3 0l0 -3zM1923 752l2 -1l5 1l0 4l-3 -1zM2655 375l0 -2l2 -1l0 2l-1 1zM2519 582l0 -4l4 -2l0 2l-1 3zM2385 193l0 8l-7 6l-4 -7l8 -7zM2254 409l3 3l0 3l-3 2l-2 -4zM2469 256l0 2l-2 1l-2 -1l2 -2zM2105 323l-2 1l-3 -2l0 -2l3 -1zM2295 258l2 2l-2 5l-3 0l1 -4zM2144 687l-1 1l-4 -1l1 -2l2 0zM2672 318l-3 0l-1 -4l2 0l2 1zM2645 226l-1 -3l2 -2l2 0l0 3zM2453 646l-3 -13l6 -8l11 3l-2 13zM2670 595l4 1l0 2l-2 1l-2 -1zM2437 767l1 3l-1 1l-3 0l0 -3zM2028 270l4 2l2 4l-3 1l-3 -3zM1945 327l1 -2l3 -1l3 3l-6 4zM1928 292l-1 -2l-1 -3l2 1l1 2zM2575 585l6 0l4 3l-3 4l-7 -2zM2162 207l1 -1l5 -2l1 3l-3 2zM2362 234l1 2l-3 4l-4 -2l1 -2zM2142 571l-5 -4l2 -4l2 -2l3 7zM2398 234l-2 -2l0 -2l3 1l1 2zM2459 564l2 -2l4 -1l1 1l-3 3zM2230 365l-1 4l-2 3l-2 0l2 -6zM2210 184l0 2l-2 4l-3 -3l2 -3zM2600 537l2 -2l2 1l1 2l-3 1zM2695 277l0 -3l2 -2l2 2l-2 2zM2681 222l-2 2l-4 -2l1 -2l3 0zM2072 323l-1 4l-2 3l-4 -2l4 -4zM2591 711l-2 6l-2 0l-2 -1l2 -3zM2002 240l-3 5l-7 -1l-1 -2l7 -5zM2248 280l0 2l-1 0l-1 0l1 -2zM2339 220l-4 -3l-3 -8l2 -3l5 7zM2470 744l2 -1l3 3l-2 2l-2 -1zM2275 696l2 2l-1 2l-1 0l-1 -3zM2174 231l-3 -7l3 -5l7 1l-1 7zM2164 704l-4 3l-6 -1l1 -3l5 -1zM2698 666l-1 -2l3 -2l1 1l-1 2zM2699 388l0 2l-2 1l-1 -2l2 -2zM2607 565l1 -3l3 -3l2 2l-2 4zM2227 357l3 0l1 1l-1 2l-3 -1zM1997 275l0 5l-4 2l-4 -1l2 -5zM1929 568l2 3l0 5l-3 0l-3 -4zM2349 243l-1 -2l3 -3l3 2l-1 3zM2234 214l-2 0l0 -3l2 0l1 2zM2561 281l-1 -3l2 -3l1 1l0 3zM2451 610l-1 2l-3 0l-1 -1l3 -2zM2693 572l2 -1l1 1l0 1l-2 1zM2221 221l7 2l2 5l-3 2l-5 -4zM2108 564l5 -2l1 2l-1 4l-4 -2zM2011 384l6 -2l7 1l-1 8l-6 -1zM2365 313l-3 0l-1 -4l2 -2l3 3zM2592 324l-2 2l-3 -1l0 -2l3 0zM2207 672l-1 -3l5 -5l1 4l-2 3zM2027 733l-3 2l-8 1l0 -4l4 -1zM2678 699l-3 1l-2 -1l1 -2l3 1zM1943 283l0 2l-4 -1l0 -2l1 -1zM2027 670l1 2l-1 4l-2 -1l0 -3zM2152 396l2 -1l4 0l-1 2l-3 1zM2087 552l-3 -1l0 -2l1 -1l2 1zM2419 615l-1 1l-6 1l1 -4l2 -1zM2470 674l-1 -1l-3 -3l2 -2l2 2zM2535 343l3 -4l7 3l0 5l-10 -1zM1949 402l0 -1l1 -3l2 1l-1 2zM2600 696l3 -1l4 3l-3 2l-3 -2zM2542 674l1 -1l2 0l0 2l-2 0zM2012 772l-6 2l-11 0l2 -3l12 -4zM2044 265l0 2l-5 2l-1 -2l3 -3zM2038 569l-2 4l-3 3l-4 -4l5 -5zM2468 332l-3 -1l-2 -3l3 -1l3 1zM2556 283l3 -1l2 2l-1 1l-3 1zM2042 758l0 1l-1 3l-1 -1l0 -2zM1992 219l-2 4l-5 0l-1 -3l4 -2zM2590 297l0 5l-2 4l-5 -2l2 -6zM2555 242l-3 0l-3 -4l2 -3l5 2zM2700 254l5 -1l2 3l-3 2l-3 0zM2492 309l3 1l-1 4l-2 0l-2 -2zM2149 761l-2 0l-1 -4l2 0l1 2zM2493 306l0 -1l3 1l0 1l-1 1zM2223 264l3 3l1 7l-5 1l-1 -9zM2573 407l-1 1l-1 -2l0 -1l2 1zM2195 700l5 3l2 5l-5 0l-3 -3zM2487 217l-2 -1l0 -2l2 0l1 2zM2305 237l2 -1l1 1l-1 2l-1 -1zM2189 342l4 1l1 2l-2 1l-3 -2zM2597 771l3 -3l6 -2l0 4l-5 3zM2227 667l2 -2l5 1l-1 3l-4 0zM1950 734l2 -2l4 0l0 3l-3 1zM2542 266l-1 4l-3 1l-3 -2l3 -3zM2604 567l2 5l-3 3l-3 0l1 -4zM2385 764l-1 -2l1 -2l1 1l1 2zM2593 256l0 -3l3 -2l1 1l-1 5zM2449 226l3 6l-5 7l-5 -2l-1 -8zM2038 240l2 1l-1 3l-3 -1l0 -2zM1962 377l1 -3l7 -3l0 5l-2 2zM2378 353l-1 2l-3 1l0 -1l2 -3zM2453 566l-4 1l-3 -3l1 -3l5 3zM2685 644l-2 -3l1 -3l4 -1l-1 5zM2562 677l1 -2l4 -2l1 3l-3 2zM2109 404l1 3l-4 2l-2 -1l1 -4zM2110 611l0 -3l3 -2l2 0l-2 5zM2069 627l1 3l-3 2l-3 -2l1 -3zM2039 655l2 -1l3 3l-1 2l-4 -2zM1962 385l0 -1l2 -1l1 2l-2 1zM2276 261l-2 0l-2 -1l0 -2l3 1zM2178 565l-2 -1l-2 -1l1 -1l2 1zM2612 369l-2 4l-3 -1l0 -3l3 -1zM2083 350l6 -5l17 5l-3 8l-16 0zM2225 301l-2 -3l2 -4l5 -1l-1 6zM2296 403l0 3l-1 0l-2 -1l1 -2zM2310 729l-5 -5l-1 -4l3 -2l4 5zM2223 756l-5 7l-12 0l-1 -5l10 -6zM2279 723l2 6l-6 3l-3 -1l2 -6zM2368 190l-2 1l-2 -2l1 -1l1 0zM2022 351l2 -1l4 1l-2 2l-2 1zM2400 271l3 -2l2 3l-2 2l-2 0zM2327 711l2 1l1 4l-2 0l-2 -2zM2556 716l1 1l-2 2l-1 -1l1 -2zM2571 571l2 0l-1 2l-1 0l-1 -1zM2226 606l3 1l1 4l-2 0l-2 -1zM2031 389l0 -4l1 -3l3 1l-1 5zM2104 261l-1 1l-4 -1l1 -2l3 0zM1978 312l-2 3l-3 1l-2 -2l3 -3zM2423 276l1 1l-1 1l-2 1l1 -3zM2651 415l-3 0l-1 -4l1 -1l3 3zM2504 356l-4 1l-2 0l0 -4l5 0zM1938 278l-3 3l-8 -4l1 -5l7 1zM2509 258l-3 1l-2 -1l0 -3l4 0zM2195 725l2 -4l3 2l2 3l-4 3zM2213 730l2 4l-2 3l-2 0l-1 -4zM2049 541l2 -1l4 1l0 2l-3 0zM2249 412l-1 0l0 -3l1 0l1 2zM2605 709l-1 -2l2 -1l1 1l0 2zM2231 285l-4 5l-4 -1l-2 -4l6 -4zM2647 302l-2 1l-2 -1l1 -1l1 -1zM2671 696l0 -3l3 0l1 2l-2 2zM2526 377l1 -2l3 1l0 2l-3 0zM2097 576l2 -1l2 1l0 2l-3 0zM2051 614l1 -1l2 1l-1 1l-1 0zM2679 674l-2 1l-2 -2l0 -1l3 0zM2614 626l-5 -3l-1 -5l2 -3l4 5zM1927 591l-2 0l-2 -2l2 -2l2 2zM2446 301l-6 -5l0 -8l5 0l3 7zM2389 339l-2 3l-3 1l0 -2l2 -2zM2572 394l-3 2l-1 -1l0 -2l4 0zM2563 642l-2 -2l0 -2l3 0l0 3zM2173 739l1 -3l3 -1l2 2l-4 3zM2052 239l-1 3l-4 -1l-1 -3l3 -1zM2705 251l0 2l-3 2l-2 -1l3 -4zM2043 251l0 3l-5 1l-2 -3l4 -2zM2083 634l2 -1l1 1l0 2l-2 0zM2274 351l-1 -1l-1 -3l2 0l1 2zM2468 327l-2 -2l0 -5l2 0l1 3zM2517 708l4 -1l3 3l-2 3l-3 -3zM2508 299l-2 0l-1 -1l-1 -2l3 1zM2114 388l-3 4l-7 0l-2 -4l8 -2zM2508 615l4 3l-1 3l-2 1l-3 -4zM2247 237l-1 -4l4 -2l3 1l-1 4zM2115 613l1 2l0 4l-1 1l-2 -3zM2674 741l-3 3l-4 -1l1 -4l4 0zM1960 570l-5 1l-4 -5l4 -3l5 1zM2231 205l2 2l0 2l-2 0l-2 -2zM2645 347l-1 3l-2 0l-2 -1l3 -3zM2607 715l-1 -5l4 -3l4 2l-2 6zM2579 398l1 -1l3 -1l1 1l-3 2zM2616 401l4 -1l4 3l0 3l-6 -1zM2121 669l-2 4l-3 -1l0 -2l3 -1zM2381 753l2 -1l4 0l1 3l-3 1zM2550 192l3 -2l3 1l1 2l-5 1zM2551 217l2 -1l3 3l-1 2l-3 -2zM2113 294l-1 2l-4 -3l1 -2l3 1zM1951 198l-1 -3l3 -6l4 2l-1 6zM2332 647l-2 1l-1 -3l1 -2l2 2zM2494 267l-1 -2l2 -2l3 0l-1 5zM2367 186l2 1l-1 2l-2 0l-1 -2zM2228 774l-2 0l-2 -4l1 -1l2 2zM2043 310l-1 3l-3 1l0 -3l2 -2zM2683 226l0 -3l2 -2l2 2l-2 3zM2632 742l-3 0l-1 -2l1 -2l2 2zM2622 559l-1 -1l2 -3l1 1l0 3zM2056 533l3 -1l2 3l-1 1l-4 1zM2272 672l-2 -3l1 -3l2 2l1 2zM2616 361l9 5l1 8l-5 3l-8 -8zM2353 680l1 -3l4 0l0 3l-3 1zM2448 696l-3 -2l-1 -5l5 -1l1 4zM2385 348l2 2l-1 1l-2 0l0 -2zM1928 249l-3 0l0 -4l3 -2l1 4zM2049 546l0 -1l2 -3l2 0l-1 4zM2613 386l-1 -5l1 -3l3 1l0 5zM2371 670l-1 -3l2 -2l2 1l0 2zM2110 619l3 2l0 3l-1 1l-2 -4zM2371 392l0 1l-2 1l-1 -1l1 -1zM2182 235l3 0l2 2l-2 2l-3 -2zM1932 543l3 1l0 3l-2 2l-1 -4zM2439 609l5 -3l5 1l0 3l-7 1zM2544 226l7 1l2 3l-1 4l-7 -4zM2322 746l3 4l1 3l-3 3l-2 -5zM2105 740l0 2l-3 1l-2 -1l2 -2zM2117 575l-2 1l-1 -3l0 -2l2 2zM2312 668l-3 1l-2 -4l2 -3l3 1zM2641 686l2 -2l5 0l0 2l-3 1zM2390 340l1 0l4 3l-2 1l-3 -2zM2198 208l1 1l-2 4l-2 -1l1 -3zM1930 602l-1 -2l2 -2l2 1l-1 2zM2446 715l-2 9l-6 3l-2 -3l3 -7zM2040 591l-2 2l-5 -1l2 -3l3 0zM2509 641l-2 -2l-1 -3l3 -1l2 3zM2415 571l-3 -1l1 -3l2 0l1 2zM2472 227l2 1l-2 3l-2 0l-1 -2zM2568 636l2 2l-1 2l-3 1l1 -4zM2100 187l-1 7l-5 0l-2 -4l4 -5zM1951 289l-1 1l-2 -1l-1 -2l4 1zM2295 669l-2 -2l3 -2l1 1l-1 2zM2074 380l-2 1l-2 0l-1 -2l2 -2zM2001 667l-4 -1l-1 -1l1 -2l2 1zM2365 634l-4 4l-4 -3l1 -3l3 0zM2012 193l-3 1l-4 -3l2 -1l4 1zM2009 581l0 9l-11 6l-5 -7l6 -7zM2397 701l0 3l-2 1l-2 -1l2 -3zM2234 352l1 2l-2 1l-2 -1l1 -1zM2169 265l2 -2l1 1l0 2l-2 0zM2206 701l-3 1l-2 -3l2 -1l2 0zM2343 689l3 6l-3 8l-3 -1l-3 -6zM2185 686l1 -2l4 1l-1 3l-2 0zM2488 760l2 3l0 3l-4 0l-1 -2zM2511 613l-9 1l-5 -3l5 -7l6 2zM2696 649l1 2l0 3l-3 0l0 -3zM2105 696l-2 2l-3 -1l1 -2l3 0zM2317 757l3 4l0 3l-6 0l-1 -3zM2696 579l-1 6l-4 4l-1 -4l2 -3zM2704 618l-3 1l-3 -1l0 -3l2 -1zM2227 592l2 2l-1 4l-2 -1l0 -3zM2594 283l5 -2l4 2l-1 5l-4 -1zM2609 620l1 -3l3 0l1 1l-2 2zM2096 334l-1 -1l0 -2l2 0l0 2zM2096 200l4 -2l2 2l0 2l-3 1zM2035 584l-2 -2l0 -4l1 -2l3 6zM2029 387l4 0l2 6l-1 2l-5 -4zM2131 410l2 2l0 2l-2 1l-2 -3zM2196 549l-1 1l-2 -1l0 -2l3 1zM2137 550l4 0l2 4l0 2l-4 -2zM2577 370l-4 -3l0 -3l3 -2l3 5zM2027 297l1 -3l4 -4l3 3l-3 4zM2270 761l-2 -1l1 -3l2 0l0 3zM2468 243l-2 1l-1 -2l1 -1l1 0zM2693 701l3 -1l4 1l1 3l-5 0zM2661 678l1 -6l6 -1l4 4l-6 5zM1971 583l3 2l4 8l-5 2l-4 -8zM2639 643l5 -4l4 3l-1 4l-3 1zM1929 194l0 -1l3 -1l0 1l-1 1zM2247 342l-2 1l-3 -1l1 -2l2 0zM2599 707l-4 -1l-3 -5l4 -1l4 2zM2098 309l-2 1l-2 -3l1 -2l3 2zM2185 247l3 -2l4 1l-2 4l-4 1zM2214 725l3 5l-3 4l-3 -2l1 -5zM2010 365l0 2l-3 1l-1 -1l2 -2zM2341 744l-1 -1l-1 -4l3 -1l1 3zM2550 556l-5 1l-3 -3l2 -4l6 3zM2179 245l2 -5l3 -1l3 3l-3 4zM2003 359l2 0l1 2l-1 0l-2 0zM2175 763l4 0l5 3l-2 3l-7 -3zM2536 604l3 0l2 2l-1 1l-4 -2zM2476 710l0 -2l4 0l0 1l-4 2zM2107 677l0 -5l5 -3l3 2l-5 6zM2686 580l-1 2l-5 -1l2 -4l3 0zM2426 760l0 -2l2 -2l1 1l-1 2zM2328 281l-2 -2l0 -2l1 0l2 1zM2585 676l2 0l2 1l-1 1l-2 -1zM2285 262l3 0l1 2l-1 1l-2 -1zM2368 280l3 -3l5 -1l0 4l-3 1zM2199 627l2 3l0 2l-1 2l-2 -5zM2074 694l3 1l1 3l-4 0l-1 -1zM2346 718l-3 7l-7 2l-4 -3l6 -7zM2357 678l2 2l-3 4l-2 -2l1 -2zM2061 769l2 0l1 3l-2 0l-2 -1zM2366 616l-5 1l-2 -4l2 -4l5 2zM2096 660l-1 -4l1 -5l3 2l0 5zM2367 310l-2 -2l1 -3l1 0l1 4zM2262 709l3 0l1 5l-3 0l-1 -1zM2576 548l-2 1l-5 -2l1 -3l4 1zM2271 244l3 2l0 4l-3 1l-3 -5zM1937 720l-3 -3l0 -8l2 -2l4 9zM1998 386l-2 2l-2 1l-1 -3l2 -1zM2358 283l1 -2l6 -1l-1 3l-2 2zM2687 416l3 -3l3 0l1 3l-5 0zM2389 651l4 -1l5 5l-1 2l-7 -1zM2518 693l1 0l4 2l-2 4l-3 -1zM2698 698l-3 1l-3 -4l3 -3l4 3zM2553 228l-3 0l-2 0l0 -2l3 0zM2330 259l-3 0l-1 -1l2 -2l2 1zM2535 213l3 -1l2 0l-1 3l-2 0zM2174 555l1 2l-1 2l-3 1l0 -4zM2125 679l-3 -1l0 -3l2 -1l1 3zM2409 272l-2 -2l2 -3l2 1l1 2zM2524 724l2 0l3 3l-2 2l-2 -2zM2028 720l-2 0l-3 -3l1 -2l3 2zM2307 315l-4 0l-3 -4l3 -2l3 2zM1931 350l-1 -3l2 -2l1 1l1 2zM2119 688l-2 2l-1 1l-1 -2l2 -1zM2585 308l0 2l-2 0l-2 -1l2 -2zM2599 207l-2 3l-3 -1l-1 -4l5 -1zM2334 364l-2 -1l2 -4l2 2l0 1zM2516 764l2 3l-2 2l-2 2l0 -6zM1976 585l2 -6l6 -3l3 0l-3 8zM2336 723l1 -1l2 1l0 2l-2 0zM2637 601l-2 2l-4 0l0 -3l3 -1zM2159 377l-2 -2l2 -5l4 -1l1 6zM2374 665l-1 1l-2 -1l0 -1l1 0zM2652 576l0 2l-2 1l-1 -1l1 -2zM2512 675l-1 3l-2 -1l0 -1l2 -1zM2161 217l-3 -1l-3 -5l3 0l4 2zM2074 777l-1 -6l2 -6l4 1l0 6zM2530 388l2 1l0 3l-3 0l0 -4zM2548 548l-1 3l-4 0l-1 -1l3 -3zM2342 297l-2 0l-1 -2l2 -1l1 2zM2083 368l4 1l1 6l-2 1l-4 -5zM2677 596l-1 2l-4 -1l0 -2l3 0zM2252 757l-1 1l-1 0l0 -1l1 -1zM2268 279l0 2l-4 3l-1 -2l1 -3zM2400 736l-3 0l-4 -3l1 -3l3 2zM2089 414l0 -2l1 -2l2 2l-1 1zM1929 194l0 4l-3 4l-3 -2l3 -5zM1995 755l-1 2l-4 -2l1 -2l2 0zM2453 744l3 0l1 2l-2 3l-2 -3zM2533 304l-2 3l-1 0l-2 -2l2 -2zM2128 631l1 -4l3 -2l2 2l-2 4zM2203 697l1 -1l3 -1l1 1l-3 2zM2470 310l-1 2l-1 1l-1 -1l1 -2zM2619 248l-3 -3l-1 -6l6 0l1 3zM2615 706l-1 1l-3 1l-1 -1l3 -3zM2130 597l1 -4l3 0l2 1l-3 4zM1930 755l0 -2l3 0l0 1l-1 2zM2141 647l-5 0l-3 -5l3 -4l5 6zM2283 645l1 -3l0 -2l2 0l0 3zM2547 279l0 4l-3 2l-2 -2l3 -4zM1936 769l-1 -3l2 -2l1 1l0 3zM2014 416l1 -3l4 -2l1 2l-2 3zM2016 307l3 -1l1 2l-1 2l-2 0zM2469 348l2 1l1 3l-3 2l-1 -2zM2287 620l3 -2l3 2l-2 1l-4 0zM2537 257l-1 2l-3 2l-2 -2l3 -2zM2594 261l1 3l0 3l-3 -1l-1 -4zM2429 720l-3 -2l0 -2l2 -1l2 2zM2658 660l1 -3l4 -1l4 3l-5 4zM2036 194l-2 0l-3 -3l1 -3l3 3zM2505 259l-2 2l-2 -4l1 -1l4 1zM2145 623l2 -1l3 1l0 3l-3 0zM1991 623l2 4l-1 2l-2 0l-1 -4zM2656 203l2 2l-2 4l-2 0l0 -5zM2654 643l-4 0l-1 -1l0 -3l3 1zM2389 654l1 -2l1 0l1 1l-2 2zM1939 659l2 1l-1 3l-1 1l-1 -4zM2443 323l-1 2l-4 2l-1 -3l3 -2zM2038 397l4 -2l3 2l2 3l-6 1zM2313 714l-3 -1l1 -2l1 -1l2 2zM2467 541l-3 0l0 -2l2 -1l1 1zM2211 647l-1 0l0 -2l1 -1l1 2zM2509 705l4 2l-3 6l-3 -2l0 -5zM2312 395l1 3l-2 3l-1 -2l0 -3zM2421 708l-4 1l-4 -3l1 -3l5 2zM2034 702l-4 0l-6 -7l1 -4l10 7zM2350 739l3 5l-3 4l-5 -1l0 -5zM2496 733l4 2l-1 9l-5 0l-1 -7zM2524 346l2 0l1 3l0 1l-3 -2zM2573 576l-2 4l-7 1l-1 -3l7 -4zM2633 244l2 0l1 2l-1 2l-3 -2zM2598 670l3 4l-1 7l-5 0l0 -7zM2049 669l1 -2l3 1l0 4l-4 -1zM2460 543l-3 1l-3 -3l0 -2l5 1zM2003 703l-2 0l-5 -4l3 -3l4 3zM2518 762l7 3l3 4l-1 4l-9 -5zM2024 406l3 2l0 3l-2 0l-2 -3zM2117 558l2 -1l0 2l0 1l-3 -1zM2194 621l-1 4l-5 1l0 -3l2 -2zM1939 657l4 -1l4 2l-2 3l-5 0zM2401 657l-2 1l-4 -4l4 -3l2 3zM2696 628l0 2l-2 1l0 -1l0 -2zM2229 604l-2 -1l0 -1l2 -1l1 2zM2295 285l-1 0l-3 -3l2 -1l3 1zM2266 660l-4 -1l-2 -4l1 -3l4 4zM2292 570l0 3l-4 2l-1 -3l4 -4zM2499 634l-3 -1l-1 -7l4 0l4 4zM2284 191l2 -1l2 0l0 2l-2 0zM2327 239l1 2l-1 1l-2 -1l0 -1zM2677 699l-5 -4l0 -5l2 -4l4 8zM2304 319l0 -3l2 -3l2 3l-3 2zM2387 392l2 -2l2 1l1 2l-3 0zM2062 764l1 -2l3 2l-1 2l-3 -1zM2479 625l-3 -2l-2 -4l3 -2l3 4zM2095 227l-2 -2l5 -4l2 1l-2 4zM2083 766l-3 -2l-1 -6l5 1l2 4zM2249 417l-1 -3l1 -2l2 0l0 2zM2073 666l7 -2l5 8l-6 4l-4 -3zM2058 541l3 1l1 2l-3 3l-3 -2zM2157 344l0 -2l2 -1l1 1l-2 3zM2612 257l2 -3l6 -1l0 3l-4 1zM2459 699l-2 6l-6 2l-2 -4l7 -5zM2687 281l4 2l0 4l-2 1l-2 -4zM2368 380l-1 2l-3 2l-1 -2l2 -2zM1942 313l-2 1l-6 -1l2 -2l3 -1zM2158 635l-1 -3l1 -3l2 -1l1 4zM2020 753l2 1l0 2l-2 0l-1 -1zM2010 613l-2 2l-4 -4l1 -1l4 1zM2101 320l1 -4l4 -2l1 1l-3 5zM2096 574l-1 2l-2 -1l1 -2l1 0zM2291 406l2 0l2 1l-1 2l-2 -1zM2513 732l-5 -4l2 -9l5 -4l4 10zM2170 555l-2 -1l-2 -4l3 -2l4 4zM1922 597l-1 -2l0 -4l2 1l1 2zM2378 355l2 2l0 4l-2 -1l-1 -3zM2174 548l0 -2l1 0l1 1l0 2zM2115 367l-4 3l-5 -2l2 -3l3 0zM2580 281l6 2l2 4l-4 2l-3 -3zM2175 711l3 2l0 2l-1 0l-2 -2zM2154 685l1 -1l2 -1l0 2l-1 1zM2639 638l2 2l-1 6l-4 -2l0 -4zM2322 640l-2 0l-1 -1l1 -1l1 0zM2661 396l4 0l3 7l-4 3l-4 -6zM2198 358l8 4l4 18l-7 7l-10 -16zM2195 212l1 -2l6 0l-1 3l-3 1zM2480 310l1 0l2 1l-1 2l-2 -1zM1931 577l1 7l-1 7l-6 -2l0 -6zM1944 343l-5 -1l0 -6l3 -3l4 5zM2465 245l-1 2l-4 -1l1 -2l3 -1zM2337 246l-3 -3l1 -4l2 0l1 5zM2040 301l1 -2l2 0l0 2l-2 1zM2130 622l3 3l0 5l-2 0l-2 -4zM2439 549l-3 -3l0 -2l3 0l1 3zM2069 678l0 1l0 2l-1 0l-1 -2zM2056 305l-2 0l0 -2l1 -1l2 2zM2558 654l-1 -3l3 -3l2 2l-2 4zM2049 279l-1 3l-6 2l-2 -4l4 -2zM2156 366l3 2l0 5l-3 0l-1 -4zM1965 250l2 0l1 2l-1 1l-2 -1zM2166 748l1 2l-4 2l-1 -2l2 -2zM2191 735l-1 -4l3 -2l2 1l-1 4zM2318 707l0 2l-3 1l0 -2l1 -1zM2675 736l-5 3l-3 -2l2 -5l4 1zM2097 252l-1 -2l1 -1l2 1l0 1zM2630 648l2 1l3 5l-3 1l-2 -2zM1971 768l0 -1l3 -1l0 2l-1 1zM2138 342l3 1l1 5l-2 1l-2 -2zM1980 598l1 -1l2 -1l0 1l-1 1zM2293 682l-3 -6l2 -5l5 -2l0 7zM2073 321l-5 -1l-2 -6l2 -2l5 3zM1947 215l-2 -1l-1 -3l2 -1l1 3zM2057 717l-3 -1l-1 -3l1 -1l3 3zM2506 303l-1 -3l2 -2l2 0l-1 3zM2096 777l-2 -4l1 -4l4 3l-1 3zM2603 415l1 -5l5 -3l3 3l-5 5zM2517 265l1 -3l5 -2l3 3l-5 4zM2427 322l2 -1l2 0l0 2l-3 0zM1961 580l-2 -1l-2 -5l2 -1l4 4zM2216 660l2 -2l2 -1l1 3l-2 1zM2572 384l-1 0l2 -4l2 2l-1 2zM2494 321l-1 3l-3 1l0 -2l2 -2zM2157 268l-4 -4l3 -4l2 1l2 4zM2113 264l2 -2l6 1l-1 3l-5 0zM2513 414l-1 -1l1 -2l2 1l0 1zM2080 349l4 2l1 6l-5 0l-2 -5zM2061 711l-1 2l-2 0l-1 -2l3 0zM2580 229l0 2l-1 1l-1 -1l0 -1zM2232 272l1 2l-1 2l-2 0l0 -3zM2061 205l-1 0l-1 -3l1 0l1 2zM1979 248l-2 1l-4 -5l1 -2l5 4zM2424 310l1 -2l3 -3l2 1l-3 5zM2572 413l0 0l0 3l-2 0l0 -2zM2170 558l-2 -3l0 -4l2 -1l1 4zM2573 722l-3 -2l1 -6l4 2l0 2zM2121 199l2 -3l5 -1l-1 3l-2 1zM2090 596l2 -2l4 3l-2 2l-3 -1zM1928 609l-1 -2l3 -3l3 0l-1 4zM2653 305l2 -1l2 2l-1 1l-3 -1zM2042 207l2 0l4 1l-1 3l-4 1zM2565 298l3 -1l3 1l-2 4l-2 -1zM2544 597l0 -1l1 0l1 1l-1 1zM2635 611l0 -3l3 0l2 2l-2 2zM2552 367l-2 3l-3 -1l-1 -2l3 -2zM2575 661l-4 0l0 -2l1 -3l4 2zM2352 274l-2 0l-3 -1l2 -2l3 0zM2427 236l2 1l1 2l-2 1l-1 -2zM2487 752l1 -1l2 0l0 1l-2 1zM1966 257l-3 2l-8 -4l4 -3l6 2zM2289 262l3 -2l7 0l-1 5l-6 1zM2096 631l-5 0l-3 -1l1 -4l5 2zM2689 209l-1 -1l0 -4l2 -1l1 3zM2559 313l5 1l3 4l-3 2l-5 -4zM2359 365l2 -4l4 2l0 3l-4 1zM2394 269l-1 -1l1 -2l1 0l0 1zM2306 639l0 -2l1 -2l2 2l-2 1zM2401 673l1 1l0 2l-3 -1l-1 -1zM2016 321l12 -1l7 11l-4 8l-13 -11zM2588 300l3 -3l1 1l0 3l-2 1zM1995 650l-3 -1l0 -2l1 0l2 1zM2335 649l-2 -2l-1 -3l2 0l2 2zM1996 609l-2 0l-1 -3l2 -1l2 3zM2561 391l-9 -1l-4 -8l8 -4l6 2zM2037 402l0 2l-2 3l-2 -2l1 -2zM2444 233l-1 -1l3 -2l1 1l0 2zM2248 195l-2 0l-1 -3l1 -1l2 3zM2062 296l0 2l0 2l-2 -1l0 -2zM1950 369l-5 0l-4 -5l4 -1l5 1zM2099 235l3 0l2 2l-3 2l-3 -1zM1986 719l-1 1l-3 -1l1 -2l2 1zM2202 730l-1 -3l4 -1l0 3l-1 2zM1992 334l-3 5l-6 0l-1 -3l4 -3zM2643 313l-2 0l-2 -1l2 -1l1 0zM1955 242l-4 -1l-2 -4l2 -2l4 4zM2450 569l-1 2l-3 -1l0 -2l2 -1zM2323 694l0 -1l1 -2l1 2l-1 1zM2016 279l0 3l-3 1l-1 -3l1 -2zM2497 719l-1 -3l2 -1l2 1l-1 2zM2420 366l1 4l-3 2l-2 -1l1 -4zM2111 334l0 2l-3 2l-2 -3l2 -2zM2051 334l-3 1l-3 -3l2 -1l2 1zM2064 255l4 0l1 2l-1 3l-5 -2zM2092 683l6 0l6 3l-3 3l-8 -1zM2036 360l0 -3l1 -3l4 1l-2 5zM2309 316l-2 -1l-2 -4l3 -1l2 3zM2256 628l-1 0l-4 -4l2 -1l3 2zM2118 631l-1 -2l2 -4l2 2l-1 3zM2664 639l2 1l1 3l-2 0l-1 -2zM2426 563l0 -1l2 0l0 1l-1 1zM2533 354l0 5l-3 2l-3 -1l2 -3zM2220 328l-1 2l-3 0l-1 -2l4 -1zM2552 305l-2 -3l1 -4l3 1l0 4zM1977 613l-2 1l-2 1l0 -2l3 -1zM2538 410l1 -3l5 0l0 2l-5 2zM2608 726l-1 -4l3 -8l5 3l-1 6zM2128 570l-3 3l-4 -1l0 -3l5 0zM2503 674l-1 2l-3 0l0 -2l1 -1zM2467 707l1 1l-2 3l-3 -1l2 -3zM2595 409l0 -3l4 -2l2 1l-2 4zM2033 687l-1 -2l4 -2l2 2l-2 3zM2159 314l-4 3l-3 -2l1 -2l4 0zM2079 286l0 -2l3 -1l1 1l-2 2zM2620 263l-1 -2l1 -2l2 1l1 2zM2510 318l0 -2l1 0l1 0l-1 2zM2020 588l1 -1l2 0l1 1l-2 2zM2165 274l0 -3l2 -1l0 1l-1 3zM2271 706l5 1l5 4l-3 5l-6 -3zM2418 551l1 -6l4 -2l3 1l-2 6zM2284 717l-2 -2l1 -6l3 -2l1 7zM1947 727l1 -1l2 0l1 2l-3 1zM2231 372l-3 5l-5 0l-2 -5l8 -3zM2148 370l3 0l3 3l0 2l-6 -1zM2415 647l-2 1l-2 -3l1 0l2 0zM2206 301l-2 1l-1 -2l0 -1l3 1zM2631 393l-2 -4l3 -7l3 1l-1 7zM2181 679l-3 1l-2 -2l0 -2l3 0zM1934 544l0 1l0 3l-2 -1l0 -2zM2101 694l-1 2l-1 1l-2 0l2 -3zM2581 237l0 -2l1 0l1 2l-1 0zM2153 567l-4 -3l-1 -2l1 -4l4 3zM2299 411l-2 -3l1 -1l2 -1l1 3zM2371 346l1 3l-2 3l-2 -1l1 -3zM2687 229l4 -1l3 6l-5 3l-5 -3zM2578 319l-5 -1l0 -10l4 1l4 4zM2612 712l-3 -1l0 -2l2 -1l2 2zM2547 294l-3 0l-3 -6l4 -2l3 6zM2639 282l1 3l0 1l-3 -1l1 -2zM2245 373l0 4l-2 2l-2 -1l2 -4zM2028 714l-1 -4l2 -1l1 1l0 2zM2584 610l0 -1l3 0l0 2l-2 1zM2550 402l1 1l0 2l-1 0l-1 -2zM2480 739l-4 -2l-2 -3l3 -4l4 4zM1981 621l1 1l0 2l-2 0l0 -2zM2587 616l-2 1l-3 -4l2 -2l3 3zM2099 641l-2 2l-3 -3l1 -3l3 1zM2249 304l-2 1l-2 -1l0 -2l2 1zM2337 743l-1 2l-4 0l0 -3l3 -1zM2419 705l-1 2l-6 1l0 -3l5 -1zM2587 381l2 -1l2 0l0 3l-3 1zM2558 728l3 -3l6 1l-2 2l-5 1zM2608 311l-2 -2l-1 -3l2 -2l2 4zM2358 236l-3 -3l3 -6l2 1l1 5zM2408 303l2 4l-4 4l-2 -1l1 -6zM2400 561l-2 0l-1 -2l2 -1l1 1zM1980 656l-5 -5l0 -11l5 0l6 9zM2102 542l-1 3l-3 2l-2 -2l4 -4zM2093 277l0 2l-4 1l-2 -2l3 -2zM2028 262l1 -10l10 -1l6 7l-10 9zM2422 563l0 -3l3 -1l3 2l-3 3zM2549 548l1 1l0 1l-1 1l-1 -2zM2266 630l1 4l-1 1l-3 -1l0 -2zM2138 309l-2 -1l0 -3l1 0l2 2zM2387 641l-2 -4l1 -4l3 0l0 6zM2592 199l-3 -2l0 -2l2 -2l1 2zM2313 256l0 7l-4 2l-4 -3l3 -4zM2347 612l5 -1l5 8l-2 3l-8 -5zM2058 228l4 -1l4 4l-2 3l-6 -1zM2072 718l4 5l0 5l-5 -2l-1 -5zM2438 266l1 -2l7 0l0 3l-7 2zM2527 313l-3 -2l-1 -2l3 -2l2 3zM2034 683l0 3l-2 1l-3 -2l2 -3zM2540 735l3 2l0 2l-4 2l-2 -3zM2355 554l1 2l-1 1l-2 -1l0 -1zM2342 332l2 0l1 1l-1 1l-2 -1zM2320 576l2 1l0 1l-1 1l-2 -2zM2085 678l-1 -2l0 -2l2 0l0 2zM2503 663l-3 1l-2 -1l0 -2l4 0zM2387 606l-4 1l-5 -3l0 -3l5 2zM2503 335l3 -1l2 2l0 3l-3 0zM2670 370l-1 -4l2 -7l4 3l0 5zM2365 707l0 -1l1 -1l1 1l0 1zM2234 386l-4 -2l0 -4l3 -1l2 5zM2404 680l0 5l-2 2l-3 -2l1 -4zM2681 284l-3 1l-3 -2l2 -2l2 1zM2315 675l0 2l-2 1l-2 -1l2 -3zM2566 239l2 0l3 2l-1 2l-4 -1zM2335 607l-4 4l-7 -6l3 -4l7 -2zM2341 759l-2 0l-1 -6l1 0l3 2zM2171 413l1 -3l4 0l1 2l-4 3zM2442 635l2 -1l3 1l0 1l-2 1zM2583 634l-5 1l-4 -2l3 -3l5 1zM2099 279l-1 2l-2 0l0 -2l3 0zM2076 692l0 -3l2 -2l2 1l-2 4zM2270 279l-2 5l-6 0l0 -3l3 -3zM2630 703l0 -3l5 -1l1 4l-3 1zM2333 594l-1 0l-2 -2l2 -1l1 1zM2505 724l1 -2l2 -2l2 1l-2 4zM2358 553l-3 2l-3 0l-1 -3l5 -1zM2513 353l2 2l0 3l-2 1l-2 -3zM2459 321l3 0l1 2l-1 2l-4 -2zM2096 650l-1 2l-2 0l0 -1l2 -2zM2364 371l-1 3l-2 0l-1 -3l3 -1zM2260 604l-1 -2l2 -3l2 2l-1 2zM2437 602l1 -2l2 -2l1 2l-2 3zM2285 563l0 -3l2 -5l2 1l-1 5zM2108 290l1 2l-1 1l-1 1l-1 -3zM2478 747l5 4l-1 5l-4 0l-3 -6zM1954 221l1 2l-1 2l-2 1l-1 -3zM2389 628l1 -3l2 -1l1 3l-3 2zM1956 753l-1 -2l1 -3l2 1l0 3zM2188 672l0 2l-2 1l-1 0l0 -3zM2190 249l2 -2l3 1l0 3l-2 0zM1940 554l-2 2l-4 0l-1 -4l3 -1zM1928 201l-2 -2l2 -4l2 1l1 4zM1964 643l-2 1l-2 -5l1 0l3 2zM1949 410l4 -4l3 -1l3 2l-3 4zM2351 661l2 1l-1 6l-2 -1l-1 -3zM2287 555l-1 -1l2 -2l1 1l-1 2zM2162 595l1 4l-5 3l-3 -2l3 -3zM2562 697l-2 -2l0 -2l1 -1l2 3zM2455 719l-6 4l-9 -4l3 -4l7 0zM2146 664l-2 4l-4 0l-3 -3l4 -4zM2024 405l0 -4l4 -4l2 2l-3 6zM2194 364l0 -2l2 0l0 1l-1 1zM2224 630l4 -3l6 3l0 6l-7 -2zM2201 711l2 2l1 3l-3 0l-2 -1zM2649 744l-1 -2l1 -3l1 1l0 3zM2282 724l-4 -4l3 -5l4 1l-2 5zM2361 267l2 4l-7 5l-1 -1l1 -6zM2186 588l5 -4l6 4l-1 2l-8 1zM2229 671l0 -2l1 -3l2 1l-1 3zM2485 293l-1 6l-6 4l-4 -2l6 -7zM2103 626l1 1l-3 1l-1 -1l2 -2zM2500 301l0 -3l3 -2l3 3l-1 2zM2653 599l-3 1l-3 -1l0 -1l3 -2zM2348 403l-2 -1l1 -2l2 0l1 3zM2605 605l4 0l1 6l-2 1l-4 -5zM2143 566l-2 2l-3 1l-1 -1l4 -3zM2612 229l3 0l4 3l-1 3l-5 -2zM2185 603l-3 4l-7 1l-2 -3l4 -4zM2496 309l2 0l2 2l-1 2l-3 -2zM2584 264l1 2l-2 4l-3 -1l-1 -3zM2040 242l-1 -1l0 -4l3 0l0 2zM1967 190l4 1l1 2l0 3l-4 -2zM2560 373l-3 -2l0 -2l3 -1l2 4zM2037 318l-1 2l-5 2l-1 -2l3 -2zM2025 630l-3 0l0 -5l4 -1l2 4zM2256 363l-2 3l-2 -1l0 -3l4 0zM2459 733l-2 0l-1 -2l1 -1l2 1zM1956 338l1 -1l3 -1l0 2l-2 1zM2699 284l-3 2l-2 -1l0 -2l3 0zM2620 243l5 1l0 5l-3 -1l-3 -3zM2116 345l2 2l0 1l-2 0l-1 -2zM2656 659l-4 2l-2 -2l0 -3l4 1zM2152 606l0 -3l1 0l2 1l-2 2zM2389 267l-2 -1l-1 -2l1 -1l2 1zM2687 345l1 -1l4 3l-1 1l-4 0zM2100 595l-4 -1l-1 -6l3 -1l3 5zM1992 399l1 -1l3 1l0 2l-3 0zM2695 677l0 -3l3 -3l3 2l-2 3zM2479 606l-3 0l-2 -5l2 -1l3 3zM2123 547l-5 -1l0 -2l2 -3l3 3zM1975 757l-4 1l-2 -5l3 -2l3 2zM2297 658l2 -2l3 2l1 1l-5 1zM1965 199l4 -5l4 0l1 2l-4 3zM2615 628l3 -5l9 0l1 6l-6 2zM2280 761l-3 1l-4 -2l-1 -2l5 1zM1936 366l2 3l0 4l-3 -1l-1 -3zM2153 629l0 -1l1 -2l2 1l0 2zM2155 256l4 0l2 2l-2 3l-3 -2zM2068 260l0 1l-3 2l0 -1l2 -2zM2630 323l-1 -1l0 -4l2 1l0 2zM2035 549l-4 1l-3 -1l0 -4l6 2zM2090 763l-1 1l-4 0l0 -2l2 -1zM1963 663l-2 2l-3 -1l1 -1l1 -1zM2643 678l3 -1l2 1l0 3l-3 1zM2521 377l0 -5l7 -4l3 3l-6 7zM2117 657l-3 -3l2 -5l3 2l2 4zM2623 733l4 2l-1 5l-4 0l-2 -5zM2088 710l1 1l0 2l0 1l-2 -1zM2025 548l4 -3l4 1l4 3l-6 2zM2617 544l4 1l3 4l-2 1l-4 -1zM1996 643l5 3l2 4l-3 1l-4 -3zM1923 765l2 3l0 7l-4 1l-2 -5zM2301 228l1 0l0 2l-1 1l-1 -1zM2379 381l-1 -2l6 -3l1 3l-3 3zM2252 252l-2 5l-4 0l-2 -3l5 -2zM2389 300l-3 -1l-2 -3l2 -2l4 4zM2359 340l-1 -1l-1 -2l2 -1l1 2zM1939 193l2 2l-1 5l-2 1l-2 -5zM2562 227l2 2l-1 5l-2 0l-2 -4zM1962 356l0 1l-1 2l-1 0l0 -3zM2301 386l0 -5l3 -2l2 2l0 3zM2682 571l0 2l-2 2l-2 -2l1 -2zM1960 562l-2 1l-2 -1l1 -1l1 0zM2596 400l-4 1l-9 -7l4 -3l6 0zM2631 222l2 -1l2 1l-1 1l-2 0zM1942 383l-3 0l-2 -2l3 -3l4 1zM2123 249l1 1l-4 3l-1 -1l1 -2zM2039 390l-3 -2l2 -6l2 1l1 4zM2616 396l1 -2l3 -1l1 1l-3 3zM2511 327l-1 3l-2 2l-2 -2l2 -3zM1990 281l0 0l-2 -1l0 -1l2 1zM2586 301l-2 1l-2 -3l1 -1l2 1zM2006 771l2 0l0 3l-1 1l-1 -1zM2666 386l-1 -2l2 -2l2 1l-1 3zM2351 550l-3 1l-3 -1l2 -3l3 1zM2458 621l2 2l0 2l-2 1l-1 -3zM2262 536l1 2l-1 2l-1 -1l-1 -1zM2302 767l-8 4l-5 -3l-1 -6l10 -1zM2543 653l2 1l-1 5l-2 -2l-1 -2zM2685 759l3 5l-1 4l-2 1l-3 -5zM1987 646l0 2l-1 1l-1 -1l1 -1zM2210 698l-2 1l-4 -4l2 -2l4 3zM2437 572l2 -5l4 -4l4 1l-2 6zM2204 391l-5 -2l1 -4l2 0l4 4zM2691 700l-2 0l-1 -1l2 -2l1 1zM2528 558l-2 -2l0 -2l2 0l1 2zM2411 399l-3 -4l4 -2l2 1l-1 5zM2609 746l-1 -2l0 -2l2 0l0 4zM2315 241l-1 -1l1 -3l3 0l0 3zM2362 601l1 4l-2 2l-2 -1l0 -4zM2076 673l-2 -1l-1 -4l3 -2l2 6zM2211 229l4 -1l2 2l0 3l-6 -1zM1995 742l-6 3l-4 -2l0 -3l6 -1zM1938 608l1 3l-2 2l-3 -1l2 -3zM2029 684l1 0l-1 3l-2 0l0 -3zM2205 560l-3 1l-1 -2l1 -2l3 1zM2230 338l5 -5l4 1l-1 5l-4 1zM2210 679l-2 -6l2 -4l5 2l-2 6zM2075 216l-1 -1l0 -1l1 -1l1 1zM1984 266l-1 -1l3 -2l2 2l-2 2zM2323 300l1 0l0 1l-1 1l-1 -1zM2367 595l1 -2l3 2l0 2l-3 0zM1951 263l1 0l1 2l-1 1l-1 -1zM2354 568l-3 5l-4 0l-2 -5l6 -2zM2172 554l3 2l0 3l-2 2l-2 -5zM2559 681l-1 -1l-2 -4l2 -1l2 3zM2334 216l2 -2l5 3l-2 3l-4 -1zM2337 754l-2 -2l2 -3l2 0l0 4zM2558 605l0 -3l2 0l1 1l-1 2zM2040 758l-1 -1l0 -2l2 0l0 2zM2261 745l-1 2l-3 1l0 -2l2 -2zM2283 411l0 -3l2 -1l2 0l-2 3zM1956 362l-3 0l-1 -2l1 -2l3 2zM2648 330l-1 2l-2 -1l1 -1l1 0zM2103 207l2 0l1 2l-1 1l-1 -1zM2207 397l-2 0l0 -2l1 -1l1 1zM2457 388l-1 3l-2 0l-2 -2l2 -2zM2190 622l-4 0l-2 -2l3 -2l1 1zM2623 760l-3 0l-2 -1l1 -2l3 0zM2573 187l-1 2l-2 2l-2 0l3 -4zM2387 345l-3 0l-1 -3l1 -2l3 1zM2202 219l1 -4l3 -1l2 2l-3 4zM2632 693l-4 -2l-2 -3l3 -2l5 2zM2324 402l3 0l1 2l-2 1l-1 -1zM2151 620l2 -3l3 1l1 1l-3 1zM2225 380l-1 1l-3 -2l0 -2l3 -1zM2568 296l-4 1l-6 -9l6 -1l5 3zM2192 573l-2 3l-2 1l-2 -3l2 -1zM2059 553l0 7l-5 3l-2 -2l2 -5zM2666 647l2 -2l2 2l-1 2l-2 -1zM2534 247l0 1l-2 1l0 -2l2 -1zM2379 385l0 2l-4 0l0 -3l2 -2zM2025 714l-1 2l-5 0l1 -2l2 -1zM2097 727l-1 7l-3 2l-3 -2l2 -6zM2641 236l6 -6l4 -3l5 8l-7 4zM1987 190l3 0l2 3l-2 2l-3 -2zM2637 393l-4 1l-3 -3l2 -1l3 1zM2191 774l1 -4l4 -3l3 4l-5 4zM2184 582l0 -3l2 -2l2 1l-2 2zM2246 365l1 -6l8 -1l1 3l-8 6zM1994 417l-1 -2l1 -4l3 1l0 3zM2019 725l2 -1l5 3l-1 2l-5 -1zM2633 231l2 0l2 2l-2 2l-2 -1zM2472 618l1 -1l3 3l-2 1l-2 -1zM2051 217l2 11l-6 7l-2 -5l1 -7zM2665 325l-2 1l-2 -2l0 -1l2 0zM2242 208l2 -2l3 2l-1 3l-3 -1zM1997 397l-2 -1l0 -2l2 -1l1 2zM2308 350l3 0l0 5l-3 0l-1 -4zM2136 636l1 -2l2 -1l1 1l-3 1zM2284 269l2 -3l8 0l0 5l-5 2zM1926 269l3 -1l5 2l-1 3l-4 0zM1996 614l-4 -1l-1 -4l3 -2l3 4zM2388 561l1 1l1 2l-1 2l-2 -2zM2278 233l6 0l9 4l-4 6l-9 -3zM1960 357l2 -2l3 1l0 3l-2 0zM2670 655l-2 1l-4 -3l2 -2l3 0zM2327 191l4 2l1 3l-1 3l-4 -4zM2108 590l-1 3l-6 -2l0 -3l5 -2zM2590 733l5 2l3 4l-3 2l-4 -3zM2394 361l2 2l-1 3l-2 -1l-1 -2zM2571 728l1 3l-2 2l-3 -2l0 -2zM2474 579l5 -3l4 2l0 4l-5 0zM2645 565l-6 3l-13 -15l4 -5l14 6zM2447 616l-3 4l-4 -1l-3 -5l8 -2zM2580 284l1 1l-1 3l-1 1l0 -4zM2463 360l5 3l-3 8l-5 -2l1 -5zM2470 185l0 3l-3 2l-1 -2l2 -3zM2480 569l-2 -3l2 -3l3 0l0 4zM2629 738l0 -3l2 -1l2 2l-1 1zM2040 269l-2 3l-4 1l-1 -2l3 -3zM2378 593l2 2l0 2l-2 1l-1 -3zM2289 644l2 -3l2 1l0 3l-4 1zM2070 766l-2 -4l5 -6l3 2l0 7zM2379 631l1 -1l4 0l0 2l-4 1zM2047 572l1 0l3 2l0 2l-3 -1zM2453 344l0 -1l0 -1l2 0l-1 2zM1962 222l1 -6l3 0l2 3l-3 3zM1951 675l-1 -2l1 -1l2 0l-1 2zM1936 540l-7 0l-1 -5l4 -3l4 2zM2030 328l2 -1l2 1l0 2l-2 -1zM2667 743l0 2l-2 0l0 -1l0 -1zM2550 217l-4 -3l0 -4l2 -1l2 2zM2091 286l3 4l-1 2l-4 1l-1 -4zM2568 683l-4 -2l0 -5l3 0l3 4zM2276 373l-2 -1l0 -2l0 -1l2 3zM2003 626l3 0l3 3l-1 2l-4 -2zM2672 558l-1 -1l1 -5l1 1l0 3zM2067 229l-1 2l-4 1l-1 -3l4 -1zM1983 409l5 -1l1 2l-1 2l-4 -1zM2336 547l0 3l-5 2l-2 -3l4 -2zM2267 698l-1 0l-2 -1l1 -2l2 0zM2513 199l1 4l-3 2l-2 -2l1 -2zM2404 638l1 -3l4 0l0 4l-3 1zM2000 268l0 4l-5 1l0 -4l3 -1zM2273 367l-3 1l-3 -3l2 -3l2 3zM2602 245l-5 -2l1 -7l5 0l1 6zM2318 601l2 1l0 2l-2 2l-1 -4zM2165 754l-3 1l-1 -2l0 -2l3 1zM2014 641l1 -2l5 -2l2 1l-3 4zM2512 203l5 1l-1 3l-2 4l-5 -5zM2284 764l-4 1l-3 -2l0 -4l7 2zM2230 267l0 -3l2 -2l2 1l0 3zM2240 645l1 -1l2 0l1 1l-2 1zM2043 544l-2 -2l0 -2l1 0l1 2zM2572 584l1 1l0 2l-1 1l-1 -2zM2237 244l4 2l0 5l-5 2l-1 -5zM2043 252l3 2l0 3l-3 1l-2 -4zM2392 555l-1 2l-2 0l0 -2l1 0zM2019 596l-1 2l-2 1l-1 -1l1 -2zM2335 394l0 2l-1 3l-1 0l0 -3zM2060 599l-2 0l0 -2l2 -1l1 2zM2620 753l-2 2l-4 -1l0 -4l4 -1zM2677 562l-8 2l-4 -7l4 -2l7 2zM2643 665l0 -4l3 -1l3 2l-2 3zM1997 625l3 -2l4 3l-2 4l-3 -1zM2428 237l0 -3l3 -4l1 3l-1 1zM2258 704l-8 0l-7 -2l2 -4l11 -2zM2075 695l-3 1l-3 -3l1 -3l3 1zM2038 369l2 1l1 2l-1 0l-2 -1zM2394 282l0 2l0 2l-2 -1l1 -3zM2013 728l-1 2l-1 -1l-1 -1l2 -1zM2133 358l-1 -2l3 -1l1 1l-1 2zM2345 275l-3 -3l1 -2l3 0l0 3zM2134 626l-5 -6l1 -7l2 1l3 8zM2665 337l-1 2l-4 0l0 -2l2 -2zM2497 546l-1 -2l1 -1l3 0l-1 3zM2105 648l1 -1l3 1l0 1l-3 1zM2600 639l2 3l-1 5l-2 0l-2 -4zM2701 330l-3 3l-4 -2l1 -2l5 -1zM2011 693l1 0l1 2l-1 0l-2 -1zM2615 750l-1 3l-5 -1l-1 -2l3 -1zM1977 661l1 2l0 4l-4 -1l-1 -2zM2276 324l-3 -1l-1 -2l2 -1l2 2zM2518 338l0 3l-4 1l-1 -3l2 -1zM2084 603l1 -2l3 0l0 2l-3 1zM2186 586l-4 -1l-2 -2l2 -2l3 1zM2330 568l2 -3l3 1l0 2l-3 1zM2273 203l-1 1l-1 1l-1 -1l1 -2zM2275 628l-3 -3l1 -3l2 -1l1 4zM2529 545l0 2l-2 4l-2 -2l1 -3zM2311 587l-4 2l-3 -2l1 -3l3 0zM2339 699l-2 2l-2 0l-2 -3l4 -1z"/>
<path fill="rgb(238,226,205)" d="M2352 291l1 -1l3 2l0 2l-3 0zM2073 724l-2 2l-2 -2l1 -3l3 2zM2161 283l-1 2l-3 2l-2 -2l2 -2zM2132 653l0 -2l2 0l0 1l-1 1zM1977 343l1 -2l3 -1l0 2l-2 1zM2061 560l0 3l-3 2l-2 -3l1 -2zM2636 294l2 -1l2 2l-1 3l-3 -2zM2071 237l0 2l-1 2l-1 -1l0 -2zM2003 291l4 6l-1 11l-7 -1l-3 -8zM2411 766l1 2l-1 2l-2 -1l1 -2zM2301 681l2 -1l3 0l1 3l-4 0zM2470 330l4 -3l2 1l0 4l-6 0zM2364 725l0 3l-1 2l-2 -1l1 -3zM2296 206l-2 1l-4 -1l1 -2l2 0zM2534 361l-2 0l0 -3l2 -1l0 2zM2222 590l1 1l0 3l-2 0l-1 -1zM2066 733l2 2l2 3l-3 1l-2 -3zM1970 399l3 -3l4 1l0 2l-5 1zM2646 393l2 -3l4 0l0 2l-4 2zM2678 298l0 -5l8 -3l0 4l-2 3zM2540 556l2 1l0 4l-3 1l-1 -3zM2427 619l-2 -2l2 -3l3 0l-1 5zM2387 554l-1 5l-4 0l-1 -2l2 -3zM2617 229l0 -6l4 0l1 2l-2 4zM2383 717l0 2l-3 0l-1 -2l2 -1zM2165 759l1 1l2 2l-3 1l-1 -1zM2577 401l-3 -2l1 -7l3 1l2 3zM2686 293l-4 0l-3 -3l1 -3l5 2zM1975 568l-1 -1l1 -2l1 0l0 2zM2633 387l0 1l-1 2l-1 -1l1 -2zM1973 303l1 0l2 2l-1 1l-2 0zM2379 735l-3 -1l-1 -3l2 0l1 1zM2133 384l1 2l0 2l-2 -1l-1 -2zM1964 552l-1 2l-2 1l-1 -2l2 -1zM2430 645l1 -1l1 0l0 1l-1 1zM2341 722l0 -1l1 -2l1 1l0 2zM2429 266l2 -1l2 0l1 2l-3 1zM2313 391l-2 0l-2 -1l1 -1l2 0zM2280 594l2 -1l4 1l1 3l-4 1zM2383 736l11 0l3 5l-4 9l-8 -4zM2381 291l4 -1l3 3l0 3l-5 -1zM2262 330l-3 -4l-1 -9l4 1l3 6zM2427 277l0 2l-2 3l-2 -1l1 -3zM2222 330l3 1l0 2l-2 1l-1 -2zM2149 379l-1 1l-1 0l-1 -2l2 0zM2562 740l2 0l1 1l-1 1l-2 0zM2316 770l3 -1l3 1l1 2l-6 1zM2700 605l1 -1l1 0l1 1l-1 1zM2271 554l-4 2l-2 -2l0 -2l4 -1zM1973 238l-5 -5l1 -5l5 1l3 7zM1987 548l2 1l0 2l-1 1l-1 -2zM2284 259l-5 0l-1 -2l4 -5l2 2zM2662 561l2 0l1 2l-2 1l-2 -1zM2520 587l1 -1l3 1l-1 2l-2 -1zM2257 634l0 -4l4 -2l1 4l-2 2zM2119 597l0 2l-3 2l-1 -3l1 -2zM2293 388l10 -4l8 6l-3 5l-11 -3zM2403 282l4 1l4 9l-5 0l-5 -4zM2574 359l2 2l-1 5l-2 2l-2 -6zM2405 729l4 2l0 5l-5 -1l-1 -2zM2267 254l-1 4l-5 -1l-3 -3l6 -4zM2228 629l-2 1l0 -1l0 -1l1 0zM2357 549l1 -5l9 -2l1 3l-5 5zM2015 639l2 -1l2 1l-1 2l-2 0zM2062 390l0 -2l2 -4l2 2l0 3zM2617 628l2 0l0 5l-2 2l-2 -3zM2441 561l4 2l1 4l-3 1l-2 -3zM2547 637l3 3l0 8l-6 -1l0 -7zM1955 354l2 0l3 3l-2 3l-3 -1zM2600 226l1 -1l2 0l0 2l-2 0zM2003 634l1 3l-3 4l-1 0l1 -5zM2362 623l1 -1l1 1l0 2l-2 0zM2055 658l-1 0l-1 -1l1 -2l1 1zM2227 607l-1 2l-4 1l0 -3l3 -1zM2219 306l-2 2l-3 -2l1 -2l2 0zM2072 355l-3 0l0 -2l1 -1l2 1zM2378 568l-3 -7l2 -4l4 0l1 4zM2263 768l2 1l1 3l-2 1l-3 -3zM2374 217l4 -1l3 3l-2 2l-4 0zM2501 571l-3 2l-6 -1l2 -3l3 -1zM2165 693l3 7l-5 11l-4 -6l0 -7zM2440 555l-1 -2l1 -4l3 0l0 4zM2200 258l-2 -1l0 -4l1 0l2 3zM2406 652l1 -2l2 0l0 1l-1 2zM2622 579l-2 -3l2 -6l3 1l0 7zM2012 392l-1 1l-4 -1l1 -3l2 1zM2005 602l0 2l-2 2l-2 -3l1 -1zM2132 229l-1 4l-2 1l-3 -3l4 -2zM2388 220l1 -1l3 1l-1 3l-3 -1zM2161 270l-1 2l-1 0l-1 -1l2 -1zM2315 693l3 -2l2 1l1 3l-4 1zM2271 680l-2 2l-4 0l1 -2l3 -1zM1992 649l-3 -2l0 -2l3 -2l3 4zM2678 571l0 6l-3 0l-3 -3l3 -3zM2180 199l0 2l-1 0l-1 0l1 -2zM2171 637l0 -3l4 0l0 2l-1 1zM2034 349l1 2l-2 3l-2 -2l1 -2zM2262 211l3 -2l4 1l-1 2l-3 1zM2012 653l-3 -3l1 -6l3 1l2 4zM2034 716l1 3l-1 2l-3 0l1 -4zM2410 317l0 -5l3 -3l2 3l-2 3zM2658 665l-1 -2l2 -2l1 2l0 3zM2594 713l0 1l-2 2l-2 -2l2 -1zM2249 626l-2 -3l2 -5l3 1l-1 5zM2240 715l-1 -2l3 -4l4 1l-2 4zM1943 280l0 2l-3 1l0 -2l1 -2zM2269 378l1 1l-1 1l-1 0l-1 -2zM2223 405l-4 3l-2 1l0 -6l3 0zM2411 676l2 -2l4 1l0 2l-2 1zM2604 667l1 3l-2 5l-3 -2l2 -5zM2298 641l0 -2l2 -2l1 2l-1 2zM2156 344l-1 2l-3 -1l0 -3l3 0zM2506 619l1 0l2 2l-1 1l-2 -1zM2194 410l2 0l1 2l-2 1l-1 -1zM2282 205l-2 0l-2 -2l1 -3l3 2zM2051 695l0 2l-1 0l-1 -1l0 -1zM2007 751l0 3l-3 1l-1 -2l2 -2zM2345 680l-1 -1l1 -4l3 1l0 4zM1938 670l-3 2l-2 -1l1 -3l3 1zM2542 767l4 -2l4 1l0 4l-6 0zM2272 384l-2 -1l0 -2l3 -1l1 2zM2364 763l-1 3l-1 0l-2 -3l2 -1zM2417 204l0 -2l3 -1l1 2l-2 2zM2320 385l2 2l-1 5l-3 1l-1 -6zM2508 670l0 -4l1 -1l4 1l-2 4zM2466 547l1 0l2 1l-1 1l-1 0zM2037 565l-1 4l-5 1l-1 -2l4 -3zM2102 646l-4 -1l-1 -1l1 -3l2 1zM2115 290l0 -4l2 0l2 1l-1 4zM2648 771l-4 -3l0 -6l5 1l1 4zM2669 726l-1 -1l-2 -2l2 -1l1 2zM2450 347l-1 -1l1 -2l1 0l1 2zM2191 276l-2 0l-3 -11l5 1l4 7zM2687 728l-2 2l-4 0l0 -2l2 -1zM2406 396l0 -4l4 -3l1 2l-1 5zM1945 308l2 8l-5 6l-5 -2l0 -8zM2644 310l2 2l2 3l-2 1l-2 -3zM2438 777l1 -7l3 -3l6 2l-3 5zM2472 749l1 -2l3 0l1 0l-2 2zM2151 237l0 -3l2 -1l1 1l-1 2zM2626 600l-6 3l-4 -2l2 -7l5 1zM2106 355l0 3l-3 1l-2 -2l2 -1zM2138 654l1 -2l3 0l2 2l-5 2zM2654 370l-3 3l-6 -2l-2 -4l7 0zM2460 253l-1 -5l5 -9l2 4l-1 8zM2195 665l0 -1l1 -1l1 1l0 1zM2170 354l-1 -2l0 -2l2 1l1 1zM2602 540l2 2l-1 3l-1 -1l-1 -2zM2681 663l1 2l0 2l-3 0l0 -3zM2314 608l1 3l-3 2l-3 -2l3 -3zM2315 290l2 -2l2 1l0 3l-2 0zM2382 399l-3 1l-4 -3l1 -3l4 2zM2513 565l-3 0l-2 -2l2 -3l3 2zM2578 291l1 1l1 2l-2 1l-1 -2zM2283 318l-2 4l-7 1l0 -2l7 -4zM2684 569l-4 -1l-4 -4l3 -1l3 2zM2238 668l3 1l0 3l-2 0l-2 -1zM2622 329l2 -2l2 1l1 1l-3 1zM2242 649l-1 4l-5 4l-2 -4l1 -4zM2452 604l2 0l0 2l-1 0l-1 -1zM2406 689l0 -3l4 -1l1 1l-3 3zM2463 686l2 0l-1 4l-1 0l-2 -2zM2142 711l1 -2l4 0l0 2l-3 1zM2087 282l2 5l-3 3l-2 -1l0 -4zM2283 594l1 -1l6 -1l0 2l-4 1zM2134 332l4 1l2 2l-1 1l-4 -2zM2401 299l-3 0l-3 -2l1 -2l3 0zM2685 767l3 -3l4 1l0 2l-4 3zM2148 746l-1 1l-2 0l-1 -1l2 -1zM2641 191l-2 2l-2 0l0 -2l1 -1zM2347 668l-3 1l-1 -2l0 -2l4 2zM2159 354l3 1l0 3l-1 2l-4 -4zM2052 691l6 4l-1 5l-2 3l-5 -8zM2184 625l2 2l2 7l-3 0l-3 -5zM2700 265l0 -2l3 -1l1 1l-1 2zM2623 664l-2 1l-2 0l0 -2l4 -1zM1941 759l3 1l1 3l-2 1l-2 -3zM2147 381l-1 -3l2 -1l2 1l-1 2zM2350 734l3 -3l6 4l-1 3l-4 0zM2083 670l-1 1l-2 0l-1 -1l3 -1zM2702 342l-3 3l-2 -2l0 -2l3 -1zM2133 376l0 3l-4 -1l0 -1l3 -3zM1976 638l1 -2l2 0l0 2l-1 1zM2635 762l2 0l2 2l-1 2l-2 -1zM2411 248l-1 3l-3 1l-1 -2l1 -3zM2134 221l2 2l0 2l-3 0l-1 -2zM2340 202l3 0l1 3l-1 2l-3 -1zM2412 555l-4 3l-6 -1l0 -2l7 -2zM2298 618l-3 1l-3 -5l2 -2l3 4zM2165 627l-2 1l-2 -2l1 -1l3 1zM1942 373l0 5l-2 5l-5 -3l2 -5zM2031 770l-1 2l-3 0l-1 -2l4 -1zM2372 235l-2 1l-1 0l-1 -2l2 -1zM2343 250l4 1l1 4l-2 1l-3 -2zM1930 551l1 2l-3 1l-1 -2l2 -1zM2583 406l-1 2l-2 0l-1 -2l2 0zM2158 198l-1 2l-5 0l1 -3l2 -2zM2571 758l-2 3l-3 0l-2 -2l4 -1zM2268 760l-5 0l-3 -5l1 -2l7 2zM2067 707l-1 4l-3 1l-1 -2l2 -3zM2140 599l-4 1l-2 -1l1 -4l4 1zM2300 662l-1 1l-1 1l-1 -2l2 -1zM1983 604l1 -3l1 -3l2 2l0 2zM2132 720l3 0l2 3l0 3l-4 -2zM2318 571l-2 3l-4 1l0 -3l2 -3zM2679 732l0 2l-2 4l-2 -1l0 -3zM2084 641l0 2l-2 2l-2 -2l1 -1zM2303 696l-2 1l-4 -1l1 -2l3 -1zM2476 648l-4 -2l1 -5l4 -1l1 5zM2562 402l0 1l0 3l-2 -1l0 -3zM2623 751l-2 -1l-2 -7l1 -1l5 5zM2477 725l-1 -1l-1 -3l1 -1l1 3zM2301 199l-5 1l-2 -5l2 -2l6 4zM1965 278l4 1l0 6l-5 0l-3 -3zM2058 196l-2 3l-4 1l-2 -2l5 -3zM2298 336l3 0l0 5l-2 0l-3 -4zM2061 761l-3 -3l-1 -4l3 -1l3 3zM1925 725l-1 0l-1 -3l1 -1l2 3zM2460 722l1 3l-2 2l-1 -1l0 -2zM2437 593l1 2l-1 1l-2 0l1 -2zM2601 319l3 -1l4 4l-1 3l-4 -2zM2177 342l0 1l-2 1l-1 -2l1 -1zM1966 604l1 -3l3 0l1 1l-3 2zM2632 267l3 -2l2 0l-1 2l-1 1zM2270 652l3 2l1 1l-2 1l-2 -2zM2453 772l1 -1l1 1l1 1l-2 1zM2276 648l2 -2l3 0l-1 2l-2 0zM2650 318l-5 3l-3 -5l3 -3l5 2zM2006 279l0 -3l1 -2l2 0l0 3zM2173 189l2 -3l4 1l2 2l-4 2zM1986 574l-1 -2l2 -3l1 1l-1 4zM2439 358l-2 -4l5 -7l4 1l-1 6zM2035 589l3 -4l6 -1l2 1l-6 6zM2636 602l2 -3l4 -1l1 1l-3 3zM2132 545l1 -4l4 0l2 3l-3 3zM2355 277l-1 -2l3 -2l1 2l-1 2zM2365 364l-3 2l-3 0l1 -3l2 -1zM2399 591l2 0l1 0l0 2l-2 0zM2260 643l4 0l0 3l-2 1l-3 -2zM2105 662l1 -3l5 1l0 5l-6 -1zM2560 566l-4 3l-7 0l0 -3l8 -3zM2100 716l2 4l-3 3l-3 2l0 -6zM2460 187l0 2l-3 1l-1 0l2 -3zM2248 606l-1 -8l6 -2l5 4l-7 6zM2115 368l2 5l-3 2l-4 -2l-1 -4zM2470 406l1 -1l2 0l0 2l-1 0zM1942 718l0 2l-2 2l-2 -3l3 -2zM2552 707l3 5l-2 5l-4 -1l0 -6zM2460 401l-1 4l-4 2l-1 -2l2 -4zM2597 662l1 2l-1 2l-2 0l1 -3zM2024 318l-2 -1l1 -4l3 1l0 3zM2200 332l-2 2l-4 -2l0 -4l5 -1zM2624 361l-1 1l-3 0l1 -2l2 0zM2520 355l-2 -4l4 -1l3 2l-3 3zM2186 657l-2 2l-2 -1l0 -3l3 0zM1981 219l2 2l-1 3l-1 0l-1 -3zM2479 744l2 -3l5 0l1 3l-3 2zM2171 702l0 -3l3 -1l2 1l-4 3zM1988 587l2 0l2 2l-2 2l-2 -1zM2521 659l0 3l-1 2l-3 -1l1 -3zM2255 701l-1 -1l2 -2l1 1l-1 1zM2367 577l0 -4l5 -3l1 2l-4 6zM2097 223l1 1l-1 7l-2 -2l-1 -4zM2495 231l2 2l-1 4l-3 1l0 -5zM2036 716l2 -9l5 -2l3 3l-2 5zM2289 411l-2 -5l3 -2l4 1l-1 4zM2022 701l1 1l-3 3l-1 -1l1 -3zM2337 675l1 -4l2 -1l3 2l-3 5zM2455 361l4 1l0 4l-1 1l-3 -3zM2352 381l-2 0l-1 -2l2 -1l1 1zM2296 669l3 0l2 3l-1 1l-3 -2zM2378 599l3 0l3 5l-2 2l-4 -4zM2329 771l-2 -2l2 -6l4 0l0 6zM2584 539l-2 1l-3 -1l1 -2l1 0zM2218 578l-1 2l-2 1l-1 -1l2 -2zM2040 670l-2 -4l2 -5l3 1l-1 4zM2384 768l-4 5l-4 -1l-2 -2l3 -3zM2349 633l2 2l-2 4l-4 -1l2 -5zM2385 742l-4 4l-5 -1l-1 -3l4 -3zM2186 242l-4 -5l4 -4l3 -1l-1 7zM1961 345l3 -4l3 1l2 3l-6 2zM1962 687l1 -1l2 1l0 1l-2 1zM2353 737l-2 -2l2 -3l3 2l-1 2zM2080 575l-2 -3l1 -4l4 0l0 3zM2178 637l-3 0l-1 -2l1 -1l3 2zM1998 331l-2 5l-3 2l-2 -2l3 -5zM2411 294l3 -2l2 2l0 2l-2 0zM2428 573l5 1l0 4l-5 3l-3 -5zM2465 583l-4 2l-3 -2l2 -4l5 2zM2123 217l-2 -1l1 -3l1 0l2 2zM2103 316l-2 3l-3 2l-1 -3l3 -2zM2037 652l3 -1l5 3l-2 2l-3 0zM2455 262l3 -1l1 2l-2 2l-1 -1zM2321 715l-2 -5l2 -4l4 0l-2 5zM2621 338l0 1l-4 -1l0 -1l2 -1zM2669 188l3 -4l4 0l1 2l-3 2zM2216 308l3 -1l3 3l-1 2l-5 -2zM2696 408l-4 0l-2 -8l2 -1l4 3zM2080 618l1 4l-2 3l-3 -1l2 -5zM2148 409l-5 -1l-3 -3l2 -3l4 3zM2099 281l-3 -2l0 -5l3 -2l2 5zM2244 756l5 -4l6 4l0 4l-9 2zM2070 604l-2 0l-3 -2l1 -1l3 1zM2056 605l2 -4l3 -2l1 3l-3 3zM2443 654l2 3l-1 3l-2 -1l0 -2zM2069 747l0 -2l3 -1l0 1l-1 2zM2024 362l0 -2l1 0l2 1l-1 1zM2429 257l0 2l-2 -1l0 -1l1 -1zM2669 762l3 -2l1 1l0 2l-2 1zM2558 553l-4 2l-6 -2l0 -2l6 -1zM2654 663l3 -1l1 2l0 3l-3 -2zM2209 259l1 1l-2 2l-1 0l0 -2zM2012 351l2 -1l3 1l-1 3l-4 0zM2422 410l4 -2l4 2l1 4l-6 -1zM2060 376l2 -1l1 1l1 1l-3 1zM2538 555l1 -3l3 -3l1 2l-3 5zM1989 412l-4 0l-3 -4l4 -2l2 3zM2162 577l0 -1l2 -1l1 1l-1 2zM2412 594l-1 2l-2 0l0 -1l1 -2zM2557 543l1 0l1 2l-1 1l-2 -2zM2623 611l-2 0l-1 -1l1 -2l2 2zM1961 214l3 2l0 4l-2 2l-3 -5zM2292 392l0 -4l3 -3l3 2l0 4zM2477 699l-2 -3l2 -5l2 0l1 4zM2247 335l0 -5l5 -1l3 5l-3 3zM2482 714l-1 2l-3 2l-1 -2l2 -2zM1953 769l-1 2l-1 1l-2 -2l2 -1zM2618 731l1 -2l4 1l0 3l-6 0zM2694 563l-1 -2l3 -4l1 1l0 5zM2129 618l0 2l-1 2l-1 -1l0 -2zM2072 340l-1 7l-5 5l-3 -3l2 -5zM2405 655l4 1l2 5l-4 2l-2 -2zM2656 285l-2 1l-3 -1l1 -1l2 0zM1946 255l1 -2l3 1l-1 2l-2 1zM2286 624l1 -4l4 0l0 2l-2 3zM2137 337l-7 -2l-3 -5l1 -4l9 6zM2438 371l-1 -2l3 -3l1 1l-1 3zM2447 610l-3 3l-4 0l1 -2l2 -2zM2645 671l3 -2l5 2l-1 2l-5 0zM2492 723l3 6l-2 5l-4 1l-3 -6zM2669 255l-2 1l-2 -2l1 -2l3 1zM2273 385l3 0l2 4l-1 1l-3 -2zM2216 543l-1 -3l1 -1l1 0l0 3zM2312 552l-2 0l-2 0l1 -2l3 1zM2032 374l3 -8l10 -4l5 8l-8 6zM2367 686l1 3l-4 2l0 -2l1 -2zM1997 771l1 1l1 2l0 1l-2 -1zM2477 399l-1 2l-3 2l-1 -2l2 -2zM2353 357l-1 -4l4 -5l5 2l-1 7zM2140 198l5 -1l2 4l-3 1l-4 -2zM2491 268l3 1l0 1l-2 2l-1 -2zM2557 541l-2 3l-3 -1l-1 -3l3 -1zM2653 632l-2 -2l0 -2l2 -1l1 3zM2047 260l0 2l-2 2l-1 -1l1 -2zM2132 717l2 0l1 3l-2 0l-1 -1zM2475 316l2 1l1 2l-1 1l-2 -2zM2359 657l0 -2l2 -2l2 2l-2 4zM2124 652l1 -1l2 2l-1 0l-2 0zM2262 707l-2 1l-3 -4l2 -1l3 2zM2495 634l-1 -2l0 -3l2 0l2 3zM2538 662l1 3l-2 0l-1 -1l1 -1zM2527 706l-2 2l-3 -3l1 -3l3 1zM2617 641l-1 2l-4 0l-1 -2l4 -2zM2261 613l2 1l1 3l-2 1l-2 -4zM1949 675l2 3l-3 2l-2 -2l1 -1zM1958 609l6 1l0 5l-1 2l-5 -3zM1935 677l-3 1l-2 -2l2 -2l2 0zM2177 258l2 0l3 2l-1 2l-2 -1zM1942 237l2 0l1 1l-1 2l-3 -1zM2251 573l2 2l1 3l-1 0l-2 -1zM2647 587l-5 2l-8 -1l2 -3l4 -4zM2546 686l2 -2l6 0l1 3l-7 1zM2681 565l-1 -2l1 -4l2 0l0 3zM2534 709l-2 -1l2 -3l1 1l1 3zM2641 236l0 -6l8 -1l1 4l-5 3zM1939 357l4 -3l3 0l0 2l-4 1zM2547 752l1 4l-4 5l-3 -1l2 -5zM2380 614l1 -3l1 0l1 3l-2 0zM2353 222l1 0l3 4l0 1l-5 -2zM1958 252l1 3l-2 1l-2 0l1 -3zM2250 621l3 -1l2 1l0 1l-2 0zM2346 185l3 0l3 4l-3 2l-5 0zM1964 398l1 1l0 2l0 1l-2 -2zM2073 740l0 -3l3 -2l1 1l-1 3zM2377 253l-1 2l-2 1l-1 -2l2 -2zM2008 222l2 0l-1 2l-1 0l-1 -2zM2682 570l8 3l1 6l-4 4l-6 -6zM1953 544l0 2l-1 2l-2 0l1 -3zM2128 666l2 -5l6 -1l1 4l-4 3zM2138 565l-8 0l-7 -6l6 -8l6 2zM2106 285l-1 1l-1 0l-1 -2l1 0zM2329 408l-2 -3l0 -2l2 -2l2 3zM2597 561l-3 -3l1 -4l3 1l2 4zM2072 350l2 2l-1 3l-2 0l0 -3zM2408 348l1 -4l4 -2l1 3l-3 3zM2218 239l4 -4l4 2l2 5l-7 2zM2339 283l-3 2l-2 -2l1 -3l3 1zM2148 758l-1 -3l9 -6l5 3l-6 8zM2625 365l3 -2l3 1l0 2l-2 1zM2641 253l3 0l1 0l-1 2l-2 -1zM2012 297l2 -1l2 1l-1 2l-2 0zM1931 309l-3 1l-1 -5l3 -3l3 6zM2422 305l-2 2l-5 0l-1 -3l5 -1zM2570 602l1 -3l2 0l1 2l-2 2zM2374 711l2 -2l2 0l-1 3l-2 0zM2488 262l1 -3l3 0l1 3l-2 2zM2492 710l-1 -3l0 -2l3 0l0 3zM2367 662l3 1l1 4l-3 2l-1 -4zM2039 218l-1 -1l-1 -4l2 0l1 2zM2029 635l0 -1l1 -2l1 0l0 3zM2281 305l1 -1l3 1l-1 2l-1 0zM2489 658l1 -1l3 0l0 1l-3 2zM2238 542l0 2l-1 2l-1 -2l1 -1zM2195 275l-2 1l-1 -3l2 -1l2 1zM2231 631l4 4l-2 5l-3 -1l-2 -4zM1970 692l-3 -1l0 -2l1 -1l2 1zM2434 405l1 -3l2 -1l1 1l-2 3zM2401 356l2 4l-2 4l-3 -1l0 -6zM2068 373l-1 -1l0 -2l2 0l0 2zM1967 602l2 -1l4 2l-1 2l-5 -1zM2502 541l4 -1l4 3l-1 3l-6 -2zM2545 387l1 -2l3 1l0 2l-2 1zM2202 265l1 -7l6 -4l5 5l-3 5zM2282 584l0 -1l2 -2l1 2l-2 1zM2684 317l4 0l3 4l-2 2l-4 -3zM2682 244l-2 0l-2 -2l1 -3l3 2zM2479 203l0 -4l3 -5l3 1l-2 7zM2032 555l-3 2l-3 -1l1 -4l4 1zM2522 396l-2 2l-5 1l1 -3l2 -2zM2268 764l0 -2l1 -1l2 0l-1 3zM2477 573l1 3l-5 3l-2 -1l1 -4zM2600 226l2 -1l1 1l-1 3l-3 -1zM1965 311l5 2l-1 7l-2 1l-4 -7zM2278 749l-1 3l-5 -1l1 -3l3 0zM2387 317l-1 0l-1 -1l1 -1l1 1zM2597 601l4 3l-1 5l-2 1l-2 -6zM2535 270l2 -1l3 3l-2 2l-2 -2zM2084 603l2 -3l4 0l0 4l-4 1zM2597 340l-2 1l-2 -2l1 -2l2 0zM1978 600l1 -4l4 -2l2 2l-3 5zM2060 314l-1 -2l2 -2l2 2l-1 2zM2620 602l0 1l0 1l-1 -1l0 -1zM2231 755l1 -2l2 0l0 1l-2 1zM2413 729l1 3l1 4l-1 2l-2 -5zM2320 407l2 3l-2 2l-4 -1l1 -3zM2353 362l-2 -1l0 -2l3 -1l0 3zM2264 653l2 1l0 2l-2 2l-1 -3zM2104 693l-2 -3l0 -2l1 -2l2 4zM1927 745l-5 -1l-1 -4l3 -1l3 3zM1941 642l-1 -1l-1 -3l2 -1l1 2zM2382 596l-1 -2l1 -2l2 0l0 3zM2125 652l2 -1l2 2l-2 2l-1 -1zM2586 254l2 0l0 4l-2 0l-2 -2zM2326 650l-2 2l-2 0l0 -1l2 -2zM2162 669l-5 0l-5 -3l4 -2l2 0zM2656 680l0 5l-4 0l-2 -4l3 -1zM2472 333l4 -1l1 3l-2 2l-3 -1zM2471 757l-1 1l-2 -3l1 -1l2 1zM2544 198l6 5l1 7l-5 2l-5 -8zM1957 756l2 0l0 3l-2 1l-1 -2zM2027 287l2 -1l0 1l0 2l-2 -1zM2025 570l1 4l-1 6l-3 2l-1 -8zM2688 237l0 -2l1 -1l2 0l-1 3zM2023 736l1 -2l1 -1l2 1l-2 2zM2096 770l0 2l-2 0l-1 -1l1 -2zM2284 691l2 1l-2 7l-4 -1l0 -3zM2252 569l-1 -2l2 -1l1 0l-1 2zM2261 612l-2 -2l1 -3l4 0l-1 3zM1957 721l1 5l-3 5l-3 -3l1 -5zM2312 311l-3 -5l4 -5l3 3l1 4zM1934 768l-1 -1l2 -4l2 1l-1 3zM2278 399l2 -1l3 0l0 2l-3 1zM1963 393l-2 2l-2 -1l-1 -3l3 0zM1945 296l-2 2l-5 0l1 -3l3 -1zM2230 339l4 3l0 3l-2 2l-3 -5zM2282 688l-1 -1l0 -2l1 1l1 1zM1940 358l-1 -3l2 -1l2 2l-2 2zM2153 624l4 -3l2 2l0 4l-4 1zM2475 700l1 0l1 3l-2 1l-1 -3zM2191 543l1 0l2 2l-2 1l-1 -1zM2596 614l3 -1l2 2l-1 2l-2 -1zM2461 295l-1 1l-2 -3l1 -1l2 1zM2450 360l-4 0l-3 -4l3 -3l3 1zM2239 551l-3 -2l0 -3l2 0l2 3zM2051 627l-2 0l-1 -3l2 0l2 2zM2387 310l-1 -3l1 -2l2 0l1 3zM2664 725l1 -3l3 -1l0 3l-1 2zM2310 302l1 3l-4 2l-3 -2l1 -3zM2328 692l-3 1l-4 -3l2 -2l5 2zM2266 356l-1 4l-3 0l-4 0l4 -4zM2347 650l2 0l1 1l-1 2l-1 0zM2372 377l1 -4l3 -2l2 1l-2 3zM1941 393l1 -3l5 0l2 4l-5 2zM2362 736l-3 3l-6 -2l2 -2l6 -2zM2080 390l1 1l-1 2l-1 0l0 -2zM2329 574l-1 0l-3 -3l1 -1l3 1zM2404 343l3 -3l5 1l0 3l-6 2zM2424 293l3 2l1 9l-5 0l-4 -4zM2025 554l-2 2l-3 1l-1 -1l3 -3zM2157 650l1 -5l4 -3l2 1l-1 5zM2488 367l2 -3l3 -1l1 2l-3 3zM2049 257l-7 0l-5 -8l3 -4l8 7zM2429 349l-1 2l-2 0l0 -2l1 -1zM2680 259l-7 3l-7 -2l1 -3l10 -1zM2163 269l3 -2l3 3l-3 2l-2 -1zM2594 729l3 4l-3 5l-3 -1l1 -6zM2412 307l0 -3l3 -2l1 2l-2 4zM2213 565l2 0l0 2l-1 1l-1 -1zM1930 356l-1 3l-2 -1l-2 -1l3 -2zM2258 306l-2 0l-2 -5l2 -1l3 3zM2168 268l-1 1l-2 0l0 -2l2 0zM2623 278l0 -1l2 -1l2 1l-2 1zM2434 260l1 1l1 1l-1 2l-1 -2zM2544 635l-1 -1l1 -2l1 0l0 2zM2651 765l0 2l-4 5l-1 -4l1 -2zM2334 195l0 -6l5 -5l2 4l-3 4zM2113 567l3 1l0 3l-2 1l-1 -3zM2241 288l-4 -5l4 -8l6 2l0 6zM2483 280l-2 -3l6 -4l4 2l-3 4zM2636 370l2 0l1 2l0 1l-3 -1zM1970 269l1 -2l2 -2l2 2l-2 3zM1969 228l0 -1l0 -2l2 1l0 2zM2022 375l-1 -4l2 -1l4 -1l-1 6zM2576 190l0 -3l1 0l2 0l-1 3zM2616 606l-1 -4l3 -1l3 2l-3 4zM2233 627l1 1l1 3l-2 0l-1 -1zM2357 296l-2 -1l2 -3l2 0l0 2zM2676 649l1 2l-1 2l-2 0l0 -2zM2661 250l-2 0l-2 -1l1 -2l2 1zM2386 224l2 -2l2 1l0 1l-2 1zM2254 403l2 2l-5 5l-1 -3l1 -3zM2405 769l2 0l0 2l-1 0l-1 -1zM1935 263l-4 -1l-3 -7l4 -1l4 3zM2254 629l5 -3l7 2l-3 5l-3 1zM1992 711l1 -1l3 0l0 1l-2 1zM2018 601l-1 2l-2 1l0 -1l1 -2zM2532 608l3 0l5 3l-3 2l-4 -2zM2506 221l1 -2l3 -2l0 2l-1 2zM2463 613l-2 -2l-1 -4l3 0l1 4zM2104 639l-2 4l-5 -1l-1 -4l4 -2zM2094 257l1 2l-1 4l-3 -2l1 -3zM2399 744l1 2l-2 0l-1 0l0 -2zM2141 718l1 -1l2 1l-1 2l-2 0zM2638 288l4 -5l4 0l2 2l-5 3zM2240 317l-1 0l-3 -3l2 0l1 0zM2083 719l-1 3l-3 -1l0 -3l3 -1zM2219 575l1 3l-6 4l-2 -4l2 -3zM2656 211l1 7l-11 1l-1 -6l6 -4zM1978 194l3 -3l5 -1l4 4l-8 4zM2024 257l1 3l-6 2l0 -3l1 -3zM2300 761l0 2l-2 2l-1 -1l1 -2zM2118 706l-2 3l-4 -1l0 -3l4 0zM1993 275l-7 -1l-5 -9l5 0l5 4zM2473 627l-1 6l-6 2l-2 -5l4 -4zM2345 244l2 6l-4 8l-3 -5l0 -3zM2411 402l0 2l-1 1l-1 0l0 -2zM2003 754l-2 -2l0 -2l1 0l1 2zM1985 550l2 0l1 2l-2 0l-1 -1zM2668 684l2 0l1 3l-2 0l-2 -1zM1944 398l3 -1l5 2l0 4l-7 -1zM2067 608l-2 1l-2 -1l1 -3l3 0zM2506 570l0 1l-2 2l-2 -1l3 -2zM2633 394l2 0l1 3l-1 1l-2 -1zM1982 609l1 -5l5 -2l1 2l-3 5zM2242 285l4 -3l3 3l0 2l-5 0zM2589 379l1 0l-1 4l-1 -1l0 -2zM2268 308l1 4l-1 3l-3 -1l0 -4zM2709 386l-5 1l-6 -5l5 -3l4 1zM2141 620l0 3l-3 3l-2 -3l3 -4zM2654 199l3 3l-2 7l-3 0l-3 -6zM2144 719l-3 -1l0 -3l1 0l2 1zM2443 324l-1 -4l2 -2l1 1l0 2zM2445 608l5 -1l3 3l-1 2l-5 -1zM2292 606l0 -4l5 -2l1 3l-3 4zM2518 312l-2 -4l4 -3l2 2l-1 5zM2411 581l2 -1l2 2l-1 2l-3 -1zM2193 702l3 1l2 3l-4 2l-2 -3zM2286 728l1 3l-4 2l-1 -1l2 -4zM2281 754l7 -1l4 3l-1 5l-6 -1zM2647 328l-4 -2l-1 -7l3 0l4 5zM2630 367l0 2l0 1l-2 -1l0 -1zM2487 668l2 -3l4 0l1 3l-4 1zM2003 344l-5 -2l1 -6l6 0l2 6zM2592 727l-6 2l-9 -11l4 -2l7 3zM2195 718l4 -4l6 1l1 3l-5 2zM1959 259l-6 -1l-4 -9l4 -2l4 3zM2011 328l0 2l-3 2l-1 -1l1 -3zM2675 316l0 -4l5 -1l1 1l-4 4zM2383 372l-1 2l-1 -1l-1 -1l1 -1zM2514 312l2 0l1 1l-1 2l-2 -2zM1968 622l1 -1l2 0l1 2l-3 0zM2487 571l0 2l-1 3l-1 -1l-1 -2zM2311 557l0 3l-2 0l-2 -2l1 -1zM1979 326l-1 2l-3 -1l-1 -1l3 -1zM2002 585l-1 1l-2 1l0 -2l2 -1zM2281 308l2 2l-1 3l-2 1l0 -3zM2651 765l-1 2l-5 1l-1 -2l4 -2zM2144 575l-1 2l-1 0l-1 -2l2 -1zM2037 213l-1 2l-2 0l-1 -3l3 -2zM2182 541l-3 1l-3 -2l1 -2l4 0zM2559 237l-2 0l-1 -1l2 -1l1 0zM2112 653l-3 -2l0 -4l3 -1l2 5zM2446 688l-2 -2l1 -3l4 2l-1 3zM1962 773l-2 -1l1 -1l1 0l1 1zM2059 592l2 -1l2 3l-1 1l-2 -1zM2437 741l-1 -3l2 -2l2 1l0 3zM2279 340l3 -1l2 1l0 2l-4 0zM2324 693l1 -3l4 -1l1 3l-2 2zM2021 703l2 3l-2 3l-2 -1l-1 -3zM2304 563l-1 2l-4 -3l1 -3l4 1zM2005 681l0 2l-1 1l-1 -1l0 -2zM2685 706l1 -1l1 1l0 1l-1 0zM2315 563l-1 3l-2 1l0 -1l0 -2zM1999 712l-4 2l-6 -4l2 -4l6 1zM2136 204l-2 1l-1 -3l1 -1l2 2zM2393 648l0 -1l3 0l0 2l-1 0zM2621 681l0 4l-2 1l-2 -2l1 -3zM2176 375l3 1l0 2l-3 2l-2 -3zM2152 221l1 -3l2 -2l2 3l-1 2zM2245 191l0 2l-2 1l-2 0l3 -2zM1955 619l1 3l-1 3l-2 -1l0 -3zM2636 634l-2 1l-3 -5l2 -1l4 3zM2056 758l2 -2l2 1l0 2l-2 0zM2302 676l2 -2l3 1l-1 2l-2 0zM2242 357l2 -1l2 0l0 1l-2 1zM2237 613l1 0l1 3l-2 0l-1 -1zM2080 356l3 1l1 3l-3 2l-3 -3zM2642 621l2 4l-3 2l-4 0l3 -5zM2392 661l-5 6l-6 0l0 -4l5 -3zM2091 710l-3 2l-4 0l0 -3l5 -1zM2268 293l4 3l0 5l-6 1l0 -8zM2517 697l0 -1l3 -2l1 2l-2 1zM2186 261l1 -1l3 -1l1 2l-3 1zM2215 284l3 -5l3 0l2 3l-6 4zM2046 319l-3 2l-4 -2l0 -2l5 0zM2138 615l-3 -1l0 -3l2 -2l2 4zM2108 714l-4 -4l0 -5l3 0l3 6zM2127 632l-5 0l-3 -6l5 -2l4 2zM2210 608l3 -1l5 1l-2 3l-4 0zM2336 581l2 -1l5 5l-4 1l-4 -1zM2637 194l1 1l-3 2l-2 0l1 -3zM2060 759l2 1l1 1l-1 2l-2 -1zM1964 716l3 -2l3 1l0 1l-3 1zM2514 632l-1 2l-2 2l-1 -3l2 -1zM2596 229l4 2l-5 9l-4 -4l2 -5zM1993 630l-5 2l-5 -3l-2 -4l10 -1zM2343 771l3 2l-1 3l-4 1l0 -4zM2305 620l-1 -2l2 -4l3 1l0 3zM2644 580l-2 1l-4 -4l1 -2l4 2zM2596 408l2 -3l3 0l3 3l-3 2zM2022 347l4 1l0 5l-4 3l-2 -5zM2280 581l2 -4l5 -2l1 3l-4 3zM1954 191l4 -1l4 3l-2 2l-4 0zM2254 365l0 3l-3 3l-4 -1l4 -4zM2241 642l3 -3l2 -1l2 3l-3 2zM2180 189l1 1l-1 2l-1 -1l1 -2zM2420 202l-7 1l-10 -7l3 -4l9 2zM2060 264l-1 -2l0 -3l3 -2l0 5zM2509 660l1 3l-1 2l-2 0l0 -3zM2627 196l-2 -1l1 -2l1 0l1 2zM2304 682l-3 -1l1 -4l1 0l1 3zM2431 327l2 -2l2 2l0 1l-2 1zM1994 676l2 3l-3 3l-1 -2l-1 -3zM1940 761l-2 3l-7 -5l1 -3l6 2zM2564 732l2 -1l2 0l0 2l-1 0zM2609 762l-2 -3l0 -3l2 0l1 3zM2419 347l-1 -2l2 -3l2 0l-1 3zM2317 332l-2 -1l-2 -2l1 -2l2 1zM2315 375l-3 -1l0 -4l2 -1l3 3zM2439 385l0 -3l1 -1l2 0l0 3zM2204 208l-3 2l-3 -1l0 -3l3 0zM2103 709l2 -1l3 2l0 2l-4 0zM2531 575l2 -1l1 0l0 2l-2 1zM2401 352l1 2l-1 1l-2 1l0 -3zM2092 638l1 -1l2 1l0 1l-1 1zM2184 669l3 0l-2 4l-2 1l-2 -4zM2407 323l1 -1l2 1l0 1l-1 0zM2226 639l3 2l1 4l-2 1l-2 -3zM2244 336l-2 -1l0 -3l3 1l0 1zM2004 670l-1 0l-1 -1l0 -1l3 0zM2633 295l1 0l1 2l-2 0l-1 0zM2456 310l0 -2l2 -2l2 2l-2 3zM1952 352l1 1l1 1l-1 1l-2 -1zM2652 673l5 -1l4 3l-1 2l-4 1zM2252 718l1 1l-3 1l-2 -2l3 -1zM1954 573l1 -2l2 0l0 2l-2 1zM2126 554l1 -2l3 0l0 2l-1 1zM2226 370l2 -2l3 2l-1 1l-2 1zM1924 233l2 2l0 5l-3 1l-1 -4zM2176 355l2 -5l9 -2l2 4l-7 3zM1973 734l1 0l0 2l-1 0l-1 -1zM1939 405l-2 1l-3 -3l2 -1l3 1zM2626 609l-1 2l-2 0l0 -1l0 -1zM2694 766l-2 1l-1 -1l1 -1l2 0zM2507 667l-1 -2l0 -2l2 -1l1 4zM2137 744l-3 2l-3 -1l1 -2l4 -2zM2689 728l-2 -1l0 -3l1 -1l2 3zM2222 186l1 2l-2 2l-1 1l0 -3zM2192 666l3 2l-1 4l-2 1l-2 -6zM2227 571l-7 6l-7 -3l-2 -9l12 -3zM2107 770l-2 0l-2 -2l2 -2l3 2zM2045 685l-2 0l-2 -4l1 0l3 2zM2150 311l2 3l0 4l-3 1l-1 -4zM2518 253l6 -1l3 3l-2 3l-5 -3zM2296 201l1 0l-1 2l-2 0l0 -2zM2457 729l3 -1l6 5l-2 1l-5 0zM2440 576l-3 2l-2 0l0 -2l2 -1zM2144 364l3 -1l2 2l-2 2l-3 -1zM2069 677l-2 -1l0 -3l2 1l2 0zM2602 638l1 -3l2 -1l1 2l-2 1zM2373 211l-2 1l-2 -1l0 -2l3 1zM2475 356l-1 2l-5 -3l1 -1l5 0zM2272 304l6 1l4 3l0 5l-7 -3zM2194 198l-2 1l-2 -4l3 -1l2 1zM2476 276l3 1l0 5l-2 1l-2 -3zM2674 631l5 -1l4 4l-3 3l-4 0zM2478 199l2 -1l2 3l-1 1l-3 -2zM2543 305l2 1l0 4l-1 2l-2 -5zM2332 303l-3 0l0 -1l1 -2l2 1zM2433 412l-4 1l-1 -4l1 -2l4 3zM1930 184l1 3l-3 2l-1 -2l1 -2zM2475 653l-1 -3l1 -2l2 1l0 2zM2693 686l1 -1l2 1l0 1l-2 0zM2537 757l3 3l0 3l-2 0l-1 -3zM2036 575l-2 0l-1 -2l1 -1l2 2zM2027 579l3 -2l3 0l0 3l-3 1zM2313 394l-2 4l-5 1l-2 -3l4 -3zM2022 556l3 -1l5 3l0 3l-7 -1zM2227 616l0 1l-1 1l-1 -1l0 -1zM2484 710l-4 3l-2 -2l2 -4l3 1zM2317 572l-1 3l-2 -1l-1 -2l2 -1zM2002 606l1 1l-1 3l-1 -1l0 -2zM2641 348l0 3l-4 5l-2 -2l1 -4zM2594 210l0 -1l2 -3l1 1l0 2zM2537 255l1 1l-1 2l-1 -1l0 -1zM2085 293l1 0l3 2l-2 1l-2 -1zM2372 549l1 2l-1 2l0 0l-1 -2zM2480 363l2 0l1 2l-1 1l-2 -1zM1925 650l-2 0l-3 -2l0 -2l4 2zM2441 552l0 -2l2 -2l1 1l-1 2zM2664 625l3 -4l5 -1l0 4l-3 3zM2417 408l2 -1l1 3l-2 2l-2 -2zM2576 710l1 0l1 2l-1 1l-1 -1zM1973 544l3 3l-4 3l-3 -2l1 -4zM2648 231l-2 -2l1 -2l2 1l0 2zM2066 770l0 -3l1 -1l2 1l-1 1zM2468 763l-2 0l0 -3l2 -2l1 2zM2667 604l1 2l-3 2l-1 -1l1 -2zM2616 729l1 -4l5 -1l1 1l-4 4zM2657 631l2 0l1 3l-2 1l-2 -2zM2103 648l-1 -2l1 -2l2 0l0 3zM2043 644l3 -1l3 2l0 2l-4 0zM2142 601l2 -1l1 1l1 2l-3 -1zM1981 395l-1 0l-2 -2l2 -2l2 2zM2240 720l1 1l-2 3l-2 0l1 -3zM2366 568l-2 0l-2 0l1 -2l2 0zM2640 252l-2 -3l1 -4l2 2l0 2zM2445 199l3 2l-1 4l-2 0l-2 -4zM2533 277l-6 0l-2 -4l0 -4l6 3zM2504 620l-5 2l-4 -1l-1 -3l6 0zM2651 742l-1 -1l0 -1l1 0l1 1zM2258 338l1 5l-4 6l-2 -1l3 -8zM2410 388l4 0l1 2l-1 3l-3 -2zM2648 550l-2 -2l3 -3l1 0l1 5zM2152 409l-3 0l-6 -3l2 -4l5 2zM1931 385l0 1l-2 2l-1 -1l1 -1zM2471 596l-2 0l1 -3l1 0l2 1zM2458 631l-2 3l-8 -2l-1 -3l10 -2zM2580 682l3 -3l6 2l-1 4l-5 0zM2012 289l1 -1l2 1l0 1l-3 0zM2348 583l-3 4l-4 -1l0 -3l5 -2zM2319 374l1 1l-1 5l-3 0l-1 -4zM2031 766l-5 -1l-2 -2l2 -2l4 1zM2352 358l-3 -3l3 -5l2 0l0 6zM2570 602l2 -2l1 1l1 2l-4 0zM2140 605l3 1l3 4l-3 1l-4 -3zM2663 740l1 -2l2 1l0 1l-2 0zM2524 770l4 -1l2 2l0 3l-5 -1zM2693 318l0 2l0 2l-2 0l0 -3zM2315 254l-1 -1l0 -2l2 0l0 2zM2179 402l-2 4l-7 -2l0 -3l6 -1zM2539 278l-1 -3l2 -2l2 2l-1 3zM2481 640l-2 -2l0 -2l2 0l1 2zM2150 215l-2 1l-1 -2l1 -2l1 1zM2152 367l-1 3l-2 1l-2 -2l1 -2zM2025 561l3 1l1 2l-2 1l-3 -1zM2507 391l1 1l-1 4l-2 -2l0 -2zM2256 541l-1 3l-5 2l-1 -2l3 -4zM2275 679l-2 1l-3 -6l2 -2l4 4zM2658 589l3 -3l6 0l1 3l-5 3zM2035 654l1 -1l2 1l-1 2l-1 -1zM2242 591l1 -2l4 0l-1 2l-2 0zM2432 722l-2 -1l0 0l1 -2l1 1zM2239 212l0 -6l3 -2l5 1l-4 5zM2661 333l-4 -5l-3 -6l6 -2l4 6zM2067 755l1 -3l2 -2l1 2l-2 3zM2412 296l0 2l-3 0l-1 -1l2 -1zM1937 223l0 1l-1 1l-1 -1l0 -1zM1926 737l-2 -7l4 -4l4 3l-3 8zM2078 332l-1 -5l2 -2l2 1l0 4zM2056 574l3 1l2 3l-1 2l-4 -4zM2450 212l4 -5l5 4l0 3l-7 2zM2586 717l1 -3l2 0l2 4l-3 1zM2472 701l1 2l-2 1l0 -1l0 -2zM2522 656l-1 7l-6 4l-4 -3l5 -7zM2307 766l0 3l-3 1l-1 -3l2 -1zM2230 314l3 4l0 7l-5 0l-1 -7zM2501 713l0 -3l2 -1l2 0l-2 4z"/></g></g>
<g clip-path="url(#micclip)"><path d="M1900,424 L1960,422 L2050,421 L2148,423 L2250,425 L2337,428 L2450,430 L2526,431 L2620,430 L2720,430 L2720,519 L2620,519 L2526,520 L2430,520 L2320,527 L2200,529 L2080,527 L1990,522 L1900,520 Z" fill="#000" fill-opacity="0.74" filter="url(#bblur)"/></g>
<line x1="1970.0" y1="191" x2="1970.0" y2="769" stroke="#2a7a7a" stroke-opacity="0.28" stroke-width="1.1"/>
<line x1="1984.1" y1="191" x2="1984.1" y2="769" stroke="#2a7a7a" stroke-opacity="0.28" stroke-width="1.1"/>
<line x1="1998.1" y1="191" x2="1998.1" y2="769" stroke="#2a7a7a" stroke-opacity="0.28" stroke-width="1.1"/>
<line x1="2012.2" y1="191" x2="2012.2" y2="769" stroke="#2a7a7a" stroke-opacity="0.28" stroke-width="1.1"/>
<line x1="2026.2" y1="191" x2="2026.2" y2="769" stroke="#2a7a7a" stroke-opacity="0.28" stroke-width="1.1"/>
<line x1="2040.3" y1="191" x2="2040.3" y2="769" stroke="#2a7a7a" stroke-opacity="0.28" stroke-width="1.1"/>
<line x1="2054.4" y1="191" x2="2054.4" y2="769" stroke="#2a7a7a" stroke-opacity="0.28" stroke-width="1.1"/>
<line x1="2068.4" y1="191" x2="2068.4" y2="769" stroke="#2a7a7a" stroke-opacity="0.28" stroke-width="1.1"/>
<line x1="2082.5" y1="191" x2="2082.5" y2="769" stroke="#2a7a7a" stroke-opacity="0.28" stroke-width="1.1"/>
<line x1="2096.5" y1="191" x2="2096.5" y2="769" stroke="#2a7a7a" stroke-opacity="0.28" stroke-width="1.1"/>
<line x1="2110.6" y1="191" x2="2110.6" y2="769" stroke="#2a7a7a" stroke-opacity="0.28" stroke-width="1.1"/>
<line x1="2124.7" y1="191" x2="2124.7" y2="769" stroke="#2a7a7a" stroke-opacity="0.28" stroke-width="1.1"/>
<line x1="2138.7" y1="191" x2="2138.7" y2="769" stroke="#2a7a7a" stroke-opacity="0.28" stroke-width="1.1"/>
<line x1="2152.8" y1="191" x2="2152.8" y2="769" stroke="#2a7a7a" stroke-opacity="0.28" stroke-width="1.1"/>
<line x1="2166.8" y1="191" x2="2166.8" y2="769" stroke="#2a7a7a" stroke-opacity="0.28" stroke-width="1.1"/>
<line x1="2180.9" y1="191" x2="2180.9" y2="769" stroke="#2a7a7a" stroke-opacity="0.28" stroke-width="1.1"/>
<line x1="2195.0" y1="191" x2="2195.0" y2="769" stroke="#2a7a7a" stroke-opacity="0.28" stroke-width="1.1"/>
<line x1="2209.0" y1="191" x2="2209.0" y2="769" stroke="#2a7a7a" stroke-opacity="0.28" stroke-width="1.1"/>
<line x1="2223.1" y1="191" x2="2223.1" y2="769" stroke="#2a7a7a" stroke-opacity="0.28" stroke-width="1.1"/>
<line x1="2237.1" y1="191" x2="2237.1" y2="769" stroke="#2a7a7a" stroke-opacity="0.28" stroke-width="1.1"/>
<line x1="2251.2" y1="191" x2="2251.2" y2="769" stroke="#2a7a7a" stroke-opacity="0.28" stroke-width="1.1"/>
<line x1="2265.3" y1="191" x2="2265.3" y2="769" stroke="#2a7a7a" stroke-opacity="0.28" stroke-width="1.1"/>
<line x1="2279.3" y1="191" x2="2279.3" y2="769" stroke="#2a7a7a" stroke-opacity="0.28" stroke-width="1.1"/>
<line x1="2293.4" y1="191" x2="2293.4" y2="769" stroke="#2a7a7a" stroke-opacity="0.28" stroke-width="1.1"/>
<line x1="2307.4" y1="191" x2="2307.4" y2="769" stroke="#2a7a7a" stroke-opacity="0.28" stroke-width="1.1"/>
<line x1="2321.5" y1="191" x2="2321.5" y2="769" stroke="#2a7a7a" stroke-opacity="0.28" stroke-width="1.1"/>
<line x1="2335.6" y1="191" x2="2335.6" y2="769" stroke="#2a7a7a" stroke-opacity="0.28" stroke-width="1.1"/>
<line x1="2349.6" y1="191" x2="2349.6" y2="769" stroke="#2a7a7a" stroke-opacity="0.28" stroke-width="1.1"/>
<line x1="2363.7" y1="191" x2="2363.7" y2="769" stroke="#2a7a7a" stroke-opacity="0.28" stroke-width="1.1"/>
<line x1="2377.7" y1="191" x2="2377.7" y2="769" stroke="#2a7a7a" stroke-opacity="0.28" stroke-width="1.1"/>
<line x1="2391.8" y1="191" x2="2391.8" y2="769" stroke="#2a7a7a" stroke-opacity="0.28" stroke-width="1.1"/>
<line x1="2405.9" y1="191" x2="2405.9" y2="769" stroke="#2a7a7a" stroke-opacity="0.28" stroke-width="1.1"/>
<line x1="2419.9" y1="191" x2="2419.9" y2="769" stroke="#2a7a7a" stroke-opacity="0.28" stroke-width="1.1"/>
<line x1="2434.0" y1="191" x2="2434.0" y2="769" stroke="#2a7a7a" stroke-opacity="0.28" stroke-width="1.1"/>
<line x1="2448.0" y1="191" x2="2448.0" y2="769" stroke="#2a7a7a" stroke-opacity="0.28" stroke-width="1.1"/>
<line x1="2462.1" y1="191" x2="2462.1" y2="769" stroke="#2a7a7a" stroke-opacity="0.28" stroke-width="1.1"/>
<line x1="2476.2" y1="191" x2="2476.2" y2="769" stroke="#2a7a7a" stroke-opacity="0.28" stroke-width="1.1"/>
<line x1="2490.2" y1="191" x2="2490.2" y2="769" stroke="#2a7a7a" stroke-opacity="0.28" stroke-width="1.1"/>
<line x1="2504.3" y1="191" x2="2504.3" y2="769" stroke="#2a7a7a" stroke-opacity="0.28" stroke-width="1.1"/>
<line x1="2518.3" y1="191" x2="2518.3" y2="769" stroke="#2a7a7a" stroke-opacity="0.28" stroke-width="1.1"/>
<line x1="2532.4" y1="191" x2="2532.4" y2="769" stroke="#2a7a7a" stroke-opacity="0.28" stroke-width="1.1"/>
<line x1="2546.5" y1="191" x2="2546.5" y2="769" stroke="#2a7a7a" stroke-opacity="0.28" stroke-width="1.1"/>
<line x1="2560.5" y1="191" x2="2560.5" y2="769" stroke="#2a7a7a" stroke-opacity="0.28" stroke-width="1.1"/>
<line x1="2574.6" y1="191" x2="2574.6" y2="769" stroke="#2a7a7a" stroke-opacity="0.28" stroke-width="1.1"/>
<line x1="2588.6" y1="191" x2="2588.6" y2="769" stroke="#2a7a7a" stroke-opacity="0.28" stroke-width="1.1"/>
<line x1="2602.7" y1="191" x2="2602.7" y2="769" stroke="#2a7a7a" stroke-opacity="0.28" stroke-width="1.1"/>
<line x1="2616.8" y1="191" x2="2616.8" y2="769" stroke="#2a7a7a" stroke-opacity="0.28" stroke-width="1.1"/>
<line x1="2630.8" y1="191" x2="2630.8" y2="769" stroke="#2a7a7a" stroke-opacity="0.28" stroke-width="1.1"/>
<line x1="2644.9" y1="191" x2="2644.9" y2="769" stroke="#2a7a7a" stroke-opacity="0.28" stroke-width="1.1"/>
<line x1="2658.9" y1="191" x2="2658.9" y2="769" stroke="#2a7a7a" stroke-opacity="0.28" stroke-width="1.1"/>
<line x1="2673.0" y1="191" x2="2673.0" y2="769" stroke="#2a7a7a" stroke-opacity="0.28" stroke-width="1.1"/>
<line x1="2687.1" y1="191" x2="2687.1" y2="769" stroke="#2a7a7a" stroke-opacity="0.28" stroke-width="1.1"/>
<line x1="1970.0" y1="405" x2="1970.0" y2="545" stroke="url(#bandline)" stroke-width="1.1"/>
<line x1="1984.1" y1="405" x2="1984.1" y2="545" stroke="url(#bandline)" stroke-width="1.1"/>
<line x1="1998.1" y1="405" x2="1998.1" y2="545" stroke="url(#bandline)" stroke-width="1.1"/>
<line x1="2012.2" y1="405" x2="2012.2" y2="545" stroke="url(#bandline)" stroke-width="1.1"/>
<line x1="2026.2" y1="405" x2="2026.2" y2="545" stroke="url(#bandline)" stroke-width="1.1"/>
<line x1="2040.3" y1="405" x2="2040.3" y2="545" stroke="url(#bandline)" stroke-width="1.1"/>
<line x1="2054.4" y1="405" x2="2054.4" y2="545" stroke="url(#bandline)" stroke-width="1.1"/>
<line x1="2068.4" y1="405" x2="2068.4" y2="545" stroke="url(#bandline)" stroke-width="1.1"/>
<line x1="2082.5" y1="405" x2="2082.5" y2="545" stroke="url(#bandline)" stroke-width="1.1"/>
<line x1="2096.5" y1="405" x2="2096.5" y2="545" stroke="url(#bandline)" stroke-width="1.1"/>
<line x1="2110.6" y1="405" x2="2110.6" y2="545" stroke="url(#bandline)" stroke-width="1.1"/>
<line x1="2124.7" y1="405" x2="2124.7" y2="545" stroke="url(#bandline)" stroke-width="1.1"/>
<line x1="2138.7" y1="405" x2="2138.7" y2="545" stroke="url(#bandline)" stroke-width="1.1"/>
<line x1="2152.8" y1="405" x2="2152.8" y2="545" stroke="url(#bandline)" stroke-width="1.1"/>
<line x1="2166.8" y1="405" x2="2166.8" y2="545" stroke="url(#bandline)" stroke-width="1.1"/>
<line x1="2180.9" y1="405" x2="2180.9" y2="545" stroke="url(#bandline)" stroke-width="1.1"/>
<line x1="2195.0" y1="405" x2="2195.0" y2="545" stroke="url(#bandline)" stroke-width="1.1"/>
<line x1="2209.0" y1="405" x2="2209.0" y2="545" stroke="url(#bandline)" stroke-width="1.1"/>
<line x1="2223.1" y1="405" x2="2223.1" y2="545" stroke="url(#bandline)" stroke-width="1.1"/>
<line x1="2237.1" y1="405" x2="2237.1" y2="545" stroke="url(#bandline)" stroke-width="1.1"/>
<line x1="2251.2" y1="405" x2="2251.2" y2="545" stroke="url(#bandline)" stroke-width="1.1"/>
<line x1="2265.3" y1="405" x2="2265.3" y2="545" stroke="url(#bandline)" stroke-width="1.1"/>
<line x1="2279.3" y1="405" x2="2279.3" y2="545" stroke="url(#bandline)" stroke-width="1.1"/>
<line x1="2293.4" y1="405" x2="2293.4" y2="545" stroke="url(#bandline)" stroke-width="1.1"/>
<line x1="2307.4" y1="405" x2="2307.4" y2="545" stroke="url(#bandline)" stroke-width="1.1"/>
<line x1="2321.5" y1="405" x2="2321.5" y2="545" stroke="url(#bandline)" stroke-width="1.1"/>
<line x1="2335.6" y1="405" x2="2335.6" y2="545" stroke="url(#bandline)" stroke-width="1.1"/>
<line x1="2349.6" y1="405" x2="2349.6" y2="545" stroke="url(#bandline)" stroke-width="1.1"/>
<line x1="2363.7" y1="405" x2="2363.7" y2="545" stroke="url(#bandline)" stroke-width="1.1"/>
<line x1="2377.7" y1="405" x2="2377.7" y2="545" stroke="url(#bandline)" stroke-width="1.1"/>
<line x1="2391.8" y1="405" x2="2391.8" y2="545" stroke="url(#bandline)" stroke-width="1.1"/>
<line x1="2405.9" y1="405" x2="2405.9" y2="545" stroke="url(#bandline)" stroke-width="1.1"/>
<line x1="2419.9" y1="405" x2="2419.9" y2="545" stroke="url(#bandline)" stroke-width="1.1"/>
<line x1="2434.0" y1="405" x2="2434.0" y2="545" stroke="url(#bandline)" stroke-width="1.1"/>
<line x1="2448.0" y1="405" x2="2448.0" y2="545" stroke="url(#bandline)" stroke-width="1.1"/>
<line x1="2462.1" y1="405" x2="2462.1" y2="545" stroke="url(#bandline)" stroke-width="1.1"/>
<line x1="2476.2" y1="405" x2="2476.2" y2="545" stroke="url(#bandline)" stroke-width="1.1"/>
<line x1="2490.2" y1="405" x2="2490.2" y2="545" stroke="url(#bandline)" stroke-width="1.1"/>
<line x1="2504.3" y1="405" x2="2504.3" y2="545" stroke="url(#bandline)" stroke-width="1.1"/>
<line x1="2518.3" y1="405" x2="2518.3" y2="545" stroke="url(#bandline)" stroke-width="1.1"/>
<line x1="2532.4" y1="405" x2="2532.4" y2="545" stroke="url(#bandline)" stroke-width="1.1"/>
<line x1="2546.5" y1="405" x2="2546.5" y2="545" stroke="url(#bandline)" stroke-width="1.1"/>
<line x1="2560.5" y1="405" x2="2560.5" y2="545" stroke="url(#bandline)" stroke-width="1.1"/>
<line x1="2574.6" y1="405" x2="2574.6" y2="545" stroke="url(#bandline)" stroke-width="1.1"/>
<line x1="2588.6" y1="405" x2="2588.6" y2="545" stroke="url(#bandline)" stroke-width="1.1"/>
<line x1="2602.7" y1="405" x2="2602.7" y2="545" stroke="url(#bandline)" stroke-width="1.1"/>
<line x1="2616.8" y1="405" x2="2616.8" y2="545" stroke="url(#bandline)" stroke-width="1.1"/>
<line x1="2630.8" y1="405" x2="2630.8" y2="545" stroke="url(#bandline)" stroke-width="1.1"/>
<line x1="2644.9" y1="405" x2="2644.9" y2="545" stroke="url(#bandline)" stroke-width="1.1"/>
<line x1="2658.9" y1="405" x2="2658.9" y2="545" stroke="url(#bandline)" stroke-width="1.1"/>
<line x1="2673.0" y1="405" x2="2673.0" y2="545" stroke="url(#bandline)" stroke-width="1.1"/>
<line x1="2687.1" y1="405" x2="2687.1" y2="545" stroke="url(#bandline)" stroke-width="1.1"/>
<g filter="url(#pblur)" opacity="0.8"><path fill="rgb(76,76,69)" d="M2421 515l0 4l-4 4l-2 -4l3 -5zM2011 491l-2 3l-2 0l-1 -2l3 -2zM2595 431l-1 -3l2 -1l1 1l-1 2zM2427 520l0 2l-3 1l-2 -1l2 -3zM2520 496l-2 1l-2 -1l0 -3l4 0zM2398 482l2 3l-3 5l-4 -1l1 -5zM2286 494l4 5l-2 3l-5 1l0 -4zM2649 456l1 4l-1 2l-2 -2l0 -2zM2102 431l1 -2l7 -1l0 2l-4 2zM2173 431l2 -3l4 -1l2 3l-3 2zM2004 518l3 0l3 3l-1 3l-5 0z"/>
<path fill="rgb(108,108,99)" d="M1930 443l4 0l4 3l-4 2l-4 -1zM2026 488l4 5l0 6l-2 1l-4 -8zM2486 447l3 -2l2 1l0 2l-5 0zM2285 460l-2 -4l3 -4l3 2l-2 5zM2213 471l2 1l1 4l-2 0l-1 -3zM2201 446l0 -3l2 -4l2 2l0 3zM2351 494l2 -6l5 0l3 4l-7 4zM2089 433l0 -3l1 -3l2 2l-2 4zM2089 471l2 0l2 2l-2 2l-3 -2zM1929 494l-1 1l-3 0l1 -3l3 0zM2541 472l1 -1l3 -1l0 3l-2 1zM2230 486l4 0l3 3l-3 2l-3 -2zM2480 474l-7 -2l1 -7l5 1l2 5zM2605 443l3 0l-1 6l-4 -1l1 -4zM2541 491l2 1l2 2l-1 3l-4 -3zM2620 455l-1 -2l1 -2l2 0l1 3zM2623 466l1 3l-1 4l-1 -1l-1 -2zM1957 511l0 -3l4 -3l3 4l-2 3zM1959 473l-2 1l-1 -1l-1 -2l3 1zM1970 458l1 -2l4 -1l1 3l-2 1zM2429 468l-1 3l-1 0l-1 0l1 -2zM2196 507l3 1l1 2l-3 2l-2 -2zM2137 487l0 4l-3 4l-1 -2l2 -5zM2673 465l1 -3l5 0l0 1l-2 3zM2549 490l0 -4l2 -4l4 1l-2 5zM2520 466l2 3l-1 3l-3 0l0 -3zM2690 479l-3 0l-3 -4l3 -1l3 2z"/>
<path fill="rgb(141,140,130)" d="M2267 493l-2 -2l2 -4l2 1l0 3zM2167 494l-1 1l-3 -2l2 -2l2 1zM2143 450l-2 1l-2 -2l1 -1l3 1zM2348 508l-1 -3l3 -3l3 2l-3 4zM2495 518l-2 -2l2 -2l2 1l1 2zM2372 487l0 3l-2 1l-2 -1l2 -2zM2479 439l0 2l-2 2l-2 -2l1 -1zM1969 455l-1 3l-4 0l-1 -3l4 -2zM2028 487l2 3l-1 3l-3 0l-1 -3zM2291 434l4 -2l7 2l-2 2l-6 1zM1987 499l-4 1l-1 -3l1 -4l4 2zM2431 456l-2 2l-2 0l0 -3l3 -1zM2525 500l-3 -1l-1 -9l3 -1l4 6zM2582 502l5 2l1 3l-3 2l-2 -4zM2494 510l-2 -3l1 -5l3 0l0 5zM2197 495l3 2l0 4l-3 0l-1 -1zM2659 460l-4 -2l-2 -4l4 1l2 2zM2479 454l0 3l-9 3l-1 -6l6 -2zM1974 464l2 -1l1 1l0 1l-2 0zM2053 428l-2 4l-6 2l-3 -3l5 -4zM2154 444l1 -3l3 1l0 2l-2 1zM2009 503l3 0l2 3l-1 2l-4 -1zM2244 456l0 -3l3 -2l3 2l-3 3zM2237 501l-3 -2l4 -6l4 2l-2 6zM2018 495l-2 1l-3 -2l0 -3l5 1zM2468 478l2 -1l1 2l0 2l-3 -1zM2646 514l-1 -2l-1 -3l3 -2l1 5zM2051 521l-4 2l-9 -2l2 -4l8 1zM2103 464l3 2l0 3l-2 0l-2 -2zM2130 491l1 3l-2 3l-3 -1l2 -3zM2141 511l-1 -1l1 -2l1 1l0 2zM2192 450l0 2l-1 2l-2 -1l1 -2zM2682 469l-2 -2l1 -2l2 -1l1 4zM2641 522l-3 0l-2 -1l-1 -2l4 -1zM2649 503l-3 4l-5 1l-1 -4l5 -3zM2413 500l0 3l-2 0l-1 0l1 -3zM2353 472l-6 1l-5 -3l4 -3l3 1zM2545 439l-3 -4l2 -6l3 3l1 5zM2664 477l-2 -3l1 -2l3 0l-1 3zM2125 441l-5 4l-4 -2l1 -4l5 -1zM2047 504l2 -1l0 -1l2 2l-1 1zM2155 482l6 0l1 3l-2 6l-5 -4z"/>
<path fill="rgb(173,172,160)" d="M2528 480l8 2l4 5l-7 3l-7 -6zM2190 512l-3 2l-1 -2l0 -2l3 0zM2702 450l5 2l-2 6l-5 0l0 -6zM2555 474l-3 2l-3 0l1 -4l3 0zM2019 468l0 -2l4 -1l2 1l-3 4zM2180 475l-3 3l-3 -1l-2 -3l7 -1zM2355 510l3 -9l7 -2l4 6l-7 7zM2513 461l0 -5l4 -3l3 2l-2 6zM2671 516l2 -1l2 1l0 2l-2 0zM2337 499l2 3l-3 5l-3 -1l1 -8zM2602 483l-1 -2l2 -3l2 1l0 4zM2539 513l-2 4l-4 2l-3 -5l4 -4zM1982 468l0 3l-4 0l0 -2l3 -1zM2412 451l-7 1l-4 -8l4 -6l9 9zM1922 486l-1 -3l0 -5l3 -1l2 7zM2393 520l-5 -1l0 -5l2 0l3 4zM1932 495l-5 0l0 -6l2 -3l4 5zM2203 441l3 2l0 3l-3 1l-2 -3zM1961 519l2 -1l2 1l-2 2l-2 -1zM2611 491l0 2l-2 2l-1 -2l0 -2zM2573 471l-1 1l-4 1l0 -2l2 -1zM2299 461l0 -2l3 -1l1 1l-1 2zM2471 520l-3 0l-1 -1l1 -2l2 2zM2085 506l-2 4l-3 -1l-2 -1l4 -4zM2025 452l-4 0l-2 -3l3 -2l3 2zM2004 477l-1 -2l3 -3l1 2l-2 3zM1942 431l-3 -3l1 -2l4 1l0 3zM2518 482l3 0l3 4l-3 2l-3 -3zM2534 442l4 -8l9 -5l6 5l-13 9zM2577 522l-1 -2l2 -1l1 1l-1 2z"/></g>
<line x1="2391.8" y1="191" x2="2391.8" y2="769" stroke="#22c8d2" stroke-width="3.2"/>
<line x1="2616.5" y1="191" x2="2616.5" y2="769" stroke="#1eb4b4" stroke-width="2.2"/>
<line x1="2672.5" y1="191" x2="2672.5" y2="769" stroke="#1eb4b4" stroke-width="2.2"/>
<path d="M2619,434 C2640,448 2668,462 2671.5,481 C2670,498 2640,512 2618,531" fill="none" stroke="#1ea8a0" stroke-width="2"/>
<path d="M2388.3,425.5 L2395.3,432.5 M2388.3,432.5 L2395.3,425.5" stroke="#ff2020" stroke-width="2.5"/>
<path d="M2388.3,475.1 L2395.3,482.1 M2388.3,482.1 L2395.3,475.1" stroke="#ff2020" stroke-width="2.5"/>
<path d="M2388.3,531.0 L2395.3,538.0 M2388.3,538.0 L2395.3,531.0" stroke="#ff2020" stroke-width="2.5"/>
<path d="M2386,491 L2391.8,485.5 L2397.6,491" fill="none" stroke="#22c8d2" stroke-width="2.2"/>
<rect x="2393.5" y="536" width="11.5" height="20" fill="#e0e0e0"/>
<text x="2399.2" y="551.5" font-size="15" text-anchor="middle" fill="#333">2</text>
<path d="M2384.5,767 A7,7 0 0 0 2399,767 Z" fill="#e02020"/>
<text transform="translate(2607.5,253) rotate(-90)" font-size="16" fill="#d0d0d0" fill-opacity="0.8">20.95µm</text>
<text transform="translate(2690,244) rotate(-90)" font-size="16" fill="#d0d0d0" fill-opacity="0.8">5.45µm</text>
<line x1="2049" y1="237" x2="2078" y2="237" stroke="#ddd" stroke-opacity="0.7" stroke-width="2"/>
<rect x="1923" y="163" width="4" height="608" fill="#a0a0a0"/>
<rect x="1079" y="769" width="1620" height="4" fill="#b0b0b0"/>
<g stroke="#5c5c5c" stroke-width="2" fill="none">
<line x1="1127" y1="825.5" x2="2671" y2="825.5"/>
<line x1="2671" y1="825" x2="2671" y2="1312"/>
<line x1="1122" y1="1288.2" x2="2671" y2="1288.2"/>
<line x1="1122" y1="1310.5" x2="2671" y2="1310.5"/>
<line x1="1127.3" y1="825" x2="1127.3" y2="1315"/>
<line x1="1122" y1="826.6" x2="1127" y2="826.6"/>
<line x1="1122" y1="867.4" x2="1127" y2="867.4"/>
<line x1="1122" y1="897.5" x2="1127" y2="897.5"/>
<line x1="1122" y1="927.5" x2="1127" y2="927.5"/>
<line x1="1122" y1="957.6" x2="1127" y2="957.6"/>
<line x1="1122" y1="987.6" x2="1127" y2="987.6"/>
<line x1="1122" y1="1017.6" x2="1127" y2="1017.6"/>
<line x1="1122" y1="1047.7" x2="1127" y2="1047.7"/>
<line x1="1122" y1="1077.7" x2="1127" y2="1077.7"/>
<line x1="1122" y1="1107.8" x2="1127" y2="1107.8"/>
<line x1="1122" y1="1137.8" x2="1127" y2="1137.8"/>
<line x1="1122" y1="1167.8" x2="1127" y2="1167.8"/>
<line x1="1122" y1="1197.9" x2="1127" y2="1197.9"/>
<line x1="1122" y1="1227.9" x2="1127" y2="1227.9"/>
<line x1="1122" y1="1258.0" x2="1127" y2="1258.0"/>
<line x1="1122" y1="1288.0" x2="1127" y2="1288.0"/>
<line x1="1122" y1="1309.9" x2="1127" y2="1309.9"/>
<line x1="1127.3" y1="1310.5" x2="1127.3" y2="1315.5"/>
<line x1="1174.1" y1="1310.5" x2="1174.1" y2="1315.5"/>
<line x1="1221.0" y1="1310.5" x2="1221.0" y2="1315.5"/>
<line x1="1267.8" y1="1310.5" x2="1267.8" y2="1315.5"/>
<line x1="1314.7" y1="1310.5" x2="1314.7" y2="1315.5"/>
<line x1="1385.0" y1="1310.5" x2="1385.0" y2="1315.5"/>
<line x1="1455.2" y1="1310.5" x2="1455.2" y2="1315.5"/>
<line x1="1525.5" y1="1310.5" x2="1525.5" y2="1315.5"/>
<line x1="1595.8" y1="1310.5" x2="1595.8" y2="1315.5"/>
<line x1="1666.0" y1="1310.5" x2="1666.0" y2="1315.5"/>
<line x1="1736.3" y1="1310.5" x2="1736.3" y2="1315.5"/>
<line x1="1806.6" y1="1310.5" x2="1806.6" y2="1315.5"/>
<line x1="1876.8" y1="1310.5" x2="1876.8" y2="1315.5"/>
<line x1="1947.1" y1="1310.5" x2="1947.1" y2="1315.5"/>
<line x1="2017.4" y1="1310.5" x2="2017.4" y2="1315.5"/>
<line x1="2087.6" y1="1310.5" x2="2087.6" y2="1315.5"/>
<line x1="2157.9" y1="1310.5" x2="2157.9" y2="1315.5"/>
<line x1="2228.2" y1="1310.5" x2="2228.2" y2="1315.5"/>
<line x1="2298.4" y1="1310.5" x2="2298.4" y2="1315.5"/>
<line x1="2368.7" y1="1310.5" x2="2368.7" y2="1315.5"/>
<line x1="2439.0" y1="1310.5" x2="2439.0" y2="1315.5"/>
<line x1="2509.3" y1="1310.5" x2="2509.3" y2="1315.5"/>
<line x1="2579.5" y1="1310.5" x2="2579.5" y2="1315.5"/>
<line x1="2671.0" y1="1310.5" x2="2671.0" y2="1315.5"/>
</g>
<line x1="2349.5" y1="825" x2="2349.5" y2="1313" stroke="#3c3c3c" stroke-width="2.5"/>
<g font-size="15.5" fill="#c4c4c4" clip-path="url(#blkclip)">
<text x="1117.5" y="832.1" text-anchor="end">30.72</text>
<text x="1117.5" y="872.9" text-anchor="end">28.00</text>
<text x="1117.5" y="903.0" text-anchor="end">26.00</text>
<text x="1117.5" y="933.0" text-anchor="end">24.00</text>
<text x="1117.5" y="963.1" text-anchor="end">22.00</text>
<text x="1117.5" y="993.1" text-anchor="end">20.00</text>
<text x="1117.5" y="1023.1" text-anchor="end">18.00</text>
<text x="1117.5" y="1053.2" text-anchor="end">16.00</text>
<text x="1117.5" y="1083.2" text-anchor="end">14.00</text>
<text x="1117.5" y="1113.3" text-anchor="end">12.00</text>
<text x="1117.5" y="1143.3" text-anchor="end">10.00</text>
<text x="1117.5" y="1173.3" text-anchor="end">8.00</text>
<text x="1117.5" y="1203.4" text-anchor="end">6.00</text>
<text x="1117.5" y="1233.4" text-anchor="end">4.00</text>
<text x="1117.5" y="1263.5" text-anchor="end">2.00</text>
<text x="1117.5" y="1293.5" text-anchor="end">0.00</text>
<text x="1117.5" y="1315.4" text-anchor="end">-1.46</text>
<text x="1127.3" y="1331.8" text-anchor="middle">0.00</text>
<text x="1174.1" y="1331.8" text-anchor="middle">20.00</text>
<text x="1221.0" y="1331.8" text-anchor="middle">40.00</text>
<text x="1267.8" y="1331.8" text-anchor="middle">60.00</text>
<text x="1314.7" y="1331.8" text-anchor="middle">80.00</text>
<text x="1385.0" y="1331.8" text-anchor="middle">110.00</text>
<text x="1455.2" y="1331.8" text-anchor="middle">140.00</text>
<text x="1525.5" y="1331.8" text-anchor="middle">170.00</text>
<text x="1595.8" y="1331.8" text-anchor="middle">200.00</text>
<text x="1666.0" y="1331.8" text-anchor="middle">230.00</text>
<text x="1736.3" y="1331.8" text-anchor="middle">260.00</text>
<text x="1806.6" y="1331.8" text-anchor="middle">290.00</text>
<text x="1876.8" y="1331.8" text-anchor="middle">320.00</text>
<text x="1947.1" y="1331.8" text-anchor="middle">350.00</text>
<text x="2017.4" y="1331.8" text-anchor="middle">380.00</text>
<text x="2087.6" y="1331.8" text-anchor="middle">410.00</text>
<text x="2157.9" y="1331.8" text-anchor="middle">440.00</text>
<text x="2228.2" y="1331.8" text-anchor="middle">470.00</text>
<text x="2298.4" y="1331.8" text-anchor="middle">500.00</text>
<text x="2368.7" y="1331.8" text-anchor="middle">530.00</text>
<text x="2439.0" y="1331.8" text-anchor="middle">560.00</text>
<text x="2509.3" y="1331.8" text-anchor="middle">590.00</text>
<text x="2579.5" y="1331.8" text-anchor="middle">620.00</text>
<text x="2671.0" y="1331.8" text-anchor="middle">659.06</text>
<text x="1130" y="821" font-size="16">µm</text>
<text x="2673" y="1306" font-size="16">µm</text>
</g>
<line x1="1127" y1="1123" x2="2671" y2="944.7" stroke="#553a1c" stroke-width="1.5"/>
<path d="M1127.5,974.2 C1132.4,974.1 1145.8,973.1 1157.0,973.3 C1168.2,973.5 1182.0,974.6 1194.5,975.2 C1207.0,975.8 1216.4,976.5 1232.0,977.0 C1247.6,977.5 1272.5,977.5 1288.0,978.0 C1303.5,978.5 1312.7,979.4 1325.0,980.2 C1337.3,981.0 1349.5,982.4 1362.0,982.6 C1374.5,982.9 1384.5,982.2 1400.0,981.7 C1415.5,981.2 1436.5,980.4 1455.0,979.8 C1473.5,979.2 1495.4,978.3 1511.0,978.0 C1526.6,977.7 1537.6,977.7 1548.5,978.0 C1559.4,978.3 1569.3,978.8 1576.5,979.8 C1583.7,980.8 1587.0,982.1 1591.5,983.8 C1596.0,985.5 1600.1,987.7 1603.4,990.0 C1606.7,992.3 1608.6,993.2 1611.5,997.7 C1614.4,1002.2 1618.2,1009.7 1621.0,1016.7 C1623.8,1023.8 1625.7,1032.0 1628.3,1040.0 C1630.9,1048.0 1633.6,1055.3 1636.7,1065.0 C1639.8,1074.7 1643.4,1087.8 1646.7,1098.4 C1650.0,1109.0 1653.4,1118.1 1656.7,1128.4 C1660.0,1138.7 1663.4,1150.9 1666.7,1160.1 C1670.0,1169.3 1673.4,1177.1 1676.7,1183.5 C1680.0,1189.9 1682.7,1194.8 1686.7,1198.5 C1690.7,1202.2 1696.5,1205.2 1700.9,1206.0 C1705.4,1206.8 1709.1,1206.1 1713.4,1203.5 C1717.7,1200.9 1722.3,1195.8 1726.8,1190.2 C1731.2,1184.6 1735.6,1178.4 1740.1,1170.1 C1744.5,1161.8 1749.3,1151.2 1753.5,1140.1 C1757.7,1129.0 1761.8,1114.5 1765.1,1103.4 C1768.4,1092.3 1770.7,1084.0 1773.5,1073.4 C1776.3,1062.8 1778.8,1049.8 1781.8,1040.0 C1784.8,1030.2 1788.0,1021.8 1791.5,1014.8 C1795.0,1007.8 1799.2,1002.0 1803.0,997.7 C1806.8,993.4 1810.3,991.3 1814.3,989.0 C1818.2,986.7 1822.2,985.0 1826.7,983.8 C1831.2,982.5 1833.1,982.0 1841.0,981.5 C1848.9,981.0 1858.7,980.8 1874.0,980.5 C1889.3,980.2 1907.7,980.1 1933.0,979.8 C1958.3,979.5 1994.9,979.0 2026.0,978.9 C2057.1,978.8 2097.7,979.0 2119.5,978.9 C2141.3,978.8 2138.4,978.3 2157.0,978.0 C2175.6,977.7 2212.4,977.5 2231.0,977.0 C2249.6,976.5 2259.6,975.8 2268.5,975.2 C2277.4,974.6 2281.8,973.6 2284.4,973.3" fill="none" stroke="#24665f" stroke-width="2.2"/>
<g stroke="#555" stroke-width="1.6">
<line x1="1603.6" y1="943.4" x2="1603.6" y2="989.7"/>
<line x1="1814.5" y1="943.4" x2="1814.5" y2="989.7"/>
<line x1="1701" y1="1206" x2="2332" y2="1206"/>
<line x1="2283.5" y1="973.2" x2="2332" y2="973.2"/>
</g>
<line x1="1619" y1="943.4" x2="1799" y2="943.4" stroke="#f01818" stroke-width="4"/>
<path d="M1603.6,943.4 L1621,935.4 L1621,951.4 Z M1814.5,943.4 L1797,935.4 L1797,951.4 Z" fill="#f01818"/>
<line x1="2332" y1="988" x2="2332" y2="1192" stroke="#f01818" stroke-width="4"/>
<path d="M2332,973.2 L2324,990 L2340,990 Z M2332,1206 L2324,1189 L2340,1189 Z" fill="#f01818"/>
<rect x="2270" y="1094" width="130" height="26" fill="#000"/>
<text x="1597" y="928.5" font-size="23" fill="#e0d81c" textLength="124" lengthAdjust="spacingAndGlyphs">[2]90.15µm</text>
<text x="2273" y="1115" font-size="23" fill="#e0d81c" textLength="125" lengthAdjust="spacingAndGlyphs">[1]15.49µm</text>
<path d="M1597.9,984.5 L1608.9,995.5 M1597.9,995.5 L1608.9,984.5" stroke="#f01818" stroke-width="2.6"/>
<path d="M1808.8,983.5 L1819.8,994.5 M1808.8,994.5 L1819.8,983.5" stroke="#f01818" stroke-width="2.6"/>
<path d="M1695.4,1200.5 L1706.4,1211.5 M1695.4,1211.5 L1706.4,1200.5" stroke="#f01818" stroke-width="2.6"/>
<path d="M2278.9,967.8 L2289.9,978.8 M2278.9,978.8 L2289.9,967.8" stroke="#f01818" stroke-width="2.6"/>
<path d="M2671.5,970 C2663,972 2659.5,1000 2659.5,1031 C2659.5,1062 2663,1090 2671.5,1092 Z" fill="#8a8a8a"/>
<path d="M2663,1025.5 L2669.5,1031 L2663,1036.5" fill="none" stroke="#f01818" stroke-width="3.2"/>
</svg></body></html>
